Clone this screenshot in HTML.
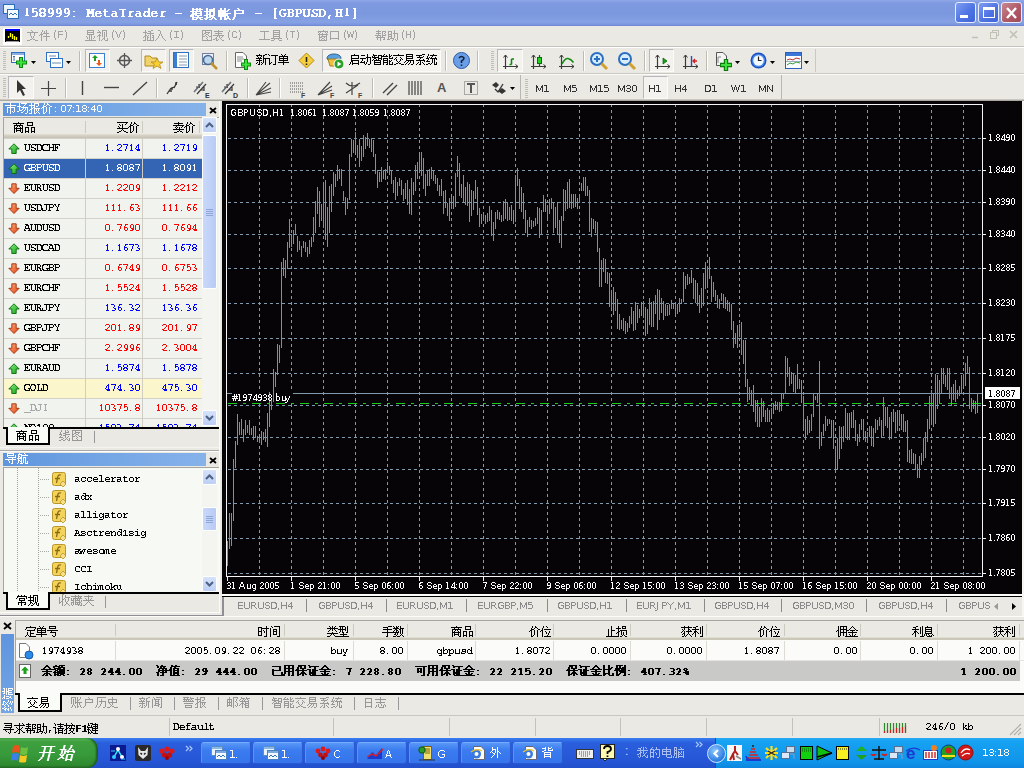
<!DOCTYPE html><html><head><meta charset="utf-8"><title>MetaTrader</title><style>
*{box-sizing:border-box}
body{margin:0;width:1024px;height:768px;overflow:hidden;position:relative;background:#eae9e4;font-family:"Liberation Sans",sans-serif;font-size:11px;color:#000}
.a{position:absolute}
.m{font-family:'Liberation Mono',monospace}
.t{white-space:pre;line-height:1}
</style></head><body>
<div class="a" style="left:0px;top:0px;width:1024px;height:26px;background:linear-gradient(#8ea8e8 0,#7f9ae0 3px,#7b97de 55%,#87a2e4 85%,#7a94dc 96%,#6680d4 100%)"></div>
<svg class="a" style="left:22px;top:4px" width="342" height="21"><path d="M4 4h2v1h-2zM10 4h5v1h-5zM18 4h5v1h-5zM27 4h4v1h-4zM35 4h4v1h-4zM43 4h4v1h-4zM126 4h2v1h-2zM170 4h2v1h-2zM174 4h2v1h-2zM177 4h2v1h-2zM184 4h2v1h-2zM191 4h2v1h-2zM198 4h2v1h-2zM202 4h2v1h-2zM215 4h2v1h-2zM252 4h3v1h-3zM324 4h2v1h-2zM331 4h3v1h-3zM4 5h2v1h-2zM10 5h2v1h-2zM17 5h3v1h-3zM21 5h3v1h-3zM26 5h2v1h-2zM29 5h2v1h-2zM34 5h2v1h-2zM37 5h2v1h-2zM42 5h2v1h-2zM45 5h2v1h-2zM64 5h4v1h-4zM69 5h4v1h-4zM82 5h2v1h-2zM97 5h7v1h-7zM126 5h2v1h-2zM170 5h11v1h-11zM184 5h2v1h-2zM187 5h6v1h-6zM198 5h2v1h-2zM202 5h2v1h-2zM206 5h2v1h-2zM216 5h2v1h-2zM252 5h2v1h-2zM259 5h5v1h-5zM265 5h6v1h-6zM273 5h6v1h-6zM280 5h4v1h-4zM285 5h4v1h-4zM291 5h11v1h-11zM313 5h8v1h-8zM324 5h2v1h-2zM332 5h2v1h-2zM4 6h2v1h-2zM10 6h2v1h-2zM17 6h2v1h-2zM22 6h2v1h-2zM26 6h2v1h-2zM30 6h2v1h-2zM34 6h2v1h-2zM38 6h2v1h-2zM42 6h2v1h-2zM46 6h2v1h-2zM65 6h3v1h-3zM69 6h3v1h-3zM82 6h2v1h-2zM100 6h2v1h-2zM126 6h2v1h-2zM170 6h2v1h-2zM174 6h2v1h-2zM177 6h2v1h-2zM184 6h2v1h-2zM187 6h6v1h-6zM196 6h8v1h-8zM205 6h2v1h-2zM212 6h10v1h-10zM252 6h2v1h-2zM258 6h2v1h-2zM261 6h3v1h-3zM266 6h2v1h-2zM270 6h2v1h-2zM274 6h2v1h-2zM278 6h2v1h-2zM281 6h2v1h-2zM286 6h2v1h-2zM290 6h2v1h-2zM294 6h2v1h-2zM297 6h2v1h-2zM301 6h2v1h-2zM314 6h2v1h-2zM318 6h2v1h-2zM324 6h2v1h-2zM332 6h2v1h-2zM4 7h2v1h-2zM10 7h5v1h-5zM17 7h2v1h-2zM22 7h2v1h-2zM26 7h2v1h-2zM30 7h2v1h-2zM34 7h2v1h-2zM38 7h2v1h-2zM42 7h2v1h-2zM46 7h2v1h-2zM51 7h2v1h-2zM65 7h7v1h-7zM74 7h5v1h-5zM81 7h5v1h-5zM90 7h4v1h-4zM100 7h2v1h-2zM107 7h5v1h-5zM114 7h4v1h-4zM122 7h6v1h-6zM130 7h5v1h-5zM139 7h5v1h-5zM168 7h12v1h-12zM182 7h11v1h-11zM196 7h10v1h-10zM212 7h2v1h-2zM220 7h2v1h-2zM252 7h2v1h-2zM257 7h2v1h-2zM266 7h2v1h-2zM270 7h2v1h-2zM274 7h2v1h-2zM278 7h2v1h-2zM281 7h2v1h-2zM286 7h2v1h-2zM290 7h2v1h-2zM297 7h2v1h-2zM302 7h2v1h-2zM314 7h2v1h-2zM318 7h2v1h-2zM324 7h2v1h-2zM332 7h2v1h-2zM4 8h2v1h-2zM10 8h2v1h-2zM14 8h2v1h-2zM18 8h5v1h-5zM26 8h2v1h-2zM29 8h3v1h-3zM34 8h2v1h-2zM37 8h3v1h-3zM42 8h2v1h-2zM45 8h3v1h-3zM65 8h7v1h-7zM73 8h2v1h-2zM77 8h2v1h-2zM82 8h2v1h-2zM93 8h2v1h-2zM100 8h2v1h-2zM107 8h3v1h-3zM117 8h2v1h-2zM122 8h2v1h-2zM125 8h3v1h-3zM129 8h2v1h-2zM133 8h2v1h-2zM139 8h3v1h-3zM170 8h2v1h-2zM173 8h2v1h-2zM178 8h2v1h-2zM184 8h2v1h-2zM187 8h2v1h-2zM191 8h2v1h-2zM196 8h8v1h-8zM212 8h2v1h-2zM220 8h2v1h-2zM252 8h2v1h-2zM257 8h2v1h-2zM266 8h5v1h-5zM274 8h2v1h-2zM278 8h2v1h-2zM281 8h2v1h-2zM286 8h2v1h-2zM291 8h2v1h-2zM297 8h2v1h-2zM302 8h2v1h-2zM314 8h6v1h-6zM324 8h2v1h-2zM332 8h2v1h-2zM4 9h2v1h-2zM14 9h2v1h-2zM17 9h3v1h-3zM21 9h3v1h-3zM27 9h5v1h-5zM35 9h5v1h-5zM43 9h5v1h-5zM65 9h7v1h-7zM73 9h7v1h-7zM82 9h2v1h-2zM90 9h5v1h-5zM100 9h2v1h-2zM107 9h2v1h-2zM114 9h5v1h-5zM121 9h2v1h-2zM126 9h2v1h-2zM129 9h7v1h-7zM139 9h2v1h-2zM153 9h7v1h-7zM170 9h10v1h-10zM184 9h2v1h-2zM187 9h2v1h-2zM191 9h2v1h-2zM196 9h13v1h-13zM212 9h10v1h-10zM233 9h7v1h-7zM252 9h2v1h-2zM257 9h2v1h-2zM261 9h4v1h-4zM266 9h2v1h-2zM270 9h2v1h-2zM274 9h5v1h-5zM281 9h2v1h-2zM286 9h2v1h-2zM292 9h4v1h-4zM297 9h2v1h-2zM302 9h2v1h-2zM314 9h2v1h-2zM318 9h2v1h-2zM324 9h2v1h-2zM332 9h2v1h-2zM4 10h2v1h-2zM14 10h2v1h-2zM17 10h2v1h-2zM22 10h2v1h-2zM30 10h2v1h-2zM38 10h2v1h-2zM46 10h2v1h-2zM65 10h2v1h-2zM70 10h2v1h-2zM73 10h2v1h-2zM82 10h2v1h-2zM89 10h2v1h-2zM93 10h2v1h-2zM100 10h2v1h-2zM107 10h2v1h-2zM113 10h2v1h-2zM117 10h2v1h-2zM121 10h2v1h-2zM126 10h2v1h-2zM129 10h2v1h-2zM139 10h2v1h-2zM169 10h6v1h-6zM178 10h2v1h-2zM184 10h5v1h-5zM191 10h2v1h-2zM196 10h10v1h-10zM212 10h2v1h-2zM252 10h2v1h-2zM257 10h2v1h-2zM262 10h2v1h-2zM266 10h2v1h-2zM270 10h2v1h-2zM274 10h2v1h-2zM281 10h2v1h-2zM286 10h2v1h-2zM289 10h2v1h-2zM294 10h2v1h-2zM297 10h2v1h-2zM302 10h2v1h-2zM314 10h2v1h-2zM318 10h2v1h-2zM324 10h2v1h-2zM332 10h2v1h-2zM3 11h4v1h-4zM13 11h3v1h-3zM17 11h3v1h-3zM21 11h3v1h-3zM29 11h2v1h-2zM37 11h2v1h-2zM45 11h2v1h-2zM65 11h2v1h-2zM70 11h2v1h-2zM73 11h2v1h-2zM78 11h2v1h-2zM82 11h2v1h-2zM89 11h2v1h-2zM93 11h2v1h-2zM100 11h2v1h-2zM107 11h2v1h-2zM113 11h2v1h-2zM117 11h2v1h-2zM121 11h3v1h-3zM125 11h3v1h-3zM129 11h2v1h-2zM134 11h2v1h-2zM139 11h2v1h-2zM168 11h4v1h-4zM173 11h7v1h-7zM182 11h4v1h-4zM187 11h6v1h-6zM196 11h10v1h-10zM212 11h2v1h-2zM252 11h2v1h-2zM258 11h2v1h-2zM262 11h2v1h-2zM266 11h2v1h-2zM270 11h2v1h-2zM274 11h2v1h-2zM281 11h3v1h-3zM285 11h3v1h-3zM289 11h3v1h-3zM294 11h2v1h-2zM297 11h2v1h-2zM301 11h2v1h-2zM307 11h2v1h-2zM314 11h2v1h-2zM318 11h2v1h-2zM323 11h4v1h-4zM332 11h2v1h-2zM10 12h5v1h-5zM18 12h5v1h-5zM26 12h4v1h-4zM34 12h4v1h-4zM42 12h4v1h-4zM51 12h2v1h-2zM64 12h4v1h-4zM69 12h4v1h-4zM74 12h5v1h-5zM83 12h5v1h-5zM90 12h6v1h-6zM99 12h4v1h-4zM106 12h5v1h-5zM114 12h6v1h-6zM122 12h7v1h-7zM130 12h5v1h-5zM138 12h5v1h-5zM168 12h4v1h-4zM175 12h2v1h-2zM184 12h2v1h-2zM187 12h5v1h-5zM196 12h8v1h-8zM205 12h2v1h-2zM212 12h2v1h-2zM252 12h2v1h-2zM259 12h4v1h-4zM265 12h6v1h-6zM273 12h4v1h-4zM282 12h5v1h-5zM289 12h6v1h-6zM296 12h6v1h-6zM306 12h2v1h-2zM313 12h8v1h-8zM332 12h2v1h-2zM170 13h11v1h-11zM184 13h5v1h-5zM190 13h3v1h-3zM198 13h2v1h-2zM202 13h2v1h-2zM205 13h2v1h-2zM211 13h2v1h-2zM252 13h2v1h-2zM306 13h2v1h-2zM332 13h2v1h-2zM170 14h2v1h-2zM174 14h2v1h-2zM177 14h2v1h-2zM182 14h4v1h-4zM189 14h2v1h-2zM192 14h2v1h-2zM198 14h2v1h-2zM202 14h6v1h-6zM211 14h2v1h-2zM252 14h3v1h-3zM306 14h2v1h-2zM331 14h3v1h-3zM170 15h5v1h-5zM178 15h3v1h-3zM183 15h2v1h-2zM187 15h3v1h-3zM193 15h2v1h-2zM198 15h2v1h-2zM202 15h3v1h-3zM207 15h2v1h-2zM210 15h2v1h-2z" fill="#fff"/></svg>
<svg class="a" style="left:3px;top:4px" width="17" height="17"><rect x="0.5" y="0.5" width="11" height="9" fill="#e8f4ff" stroke="#2a6fb8"/><rect x="4.5" y="5.5" width="11" height="9" fill="#f4faff" stroke="#2a6fb8"/><path d="M6 11L8 9L10 11L12 9L14 11" stroke="#2a6fb8" fill="none"/></svg>
<div class="a" style="left:955px;top:2px;width:21px;height:21px;border:1px solid #e8eeff;border-radius:3px;background:linear-gradient(135deg,#7f9ef0,#4f74e4 55%,#3f64d8)"></div>
<div class="a" style="left:978px;top:2px;width:21px;height:21px;border:1px solid #e8eeff;border-radius:3px;background:linear-gradient(135deg,#7f9ef0,#4f74e4 55%,#3f64d8)"></div>
<div class="a" style="left:1001px;top:2px;width:21px;height:21px;border:1px solid #e8eeff;border-radius:3px;background:linear-gradient(135deg,#c88890,#b05a68 55%,#a04a5a)"></div>
<div class="a" style="left:960px;top:15px;width:8px;height:3px;background:#fff"></div>
<div class="a" style="left:983px;top:7px;width:12px;height:11px;border:1px solid #fff;border-top:3px solid #fff"></div>
<svg class="a" style="left:1001px;top:2px" width="21" height="21"><path d="M6 6L15 16M15 6L6 16" stroke="#fff" stroke-width="2.4"/></svg>
<div class="a" style="left:0px;top:26px;width:1024px;height:20px;background:#eae9e4"></div>
<div class="a" style="left:3px;top:28px;width:19px;height:17px;background:#fff"></div>
<div class="a" style="left:5px;top:29px;width:15px;height:13px;background:#000;border-top:2px solid #0000ff"></div>
<svg class="a" style="left:5px;top:29px" width="15" height="13"><path d="M3.5 9V7M5.5 8V4M7.5 10V5M9.5 11V7M11.5 11V8" stroke="#ff0" stroke-width="1.3"/><path d="M1 12.5H14" stroke="#999"/></svg>
<svg class="a" style="left:27px;top:26px" width="46" height="20"><path d="M4 4h1v1h-1zM15 4h1v1h-1zM19 4h1v1h-1zM28 4h1v1h-1zM38 4h1v1h-1zM5 5h1v1h-1zM15 5h1v1h-1zM17 5h1v1h-1zM19 5h1v1h-1zM28 5h1v1h-1zM31 5h5v1h-5zM38 5h1v1h-1zM0 6h11v1h-11zM14 6h1v1h-1zM17 6h1v1h-1zM19 6h1v1h-1zM27 6h1v1h-1zM31 6h1v1h-1zM39 6h1v1h-1zM3 7h1v1h-1zM7 7h1v1h-1zM14 7h1v1h-1zM16 7h6v1h-6zM27 7h1v1h-1zM31 7h1v1h-1zM39 7h1v1h-1zM3 8h1v1h-1zM7 8h1v1h-1zM13 8h3v1h-3zM19 8h1v1h-1zM27 8h1v1h-1zM31 8h5v1h-5zM39 8h1v1h-1zM3 9h1v1h-1zM7 9h1v1h-1zM12 9h1v1h-1zM14 9h1v1h-1zM19 9h1v1h-1zM27 9h1v1h-1zM31 9h1v1h-1zM39 9h1v1h-1zM4 10h1v1h-1zM6 10h1v1h-1zM14 10h1v1h-1zM16 10h7v1h-7zM27 10h1v1h-1zM31 10h1v1h-1zM39 10h1v1h-1zM4 11h1v1h-1zM6 11h1v1h-1zM14 11h1v1h-1zM19 11h1v1h-1zM27 11h1v1h-1zM31 11h1v1h-1zM39 11h1v1h-1zM5 12h1v1h-1zM14 12h1v1h-1zM19 12h1v1h-1zM28 12h1v1h-1zM38 12h1v1h-1zM3 13h2v1h-2zM6 13h2v1h-2zM14 13h1v1h-1zM19 13h1v1h-1zM28 13h1v1h-1zM38 13h1v1h-1zM0 14h3v1h-3zM8 14h3v1h-3zM14 14h1v1h-1zM19 14h1v1h-1z" fill="#a2a2a2"/></svg>
<svg class="a" style="left:85px;top:26px" width="46" height="20"><path d="M2 4h7v1h-7zM13 4h1v1h-1zM17 4h5v1h-5zM28 4h1v1h-1zM38 4h1v1h-1zM2 5h1v1h-1zM8 5h1v1h-1zM14 5h1v1h-1zM17 5h1v1h-1zM21 5h1v1h-1zM28 5h1v1h-1zM30 5h1v1h-1zM36 5h1v1h-1zM38 5h1v1h-1zM2 6h7v1h-7zM12 6h4v1h-4zM17 6h1v1h-1zM19 6h1v1h-1zM21 6h1v1h-1zM27 6h1v1h-1zM31 6h1v1h-1zM35 6h1v1h-1zM39 6h1v1h-1zM2 7h1v1h-1zM8 7h1v1h-1zM15 7h1v1h-1zM17 7h1v1h-1zM19 7h1v1h-1zM21 7h1v1h-1zM27 7h1v1h-1zM31 7h1v1h-1zM35 7h1v1h-1zM39 7h1v1h-1zM2 8h7v1h-7zM14 8h1v1h-1zM17 8h1v1h-1zM19 8h1v1h-1zM21 8h1v1h-1zM27 8h1v1h-1zM32 8h1v1h-1zM34 8h1v1h-1zM39 8h1v1h-1zM4 9h1v1h-1zM6 9h1v1h-1zM13 9h3v1h-3zM17 9h1v1h-1zM19 9h1v1h-1zM21 9h1v1h-1zM27 9h1v1h-1zM32 9h1v1h-1zM34 9h1v1h-1zM39 9h1v1h-1zM1 10h1v1h-1zM4 10h1v1h-1zM6 10h1v1h-1zM9 10h1v1h-1zM12 10h1v1h-1zM14 10h1v1h-1zM17 10h1v1h-1zM19 10h1v1h-1zM21 10h1v1h-1zM27 10h1v1h-1zM32 10h1v1h-1zM34 10h1v1h-1zM39 10h1v1h-1zM2 11h1v1h-1zM4 11h1v1h-1zM6 11h1v1h-1zM9 11h1v1h-1zM14 11h1v1h-1zM19 11h1v1h-1zM27 11h1v1h-1zM33 11h1v1h-1zM39 11h1v1h-1zM2 12h1v1h-1zM4 12h1v1h-1zM6 12h1v1h-1zM8 12h1v1h-1zM14 12h1v1h-1zM18 12h2v1h-2zM22 12h1v1h-1zM28 12h1v1h-1zM38 12h1v1h-1zM4 13h1v1h-1zM6 13h1v1h-1zM14 13h1v1h-1zM17 13h1v1h-1zM19 13h1v1h-1zM22 13h1v1h-1zM28 13h1v1h-1zM38 13h1v1h-1zM0 14h11v1h-11zM14 14h1v1h-1zM16 14h1v1h-1zM20 14h3v1h-3z" fill="#a2a2a2"/></svg>
<svg class="a" style="left:143px;top:26px" width="46" height="20"><path d="M2 4h1v1h-1zM8 4h2v1h-2zM15 4h2v1h-2zM28 4h1v1h-1zM38 4h1v1h-1zM2 5h1v1h-1zM5 5h3v1h-3zM17 5h1v1h-1zM28 5h1v1h-1zM31 5h5v1h-5zM38 5h1v1h-1zM0 6h4v1h-4zM7 6h1v1h-1zM17 6h1v1h-1zM27 6h1v1h-1zM33 6h1v1h-1zM39 6h1v1h-1zM2 7h1v1h-1zM4 7h7v1h-7zM17 7h1v1h-1zM27 7h1v1h-1zM33 7h1v1h-1zM39 7h1v1h-1zM2 8h1v1h-1zM7 8h1v1h-1zM16 8h1v1h-1zM18 8h1v1h-1zM27 8h1v1h-1zM33 8h1v1h-1zM39 8h1v1h-1zM2 9h2v1h-2zM5 9h1v1h-1zM7 9h1v1h-1zM9 9h2v1h-2zM16 9h1v1h-1zM18 9h1v1h-1zM27 9h1v1h-1zM33 9h1v1h-1zM39 9h1v1h-1zM1 10h2v1h-2zM4 10h1v1h-1zM7 10h1v1h-1zM10 10h1v1h-1zM15 10h1v1h-1zM19 10h1v1h-1zM27 10h1v1h-1zM33 10h1v1h-1zM39 10h1v1h-1zM0 11h1v1h-1zM2 11h1v1h-1zM4 11h2v1h-2zM7 11h1v1h-1zM9 11h2v1h-2zM15 11h1v1h-1zM19 11h1v1h-1zM27 11h1v1h-1zM31 11h5v1h-5zM39 11h1v1h-1zM2 12h1v1h-1zM4 12h1v1h-1zM7 12h1v1h-1zM10 12h1v1h-1zM14 12h1v1h-1zM20 12h1v1h-1zM28 12h1v1h-1zM38 12h1v1h-1zM2 13h1v1h-1zM4 13h1v1h-1zM7 13h1v1h-1zM10 13h1v1h-1zM13 13h1v1h-1zM21 13h1v1h-1zM28 13h1v1h-1zM38 13h1v1h-1zM0 14h3v1h-3zM4 14h7v1h-7zM12 14h1v1h-1zM22 14h1v1h-1z" fill="#a2a2a2"/></svg>
<svg class="a" style="left:201px;top:26px" width="46" height="20"><path d="M1 4h10v1h-10zM17 4h1v1h-1zM28 4h1v1h-1zM38 4h1v1h-1zM1 5h1v1h-1zM4 5h1v1h-1zM10 5h1v1h-1zM13 5h9v1h-9zM28 5h1v1h-1zM32 5h3v1h-3zM38 5h1v1h-1zM1 6h1v1h-1zM4 6h5v1h-5zM10 6h1v1h-1zM17 6h1v1h-1zM27 6h1v1h-1zM31 6h1v1h-1zM35 6h1v1h-1zM39 6h1v1h-1zM1 7h1v1h-1zM3 7h2v1h-2zM7 7h1v1h-1zM10 7h1v1h-1zM14 7h7v1h-7zM27 7h1v1h-1zM31 7h1v1h-1zM39 7h1v1h-1zM1 8h2v1h-2zM5 8h2v1h-2zM10 8h1v1h-1zM17 8h1v1h-1zM27 8h1v1h-1zM31 8h1v1h-1zM39 8h1v1h-1zM1 9h1v1h-1zM4 9h1v1h-1zM7 9h1v1h-1zM10 9h1v1h-1zM12 9h11v1h-11zM27 9h1v1h-1zM31 9h1v1h-1zM39 9h1v1h-1zM1 10h3v1h-3zM5 10h1v1h-1zM8 10h3v1h-3zM16 10h1v1h-1zM18 10h1v1h-1zM21 10h1v1h-1zM27 10h1v1h-1zM31 10h1v1h-1zM35 10h1v1h-1zM39 10h1v1h-1zM1 11h1v1h-1zM6 11h1v1h-1zM10 11h1v1h-1zM15 11h1v1h-1zM18 11h1v1h-1zM20 11h1v1h-1zM27 11h1v1h-1zM32 11h4v1h-4zM39 11h1v1h-1zM1 12h1v1h-1zM5 12h1v1h-1zM10 12h1v1h-1zM14 12h2v1h-2zM19 12h1v1h-1zM28 12h1v1h-1zM38 12h1v1h-1zM1 13h1v1h-1zM6 13h1v1h-1zM10 13h1v1h-1zM12 13h2v1h-2zM15 13h1v1h-1zM17 13h1v1h-1zM20 13h1v1h-1zM28 13h1v1h-1zM38 13h1v1h-1zM1 14h10v1h-10zM15 14h2v1h-2zM21 14h2v1h-2z" fill="#a2a2a2"/></svg>
<svg class="a" style="left:259px;top:26px" width="46" height="20"><path d="M14 4h7v1h-7zM28 4h1v1h-1zM38 4h1v1h-1zM1 5h9v1h-9zM14 5h1v1h-1zM20 5h1v1h-1zM28 5h1v1h-1zM31 5h5v1h-5zM38 5h1v1h-1zM5 6h1v1h-1zM14 6h7v1h-7zM27 6h1v1h-1zM33 6h1v1h-1zM39 6h1v1h-1zM5 7h1v1h-1zM14 7h1v1h-1zM20 7h1v1h-1zM27 7h1v1h-1zM33 7h1v1h-1zM39 7h1v1h-1zM5 8h1v1h-1zM14 8h7v1h-7zM27 8h1v1h-1zM33 8h1v1h-1zM39 8h1v1h-1zM5 9h1v1h-1zM14 9h1v1h-1zM20 9h1v1h-1zM27 9h1v1h-1zM33 9h1v1h-1zM39 9h1v1h-1zM5 10h1v1h-1zM14 10h7v1h-7zM27 10h1v1h-1zM33 10h1v1h-1zM39 10h1v1h-1zM5 11h1v1h-1zM14 11h1v1h-1zM20 11h1v1h-1zM27 11h1v1h-1zM33 11h1v1h-1zM39 11h1v1h-1zM5 12h1v1h-1zM12 12h11v1h-11zM28 12h1v1h-1zM38 12h1v1h-1zM0 13h11v1h-11zM15 13h1v1h-1zM19 13h1v1h-1zM28 13h1v1h-1zM38 13h1v1h-1zM12 14h3v1h-3zM20 14h3v1h-3z" fill="#a2a2a2"/></svg>
<svg class="a" style="left:317px;top:26px" width="46" height="20"><path d="M6 4h1v1h-1zM28 4h1v1h-1zM38 4h1v1h-1zM1 5h10v1h-10zM13 5h9v1h-9zM28 5h1v1h-1zM30 5h1v1h-1zM36 5h1v1h-1zM38 5h1v1h-1zM1 6h1v1h-1zM3 6h1v1h-1zM8 6h1v1h-1zM10 6h1v1h-1zM13 6h1v1h-1zM21 6h1v1h-1zM27 6h1v1h-1zM30 6h1v1h-1zM33 6h1v1h-1zM36 6h1v1h-1zM39 6h1v1h-1zM2 7h1v1h-1zM5 7h1v1h-1zM9 7h1v1h-1zM13 7h1v1h-1zM21 7h1v1h-1zM27 7h1v1h-1zM30 7h1v1h-1zM33 7h1v1h-1zM36 7h1v1h-1zM39 7h1v1h-1zM1 8h10v1h-10zM13 8h1v1h-1zM21 8h1v1h-1zM27 8h1v1h-1zM31 8h2v1h-2zM34 8h2v1h-2zM39 8h1v1h-1zM2 9h1v1h-1zM5 9h1v1h-1zM9 9h1v1h-1zM13 9h1v1h-1zM21 9h1v1h-1zM27 9h1v1h-1zM31 9h2v1h-2zM34 9h2v1h-2zM39 9h1v1h-1zM2 10h1v1h-1zM4 10h6v1h-6zM13 10h1v1h-1zM21 10h1v1h-1zM27 10h1v1h-1zM31 10h2v1h-2zM34 10h2v1h-2zM39 10h1v1h-1zM2 11h3v1h-3zM7 11h1v1h-1zM9 11h1v1h-1zM13 11h1v1h-1zM21 11h1v1h-1zM27 11h1v1h-1zM31 11h1v1h-1zM35 11h1v1h-1zM39 11h1v1h-1zM2 12h1v1h-1zM5 12h2v1h-2zM9 12h1v1h-1zM13 12h9v1h-9zM28 12h1v1h-1zM38 12h1v1h-1zM2 13h1v1h-1zM4 13h1v1h-1zM7 13h1v1h-1zM9 13h1v1h-1zM13 13h1v1h-1zM21 13h1v1h-1zM28 13h1v1h-1zM38 13h1v1h-1zM2 14h8v1h-8z" fill="#a2a2a2"/></svg>
<svg class="a" style="left:375px;top:26px" width="46" height="20"><path d="M3 4h1v1h-1zM19 4h1v1h-1zM28 4h1v1h-1zM38 4h1v1h-1zM1 5h5v1h-5zM7 5h4v1h-4zM13 5h4v1h-4zM19 5h1v1h-1zM28 5h1v1h-1zM31 5h1v1h-1zM35 5h1v1h-1zM38 5h1v1h-1zM3 6h1v1h-1zM7 6h1v1h-1zM10 6h1v1h-1zM13 6h1v1h-1zM16 6h1v1h-1zM19 6h1v1h-1zM27 6h1v1h-1zM31 6h1v1h-1zM35 6h1v1h-1zM39 6h1v1h-1zM1 7h5v1h-5zM7 7h1v1h-1zM9 7h1v1h-1zM13 7h1v1h-1zM16 7h1v1h-1zM18 7h5v1h-5zM27 7h1v1h-1zM31 7h1v1h-1zM35 7h1v1h-1zM39 7h1v1h-1zM3 8h1v1h-1zM7 8h1v1h-1zM10 8h1v1h-1zM13 8h4v1h-4zM19 8h1v1h-1zM22 8h1v1h-1zM27 8h1v1h-1zM31 8h5v1h-5zM39 8h1v1h-1zM0 9h6v1h-6zM7 9h4v1h-4zM13 9h1v1h-1zM16 9h1v1h-1zM19 9h1v1h-1zM22 9h1v1h-1zM27 9h1v1h-1zM31 9h1v1h-1zM35 9h1v1h-1zM39 9h1v1h-1zM2 10h1v1h-1zM5 10h1v1h-1zM7 10h1v1h-1zM13 10h4v1h-4zM19 10h1v1h-1zM22 10h1v1h-1zM27 10h1v1h-1zM31 10h1v1h-1zM35 10h1v1h-1zM39 10h1v1h-1zM1 11h9v1h-9zM13 11h1v1h-1zM16 11h1v1h-1zM19 11h1v1h-1zM22 11h1v1h-1zM27 11h1v1h-1zM31 11h1v1h-1zM35 11h1v1h-1zM39 11h1v1h-1zM2 12h1v1h-1zM5 12h1v1h-1zM9 12h1v1h-1zM13 12h1v1h-1zM15 12h4v1h-4zM22 12h1v1h-1zM28 12h1v1h-1zM38 12h1v1h-1zM2 13h1v1h-1zM5 13h1v1h-1zM8 13h2v1h-2zM12 13h3v1h-3zM18 13h1v1h-1zM20 13h1v1h-1zM22 13h1v1h-1zM28 13h1v1h-1zM38 13h1v1h-1zM5 14h1v1h-1zM17 14h1v1h-1zM21 14h1v1h-1z" fill="#a2a2a2"/></svg>
<svg class="a" style="left:960px;top:28px" width="64" height="14"><path d="M12 9.5H18" stroke="#c2c0b4" stroke-width="1.5"/><rect x="32.5" y="2.5" width="6" height="5" fill="none" stroke="#c2c0b4"/><rect x="30.5" y="4.5" width="6" height="6" fill="#eae9e4" stroke="#c2c0b4"/><path d="M50 3L57 10M57 3L50 10" stroke="#c2c0b4" stroke-width="1.6"/></svg>
<div class="a" style="left:0px;top:46px;width:1024px;height:1px;background:#c5c3bb"></div>
<div class="a" style="left:0px;top:47px;width:1024px;height:1px;background:#fff"></div>
<div class="a" style="left:0px;top:48px;width:1024px;height:25px;background:#eae9e4"></div>
<div class="a" style="left:0px;top:73px;width:1024px;height:1px;background:#cac8c0"></div>
<div class="a" style="left:0px;top:74px;width:1024px;height:1px;background:#fbfbf9"></div>
<div class="a" style="left:0px;top:75px;width:1024px;height:24px;background:#eae9e4"></div>
<div class="a" style="left:0px;top:99px;width:1024px;height:1px;background:#cac8c0"></div>
<div class="a" style="left:0px;top:100px;width:1024px;height:1px;background:#a9a79f"></div>
<svg class="a" style="left:3px;top:50px" width="4" height="20"><path d="M0 1.5H3M0 3.5H3M0 5.5H3M0 7.5H3M0 9.5H3M0 11.5H3M0 13.5H3M0 15.5H3M0 17.5H3M0 19.5H3" stroke="#c0bfb6" stroke-width="1"/></svg>
<svg class="a" style="left:11px;top:52px" width="18" height="17"><rect x="0.5" y="0.5" width="13" height="10" fill="#fff" stroke="#2f6fc4"/><rect x="1" y="1" width="12" height="2" fill="#8ab0e0"/><path d="M3 4V9M2 5L3 4L4 5" stroke="#4a6fa0" stroke-width="1" fill="none"/><path d="M10 5V16M5 10.5H16" stroke="#0a8a0a" stroke-width="4"/><path d="M10 6V15M6 10.5H15" stroke="#3ee23e" stroke-width="2"/></svg>
<svg class="a" style="left:31px;top:61px" width="6" height="4"><path d="M0 0H5L2.5 3Z" fill="#000"/></svg>
<svg class="a" style="left:46px;top:52px" width="18" height="17"><rect x="0.5" y="0.5" width="12" height="9" fill="#fff" stroke="#2f6fc4"/><rect x="4.5" y="6.5" width="12" height="9" fill="#fff" stroke="#2f6fc4"/><path d="M6 11H15M3 4H10" stroke="#6a8ab0"/></svg>
<svg class="a" style="left:66px;top:61px" width="6" height="4"><path d="M0 0H5L2.5 3Z" fill="#000"/></svg>
<div class="a" style="left:79px;top:51px;width:1px;height:20px;background:#bdbcb4"></div>
<div class="a" style="left:80px;top:51px;width:1px;height:20px;background:#fff"></div>
<div class="a" style="left:85px;top:49px;width:25px;height:23px;background:#f3f2ee;border:1px solid #b8b7be;border-right-color:#fbfbf8;border-bottom-color:#fbfbf8"></div>
<svg class="a" style="left:89px;top:53px" width="17" height="16"><rect x="0.5" y="0.5" width="15" height="14" fill="#fff" stroke="#3c7ed0"/><path d="M6 2L9 5H7V8H5V5H3Z" fill="#1aa01a"/><path d="M10 13L13 10H11V7H9V10H7Z" fill="#e85a20"/></svg>
<svg class="a" style="left:116px;top:52px" width="17" height="17"><circle cx="8.5" cy="8.5" r="5" fill="none" stroke="#555" stroke-width="1.5"/><path d="M8.5 1V16M1 8.5H16" stroke="#555" stroke-width="1.3"/></svg>
<div class="a" style="left:141px;top:49px;width:25px;height:23px;background:#f3f2ee;border:1px solid #b8b7be;border-right-color:#fbfbf8;border-bottom-color:#fbfbf8"></div>
<svg class="a" style="left:144px;top:52px" width="20" height="18"><path d="M1 4H6L8 6H13V14H1Z" fill="#f2d36a" stroke="#b08a20"/><path d="M13 6L14.8 10H19L15.6 12.4L17 16.5L13 14L9 16.5L10.4 12.4L7 10H11.2Z" fill="#f8d030" stroke="#b08a20" stroke-width="0.8"/></svg>
<div class="a" style="left:169px;top:49px;width:25px;height:23px;background:#f3f2ee;border:1px solid #b8b7be;border-right-color:#fbfbf8;border-bottom-color:#fbfbf8"></div>
<svg class="a" style="left:173px;top:52px" width="17" height="17"><rect x="0.5" y="0.5" width="15" height="15" fill="#fff" stroke="#2f6fc4"/><rect x="1" y="1" width="3" height="14" fill="#3c7ed0"/><path d="M6 4H14M6 7H14M6 10H14M6 13H14" stroke="#8a9ab0"/></svg>
<svg class="a" style="left:200px;top:51px" width="20" height="20"><rect x="2.5" y="2.5" width="11" height="11" fill="#eef" stroke="#7080a0"/><circle cx="8" cy="9" r="4.5" fill="#bcd8f0" stroke="#4a6a90" stroke-width="1.5"/><path d="M11 12L17 18" stroke="#c09030" stroke-width="2.5"/></svg>
<div class="a" style="left:226px;top:51px;width:1px;height:20px;background:#bdbcb4"></div>
<div class="a" style="left:227px;top:51px;width:1px;height:20px;background:#fff"></div>
<svg class="a" style="left:234px;top:51px" width="18" height="20"><path d="M1.5 1.5H9L12.5 5V16.5H1.5Z" fill="#fff" stroke="#666"/><path d="M3 6H9M3 8H10M3 10H8" stroke="#888"/><path d="M12 8V19M7 13.5H17" stroke="#0a8a0a" stroke-width="4"/><path d="M12 9V18M8 13.5H16" stroke="#3ee23e" stroke-width="2"/></svg>
<svg class="a" style="left:256px;top:50px" width="39" height="20"><path d="M3 4h1v1h-1zM9 4h2v1h-2zM12 4h1v1h-1zM25 4h1v1h-1zM29 4h1v1h-1zM0 5h6v1h-6zM7 5h2v1h-2zM13 5h1v1h-1zM15 5h7v1h-7zM26 5h1v1h-1zM28 5h1v1h-1zM1 6h1v1h-1zM5 6h1v1h-1zM7 6h1v1h-1zM19 6h1v1h-1zM23 6h9v1h-9zM2 7h1v1h-1zM4 7h1v1h-1zM7 7h1v1h-1zM19 7h1v1h-1zM23 7h1v1h-1zM27 7h1v1h-1zM31 7h1v1h-1zM0 8h6v1h-6zM7 8h7v1h-7zM19 8h1v1h-1zM23 8h9v1h-9zM3 9h1v1h-1zM7 9h1v1h-1zM9 9h1v1h-1zM13 9h1v1h-1zM19 9h1v1h-1zM23 9h1v1h-1zM27 9h1v1h-1zM31 9h1v1h-1zM0 10h6v1h-6zM7 10h1v1h-1zM9 10h1v1h-1zM13 10h1v1h-1zM19 10h1v1h-1zM23 10h9v1h-9zM3 11h1v1h-1zM7 11h1v1h-1zM9 11h1v1h-1zM13 11h1v1h-1zM19 11h1v1h-1zM27 11h1v1h-1zM1 12h1v1h-1zM3 12h1v1h-1zM5 12h1v1h-1zM7 12h1v1h-1zM9 12h1v1h-1zM13 12h1v1h-1zM15 12h1v1h-1zM19 12h1v1h-1zM22 12h11v1h-11zM0 13h1v1h-1zM3 13h1v1h-1zM6 13h1v1h-1zM9 13h1v1h-1zM13 13h2v1h-2zM19 13h1v1h-1zM27 13h1v1h-1zM2 14h2v1h-2zM5 14h1v1h-1zM9 14h1v1h-1zM13 14h1v1h-1zM17 14h3v1h-3zM27 14h1v1h-1z" fill="#000"/></svg>
<svg class="a" style="left:298px;top:52px" width="17" height="17"><path d="M8.5 1L16 8.5L8.5 16L1 8.5Z" fill="#f7cf3c" stroke="#b08a10"/><path d="M8.5 5V10M8.5 11.5V13" stroke="#222" stroke-width="1.6"/></svg>
<div class="a" style="left:322px;top:49px;width:119px;height:23px;background:#f3f2ee;border:1px solid #b8b7be;border-right-color:#fbfbf8;border-bottom-color:#fbfbf8"></div>
<svg class="a" style="left:326px;top:51px" width="19" height="19"><ellipse cx="8" cy="7" rx="7" ry="4" fill="#5aa0e0" stroke="#2a6090"/><path d="M2 8L4 15H12L14 8Z" fill="#f0c040" stroke="#a08020"/><circle cx="13" cy="13" r="5" fill="#2aa02a" stroke="#fff"/><path d="M11.5 10.5V15.5L15.5 13Z" fill="#fff"/></svg>
<svg class="a" style="left:349px;top:50px" width="94" height="20"><path d="M5 4h1v1h-1zM18 4h1v1h-1zM24 4h1v1h-1zM35 4h1v1h-1zM40 4h1v1h-1zM49 4h1v1h-1zM57 4h7v1h-7zM73 4h3v1h-3zM79 4h1v1h-1zM84 4h1v1h-1zM2 5h8v1h-8zM12 5h4v1h-4zM18 5h1v1h-1zM24 5h4v1h-4zM29 5h4v1h-4zM34 5h1v1h-1zM37 5h1v1h-1zM40 5h1v1h-1zM42 5h1v1h-1zM44 5h11v1h-11zM57 5h1v1h-1zM63 5h1v1h-1zM67 5h6v1h-6zM79 5h1v1h-1zM81 5h7v1h-7zM2 6h1v1h-1zM9 6h1v1h-1zM18 6h1v1h-1zM23 6h1v1h-1zM25 6h1v1h-1zM29 6h1v1h-1zM32 6h7v1h-7zM40 6h2v1h-2zM57 6h7v1h-7zM70 6h1v1h-1zM74 6h1v1h-1zM78 6h1v1h-1zM83 6h1v1h-1zM2 7h1v1h-1zM9 7h1v1h-1zM17 7h5v1h-5zM23 7h7v1h-7zM32 7h1v1h-1zM40 7h1v1h-1zM43 7h1v1h-1zM47 7h1v1h-1zM51 7h1v1h-1zM57 7h1v1h-1zM63 7h1v1h-1zM68 7h6v1h-6zM78 7h1v1h-1zM80 7h1v1h-1zM82 7h1v1h-1zM86 7h1v1h-1zM2 8h8v1h-8zM11 8h6v1h-6zM18 8h1v1h-1zM21 8h1v1h-1zM25 8h2v1h-2zM29 8h4v1h-4zM34 8h5v1h-5zM40 8h4v1h-4zM46 8h1v1h-1zM52 8h1v1h-1zM57 8h7v1h-7zM71 8h1v1h-1zM77 8h3v1h-3zM81 8h7v1h-7zM2 9h1v1h-1zM13 9h1v1h-1zM18 9h1v1h-1zM21 9h1v1h-1zM24 9h1v1h-1zM27 9h1v1h-1zM29 9h1v1h-1zM32 9h1v1h-1zM34 9h1v1h-1zM38 9h1v1h-1zM45 9h1v1h-1zM47 9h1v1h-1zM51 9h1v1h-1zM53 9h1v1h-1zM57 9h1v1h-1zM70 9h1v1h-1zM74 9h1v1h-1zM79 9h1v1h-1zM83 9h1v1h-1zM85 9h1v1h-1zM87 9h1v1h-1zM2 10h8v1h-8zM13 10h1v1h-1zM18 10h1v1h-1zM21 10h1v1h-1zM23 10h1v1h-1zM25 10h7v1h-7zM34 10h5v1h-5zM40 10h1v1h-1zM42 10h1v1h-1zM47 10h1v1h-1zM51 10h1v1h-1zM57 10h8v1h-8zM67 10h9v1h-9zM78 10h1v1h-1zM83 10h1v1h-1zM85 10h1v1h-1zM2 11h2v1h-2zM9 11h1v1h-1zM12 11h1v1h-1zM15 11h1v1h-1zM18 11h1v1h-1zM21 11h1v1h-1zM25 11h1v1h-1zM31 11h1v1h-1zM34 11h1v1h-1zM38 11h1v1h-1zM40 11h2v1h-2zM48 11h1v1h-1zM50 11h1v1h-1zM56 11h1v1h-1zM59 11h1v1h-1zM61 11h1v1h-1zM64 11h1v1h-1zM71 11h1v1h-1zM75 11h1v1h-1zM77 11h4v1h-4zM83 11h1v1h-1zM85 11h1v1h-1zM1 12h1v1h-1zM3 12h1v1h-1zM9 12h1v1h-1zM11 12h5v1h-5zM17 12h1v1h-1zM21 12h1v1h-1zM25 12h7v1h-7zM34 12h5v1h-5zM40 12h1v1h-1zM43 12h1v1h-1zM49 12h1v1h-1zM55 12h1v1h-1zM58 12h1v1h-1zM61 12h1v1h-1zM64 12h1v1h-1zM69 12h1v1h-1zM71 12h1v1h-1zM73 12h1v1h-1zM83 12h1v1h-1zM85 12h1v1h-1zM87 12h1v1h-1zM1 13h1v1h-1zM3 13h7v1h-7zM15 13h1v1h-1zM17 13h1v1h-1zM21 13h1v1h-1zM25 13h1v1h-1zM31 13h1v1h-1zM34 13h1v1h-1zM38 13h1v1h-1zM40 13h1v1h-1zM43 13h1v1h-1zM47 13h2v1h-2zM50 13h2v1h-2zM57 13h1v1h-1zM60 13h1v1h-1zM64 13h1v1h-1zM68 13h1v1h-1zM71 13h1v1h-1zM74 13h1v1h-1zM79 13h2v1h-2zM82 13h1v1h-1zM85 13h1v1h-1zM87 13h1v1h-1zM0 14h1v1h-1zM3 14h1v1h-1zM9 14h1v1h-1zM16 14h1v1h-1zM19 14h2v1h-2zM25 14h7v1h-7zM34 14h1v1h-1zM37 14h2v1h-2zM40 14h4v1h-4zM45 14h2v1h-2zM52 14h3v1h-3zM56 14h1v1h-1zM59 14h1v1h-1zM62 14h2v1h-2zM67 14h1v1h-1zM70 14h2v1h-2zM75 14h1v1h-1zM77 14h2v1h-2zM81 14h1v1h-1zM85 14h3v1h-3z" fill="#000"/></svg>
<div class="a" style="left:445px;top:51px;width:1px;height:20px;background:#bdbcb4"></div>
<div class="a" style="left:446px;top:51px;width:1px;height:20px;background:#fff"></div>
<svg class="a" style="left:452px;top:51px" width="19" height="19"><circle cx="9.5" cy="9.5" r="8" fill="#6a9ee8" stroke="#2a5aa8"/><path d="M7 7Q9.5 4 12 7Q12 9 9.5 10V12" fill="none" stroke="#123" stroke-width="1.6"/><path d="M9.5 13.5V15" stroke="#123" stroke-width="1.6"/></svg>
<div class="a" style="left:477px;top:51px;width:1px;height:20px;background:#bdbcb4"></div>
<div class="a" style="left:478px;top:51px;width:1px;height:20px;background:#fff"></div>
<svg class="a" style="left:491px;top:50px" width="4" height="20"><path d="M0 1.5H3M0 3.5H3M0 5.5H3M0 7.5H3M0 9.5H3M0 11.5H3M0 13.5H3M0 15.5H3M0 17.5H3M0 19.5H3" stroke="#c0bfb6" stroke-width="1"/></svg>
<div class="a" style="left:497px;top:49px;width:26px;height:23px;background:#f3f2ee;border:1px solid #b8b7be;border-right-color:#fbfbf8;border-bottom-color:#fbfbf8"></div>
<svg class="a" style="left:502px;top:54px" width="17" height="16"><path d="M3.5 1V15M1 12.5H16" stroke="#3a3a3a" stroke-width="1.2" fill="none"/><path d="M1.5 3.5L3.5 1L5.5 3.5M13.5 10.5L16 12.5L13.5 14.5" stroke="#3a3a3a" stroke-width="1" fill="none"/><path d="M9.5 5V10.5M9.5 10.5H7.5M9.5 5H12" stroke="#0a8a0a" stroke-width="1.6" fill="none"/></svg>
<svg class="a" style="left:530px;top:54px" width="17" height="16"><path d="M3.5 1V15M1 12.5H16" stroke="#3a3a3a" stroke-width="1.2" fill="none"/><path d="M1.5 3.5L3.5 1L5.5 3.5M13.5 10.5L16 12.5L13.5 14.5" stroke="#3a3a3a" stroke-width="1" fill="none"/><path d="M9.5 1V12" stroke="#0a6a0a" stroke-width="1.2"/><rect x="7.5" y="3.5" width="4" height="6" fill="#22d022" stroke="#0a6a0a"/></svg>
<svg class="a" style="left:558px;top:54px" width="17" height="16"><path d="M3.5 1V15M1 12.5H16" stroke="#3a3a3a" stroke-width="1.2" fill="none"/><path d="M1.5 3.5L3.5 1L5.5 3.5M13.5 10.5L16 12.5L13.5 14.5" stroke="#3a3a3a" stroke-width="1" fill="none"/><path d="M4 10Q7 4 10 4.5T15.5 8.5" stroke="#108a10" stroke-width="1.5" fill="none"/></svg>
<div class="a" style="left:583px;top:51px;width:1px;height:20px;background:#bdbcb4"></div>
<div class="a" style="left:584px;top:51px;width:1px;height:20px;background:#fff"></div>
<svg class="a" style="left:589px;top:51px" width="21" height="21"><circle cx="8" cy="8" r="6" fill="#d8ecff" stroke="#2a70c0" stroke-width="2"/><path d="M5 8H11M8 5V11" stroke="#2a70c0" stroke-width="2"/><path d="M12.5 12.5L18 18" stroke="#d0a030" stroke-width="3"/></svg>
<svg class="a" style="left:617px;top:51px" width="21" height="21"><circle cx="8" cy="8" r="6" fill="#d8ecff" stroke="#2a70c0" stroke-width="2"/><path d="M5 8H11" stroke="#2a70c0" stroke-width="2"/><path d="M12.5 12.5L18 18" stroke="#d0a030" stroke-width="3"/></svg>
<div class="a" style="left:644px;top:51px;width:1px;height:20px;background:#bdbcb4"></div>
<div class="a" style="left:645px;top:51px;width:1px;height:20px;background:#fff"></div>
<div class="a" style="left:649px;top:49px;width:25px;height:23px;background:#f3f2ee;border:1px solid #b8b7be;border-right-color:#fbfbf8;border-bottom-color:#fbfbf8"></div>
<svg class="a" style="left:654px;top:54px" width="17" height="16"><path d="M3.5 1V15M1 12.5H16" stroke="#3a3a3a" stroke-width="1.2" fill="none"/><path d="M1.5 3.5L3.5 1L5.5 3.5M13.5 10.5L16 12.5L13.5 14.5" stroke="#3a3a3a" stroke-width="1" fill="none"/><path d="M9 4V10L13 7Z" fill="#1aa01a" stroke="#0a6a0a" stroke-width="0.8"/></svg>
<svg class="a" style="left:682px;top:54px" width="17" height="16"><path d="M3.5 1V15M1 12.5H16" stroke="#3a3a3a" stroke-width="1.2" fill="none"/><path d="M1.5 3.5L3.5 1L5.5 3.5M13.5 10.5L16 12.5L13.5 14.5" stroke="#3a3a3a" stroke-width="1" fill="none"/><path d="M9.5 2V12" stroke="#2050c0" stroke-width="1.4"/><path d="M15 7H11M13 5L11 7L13 9" stroke="#d02020" stroke-width="1.3" fill="none"/></svg>
<div class="a" style="left:706px;top:51px;width:1px;height:20px;background:#bdbcb4"></div>
<div class="a" style="left:707px;top:51px;width:1px;height:20px;background:#fff"></div>
<svg class="a" style="left:715px;top:51px" width="19" height="21"><path d="M1.5 1.5H8L11.5 5V14.5H1.5Z" fill="#f4f4f4" stroke="#555"/><path d="M3 6V12M3 6H6" stroke="#888"/><path d="M11 8V20M5 14H17" stroke="#0a7a0a" stroke-width="4.4"/><path d="M11 9V19M6 14H16" stroke="#40e040" stroke-width="2.2"/></svg>
<svg class="a" style="left:735px;top:61px" width="6" height="4"><path d="M0 0H5L2.5 3Z" fill="#000"/></svg>
<svg class="a" style="left:750px;top:52px" width="17" height="17"><circle cx="8.5" cy="8.5" r="8" fill="#1a50c0"/><circle cx="8.5" cy="8.5" r="6.6" fill="#4a88e8"/><circle cx="8.5" cy="8.5" r="5.2" fill="#f4f8ff"/><path d="M8.5 4.5V8.5H11.5" stroke="#222" stroke-width="1.2" fill="none"/></svg>
<svg class="a" style="left:770px;top:61px" width="6" height="4"><path d="M0 0H5L2.5 3Z" fill="#000"/></svg>
<svg class="a" style="left:785px;top:52px" width="17" height="17"><rect x="0.5" y="0.5" width="16" height="16" fill="#fafcff" stroke="#2a60c0"/><rect x="1" y="1" width="15" height="3" fill="#3a78d8"/><path d="M2 8L5 7L8 8L11 6L15 7" stroke="#c03030" fill="none"/><path d="M2 13L5 11L8 12L11 10L15 11" stroke="#30a030" fill="none"/><path d="M1 9.5H16" stroke="#9ab"/></svg>
<svg class="a" style="left:804px;top:61px" width="6" height="4"><path d="M0 0H5L2.5 3Z" fill="#000"/></svg>
<div class="a" style="left:815px;top:49px;width:1px;height:23px;background:#cac8c0"></div>
<svg class="a" style="left:3px;top:77px" width="4" height="20"><path d="M0 1.5H3M0 3.5H3M0 5.5H3M0 7.5H3M0 9.5H3M0 11.5H3M0 13.5H3M0 15.5H3M0 17.5H3M0 19.5H3" stroke="#c0bfb6" stroke-width="1"/></svg>
<div class="a" style="left:8px;top:76px;width:26px;height:23px;background:#f3f2ee;border:1px solid #b8b7be;border-right-color:#fbfbf8;border-bottom-color:#fbfbf8"></div>
<svg class="a" style="left:15px;top:79px" width="14" height="18"><path d="M2 1V14L5 11L8 17L10 16L7 10H11Z" fill="#333"/></svg>
<svg class="a" style="left:40px;top:80px" width="17" height="17"><path d="M8.5 1V16M1 8.5H16" stroke="#444" stroke-width="1.2"/></svg>
<div class="a" style="left:65px;top:78px;width:1px;height:20px;background:#bdbcb4"></div>
<div class="a" style="left:66px;top:78px;width:1px;height:20px;background:#fff"></div>
<svg class="a" style="left:81px;top:80px" width="3" height="16"><path d="M1.5 1V15" stroke="#444" stroke-width="1.4"/></svg>
<svg class="a" style="left:103px;top:86px" width="17" height="3"><path d="M1 1.5H16" stroke="#444" stroke-width="1.4"/></svg>
<svg class="a" style="left:131px;top:80px" width="18" height="17"><path d="M2 15L16 2" stroke="#444" stroke-width="1.4"/></svg>
<div class="a" style="left:156px;top:78px;width:1px;height:20px;background:#bdbcb4"></div>
<div class="a" style="left:157px;top:78px;width:1px;height:20px;background:#fff"></div>
<svg class="a" style="left:164px;top:79px" width="22" height="20"><path d="M3 15L7 9M7 10L10 8M10 9L13 3M5 12H8M8 8V11M11 5H13M12 3V6" stroke="#3a3a3a" stroke-width="1.3" fill="none"/></svg>
<svg class="a" style="left:192px;top:79px" width="22" height="20"><path d="M2 13L11 3M5 15L14 5M4 8H8M7 5V9M9 11H12M12 8V12" stroke="#3a3a3a" stroke-width="1.2" fill="none"/><path d="M2 13L11 3" stroke="#8890a8" stroke-width="0.8"/><text x="13" y="19" font-size="7" font-weight="bold" fill="#333" font-family="Liberation Sans">E</text></svg>
<svg class="a" style="left:220px;top:79px" width="22" height="20"><path d="M2 13L11 3M5 15L14 5M4 8H8M7 5V9M9 11H12M12 8V12" stroke="#3a3a3a" stroke-width="1.2" fill="none"/><path d="M2 13L11 3" stroke="#8890a8" stroke-width="0.8"/><text x="13" y="19" font-size="7" font-weight="bold" fill="#333" font-family="Liberation Sans">D</text></svg>
<div class="a" style="left:247px;top:78px;width:1px;height:20px;background:#bdbcb4"></div>
<div class="a" style="left:248px;top:78px;width:1px;height:20px;background:#fff"></div>
<svg class="a" style="left:254px;top:79px" width="20" height="20"><path d="M2 16L16 4M2 16L17 9M2 16L17 13M2 16L12 3" stroke="#444" stroke-width="1.1"/></svg>
<div class="a" style="left:279px;top:78px;width:1px;height:20px;background:#bdbcb4"></div>
<div class="a" style="left:280px;top:78px;width:1px;height:20px;background:#fff"></div>
<svg class="a" style="left:288px;top:79px" width="22" height="20"><path d="M2 4H16M2 7H16M2 10H16M2 13H16" stroke="#555" stroke-width="1" stroke-dasharray="1 1"/><text x="13" y="19" font-size="7" font-weight="bold" fill="#444" font-family="Liberation Sans">F</text></svg>
<svg class="a" style="left:316px;top:79px" width="22" height="20"><path d="M2 16L14 3M2 16L16 7M2 16L16 11" stroke="#444" stroke-width="1.2"/><text x="14" y="19" font-size="7" font-weight="bold" fill="#444" font-family="Liberation Sans">F</text></svg>
<svg class="a" style="left:344px;top:79px" width="22" height="20"><path d="M2 4Q8 10 16 4M8 3V16M2 14L14 6" stroke="#444" stroke-width="1.2" fill="none"/><text x="14" y="19" font-size="7" font-weight="bold" fill="#444" font-family="Liberation Sans">F</text></svg>
<div class="a" style="left:372px;top:78px;width:1px;height:20px;background:#bdbcb4"></div>
<div class="a" style="left:373px;top:78px;width:1px;height:20px;background:#fff"></div>
<svg class="a" style="left:381px;top:80px" width="18" height="16"><path d="M2 13L12 3M6 15L16 5" stroke="#444" stroke-width="1.4"/></svg>
<svg class="a" style="left:407px;top:80px" width="16" height="16"><path d="M2 1V15M5 1V15M8 1V15M11 1V15M14 1V15" stroke="#444" stroke-width="1.2"/></svg>
<div class="a t" style="left:437px;top:81px;font-size:13px;font-weight:bold;color:#555">A</div>
<svg class="a" style="left:463px;top:80px" width="16" height="16"><rect x="1.5" y="1.5" width="13" height="13" fill="none" stroke="#666" stroke-dasharray="1 1"/><path d="M4 4H12M8 4V13" stroke="#555" stroke-width="2"/></svg>
<svg class="a" style="left:491px;top:80px" width="16" height="16"><path d="M1 5L5 2L8 5L5 8Z" fill="#333"/><path d="M7 11L11 8L15 11L11 14Z" fill="#333"/><path d="M4 9L7 12L12 4" stroke="#333" stroke-width="1.3" fill="none"/></svg>
<svg class="a" style="left:510px;top:87px" width="6" height="4"><path d="M0 0H5L2.5 3Z" fill="#000"/></svg>
<div class="a" style="left:520px;top:75px;width:1px;height:24px;background:#b9b8b0"></div>
<svg class="a" style="left:525px;top:78px" width="4" height="20"><path d="M0 1.5H3M0 3.5H3M0 5.5H3M0 7.5H3M0 9.5H3M0 11.5H3M0 13.5H3M0 15.5H3M0 17.5H3M0 19.5H3" stroke="#c0bfb6" stroke-width="1"/></svg>
<div class="a" style="left:643px;top:76px;width:25px;height:23px;background:#f3f2ee;border:1px solid #b8b7be;border-right-color:#fbfbf8;border-bottom-color:#fbfbf8"></div>
<svg class="a" style="left:533px;top:80px" width="22" height="20"><path d="M3 5h1v1h-1zM9 5h1v1h-1zM11 5h3v1h-3zM3 6h2v1h-2zM8 6h2v1h-2zM13 6h1v1h-1zM3 7h2v1h-2zM8 7h2v1h-2zM13 7h1v1h-1zM3 8h1v1h-1zM5 8h1v1h-1zM7 8h1v1h-1zM9 8h1v1h-1zM13 8h1v1h-1zM3 9h1v1h-1zM5 9h1v1h-1zM7 9h1v1h-1zM9 9h1v1h-1zM13 9h1v1h-1zM3 10h1v1h-1zM6 10h1v1h-1zM9 10h1v1h-1zM13 10h1v1h-1zM3 11h1v1h-1zM9 11h1v1h-1zM11 11h5v1h-5z" fill="#333"/></svg>
<svg class="a" style="left:561px;top:80px" width="22" height="20"><path d="M3 5h1v1h-1zM9 5h1v1h-1zM11 5h4v1h-4zM3 6h2v1h-2zM8 6h2v1h-2zM11 6h1v1h-1zM3 7h2v1h-2zM8 7h2v1h-2zM11 7h4v1h-4zM3 8h1v1h-1zM5 8h1v1h-1zM7 8h1v1h-1zM9 8h1v1h-1zM15 8h1v1h-1zM3 9h1v1h-1zM5 9h1v1h-1zM7 9h1v1h-1zM9 9h1v1h-1zM15 9h1v1h-1zM3 10h1v1h-1zM6 10h1v1h-1zM9 10h1v1h-1zM15 10h1v1h-1zM3 11h1v1h-1zM9 11h1v1h-1zM11 11h4v1h-4z" fill="#333"/></svg>
<svg class="a" style="left:587px;top:80px" width="28" height="20"><path d="M3 5h1v1h-1zM9 5h1v1h-1zM11 5h3v1h-3zM17 5h4v1h-4zM3 6h2v1h-2zM8 6h2v1h-2zM13 6h1v1h-1zM17 6h1v1h-1zM3 7h2v1h-2zM8 7h2v1h-2zM13 7h1v1h-1zM17 7h4v1h-4zM3 8h1v1h-1zM5 8h1v1h-1zM7 8h1v1h-1zM9 8h1v1h-1zM13 8h1v1h-1zM21 8h1v1h-1zM3 9h1v1h-1zM5 9h1v1h-1zM7 9h1v1h-1zM9 9h1v1h-1zM13 9h1v1h-1zM21 9h1v1h-1zM3 10h1v1h-1zM6 10h1v1h-1zM9 10h1v1h-1zM13 10h1v1h-1zM21 10h1v1h-1zM3 11h1v1h-1zM9 11h1v1h-1zM11 11h5v1h-5zM17 11h4v1h-4z" fill="#333"/></svg>
<svg class="a" style="left:615px;top:80px" width="28" height="20"><path d="M3 5h1v1h-1zM9 5h1v1h-1zM12 5h3v1h-3zM18 5h3v1h-3zM3 6h2v1h-2zM8 6h2v1h-2zM11 6h1v1h-1zM15 6h1v1h-1zM17 6h1v1h-1zM21 6h1v1h-1zM3 7h2v1h-2zM8 7h2v1h-2zM15 7h1v1h-1zM17 7h1v1h-1zM21 7h1v1h-1zM3 8h1v1h-1zM5 8h1v1h-1zM7 8h1v1h-1zM9 8h1v1h-1zM12 8h3v1h-3zM17 8h1v1h-1zM21 8h1v1h-1zM3 9h1v1h-1zM5 9h1v1h-1zM7 9h1v1h-1zM9 9h1v1h-1zM15 9h1v1h-1zM17 9h1v1h-1zM21 9h1v1h-1zM3 10h1v1h-1zM6 10h1v1h-1zM9 10h1v1h-1zM11 10h1v1h-1zM15 10h1v1h-1zM17 10h1v1h-1zM21 10h1v1h-1zM3 11h1v1h-1zM9 11h1v1h-1zM12 11h3v1h-3zM18 11h3v1h-3z" fill="#333"/></svg>
<svg class="a" style="left:646px;top:80px" width="21" height="20"><path d="M3 5h1v1h-1zM8 5h1v1h-1zM10 5h3v1h-3zM3 6h1v1h-1zM8 6h1v1h-1zM12 6h1v1h-1zM3 7h1v1h-1zM8 7h1v1h-1zM12 7h1v1h-1zM3 8h6v1h-6zM12 8h1v1h-1zM3 9h1v1h-1zM8 9h1v1h-1zM12 9h1v1h-1zM3 10h1v1h-1zM8 10h1v1h-1zM12 10h1v1h-1zM3 11h1v1h-1zM8 11h1v1h-1zM10 11h5v1h-5z" fill="#333"/></svg>
<svg class="a" style="left:672px;top:80px" width="21" height="20"><path d="M3 5h1v1h-1zM8 5h1v1h-1zM13 5h1v1h-1zM3 6h1v1h-1zM8 6h1v1h-1zM12 6h2v1h-2zM3 7h1v1h-1zM8 7h1v1h-1zM11 7h1v1h-1zM13 7h1v1h-1zM3 8h6v1h-6zM10 8h1v1h-1zM13 8h1v1h-1zM3 9h1v1h-1zM8 9h1v1h-1zM10 9h5v1h-5zM3 10h1v1h-1zM8 10h1v1h-1zM13 10h1v1h-1zM3 11h1v1h-1zM8 11h1v1h-1zM13 11h1v1h-1z" fill="#333"/></svg>
<svg class="a" style="left:702px;top:80px" width="21" height="20"><path d="M3 5h5v1h-5zM10 5h3v1h-3zM3 6h1v1h-1zM7 6h2v1h-2zM12 6h1v1h-1zM3 7h1v1h-1zM8 7h1v1h-1zM12 7h1v1h-1zM3 8h1v1h-1zM8 8h1v1h-1zM12 8h1v1h-1zM3 9h1v1h-1zM8 9h1v1h-1zM12 9h1v1h-1zM3 10h1v1h-1zM7 10h2v1h-2zM12 10h1v1h-1zM3 11h5v1h-5zM10 11h5v1h-5z" fill="#333"/></svg>
<svg class="a" style="left:729px;top:80px" width="23" height="20"><path d="M2 5h1v1h-1zM6 5h1v1h-1zM10 5h1v1h-1zM12 5h3v1h-3zM2 6h1v1h-1zM6 6h1v1h-1zM10 6h1v1h-1zM14 6h1v1h-1zM3 7h1v1h-1zM5 7h1v1h-1zM7 7h1v1h-1zM9 7h1v1h-1zM14 7h1v1h-1zM3 8h1v1h-1zM5 8h1v1h-1zM7 8h1v1h-1zM9 8h1v1h-1zM14 8h1v1h-1zM3 9h1v1h-1zM5 9h1v1h-1zM7 9h1v1h-1zM9 9h1v1h-1zM14 9h1v1h-1zM4 10h1v1h-1zM8 10h1v1h-1zM14 10h1v1h-1zM4 11h1v1h-1zM8 11h1v1h-1zM12 11h5v1h-5z" fill="#333"/></svg>
<svg class="a" style="left:756px;top:80px" width="23" height="20"><path d="M3 5h1v1h-1zM9 5h1v1h-1zM11 5h1v1h-1zM16 5h1v1h-1zM3 6h2v1h-2zM8 6h2v1h-2zM11 6h2v1h-2zM16 6h1v1h-1zM3 7h2v1h-2zM8 7h2v1h-2zM11 7h1v1h-1zM13 7h1v1h-1zM16 7h1v1h-1zM3 8h1v1h-1zM5 8h1v1h-1zM7 8h1v1h-1zM9 8h1v1h-1zM11 8h1v1h-1zM13 8h1v1h-1zM16 8h1v1h-1zM3 9h1v1h-1zM5 9h1v1h-1zM7 9h1v1h-1zM9 9h1v1h-1zM11 9h1v1h-1zM14 9h1v1h-1zM16 9h1v1h-1zM3 10h1v1h-1zM6 10h1v1h-1zM9 10h1v1h-1zM11 10h1v1h-1zM15 10h2v1h-2zM3 11h1v1h-1zM9 11h1v1h-1zM11 11h1v1h-1zM16 11h1v1h-1z" fill="#333"/></svg>
<div class="a" style="left:781px;top:75px;width:1px;height:24px;background:#b9b8b0"></div>
<div class="a" style="left:0px;top:101px;width:224px;height:515px;background:#eae9e4"></div>
<div class="a" style="left:219px;top:101px;width:1px;height:512px;background:#fbfbf8"></div>
<div class="a" style="left:222px;top:101px;width:2px;height:515px;background:#8e8e94"></div>
<div class="a" style="left:0px;top:612px;width:220px;height:1px;background:#fbfbf8"></div>
<div class="a" style="left:0px;top:615px;width:224px;height:1px;background:#8e8e94"></div>
<div class="a" style="left:1022px;top:101px;width:2px;height:515px;background:#f6f6f2"></div>
<div class="a" style="left:3px;top:103px;width:203px;height:13px;background:linear-gradient(90deg,#5f95de,#74a6e5 50%,#86b2ea)"></div>
<svg class="a" style="left:5px;top:99px" width="54" height="20"><path d="M5 4h1v1h-1zM14 4h1v1h-1zM16 4h6v1h-6zM26 4h1v1h-1zM29 4h5v1h-5zM39 4h1v1h-1zM42 4h1v1h-1zM5 5h1v1h-1zM14 5h1v1h-1zM20 5h1v1h-1zM26 5h1v1h-1zM29 5h1v1h-1zM33 5h1v1h-1zM39 5h1v1h-1zM42 5h2v1h-2zM0 6h11v1h-11zM14 6h1v1h-1zM19 6h1v1h-1zM24 6h6v1h-6zM33 6h1v1h-1zM38 6h1v1h-1zM41 6h1v1h-1zM44 6h1v1h-1zM5 7h1v1h-1zM12 7h4v1h-4zM18 7h1v1h-1zM26 7h1v1h-1zM29 7h1v1h-1zM31 7h2v1h-2zM38 7h3v1h-3zM45 7h2v1h-2zM2 8h8v1h-8zM14 8h1v1h-1zM16 8h7v1h-7zM26 8h1v1h-1zM28 8h2v1h-2zM37 8h2v1h-2zM41 8h1v1h-1zM44 8h1v1h-1zM2 9h1v1h-1zM5 9h1v1h-1zM9 9h1v1h-1zM14 9h1v1h-1zM18 9h1v1h-1zM20 9h1v1h-1zM22 9h1v1h-1zM26 9h2v1h-2zM29 9h6v1h-6zM36 9h1v1h-1zM38 9h1v1h-1zM41 9h1v1h-1zM44 9h1v1h-1zM2 10h1v1h-1zM5 10h1v1h-1zM9 10h1v1h-1zM14 10h1v1h-1zM17 10h1v1h-1zM20 10h1v1h-1zM22 10h1v1h-1zM25 10h2v1h-2zM29 10h1v1h-1zM31 10h1v1h-1zM33 10h1v1h-1zM38 10h1v1h-1zM41 10h1v1h-1zM44 10h1v1h-1zM2 11h1v1h-1zM5 11h1v1h-1zM9 11h1v1h-1zM14 11h3v1h-3zM19 11h1v1h-1zM22 11h1v1h-1zM24 11h1v1h-1zM26 11h1v1h-1zM29 11h1v1h-1zM31 11h1v1h-1zM33 11h1v1h-1zM38 11h1v1h-1zM41 11h1v1h-1zM44 11h1v1h-1zM2 12h1v1h-1zM5 12h1v1h-1zM7 12h1v1h-1zM9 12h1v1h-1zM12 12h2v1h-2zM18 12h1v1h-1zM22 12h1v1h-1zM26 12h1v1h-1zM29 12h1v1h-1zM32 12h1v1h-1zM38 12h1v1h-1zM41 12h1v1h-1zM44 12h1v1h-1zM2 13h1v1h-1zM5 13h1v1h-1zM8 13h1v1h-1zM16 13h2v1h-2zM22 13h1v1h-1zM26 13h1v1h-1zM29 13h1v1h-1zM31 13h1v1h-1zM33 13h1v1h-1zM38 13h1v1h-1zM40 13h1v1h-1zM44 13h1v1h-1zM5 14h1v1h-1zM20 14h2v1h-2zM24 14h3v1h-3zM29 14h2v1h-2zM34 14h1v1h-1zM38 14h2v1h-2zM44 14h1v1h-1z" fill="#fff"/></svg>
<svg class="a" style="left:52px;top:100px" width="56" height="20"><path d="M10 5h3v1h-3zM15 5h5v1h-5zM24 5h3v1h-3zM31 5h3v1h-3zM42 5h1v1h-1zM46 5h3v1h-3zM9 6h1v1h-1zM13 6h1v1h-1zM19 6h1v1h-1zM26 6h1v1h-1zM30 6h1v1h-1zM34 6h1v1h-1zM41 6h2v1h-2zM45 6h1v1h-1zM49 6h1v1h-1zM3 7h1v1h-1zM9 7h1v1h-1zM13 7h1v1h-1zM18 7h1v1h-1zM21 7h1v1h-1zM26 7h1v1h-1zM30 7h1v1h-1zM34 7h1v1h-1zM36 7h1v1h-1zM40 7h1v1h-1zM42 7h1v1h-1zM45 7h1v1h-1zM49 7h1v1h-1zM9 8h1v1h-1zM13 8h1v1h-1zM18 8h1v1h-1zM26 8h1v1h-1zM31 8h3v1h-3zM39 8h1v1h-1zM42 8h1v1h-1zM45 8h1v1h-1zM49 8h1v1h-1zM9 9h1v1h-1zM13 9h1v1h-1zM17 9h1v1h-1zM26 9h1v1h-1zM30 9h1v1h-1zM34 9h1v1h-1zM39 9h5v1h-5zM45 9h1v1h-1zM49 9h1v1h-1zM9 10h1v1h-1zM13 10h1v1h-1zM17 10h1v1h-1zM26 10h1v1h-1zM30 10h1v1h-1zM34 10h1v1h-1zM42 10h1v1h-1zM45 10h1v1h-1zM49 10h1v1h-1zM3 11h1v1h-1zM10 11h3v1h-3zM16 11h1v1h-1zM21 11h1v1h-1zM24 11h5v1h-5zM31 11h3v1h-3zM36 11h1v1h-1zM42 11h1v1h-1zM46 11h3v1h-3z" fill="#fff"/></svg>
<svg class="a" style="left:209px;top:107px" width="8" height="7"><path d="M1 1L7 6M7 1L1 6" stroke="#000" stroke-width="1.8"/></svg>
<div class="a" style="left:3px;top:117px;width:216px;height:311px;border:1px solid #a7a59d;border-right:none;border-bottom:none;background:#f2f4ee"></div>
<div class="a" style="left:4px;top:118px;width:198px;height:16px;background:#eae9e4"></div>
<div class="a" style="left:4px;top:134px;width:198px;height:1px;background:#dedbd0"></div>
<div class="a" style="left:4px;top:135px;width:198px;height:3px;background:linear-gradient(#d8d4c8,#c4c0b2)"></div>
<div class="a" style="left:85px;top:121px;width:1px;height:12px;background:#cdcac0"></div>
<div class="a" style="left:142px;top:121px;width:1px;height:12px;background:#cdcac0"></div>
<div class="a" style="left:199px;top:121px;width:1px;height:12px;background:#cdcac0"></div>
<svg class="a" style="left:13px;top:118px" width="28" height="20"><path d="M5 4h1v1h-1zM14 4h6v1h-6zM0 5h11v1h-11zM14 5h1v1h-1zM19 5h1v1h-1zM3 6h1v1h-1zM7 6h1v1h-1zM14 6h1v1h-1zM19 6h1v1h-1zM1 7h9v1h-9zM14 7h6v1h-6zM1 8h1v1h-1zM4 8h1v1h-1zM6 8h1v1h-1zM9 8h1v1h-1zM1 9h1v1h-1zM3 9h1v1h-1zM7 9h1v1h-1zM9 9h1v1h-1zM12 9h4v1h-4zM18 9h4v1h-4zM1 10h9v1h-9zM12 10h1v1h-1zM15 10h1v1h-1zM18 10h1v1h-1zM21 10h1v1h-1zM1 11h1v1h-1zM3 11h1v1h-1zM7 11h1v1h-1zM9 11h1v1h-1zM12 11h1v1h-1zM15 11h1v1h-1zM18 11h1v1h-1zM21 11h1v1h-1zM1 12h1v1h-1zM3 12h5v1h-5zM9 12h1v1h-1zM12 12h1v1h-1zM15 12h1v1h-1zM18 12h1v1h-1zM21 12h1v1h-1zM1 13h1v1h-1zM3 13h1v1h-1zM7 13h1v1h-1zM9 13h1v1h-1zM12 13h4v1h-4zM18 13h4v1h-4zM1 14h1v1h-1zM8 14h2v1h-2zM12 14h1v1h-1zM15 14h1v1h-1zM18 14h1v1h-1zM21 14h1v1h-1z" fill="#000"/></svg>
<svg class="a" style="left:117px;top:118px" width="28" height="20"><path d="M0 4h11v1h-11zM14 4h1v1h-1zM17 4h1v1h-1zM9 5h1v1h-1zM14 5h1v1h-1zM17 5h2v1h-2zM2 6h1v1h-1zM5 6h1v1h-1zM8 6h1v1h-1zM13 6h1v1h-1zM16 6h1v1h-1zM19 6h1v1h-1zM3 7h1v1h-1zM5 7h1v1h-1zM13 7h3v1h-3zM20 7h2v1h-2zM1 8h1v1h-1zM5 8h1v1h-1zM12 8h2v1h-2zM16 8h1v1h-1zM19 8h1v1h-1zM2 9h1v1h-1zM5 9h1v1h-1zM11 9h1v1h-1zM13 9h1v1h-1zM16 9h1v1h-1zM19 9h1v1h-1zM0 10h11v1h-11zM13 10h1v1h-1zM16 10h1v1h-1zM19 10h1v1h-1zM5 11h1v1h-1zM13 11h1v1h-1zM16 11h1v1h-1zM19 11h1v1h-1zM4 12h1v1h-1zM6 12h1v1h-1zM13 12h1v1h-1zM16 12h1v1h-1zM19 12h1v1h-1zM2 13h2v1h-2zM7 13h2v1h-2zM13 13h1v1h-1zM15 13h1v1h-1zM19 13h1v1h-1zM0 14h2v1h-2zM9 14h2v1h-2zM13 14h2v1h-2zM19 14h1v1h-1z" fill="#000"/></svg>
<svg class="a" style="left:173px;top:118px" width="28" height="20"><path d="M5 4h1v1h-1zM14 4h1v1h-1zM17 4h1v1h-1zM1 5h9v1h-9zM14 5h1v1h-1zM17 5h2v1h-2zM5 6h1v1h-1zM13 6h1v1h-1zM16 6h1v1h-1zM19 6h1v1h-1zM0 7h11v1h-11zM13 7h3v1h-3zM20 7h2v1h-2zM3 8h1v1h-1zM9 8h1v1h-1zM12 8h2v1h-2zM16 8h1v1h-1zM19 8h1v1h-1zM2 9h1v1h-1zM4 9h1v1h-1zM6 9h1v1h-1zM8 9h1v1h-1zM11 9h1v1h-1zM13 9h1v1h-1zM16 9h1v1h-1zM19 9h1v1h-1zM3 10h1v1h-1zM6 10h1v1h-1zM13 10h1v1h-1zM16 10h1v1h-1zM19 10h1v1h-1zM0 11h11v1h-11zM13 11h1v1h-1zM16 11h1v1h-1zM19 11h1v1h-1zM6 12h1v1h-1zM13 12h1v1h-1zM16 12h1v1h-1zM19 12h1v1h-1zM4 13h2v1h-2zM7 13h2v1h-2zM13 13h1v1h-1zM15 13h1v1h-1zM19 13h1v1h-1zM1 14h3v1h-3zM9 14h1v1h-1zM13 14h2v1h-2zM19 14h1v1h-1z" fill="#000"/></svg>
<div class="a" style="left:4px;top:138px;width:198px;height:20px;background:#f1f4ee;overflow:hidden">
<div class="a" style="left:0;top:0;width:199px;height:1px;background:#d3d1ca"></div>
<div class="a" style="left:81px;top:0;width:1px;height:21px;background:#d0cdc5"></div>
<div class="a" style="left:138px;top:0;width:1px;height:21px;background:#d0cdc5"></div>
<svg class="a" style="left:4px;top:5px" width="12" height="12"><defs><linearGradient id="gu" x1="0" y1="0" x2="1" y2="1"><stop offset="0" stop-color="#8af08a"/><stop offset="1" stop-color="#10a010"/></linearGradient><linearGradient id="gd" x1="0" y1="0" x2="1" y2="1"><stop offset="0" stop-color="#ffb080"/><stop offset="1" stop-color="#e04010"/></linearGradient></defs><path d="M6 0.8L11.2 6H8.2V10.5H3.8V6H0.8Z" fill="url(#gu)" stroke="#0a6a0a" stroke-width="0.9"/></svg>
<svg class="a" style="left:20px;top:2px" width="42" height="19"><path d="M0 4h3v1h-3zM4 4h3v1h-3zM8 4h9v1h-9zM19 4h7v1h-7zM28 4h8v1h-8zM1 5h1v1h-1zM5 5h1v1h-1zM7 5h1v1h-1zM11 5h1v1h-1zM13 5h1v1h-1zM16 5h4v1h-4zM23 5h1v1h-1zM25 5h1v1h-1zM29 5h1v1h-1zM31 5h1v1h-1zM35 5h1v1h-1zM1 6h1v1h-1zM5 6h1v1h-1zM7 6h1v1h-1zM13 6h1v1h-1zM17 6h2v1h-2zM25 6h1v1h-1zM29 6h1v1h-1zM31 6h1v1h-1zM33 6h1v1h-1zM1 7h1v1h-1zM5 7h1v1h-1zM7 7h3v1h-3zM13 7h1v1h-1zM17 7h2v1h-2zM25 7h5v1h-5zM31 7h3v1h-3zM1 8h1v1h-1zM5 8h1v1h-1zM10 8h2v1h-2zM13 8h1v1h-1zM17 8h2v1h-2zM25 8h1v1h-1zM29 8h1v1h-1zM31 8h1v1h-1zM33 8h1v1h-1zM1 9h1v1h-1zM5 9h1v1h-1zM7 9h1v1h-1zM11 9h1v1h-1zM13 9h1v1h-1zM17 9h3v1h-3zM25 9h1v1h-1zM29 9h1v1h-1zM31 9h1v1h-1zM2 10h3v1h-3zM7 10h4v1h-4zM12 10h5v1h-5zM19 10h7v1h-7zM28 10h5v1h-5z" fill="#000"/></svg>
<svg class="a" style="left:100px;top:2px" width="42" height="19"><path d="M3 4h1v1h-1zM14 4h3v1h-3zM19 4h5v1h-5zM27 4h1v1h-1zM34 4h1v1h-1zM2 5h2v1h-2zM13 5h1v1h-1zM17 5h1v1h-1zM23 5h1v1h-1zM26 5h2v1h-2zM33 5h2v1h-2zM3 6h1v1h-1zM17 6h1v1h-1zM22 6h1v1h-1zM27 6h1v1h-1zM32 6h1v1h-1zM34 6h1v1h-1zM3 7h1v1h-1zM16 7h1v1h-1zM22 7h1v1h-1zM27 7h1v1h-1zM32 7h1v1h-1zM34 7h1v1h-1zM3 8h1v1h-1zM15 8h1v1h-1zM22 8h1v1h-1zM27 8h1v1h-1zM31 8h1v1h-1zM34 8h1v1h-1zM3 9h1v1h-1zM13 9h2v1h-2zM21 9h1v1h-1zM27 9h1v1h-1zM32 9h4v1h-4zM2 10h3v1h-3zM8 10h1v1h-1zM14 10h4v1h-4zM21 10h1v1h-1zM26 10h3v1h-3zM33 10h3v1h-3z" fill="#0000ff"/></svg>
<svg class="a" style="left:157px;top:2px" width="42" height="19"><path d="M3 4h1v1h-1zM14 4h3v1h-3zM19 4h5v1h-5zM27 4h1v1h-1zM33 4h2v1h-2zM2 5h2v1h-2zM13 5h1v1h-1zM17 5h1v1h-1zM23 5h1v1h-1zM26 5h2v1h-2zM32 5h1v1h-1zM35 5h1v1h-1zM3 6h1v1h-1zM17 6h1v1h-1zM22 6h1v1h-1zM27 6h1v1h-1zM32 6h1v1h-1zM35 6h1v1h-1zM3 7h1v1h-1zM16 7h1v1h-1zM22 7h1v1h-1zM27 7h1v1h-1zM32 7h1v1h-1zM35 7h1v1h-1zM3 8h1v1h-1zM15 8h1v1h-1zM22 8h1v1h-1zM27 8h1v1h-1zM33 8h3v1h-3zM3 9h1v1h-1zM13 9h2v1h-2zM21 9h1v1h-1zM27 9h1v1h-1zM34 9h2v1h-2zM2 10h3v1h-3zM8 10h1v1h-1zM14 10h4v1h-4zM21 10h1v1h-1zM26 10h3v1h-3zM32 10h3v1h-3z" fill="#0000ff"/></svg>
</div>
<div class="a" style="left:4px;top:158px;width:198px;height:20px;background:#3464b4;overflow:hidden">
<div class="a" style="left:0;top:0;width:199px;height:1px;background:#d3d1ca"></div>
<div class="a" style="left:81px;top:0;width:1px;height:21px;background:#d0cdc5"></div>
<div class="a" style="left:138px;top:0;width:1px;height:21px;background:#d0cdc5"></div>
<svg class="a" style="left:4px;top:5px" width="12" height="12"><defs><linearGradient id="gu" x1="0" y1="0" x2="1" y2="1"><stop offset="0" stop-color="#8af08a"/><stop offset="1" stop-color="#10a010"/></linearGradient><linearGradient id="gd" x1="0" y1="0" x2="1" y2="1"><stop offset="0" stop-color="#ffb080"/><stop offset="1" stop-color="#e04010"/></linearGradient></defs><path d="M6 0.8L11.2 6H8.2V10.5H3.8V6H0.8Z" fill="url(#gu)" stroke="#0a6a0a" stroke-width="0.9"/></svg>
<svg class="a" style="left:20px;top:2px" width="42" height="19"><path d="M1 4h10v1h-10zM12 4h5v1h-5zM18 4h3v1h-3zM22 4h3v1h-3zM26 4h9v1h-9zM0 5h2v1h-2zM5 5h1v1h-1zM7 5h1v1h-1zM11 5h1v1h-1zM13 5h1v1h-1zM17 5h1v1h-1zM19 5h1v1h-1zM23 5h1v1h-1zM25 5h1v1h-1zM29 5h1v1h-1zM31 5h1v1h-1zM34 5h2v1h-2zM0 6h1v1h-1zM7 6h1v1h-1zM11 6h1v1h-1zM13 6h1v1h-1zM17 6h1v1h-1zM19 6h1v1h-1zM23 6h1v1h-1zM25 6h1v1h-1zM31 6h1v1h-1zM35 6h1v1h-1zM0 7h1v1h-1zM7 7h4v1h-4zM13 7h4v1h-4zM19 7h1v1h-1zM23 7h1v1h-1zM25 7h3v1h-3zM31 7h1v1h-1zM35 7h1v1h-1zM0 8h1v1h-1zM4 8h4v1h-4zM11 8h1v1h-1zM13 8h1v1h-1zM19 8h1v1h-1zM23 8h1v1h-1zM28 8h2v1h-2zM31 8h1v1h-1zM35 8h1v1h-1zM0 9h2v1h-2zM5 9h1v1h-1zM7 9h1v1h-1zM11 9h1v1h-1zM13 9h1v1h-1zM19 9h1v1h-1zM23 9h1v1h-1zM25 9h1v1h-1zM29 9h1v1h-1zM31 9h1v1h-1zM35 9h1v1h-1zM1 10h10v1h-10zM12 10h3v1h-3zM20 10h3v1h-3zM25 10h4v1h-4zM30 10h5v1h-5z" fill="#fff"/></svg>
<svg class="a" style="left:100px;top:2px" width="42" height="19"><path d="M3 4h1v1h-1zM14 4h3v1h-3zM20 4h3v1h-3zM26 4h3v1h-3zM31 4h5v1h-5zM2 5h2v1h-2zM13 5h1v1h-1zM17 5h1v1h-1zM19 5h1v1h-1zM23 5h1v1h-1zM25 5h1v1h-1zM29 5h1v1h-1zM35 5h1v1h-1zM3 6h1v1h-1zM13 6h1v1h-1zM17 6h1v1h-1zM19 6h1v1h-1zM23 6h1v1h-1zM25 6h1v1h-1zM29 6h1v1h-1zM34 6h1v1h-1zM3 7h1v1h-1zM14 7h3v1h-3zM19 7h1v1h-1zM23 7h1v1h-1zM26 7h3v1h-3zM34 7h1v1h-1zM3 8h1v1h-1zM13 8h2v1h-2zM16 8h2v1h-2zM19 8h1v1h-1zM23 8h1v1h-1zM25 8h2v1h-2zM28 8h2v1h-2zM34 8h1v1h-1zM3 9h1v1h-1zM13 9h1v1h-1zM17 9h1v1h-1zM19 9h1v1h-1zM23 9h1v1h-1zM25 9h1v1h-1zM29 9h1v1h-1zM33 9h1v1h-1zM2 10h3v1h-3zM8 10h1v1h-1zM14 10h3v1h-3zM20 10h3v1h-3zM26 10h3v1h-3zM33 10h1v1h-1z" fill="#fff"/></svg>
<svg class="a" style="left:157px;top:2px" width="42" height="19"><path d="M3 4h1v1h-1zM14 4h3v1h-3zM20 4h3v1h-3zM27 4h2v1h-2zM33 4h1v1h-1zM2 5h2v1h-2zM13 5h1v1h-1zM17 5h1v1h-1zM19 5h1v1h-1zM23 5h1v1h-1zM26 5h1v1h-1zM29 5h1v1h-1zM32 5h2v1h-2zM3 6h1v1h-1zM13 6h1v1h-1zM17 6h1v1h-1zM19 6h1v1h-1zM23 6h1v1h-1zM26 6h1v1h-1zM29 6h1v1h-1zM33 6h1v1h-1zM3 7h1v1h-1zM14 7h3v1h-3zM19 7h1v1h-1zM23 7h1v1h-1zM26 7h1v1h-1zM29 7h1v1h-1zM33 7h1v1h-1zM3 8h1v1h-1zM13 8h2v1h-2zM16 8h2v1h-2zM19 8h1v1h-1zM23 8h1v1h-1zM27 8h3v1h-3zM33 8h1v1h-1zM3 9h1v1h-1zM13 9h1v1h-1zM17 9h1v1h-1zM19 9h1v1h-1zM23 9h1v1h-1zM28 9h2v1h-2zM33 9h1v1h-1zM2 10h3v1h-3zM8 10h1v1h-1zM14 10h3v1h-3zM20 10h3v1h-3zM26 10h3v1h-3zM32 10h3v1h-3z" fill="#fff"/></svg>
</div>
<div class="a" style="left:4px;top:178px;width:198px;height:20px;background:#f1f4ee;overflow:hidden">
<div class="a" style="left:0;top:0;width:199px;height:1px;background:#d3d1ca"></div>
<div class="a" style="left:81px;top:0;width:1px;height:21px;background:#d0cdc5"></div>
<div class="a" style="left:138px;top:0;width:1px;height:21px;background:#d0cdc5"></div>
<svg class="a" style="left:4px;top:5px" width="12" height="12"><path d="M6 10.5L11.2 5.3H8.2V0.8H3.8V5.3H0.8Z" fill="url(#gd)" stroke="#a0300a" stroke-width="0.9"/></svg>
<svg class="a" style="left:20px;top:2px" width="42" height="19"><path d="M0 4h9v1h-9zM10 4h6v1h-6zM18 4h3v1h-3zM22 4h3v1h-3zM26 4h9v1h-9zM1 5h1v1h-1zM5 5h1v1h-1zM7 5h1v1h-1zM11 5h1v1h-1zM13 5h1v1h-1zM16 5h1v1h-1zM19 5h1v1h-1zM23 5h1v1h-1zM25 5h1v1h-1zM29 5h1v1h-1zM31 5h1v1h-1zM34 5h2v1h-2zM1 6h1v1h-1zM3 6h1v1h-1zM7 6h1v1h-1zM11 6h1v1h-1zM13 6h1v1h-1zM16 6h1v1h-1zM19 6h1v1h-1zM23 6h1v1h-1zM25 6h1v1h-1zM31 6h1v1h-1zM35 6h1v1h-1zM1 7h3v1h-3zM7 7h1v1h-1zM11 7h1v1h-1zM13 7h3v1h-3zM19 7h1v1h-1zM23 7h1v1h-1zM25 7h3v1h-3zM31 7h1v1h-1zM35 7h1v1h-1zM1 8h1v1h-1zM3 8h1v1h-1zM7 8h1v1h-1zM11 8h1v1h-1zM13 8h1v1h-1zM15 8h2v1h-2zM19 8h1v1h-1zM23 8h1v1h-1zM28 8h2v1h-2zM31 8h1v1h-1zM35 8h1v1h-1zM1 9h1v1h-1zM5 9h1v1h-1zM7 9h1v1h-1zM11 9h1v1h-1zM13 9h1v1h-1zM16 9h1v1h-1zM19 9h1v1h-1zM23 9h1v1h-1zM25 9h1v1h-1zM29 9h1v1h-1zM31 9h1v1h-1zM35 9h1v1h-1zM0 10h6v1h-6zM8 10h3v1h-3zM12 10h3v1h-3zM16 10h2v1h-2zM20 10h3v1h-3zM25 10h4v1h-4zM30 10h5v1h-5z" fill="#000"/></svg>
<svg class="a" style="left:100px;top:2px" width="42" height="19"><path d="M3 4h1v1h-1zM14 4h3v1h-3zM20 4h3v1h-3zM26 4h3v1h-3zM33 4h2v1h-2zM2 5h2v1h-2zM13 5h1v1h-1zM17 5h1v1h-1zM19 5h1v1h-1zM23 5h1v1h-1zM25 5h1v1h-1zM29 5h1v1h-1zM32 5h1v1h-1zM35 5h1v1h-1zM3 6h1v1h-1zM17 6h1v1h-1zM23 6h1v1h-1zM25 6h1v1h-1zM29 6h1v1h-1zM32 6h1v1h-1zM35 6h1v1h-1zM3 7h1v1h-1zM16 7h1v1h-1zM22 7h1v1h-1zM25 7h1v1h-1zM29 7h1v1h-1zM32 7h1v1h-1zM35 7h1v1h-1zM3 8h1v1h-1zM15 8h1v1h-1zM21 8h1v1h-1zM25 8h1v1h-1zM29 8h1v1h-1zM33 8h3v1h-3zM3 9h1v1h-1zM13 9h2v1h-2zM19 9h2v1h-2zM25 9h1v1h-1zM29 9h1v1h-1zM34 9h2v1h-2zM2 10h3v1h-3zM8 10h1v1h-1zM14 10h4v1h-4zM20 10h4v1h-4zM26 10h3v1h-3zM32 10h3v1h-3z" fill="#ff0000"/></svg>
<svg class="a" style="left:157px;top:2px" width="42" height="19"><path d="M3 4h1v1h-1zM14 4h3v1h-3zM20 4h3v1h-3zM27 4h1v1h-1zM32 4h3v1h-3zM2 5h2v1h-2zM13 5h1v1h-1zM17 5h1v1h-1zM19 5h1v1h-1zM23 5h1v1h-1zM26 5h2v1h-2zM31 5h1v1h-1zM35 5h1v1h-1zM3 6h1v1h-1zM17 6h1v1h-1zM23 6h1v1h-1zM27 6h1v1h-1zM35 6h1v1h-1zM3 7h1v1h-1zM16 7h1v1h-1zM22 7h1v1h-1zM27 7h1v1h-1zM34 7h1v1h-1zM3 8h1v1h-1zM15 8h1v1h-1zM21 8h1v1h-1zM27 8h1v1h-1zM33 8h1v1h-1zM3 9h1v1h-1zM13 9h2v1h-2zM19 9h2v1h-2zM27 9h1v1h-1zM31 9h2v1h-2zM2 10h3v1h-3zM8 10h1v1h-1zM14 10h4v1h-4zM20 10h4v1h-4zM26 10h3v1h-3zM32 10h4v1h-4z" fill="#ff0000"/></svg>
</div>
<div class="a" style="left:4px;top:198px;width:198px;height:20px;background:#f1f4ee;overflow:hidden">
<div class="a" style="left:0;top:0;width:199px;height:1px;background:#d3d1ca"></div>
<div class="a" style="left:81px;top:0;width:1px;height:21px;background:#d0cdc5"></div>
<div class="a" style="left:138px;top:0;width:1px;height:21px;background:#d0cdc5"></div>
<svg class="a" style="left:4px;top:5px" width="12" height="12"><path d="M6 10.5L11.2 5.3H8.2V0.8H3.8V5.3H0.8Z" fill="url(#gd)" stroke="#a0300a" stroke-width="0.9"/></svg>
<svg class="a" style="left:20px;top:2px" width="42" height="19"><path d="M0 4h3v1h-3zM4 4h3v1h-3zM8 4h9v1h-9zM20 4h9v1h-9zM30 4h2v1h-2zM34 4h2v1h-2zM1 5h1v1h-1zM5 5h1v1h-1zM7 5h1v1h-1zM11 5h1v1h-1zM13 5h1v1h-1zM16 5h2v1h-2zM22 5h1v1h-1zM25 5h1v1h-1zM29 5h1v1h-1zM31 5h1v1h-1zM34 5h1v1h-1zM1 6h1v1h-1zM5 6h1v1h-1zM7 6h1v1h-1zM13 6h1v1h-1zM17 6h1v1h-1zM22 6h1v1h-1zM25 6h1v1h-1zM29 6h1v1h-1zM32 6h1v1h-1zM34 6h1v1h-1zM1 7h1v1h-1zM5 7h1v1h-1zM7 7h3v1h-3zM13 7h1v1h-1zM17 7h1v1h-1zM22 7h1v1h-1zM25 7h4v1h-4zM33 7h1v1h-1zM1 8h1v1h-1zM5 8h1v1h-1zM10 8h2v1h-2zM13 8h1v1h-1zM17 8h2v1h-2zM22 8h1v1h-1zM25 8h1v1h-1zM33 8h1v1h-1zM1 9h1v1h-1zM5 9h1v1h-1zM7 9h1v1h-1zM11 9h1v1h-1zM13 9h1v1h-1zM17 9h2v1h-2zM22 9h1v1h-1zM25 9h1v1h-1zM33 9h1v1h-1zM2 10h3v1h-3zM7 10h4v1h-4zM12 10h5v1h-5zM18 10h4v1h-4zM24 10h3v1h-3zM32 10h3v1h-3z" fill="#000"/></svg>
<svg class="a" style="left:100px;top:2px" width="42" height="19"><path d="M3 4h1v1h-1zM9 4h1v1h-1zM15 4h1v1h-1zM27 4h3v1h-3zM31 4h3v1h-3zM2 5h2v1h-2zM8 5h2v1h-2zM14 5h2v1h-2zM27 5h1v1h-1zM34 5h1v1h-1zM3 6h1v1h-1zM9 6h1v1h-1zM15 6h1v1h-1zM26 6h1v1h-1zM34 6h1v1h-1zM3 7h1v1h-1zM9 7h1v1h-1zM15 7h1v1h-1zM26 7h3v1h-3zM33 7h1v1h-1zM3 8h1v1h-1zM9 8h1v1h-1zM15 8h1v1h-1zM26 8h1v1h-1zM29 8h1v1h-1zM34 8h2v1h-2zM3 9h1v1h-1zM9 9h1v1h-1zM15 9h1v1h-1zM26 9h1v1h-1zM29 9h1v1h-1zM35 9h1v1h-1zM2 10h3v1h-3zM8 10h3v1h-3zM14 10h3v1h-3zM20 10h1v1h-1zM27 10h2v1h-2zM32 10h3v1h-3z" fill="#ff0000"/></svg>
<svg class="a" style="left:157px;top:2px" width="42" height="19"><path d="M3 4h1v1h-1zM9 4h1v1h-1zM15 4h1v1h-1zM27 4h3v1h-3zM33 4h3v1h-3zM2 5h2v1h-2zM8 5h2v1h-2zM14 5h2v1h-2zM27 5h1v1h-1zM33 5h1v1h-1zM3 6h1v1h-1zM9 6h1v1h-1zM15 6h1v1h-1zM26 6h1v1h-1zM32 6h1v1h-1zM3 7h1v1h-1zM9 7h1v1h-1zM15 7h1v1h-1zM26 7h3v1h-3zM32 7h3v1h-3zM3 8h1v1h-1zM9 8h1v1h-1zM15 8h1v1h-1zM26 8h1v1h-1zM29 8h1v1h-1zM32 8h1v1h-1zM35 8h1v1h-1zM3 9h1v1h-1zM9 9h1v1h-1zM15 9h1v1h-1zM26 9h1v1h-1zM29 9h1v1h-1zM32 9h1v1h-1zM35 9h1v1h-1zM2 10h3v1h-3zM8 10h3v1h-3zM14 10h3v1h-3zM20 10h1v1h-1zM27 10h2v1h-2zM33 10h2v1h-2z" fill="#ff0000"/></svg>
</div>
<div class="a" style="left:4px;top:218px;width:198px;height:20px;background:#f1f4ee;overflow:hidden">
<div class="a" style="left:0;top:0;width:199px;height:1px;background:#d3d1ca"></div>
<div class="a" style="left:81px;top:0;width:1px;height:21px;background:#d0cdc5"></div>
<div class="a" style="left:138px;top:0;width:1px;height:21px;background:#d0cdc5"></div>
<svg class="a" style="left:4px;top:5px" width="12" height="12"><path d="M6 10.5L11.2 5.3H8.2V0.8H3.8V5.3H0.8Z" fill="url(#gd)" stroke="#a0300a" stroke-width="0.9"/></svg>
<svg class="a" style="left:20px;top:2px" width="42" height="19"><path d="M1 4h3v1h-3zM6 4h3v1h-3zM10 4h7v1h-7zM18 4h3v1h-3zM22 4h3v1h-3zM26 4h9v1h-9zM2 5h3v1h-3zM7 5h1v1h-1zM11 5h1v1h-1zM13 5h1v1h-1zM16 5h2v1h-2zM19 5h1v1h-1zM23 5h1v1h-1zM25 5h1v1h-1zM29 5h1v1h-1zM31 5h1v1h-1zM34 5h2v1h-2zM1 6h1v1h-1zM4 6h1v1h-1zM7 6h1v1h-1zM11 6h1v1h-1zM13 6h1v1h-1zM17 6h1v1h-1zM19 6h1v1h-1zM23 6h1v1h-1zM25 6h1v1h-1zM31 6h1v1h-1zM35 6h1v1h-1zM1 7h1v1h-1zM4 7h1v1h-1zM7 7h1v1h-1zM11 7h1v1h-1zM13 7h1v1h-1zM17 7h1v1h-1zM19 7h1v1h-1zM23 7h1v1h-1zM25 7h3v1h-3zM31 7h1v1h-1zM35 7h1v1h-1zM1 8h5v1h-5zM7 8h1v1h-1zM11 8h1v1h-1zM13 8h1v1h-1zM17 8h1v1h-1zM19 8h1v1h-1zM23 8h1v1h-1zM28 8h2v1h-2zM31 8h1v1h-1zM35 8h1v1h-1zM0 9h1v1h-1zM5 9h1v1h-1zM7 9h1v1h-1zM11 9h1v1h-1zM13 9h1v1h-1zM17 9h1v1h-1zM19 9h1v1h-1zM23 9h1v1h-1zM25 9h1v1h-1zM29 9h1v1h-1zM31 9h1v1h-1zM35 9h1v1h-1zM0 10h2v1h-2zM4 10h3v1h-3zM8 10h3v1h-3zM12 10h5v1h-5zM20 10h3v1h-3zM25 10h4v1h-4zM30 10h5v1h-5z" fill="#000"/></svg>
<svg class="a" style="left:100px;top:2px" width="42" height="19"><path d="M2 4h3v1h-3zM13 4h5v1h-5zM21 4h3v1h-3zM27 4h2v1h-2zM32 4h3v1h-3zM1 5h1v1h-1zM5 5h1v1h-1zM17 5h1v1h-1zM21 5h1v1h-1zM26 5h1v1h-1zM29 5h1v1h-1zM31 5h1v1h-1zM35 5h1v1h-1zM1 6h1v1h-1zM5 6h1v1h-1zM16 6h1v1h-1zM20 6h1v1h-1zM26 6h1v1h-1zM29 6h1v1h-1zM31 6h1v1h-1zM35 6h1v1h-1zM1 7h1v1h-1zM5 7h1v1h-1zM16 7h1v1h-1zM20 7h3v1h-3zM26 7h1v1h-1zM29 7h1v1h-1zM31 7h1v1h-1zM35 7h1v1h-1zM1 8h1v1h-1zM5 8h1v1h-1zM16 8h1v1h-1zM20 8h1v1h-1zM23 8h1v1h-1zM27 8h3v1h-3zM31 8h1v1h-1zM35 8h1v1h-1zM1 9h1v1h-1zM5 9h1v1h-1zM15 9h1v1h-1zM20 9h1v1h-1zM23 9h1v1h-1zM28 9h2v1h-2zM31 9h1v1h-1zM35 9h1v1h-1zM2 10h3v1h-3zM8 10h1v1h-1zM15 10h1v1h-1zM21 10h2v1h-2zM26 10h3v1h-3zM32 10h3v1h-3z" fill="#ff0000"/></svg>
<svg class="a" style="left:157px;top:2px" width="42" height="19"><path d="M2 4h3v1h-3zM13 4h5v1h-5zM21 4h3v1h-3zM27 4h2v1h-2zM34 4h1v1h-1zM1 5h1v1h-1zM5 5h1v1h-1zM17 5h1v1h-1zM21 5h1v1h-1zM26 5h1v1h-1zM29 5h1v1h-1zM33 5h2v1h-2zM1 6h1v1h-1zM5 6h1v1h-1zM16 6h1v1h-1zM20 6h1v1h-1zM26 6h1v1h-1zM29 6h1v1h-1zM32 6h1v1h-1zM34 6h1v1h-1zM1 7h1v1h-1zM5 7h1v1h-1zM16 7h1v1h-1zM20 7h3v1h-3zM26 7h1v1h-1zM29 7h1v1h-1zM32 7h1v1h-1zM34 7h1v1h-1zM1 8h1v1h-1zM5 8h1v1h-1zM16 8h1v1h-1zM20 8h1v1h-1zM23 8h1v1h-1zM27 8h3v1h-3zM31 8h1v1h-1zM34 8h1v1h-1zM1 9h1v1h-1zM5 9h1v1h-1zM15 9h1v1h-1zM20 9h1v1h-1zM23 9h1v1h-1zM28 9h2v1h-2zM32 9h4v1h-4zM2 10h3v1h-3zM8 10h1v1h-1zM15 10h1v1h-1zM21 10h2v1h-2zM26 10h3v1h-3zM33 10h3v1h-3z" fill="#ff0000"/></svg>
</div>
<div class="a" style="left:4px;top:238px;width:198px;height:20px;background:#f1f4ee;overflow:hidden">
<div class="a" style="left:0;top:0;width:199px;height:1px;background:#d3d1ca"></div>
<div class="a" style="left:81px;top:0;width:1px;height:21px;background:#d0cdc5"></div>
<div class="a" style="left:138px;top:0;width:1px;height:21px;background:#d0cdc5"></div>
<svg class="a" style="left:4px;top:5px" width="12" height="12"><defs><linearGradient id="gu" x1="0" y1="0" x2="1" y2="1"><stop offset="0" stop-color="#8af08a"/><stop offset="1" stop-color="#10a010"/></linearGradient><linearGradient id="gd" x1="0" y1="0" x2="1" y2="1"><stop offset="0" stop-color="#ffb080"/><stop offset="1" stop-color="#e04010"/></linearGradient></defs><path d="M6 0.8L11.2 6H8.2V10.5H3.8V6H0.8Z" fill="url(#gu)" stroke="#0a6a0a" stroke-width="0.9"/></svg>
<svg class="a" style="left:20px;top:2px" width="42" height="19"><path d="M0 4h3v1h-3zM4 4h3v1h-3zM8 4h9v1h-9zM19 4h5v1h-5zM25 4h3v1h-3zM30 4h5v1h-5zM1 5h1v1h-1zM5 5h1v1h-1zM7 5h1v1h-1zM11 5h1v1h-1zM13 5h1v1h-1zM16 5h4v1h-4zM23 5h1v1h-1zM26 5h3v1h-3zM31 5h1v1h-1zM34 5h2v1h-2zM1 6h1v1h-1zM5 6h1v1h-1zM7 6h1v1h-1zM13 6h1v1h-1zM17 6h2v1h-2zM25 6h1v1h-1zM28 6h1v1h-1zM31 6h1v1h-1zM35 6h1v1h-1zM1 7h1v1h-1zM5 7h1v1h-1zM7 7h3v1h-3zM13 7h1v1h-1zM17 7h2v1h-2zM25 7h1v1h-1zM28 7h1v1h-1zM31 7h1v1h-1zM35 7h1v1h-1zM1 8h1v1h-1zM5 8h1v1h-1zM10 8h2v1h-2zM13 8h1v1h-1zM17 8h2v1h-2zM25 8h5v1h-5zM31 8h1v1h-1zM35 8h1v1h-1zM1 9h1v1h-1zM5 9h1v1h-1zM7 9h1v1h-1zM11 9h1v1h-1zM13 9h1v1h-1zM17 9h3v1h-3zM24 9h1v1h-1zM29 9h1v1h-1zM31 9h1v1h-1zM35 9h1v1h-1zM2 10h3v1h-3zM7 10h4v1h-4zM12 10h5v1h-5zM19 10h7v1h-7zM28 10h7v1h-7z" fill="#000"/></svg>
<svg class="a" style="left:100px;top:2px" width="42" height="19"><path d="M3 4h1v1h-1zM15 4h1v1h-1zM21 4h3v1h-3zM25 4h5v1h-5zM31 4h3v1h-3zM2 5h2v1h-2zM14 5h2v1h-2zM21 5h1v1h-1zM29 5h1v1h-1zM34 5h1v1h-1zM3 6h1v1h-1zM15 6h1v1h-1zM20 6h1v1h-1zM28 6h1v1h-1zM34 6h1v1h-1zM3 7h1v1h-1zM15 7h1v1h-1zM20 7h3v1h-3zM28 7h1v1h-1zM33 7h1v1h-1zM3 8h1v1h-1zM15 8h1v1h-1zM20 8h1v1h-1zM23 8h1v1h-1zM28 8h1v1h-1zM34 8h2v1h-2zM3 9h1v1h-1zM15 9h1v1h-1zM20 9h1v1h-1zM23 9h1v1h-1zM27 9h1v1h-1zM35 9h1v1h-1zM2 10h3v1h-3zM8 10h1v1h-1zM14 10h3v1h-3zM21 10h2v1h-2zM27 10h1v1h-1zM32 10h3v1h-3z" fill="#0000ff"/></svg>
<svg class="a" style="left:157px;top:2px" width="42" height="19"><path d="M3 4h1v1h-1zM15 4h1v1h-1zM21 4h3v1h-3zM25 4h5v1h-5zM32 4h3v1h-3zM2 5h2v1h-2zM14 5h2v1h-2zM21 5h1v1h-1zM29 5h1v1h-1zM31 5h1v1h-1zM35 5h1v1h-1zM3 6h1v1h-1zM15 6h1v1h-1zM20 6h1v1h-1zM28 6h1v1h-1zM31 6h1v1h-1zM35 6h1v1h-1zM3 7h1v1h-1zM15 7h1v1h-1zM20 7h3v1h-3zM28 7h1v1h-1zM32 7h3v1h-3zM3 8h1v1h-1zM15 8h1v1h-1zM20 8h1v1h-1zM23 8h1v1h-1zM28 8h1v1h-1zM31 8h2v1h-2zM34 8h2v1h-2zM3 9h1v1h-1zM15 9h1v1h-1zM20 9h1v1h-1zM23 9h1v1h-1zM27 9h1v1h-1zM31 9h1v1h-1zM35 9h1v1h-1zM2 10h3v1h-3zM8 10h1v1h-1zM14 10h3v1h-3zM21 10h2v1h-2zM27 10h1v1h-1zM32 10h3v1h-3z" fill="#0000ff"/></svg>
</div>
<div class="a" style="left:4px;top:258px;width:198px;height:20px;background:#f1f4ee;overflow:hidden">
<div class="a" style="left:0;top:0;width:199px;height:1px;background:#d3d1ca"></div>
<div class="a" style="left:81px;top:0;width:1px;height:21px;background:#d0cdc5"></div>
<div class="a" style="left:138px;top:0;width:1px;height:21px;background:#d0cdc5"></div>
<svg class="a" style="left:4px;top:5px" width="12" height="12"><path d="M6 10.5L11.2 5.3H8.2V0.8H3.8V5.3H0.8Z" fill="url(#gd)" stroke="#a0300a" stroke-width="0.9"/></svg>
<svg class="a" style="left:20px;top:2px" width="42" height="19"><path d="M0 4h9v1h-9zM10 4h6v1h-6zM19 4h10v1h-10zM30 4h5v1h-5zM1 5h1v1h-1zM5 5h1v1h-1zM7 5h1v1h-1zM11 5h1v1h-1zM13 5h1v1h-1zM16 5h1v1h-1zM18 5h2v1h-2zM23 5h1v1h-1zM25 5h1v1h-1zM29 5h1v1h-1zM31 5h1v1h-1zM35 5h1v1h-1zM1 6h1v1h-1zM3 6h1v1h-1zM7 6h1v1h-1zM11 6h1v1h-1zM13 6h1v1h-1zM16 6h1v1h-1zM18 6h1v1h-1zM25 6h1v1h-1zM29 6h1v1h-1zM31 6h1v1h-1zM35 6h1v1h-1zM1 7h3v1h-3zM7 7h1v1h-1zM11 7h1v1h-1zM13 7h3v1h-3zM18 7h1v1h-1zM25 7h4v1h-4zM31 7h4v1h-4zM1 8h1v1h-1zM3 8h1v1h-1zM7 8h1v1h-1zM11 8h1v1h-1zM13 8h1v1h-1zM15 8h2v1h-2zM18 8h1v1h-1zM22 8h4v1h-4zM29 8h1v1h-1zM31 8h1v1h-1zM1 9h1v1h-1zM5 9h1v1h-1zM7 9h1v1h-1zM11 9h1v1h-1zM13 9h1v1h-1zM16 9h1v1h-1zM18 9h2v1h-2zM23 9h1v1h-1zM25 9h1v1h-1zM29 9h1v1h-1zM31 9h1v1h-1zM0 10h6v1h-6zM8 10h3v1h-3zM12 10h3v1h-3zM16 10h2v1h-2zM19 10h10v1h-10zM30 10h3v1h-3z" fill="#000"/></svg>
<svg class="a" style="left:100px;top:2px" width="42" height="19"><path d="M2 4h3v1h-3zM15 4h3v1h-3zM19 4h5v1h-5zM28 4h1v1h-1zM33 4h2v1h-2zM1 5h1v1h-1zM5 5h1v1h-1zM15 5h1v1h-1zM23 5h1v1h-1zM27 5h2v1h-2zM32 5h1v1h-1zM35 5h1v1h-1zM1 6h1v1h-1zM5 6h1v1h-1zM14 6h1v1h-1zM22 6h1v1h-1zM26 6h1v1h-1zM28 6h1v1h-1zM32 6h1v1h-1zM35 6h1v1h-1zM1 7h1v1h-1zM5 7h1v1h-1zM14 7h3v1h-3zM22 7h1v1h-1zM26 7h1v1h-1zM28 7h1v1h-1zM32 7h1v1h-1zM35 7h1v1h-1zM1 8h1v1h-1zM5 8h1v1h-1zM14 8h1v1h-1zM17 8h1v1h-1zM22 8h1v1h-1zM25 8h1v1h-1zM28 8h1v1h-1zM33 8h3v1h-3zM1 9h1v1h-1zM5 9h1v1h-1zM14 9h1v1h-1zM17 9h1v1h-1zM21 9h1v1h-1zM26 9h4v1h-4zM34 9h2v1h-2zM2 10h3v1h-3zM8 10h1v1h-1zM15 10h2v1h-2zM21 10h1v1h-1zM27 10h3v1h-3zM32 10h3v1h-3z" fill="#ff0000"/></svg>
<svg class="a" style="left:157px;top:2px" width="42" height="19"><path d="M2 4h3v1h-3zM15 4h3v1h-3zM19 4h5v1h-5zM26 4h3v1h-3zM31 4h3v1h-3zM1 5h1v1h-1zM5 5h1v1h-1zM15 5h1v1h-1zM23 5h1v1h-1zM26 5h1v1h-1zM34 5h1v1h-1zM1 6h1v1h-1zM5 6h1v1h-1zM14 6h1v1h-1zM22 6h1v1h-1zM26 6h3v1h-3zM34 6h1v1h-1zM1 7h1v1h-1zM5 7h1v1h-1zM14 7h3v1h-3zM22 7h1v1h-1zM26 7h1v1h-1zM29 7h1v1h-1zM33 7h1v1h-1zM1 8h1v1h-1zM5 8h1v1h-1zM14 8h1v1h-1zM17 8h1v1h-1zM22 8h1v1h-1zM29 8h1v1h-1zM34 8h2v1h-2zM1 9h1v1h-1zM5 9h1v1h-1zM14 9h1v1h-1zM17 9h1v1h-1zM21 9h1v1h-1zM29 9h1v1h-1zM35 9h1v1h-1zM2 10h3v1h-3zM8 10h1v1h-1zM15 10h2v1h-2zM21 10h1v1h-1zM26 10h3v1h-3zM32 10h3v1h-3z" fill="#ff0000"/></svg>
</div>
<div class="a" style="left:4px;top:278px;width:198px;height:20px;background:#f1f4ee;overflow:hidden">
<div class="a" style="left:0;top:0;width:199px;height:1px;background:#d3d1ca"></div>
<div class="a" style="left:81px;top:0;width:1px;height:21px;background:#d0cdc5"></div>
<div class="a" style="left:138px;top:0;width:1px;height:21px;background:#d0cdc5"></div>
<svg class="a" style="left:4px;top:5px" width="12" height="12"><path d="M6 10.5L11.2 5.3H8.2V0.8H3.8V5.3H0.8Z" fill="url(#gd)" stroke="#a0300a" stroke-width="0.9"/></svg>
<svg class="a" style="left:20px;top:2px" width="42" height="19"><path d="M0 4h9v1h-9zM10 4h6v1h-6zM19 4h7v1h-7zM28 4h8v1h-8zM1 5h1v1h-1zM5 5h1v1h-1zM7 5h1v1h-1zM11 5h1v1h-1zM13 5h1v1h-1zM16 5h1v1h-1zM18 5h2v1h-2zM23 5h1v1h-1zM25 5h1v1h-1zM29 5h1v1h-1zM31 5h1v1h-1zM35 5h1v1h-1zM1 6h1v1h-1zM3 6h1v1h-1zM7 6h1v1h-1zM11 6h1v1h-1zM13 6h1v1h-1zM16 6h1v1h-1zM18 6h1v1h-1zM25 6h1v1h-1zM29 6h1v1h-1zM31 6h1v1h-1zM33 6h1v1h-1zM1 7h3v1h-3zM7 7h1v1h-1zM11 7h1v1h-1zM13 7h3v1h-3zM18 7h1v1h-1zM25 7h5v1h-5zM31 7h3v1h-3zM1 8h1v1h-1zM3 8h1v1h-1zM7 8h1v1h-1zM11 8h1v1h-1zM13 8h1v1h-1zM15 8h2v1h-2zM18 8h1v1h-1zM25 8h1v1h-1zM29 8h1v1h-1zM31 8h1v1h-1zM33 8h1v1h-1zM1 9h1v1h-1zM5 9h1v1h-1zM7 9h1v1h-1zM11 9h1v1h-1zM13 9h1v1h-1zM16 9h1v1h-1zM18 9h2v1h-2zM25 9h1v1h-1zM29 9h1v1h-1zM31 9h1v1h-1zM0 10h6v1h-6zM8 10h3v1h-3zM12 10h3v1h-3zM16 10h2v1h-2zM19 10h7v1h-7zM28 10h5v1h-5z" fill="#000"/></svg>
<svg class="a" style="left:100px;top:2px" width="42" height="19"><path d="M3 4h1v1h-1zM14 4h3v1h-3zM20 4h3v1h-3zM26 4h3v1h-3zM34 4h1v1h-1zM2 5h2v1h-2zM14 5h1v1h-1zM20 5h1v1h-1zM25 5h1v1h-1zM29 5h1v1h-1zM33 5h2v1h-2zM3 6h1v1h-1zM14 6h3v1h-3zM20 6h3v1h-3zM29 6h1v1h-1zM32 6h1v1h-1zM34 6h1v1h-1zM3 7h1v1h-1zM14 7h1v1h-1zM17 7h1v1h-1zM20 7h1v1h-1zM23 7h1v1h-1zM28 7h1v1h-1zM32 7h1v1h-1zM34 7h1v1h-1zM3 8h1v1h-1zM17 8h1v1h-1zM23 8h1v1h-1zM27 8h1v1h-1zM31 8h1v1h-1zM34 8h1v1h-1zM3 9h1v1h-1zM17 9h1v1h-1zM23 9h1v1h-1zM25 9h2v1h-2zM32 9h4v1h-4zM2 10h3v1h-3zM8 10h1v1h-1zM14 10h3v1h-3zM20 10h3v1h-3zM26 10h4v1h-4zM33 10h3v1h-3z" fill="#ff0000"/></svg>
<svg class="a" style="left:157px;top:2px" width="42" height="19"><path d="M3 4h1v1h-1zM14 4h3v1h-3zM20 4h3v1h-3zM26 4h3v1h-3zM32 4h3v1h-3zM2 5h2v1h-2zM14 5h1v1h-1zM20 5h1v1h-1zM25 5h1v1h-1zM29 5h1v1h-1zM31 5h1v1h-1zM35 5h1v1h-1zM3 6h1v1h-1zM14 6h3v1h-3zM20 6h3v1h-3zM29 6h1v1h-1zM31 6h1v1h-1zM35 6h1v1h-1zM3 7h1v1h-1zM14 7h1v1h-1zM17 7h1v1h-1zM20 7h1v1h-1zM23 7h1v1h-1zM28 7h1v1h-1zM32 7h3v1h-3zM3 8h1v1h-1zM17 8h1v1h-1zM23 8h1v1h-1zM27 8h1v1h-1zM31 8h2v1h-2zM34 8h2v1h-2zM3 9h1v1h-1zM17 9h1v1h-1zM23 9h1v1h-1zM25 9h2v1h-2zM31 9h1v1h-1zM35 9h1v1h-1zM2 10h3v1h-3zM8 10h1v1h-1zM14 10h3v1h-3zM20 10h3v1h-3zM26 10h4v1h-4zM32 10h3v1h-3z" fill="#ff0000"/></svg>
</div>
<div class="a" style="left:4px;top:298px;width:198px;height:20px;background:#f1f4ee;overflow:hidden">
<div class="a" style="left:0;top:0;width:199px;height:1px;background:#d3d1ca"></div>
<div class="a" style="left:81px;top:0;width:1px;height:21px;background:#d0cdc5"></div>
<div class="a" style="left:138px;top:0;width:1px;height:21px;background:#d0cdc5"></div>
<svg class="a" style="left:4px;top:5px" width="12" height="12"><defs><linearGradient id="gu" x1="0" y1="0" x2="1" y2="1"><stop offset="0" stop-color="#8af08a"/><stop offset="1" stop-color="#10a010"/></linearGradient><linearGradient id="gd" x1="0" y1="0" x2="1" y2="1"><stop offset="0" stop-color="#ffb080"/><stop offset="1" stop-color="#e04010"/></linearGradient></defs><path d="M6 0.8L11.2 6H8.2V10.5H3.8V6H0.8Z" fill="url(#gu)" stroke="#0a6a0a" stroke-width="0.9"/></svg>
<svg class="a" style="left:20px;top:2px" width="42" height="19"><path d="M0 4h9v1h-9zM10 4h6v1h-6zM20 4h9v1h-9zM30 4h2v1h-2zM34 4h2v1h-2zM1 5h1v1h-1zM5 5h1v1h-1zM7 5h1v1h-1zM11 5h1v1h-1zM13 5h1v1h-1zM16 5h1v1h-1zM22 5h1v1h-1zM25 5h1v1h-1zM29 5h1v1h-1zM31 5h1v1h-1zM34 5h1v1h-1zM1 6h1v1h-1zM3 6h1v1h-1zM7 6h1v1h-1zM11 6h1v1h-1zM13 6h1v1h-1zM16 6h1v1h-1zM22 6h1v1h-1zM25 6h1v1h-1zM29 6h1v1h-1zM32 6h1v1h-1zM34 6h1v1h-1zM1 7h3v1h-3zM7 7h1v1h-1zM11 7h1v1h-1zM13 7h3v1h-3zM22 7h1v1h-1zM25 7h4v1h-4zM33 7h1v1h-1zM1 8h1v1h-1zM3 8h1v1h-1zM7 8h1v1h-1zM11 8h1v1h-1zM13 8h1v1h-1zM15 8h2v1h-2zM18 8h1v1h-1zM22 8h1v1h-1zM25 8h1v1h-1zM33 8h1v1h-1zM1 9h1v1h-1zM5 9h1v1h-1zM7 9h1v1h-1zM11 9h1v1h-1zM13 9h1v1h-1zM16 9h1v1h-1zM18 9h1v1h-1zM22 9h1v1h-1zM25 9h1v1h-1zM33 9h1v1h-1zM0 10h6v1h-6zM8 10h3v1h-3zM12 10h3v1h-3zM16 10h6v1h-6zM24 10h3v1h-3zM32 10h3v1h-3z" fill="#000"/></svg>
<svg class="a" style="left:100px;top:2px" width="42" height="19"><path d="M3 4h1v1h-1zM7 4h3v1h-3zM15 4h3v1h-3zM25 4h3v1h-3zM32 4h3v1h-3zM2 5h2v1h-2zM10 5h1v1h-1zM15 5h1v1h-1zM28 5h1v1h-1zM31 5h1v1h-1zM35 5h1v1h-1zM3 6h1v1h-1zM10 6h1v1h-1zM14 6h1v1h-1zM28 6h1v1h-1zM35 6h1v1h-1zM3 7h1v1h-1zM9 7h1v1h-1zM14 7h3v1h-3zM27 7h1v1h-1zM34 7h1v1h-1zM3 8h1v1h-1zM10 8h2v1h-2zM14 8h1v1h-1zM17 8h1v1h-1zM28 8h2v1h-2zM33 8h1v1h-1zM3 9h1v1h-1zM11 9h1v1h-1zM14 9h1v1h-1zM17 9h1v1h-1zM29 9h1v1h-1zM31 9h2v1h-2zM2 10h3v1h-3zM8 10h3v1h-3zM15 10h2v1h-2zM20 10h1v1h-1zM26 10h3v1h-3zM32 10h4v1h-4z" fill="#0000ff"/></svg>
<svg class="a" style="left:157px;top:2px" width="42" height="19"><path d="M3 4h1v1h-1zM7 4h3v1h-3zM15 4h3v1h-3zM25 4h3v1h-3zM33 4h3v1h-3zM2 5h2v1h-2zM10 5h1v1h-1zM15 5h1v1h-1zM28 5h1v1h-1zM33 5h1v1h-1zM3 6h1v1h-1zM10 6h1v1h-1zM14 6h1v1h-1zM28 6h1v1h-1zM32 6h1v1h-1zM3 7h1v1h-1zM9 7h1v1h-1zM14 7h3v1h-3zM27 7h1v1h-1zM32 7h3v1h-3zM3 8h1v1h-1zM10 8h2v1h-2zM14 8h1v1h-1zM17 8h1v1h-1zM28 8h2v1h-2zM32 8h1v1h-1zM35 8h1v1h-1zM3 9h1v1h-1zM11 9h1v1h-1zM14 9h1v1h-1zM17 9h1v1h-1zM29 9h1v1h-1zM32 9h1v1h-1zM35 9h1v1h-1zM2 10h3v1h-3zM8 10h3v1h-3zM15 10h2v1h-2zM20 10h1v1h-1zM26 10h3v1h-3zM33 10h2v1h-2z" fill="#0000ff"/></svg>
</div>
<div class="a" style="left:4px;top:318px;width:198px;height:20px;background:#f1f4ee;overflow:hidden">
<div class="a" style="left:0;top:0;width:199px;height:1px;background:#d3d1ca"></div>
<div class="a" style="left:81px;top:0;width:1px;height:21px;background:#d0cdc5"></div>
<div class="a" style="left:138px;top:0;width:1px;height:21px;background:#d0cdc5"></div>
<svg class="a" style="left:4px;top:5px" width="12" height="12"><path d="M6 10.5L11.2 5.3H8.2V0.8H3.8V5.3H0.8Z" fill="url(#gd)" stroke="#a0300a" stroke-width="0.9"/></svg>
<svg class="a" style="left:20px;top:2px" width="42" height="19"><path d="M1 4h10v1h-10zM12 4h5v1h-5zM20 4h9v1h-9zM30 4h2v1h-2zM34 4h2v1h-2zM0 5h2v1h-2zM5 5h1v1h-1zM7 5h1v1h-1zM11 5h1v1h-1zM13 5h1v1h-1zM17 5h1v1h-1zM22 5h1v1h-1zM25 5h1v1h-1zM29 5h1v1h-1zM31 5h1v1h-1zM34 5h1v1h-1zM0 6h1v1h-1zM7 6h1v1h-1zM11 6h1v1h-1zM13 6h1v1h-1zM17 6h1v1h-1zM22 6h1v1h-1zM25 6h1v1h-1zM29 6h1v1h-1zM32 6h1v1h-1zM34 6h1v1h-1zM0 7h1v1h-1zM7 7h4v1h-4zM13 7h4v1h-4zM22 7h1v1h-1zM25 7h4v1h-4zM33 7h1v1h-1zM0 8h1v1h-1zM4 8h4v1h-4zM11 8h1v1h-1zM13 8h1v1h-1zM18 8h1v1h-1zM22 8h1v1h-1zM25 8h1v1h-1zM33 8h1v1h-1zM0 9h2v1h-2zM5 9h1v1h-1zM7 9h1v1h-1zM11 9h1v1h-1zM13 9h1v1h-1zM18 9h1v1h-1zM22 9h1v1h-1zM25 9h1v1h-1zM33 9h1v1h-1zM1 10h10v1h-10zM12 10h3v1h-3zM18 10h4v1h-4zM24 10h3v1h-3zM32 10h3v1h-3z" fill="#000"/></svg>
<svg class="a" style="left:100px;top:2px" width="42" height="19"><path d="M2 4h3v1h-3zM8 4h3v1h-3zM15 4h1v1h-1zM26 4h3v1h-3zM33 4h2v1h-2zM1 5h1v1h-1zM5 5h1v1h-1zM7 5h1v1h-1zM11 5h1v1h-1zM14 5h2v1h-2zM25 5h1v1h-1zM29 5h1v1h-1zM32 5h1v1h-1zM35 5h1v1h-1zM5 6h1v1h-1zM7 6h1v1h-1zM11 6h1v1h-1zM15 6h1v1h-1zM25 6h1v1h-1zM29 6h1v1h-1zM32 6h1v1h-1zM35 6h1v1h-1zM4 7h1v1h-1zM7 7h1v1h-1zM11 7h1v1h-1zM15 7h1v1h-1zM26 7h3v1h-3zM32 7h1v1h-1zM35 7h1v1h-1zM3 8h1v1h-1zM7 8h1v1h-1zM11 8h1v1h-1zM15 8h1v1h-1zM25 8h2v1h-2zM28 8h2v1h-2zM33 8h3v1h-3zM1 9h2v1h-2zM7 9h1v1h-1zM11 9h1v1h-1zM15 9h1v1h-1zM25 9h1v1h-1zM29 9h1v1h-1zM34 9h2v1h-2zM2 10h4v1h-4zM8 10h3v1h-3zM14 10h3v1h-3zM20 10h1v1h-1zM26 10h3v1h-3zM32 10h3v1h-3z" fill="#ff0000"/></svg>
<svg class="a" style="left:157px;top:2px" width="42" height="19"><path d="M2 4h3v1h-3zM8 4h3v1h-3zM15 4h1v1h-1zM27 4h2v1h-2zM31 4h5v1h-5zM1 5h1v1h-1zM5 5h1v1h-1zM7 5h1v1h-1zM11 5h1v1h-1zM14 5h2v1h-2zM26 5h1v1h-1zM29 5h1v1h-1zM35 5h1v1h-1zM5 6h1v1h-1zM7 6h1v1h-1zM11 6h1v1h-1zM15 6h1v1h-1zM26 6h1v1h-1zM29 6h1v1h-1zM34 6h1v1h-1zM4 7h1v1h-1zM7 7h1v1h-1zM11 7h1v1h-1zM15 7h1v1h-1zM26 7h1v1h-1zM29 7h1v1h-1zM34 7h1v1h-1zM3 8h1v1h-1zM7 8h1v1h-1zM11 8h1v1h-1zM15 8h1v1h-1zM27 8h3v1h-3zM34 8h1v1h-1zM1 9h2v1h-2zM7 9h1v1h-1zM11 9h1v1h-1zM15 9h1v1h-1zM28 9h2v1h-2zM33 9h1v1h-1zM2 10h4v1h-4zM8 10h3v1h-3zM14 10h3v1h-3zM20 10h1v1h-1zM26 10h3v1h-3zM33 10h1v1h-1z" fill="#ff0000"/></svg>
</div>
<div class="a" style="left:4px;top:338px;width:198px;height:20px;background:#f1f4ee;overflow:hidden">
<div class="a" style="left:0;top:0;width:199px;height:1px;background:#d3d1ca"></div>
<div class="a" style="left:81px;top:0;width:1px;height:21px;background:#d0cdc5"></div>
<div class="a" style="left:138px;top:0;width:1px;height:21px;background:#d0cdc5"></div>
<svg class="a" style="left:4px;top:5px" width="12" height="12"><path d="M6 10.5L11.2 5.3H8.2V0.8H3.8V5.3H0.8Z" fill="url(#gd)" stroke="#a0300a" stroke-width="0.9"/></svg>
<svg class="a" style="left:20px;top:2px" width="42" height="19"><path d="M1 4h10v1h-10zM12 4h5v1h-5zM19 4h7v1h-7zM28 4h8v1h-8zM0 5h2v1h-2zM5 5h1v1h-1zM7 5h1v1h-1zM11 5h1v1h-1zM13 5h1v1h-1zM17 5h3v1h-3zM23 5h1v1h-1zM25 5h1v1h-1zM29 5h1v1h-1zM31 5h1v1h-1zM35 5h1v1h-1zM0 6h1v1h-1zM7 6h1v1h-1zM11 6h1v1h-1zM13 6h1v1h-1zM17 6h2v1h-2zM25 6h1v1h-1zM29 6h1v1h-1zM31 6h1v1h-1zM33 6h1v1h-1zM0 7h1v1h-1zM7 7h4v1h-4zM13 7h4v1h-4zM18 7h1v1h-1zM25 7h5v1h-5zM31 7h3v1h-3zM0 8h1v1h-1zM4 8h4v1h-4zM11 8h1v1h-1zM13 8h1v1h-1zM18 8h1v1h-1zM25 8h1v1h-1zM29 8h1v1h-1zM31 8h1v1h-1zM33 8h1v1h-1zM0 9h2v1h-2zM5 9h1v1h-1zM7 9h1v1h-1zM11 9h1v1h-1zM13 9h1v1h-1zM18 9h2v1h-2zM25 9h1v1h-1zM29 9h1v1h-1zM31 9h1v1h-1zM1 10h10v1h-10zM12 10h3v1h-3zM19 10h7v1h-7zM28 10h5v1h-5z" fill="#000"/></svg>
<svg class="a" style="left:100px;top:2px" width="42" height="19"><path d="M2 4h3v1h-3zM14 4h3v1h-3zM21 4h2v1h-2zM27 4h2v1h-2zM33 4h3v1h-3zM1 5h1v1h-1zM5 5h1v1h-1zM13 5h1v1h-1zM17 5h1v1h-1zM20 5h1v1h-1zM23 5h1v1h-1zM26 5h1v1h-1zM29 5h1v1h-1zM33 5h1v1h-1zM5 6h1v1h-1zM17 6h1v1h-1zM20 6h1v1h-1zM23 6h1v1h-1zM26 6h1v1h-1zM29 6h1v1h-1zM32 6h1v1h-1zM4 7h1v1h-1zM16 7h1v1h-1zM20 7h1v1h-1zM23 7h1v1h-1zM26 7h1v1h-1zM29 7h1v1h-1zM32 7h3v1h-3zM3 8h1v1h-1zM15 8h1v1h-1zM21 8h3v1h-3zM27 8h3v1h-3zM32 8h1v1h-1zM35 8h1v1h-1zM1 9h2v1h-2zM13 9h2v1h-2zM22 9h2v1h-2zM28 9h2v1h-2zM32 9h1v1h-1zM35 9h1v1h-1zM2 10h4v1h-4zM8 10h1v1h-1zM14 10h4v1h-4zM20 10h3v1h-3zM26 10h3v1h-3zM33 10h2v1h-2z" fill="#ff0000"/></svg>
<svg class="a" style="left:157px;top:2px" width="42" height="19"><path d="M2 4h3v1h-3zM13 4h3v1h-3zM20 4h3v1h-3zM26 4h3v1h-3zM34 4h1v1h-1zM1 5h1v1h-1zM5 5h1v1h-1zM16 5h1v1h-1zM19 5h1v1h-1zM23 5h1v1h-1zM25 5h1v1h-1zM29 5h1v1h-1zM33 5h2v1h-2zM5 6h1v1h-1zM16 6h1v1h-1zM19 6h1v1h-1zM23 6h1v1h-1zM25 6h1v1h-1zM29 6h1v1h-1zM32 6h1v1h-1zM34 6h1v1h-1zM4 7h1v1h-1zM15 7h1v1h-1zM19 7h1v1h-1zM23 7h1v1h-1zM25 7h1v1h-1zM29 7h1v1h-1zM32 7h1v1h-1zM34 7h1v1h-1zM3 8h1v1h-1zM16 8h2v1h-2zM19 8h1v1h-1zM23 8h1v1h-1zM25 8h1v1h-1zM29 8h1v1h-1zM31 8h1v1h-1zM34 8h1v1h-1zM1 9h2v1h-2zM17 9h1v1h-1zM19 9h1v1h-1zM23 9h1v1h-1zM25 9h1v1h-1zM29 9h1v1h-1zM32 9h4v1h-4zM2 10h4v1h-4zM8 10h1v1h-1zM14 10h3v1h-3zM20 10h3v1h-3zM26 10h3v1h-3zM33 10h3v1h-3z" fill="#ff0000"/></svg>
</div>
<div class="a" style="left:4px;top:358px;width:198px;height:20px;background:#f1f4ee;overflow:hidden">
<div class="a" style="left:0;top:0;width:199px;height:1px;background:#d3d1ca"></div>
<div class="a" style="left:81px;top:0;width:1px;height:21px;background:#d0cdc5"></div>
<div class="a" style="left:138px;top:0;width:1px;height:21px;background:#d0cdc5"></div>
<svg class="a" style="left:4px;top:5px" width="12" height="12"><defs><linearGradient id="gu" x1="0" y1="0" x2="1" y2="1"><stop offset="0" stop-color="#8af08a"/><stop offset="1" stop-color="#10a010"/></linearGradient><linearGradient id="gd" x1="0" y1="0" x2="1" y2="1"><stop offset="0" stop-color="#ffb080"/><stop offset="1" stop-color="#e04010"/></linearGradient></defs><path d="M6 0.8L11.2 6H8.2V10.5H3.8V6H0.8Z" fill="url(#gu)" stroke="#0a6a0a" stroke-width="0.9"/></svg>
<svg class="a" style="left:20px;top:2px" width="42" height="19"><path d="M0 4h9v1h-9zM10 4h6v1h-6zM19 4h3v1h-3zM24 4h3v1h-3zM28 4h7v1h-7zM1 5h1v1h-1zM5 5h1v1h-1zM7 5h1v1h-1zM11 5h1v1h-1zM13 5h1v1h-1zM16 5h1v1h-1zM20 5h3v1h-3zM25 5h1v1h-1zM29 5h1v1h-1zM31 5h1v1h-1zM34 5h2v1h-2zM1 6h1v1h-1zM3 6h1v1h-1zM7 6h1v1h-1zM11 6h1v1h-1zM13 6h1v1h-1zM16 6h1v1h-1zM19 6h1v1h-1zM22 6h1v1h-1zM25 6h1v1h-1zM29 6h1v1h-1zM31 6h1v1h-1zM35 6h1v1h-1zM1 7h3v1h-3zM7 7h1v1h-1zM11 7h1v1h-1zM13 7h3v1h-3zM19 7h1v1h-1zM22 7h1v1h-1zM25 7h1v1h-1zM29 7h1v1h-1zM31 7h1v1h-1zM35 7h1v1h-1zM1 8h1v1h-1zM3 8h1v1h-1zM7 8h1v1h-1zM11 8h1v1h-1zM13 8h1v1h-1zM15 8h2v1h-2zM19 8h5v1h-5zM25 8h1v1h-1zM29 8h1v1h-1zM31 8h1v1h-1zM35 8h1v1h-1zM1 9h1v1h-1zM5 9h1v1h-1zM7 9h1v1h-1zM11 9h1v1h-1zM13 9h1v1h-1zM16 9h1v1h-1zM18 9h1v1h-1zM23 9h1v1h-1zM25 9h1v1h-1zM29 9h1v1h-1zM31 9h1v1h-1zM35 9h1v1h-1zM0 10h6v1h-6zM8 10h3v1h-3zM12 10h3v1h-3zM16 10h4v1h-4zM22 10h3v1h-3zM26 10h3v1h-3zM30 10h5v1h-5z" fill="#000"/></svg>
<svg class="a" style="left:100px;top:2px" width="42" height="19"><path d="M3 4h1v1h-1zM14 4h3v1h-3zM20 4h3v1h-3zM25 4h5v1h-5zM34 4h1v1h-1zM2 5h2v1h-2zM14 5h1v1h-1zM19 5h1v1h-1zM23 5h1v1h-1zM29 5h1v1h-1zM33 5h2v1h-2zM3 6h1v1h-1zM14 6h3v1h-3zM19 6h1v1h-1zM23 6h1v1h-1zM28 6h1v1h-1zM32 6h1v1h-1zM34 6h1v1h-1zM3 7h1v1h-1zM14 7h1v1h-1zM17 7h1v1h-1zM20 7h3v1h-3zM28 7h1v1h-1zM32 7h1v1h-1zM34 7h1v1h-1zM3 8h1v1h-1zM17 8h1v1h-1zM19 8h2v1h-2zM22 8h2v1h-2zM28 8h1v1h-1zM31 8h1v1h-1zM34 8h1v1h-1zM3 9h1v1h-1zM17 9h1v1h-1zM19 9h1v1h-1zM23 9h1v1h-1zM27 9h1v1h-1zM32 9h4v1h-4zM2 10h3v1h-3zM8 10h1v1h-1zM14 10h3v1h-3zM20 10h3v1h-3zM27 10h1v1h-1zM33 10h3v1h-3z" fill="#0000ff"/></svg>
<svg class="a" style="left:157px;top:2px" width="42" height="19"><path d="M3 4h1v1h-1zM14 4h3v1h-3zM20 4h3v1h-3zM25 4h5v1h-5zM32 4h3v1h-3zM2 5h2v1h-2zM14 5h1v1h-1zM19 5h1v1h-1zM23 5h1v1h-1zM29 5h1v1h-1zM31 5h1v1h-1zM35 5h1v1h-1zM3 6h1v1h-1zM14 6h3v1h-3zM19 6h1v1h-1zM23 6h1v1h-1zM28 6h1v1h-1zM31 6h1v1h-1zM35 6h1v1h-1zM3 7h1v1h-1zM14 7h1v1h-1zM17 7h1v1h-1zM20 7h3v1h-3zM28 7h1v1h-1zM32 7h3v1h-3zM3 8h1v1h-1zM17 8h1v1h-1zM19 8h2v1h-2zM22 8h2v1h-2zM28 8h1v1h-1zM31 8h2v1h-2zM34 8h2v1h-2zM3 9h1v1h-1zM17 9h1v1h-1zM19 9h1v1h-1zM23 9h1v1h-1zM27 9h1v1h-1zM31 9h1v1h-1zM35 9h1v1h-1zM2 10h3v1h-3zM8 10h1v1h-1zM14 10h3v1h-3zM20 10h3v1h-3zM27 10h1v1h-1zM32 10h3v1h-3z" fill="#0000ff"/></svg>
</div>
<div class="a" style="left:4px;top:378px;width:198px;height:20px;background:#fbf6cc;overflow:hidden">
<div class="a" style="left:0;top:0;width:199px;height:1px;background:#d3d1ca"></div>
<div class="a" style="left:81px;top:0;width:1px;height:21px;background:#d0cdc5"></div>
<div class="a" style="left:138px;top:0;width:1px;height:21px;background:#d0cdc5"></div>
<svg class="a" style="left:4px;top:5px" width="12" height="12"><defs><linearGradient id="gu" x1="0" y1="0" x2="1" y2="1"><stop offset="0" stop-color="#8af08a"/><stop offset="1" stop-color="#10a010"/></linearGradient><linearGradient id="gd" x1="0" y1="0" x2="1" y2="1"><stop offset="0" stop-color="#ffb080"/><stop offset="1" stop-color="#e04010"/></linearGradient></defs><path d="M6 0.8L11.2 6H8.2V10.5H3.8V6H0.8Z" fill="url(#gu)" stroke="#0a6a0a" stroke-width="0.9"/></svg>
<svg class="a" style="left:20px;top:2px" width="30" height="19"><path d="M1 4h5v1h-5zM7 4h4v1h-4zM13 4h3v1h-3zM18 4h5v1h-5zM0 5h2v1h-2zM5 5h1v1h-1zM7 5h1v1h-1zM10 5h2v1h-2zM14 5h1v1h-1zM19 5h1v1h-1zM22 5h2v1h-2zM0 6h1v1h-1zM6 6h1v1h-1zM11 6h1v1h-1zM14 6h1v1h-1zM19 6h1v1h-1zM23 6h1v1h-1zM0 7h1v1h-1zM6 7h1v1h-1zM11 7h1v1h-1zM14 7h1v1h-1zM19 7h1v1h-1zM23 7h1v1h-1zM0 8h1v1h-1zM4 8h3v1h-3zM11 8h1v1h-1zM14 8h1v1h-1zM17 8h1v1h-1zM19 8h1v1h-1zM23 8h1v1h-1zM0 9h2v1h-2zM5 9h1v1h-1zM7 9h1v1h-1zM10 9h1v1h-1zM14 9h1v1h-1zM17 9h1v1h-1zM19 9h1v1h-1zM23 9h1v1h-1zM1 10h5v1h-5zM7 10h4v1h-4zM13 10h10v1h-10z" fill="#000"/></svg>
<svg class="a" style="left:100px;top:2px" width="42" height="19"><path d="M4 4h1v1h-1zM7 4h5v1h-5zM16 4h1v1h-1zM25 4h3v1h-3zM32 4h3v1h-3zM3 5h2v1h-2zM11 5h1v1h-1zM15 5h2v1h-2zM28 5h1v1h-1zM31 5h1v1h-1zM35 5h1v1h-1zM2 6h1v1h-1zM4 6h1v1h-1zM10 6h1v1h-1zM14 6h1v1h-1zM16 6h1v1h-1zM28 6h1v1h-1zM31 6h1v1h-1zM35 6h1v1h-1zM2 7h1v1h-1zM4 7h1v1h-1zM10 7h1v1h-1zM14 7h1v1h-1zM16 7h1v1h-1zM27 7h1v1h-1zM31 7h1v1h-1zM35 7h1v1h-1zM1 8h1v1h-1zM4 8h1v1h-1zM10 8h1v1h-1zM13 8h1v1h-1zM16 8h1v1h-1zM28 8h2v1h-2zM31 8h1v1h-1zM35 8h1v1h-1zM2 9h4v1h-4zM9 9h1v1h-1zM14 9h4v1h-4zM29 9h1v1h-1zM31 9h1v1h-1zM35 9h1v1h-1zM3 10h3v1h-3zM9 10h1v1h-1zM15 10h3v1h-3zM20 10h1v1h-1zM26 10h3v1h-3zM32 10h3v1h-3z" fill="#0000ff"/></svg>
<svg class="a" style="left:157px;top:2px" width="42" height="19"><path d="M4 4h1v1h-1zM7 4h5v1h-5zM14 4h3v1h-3zM25 4h3v1h-3zM32 4h3v1h-3zM3 5h2v1h-2zM11 5h1v1h-1zM14 5h1v1h-1zM28 5h1v1h-1zM31 5h1v1h-1zM35 5h1v1h-1zM2 6h1v1h-1zM4 6h1v1h-1zM10 6h1v1h-1zM14 6h3v1h-3zM28 6h1v1h-1zM31 6h1v1h-1zM35 6h1v1h-1zM2 7h1v1h-1zM4 7h1v1h-1zM10 7h1v1h-1zM14 7h1v1h-1zM17 7h1v1h-1zM27 7h1v1h-1zM31 7h1v1h-1zM35 7h1v1h-1zM1 8h1v1h-1zM4 8h1v1h-1zM10 8h1v1h-1zM17 8h1v1h-1zM28 8h2v1h-2zM31 8h1v1h-1zM35 8h1v1h-1zM2 9h4v1h-4zM9 9h1v1h-1zM17 9h1v1h-1zM29 9h1v1h-1zM31 9h1v1h-1zM35 9h1v1h-1zM3 10h3v1h-3zM9 10h1v1h-1zM14 10h3v1h-3zM20 10h1v1h-1zM26 10h3v1h-3zM32 10h3v1h-3z" fill="#0000ff"/></svg>
</div>
<div class="a" style="left:4px;top:398px;width:198px;height:20px;background:#f1f4ee;overflow:hidden">
<div class="a" style="left:0;top:0;width:199px;height:1px;background:#d3d1ca"></div>
<div class="a" style="left:81px;top:0;width:1px;height:21px;background:#d0cdc5"></div>
<div class="a" style="left:138px;top:0;width:1px;height:21px;background:#d0cdc5"></div>
<svg class="a" style="left:4px;top:5px" width="12" height="12"><path d="M6 10.5L11.2 5.3H8.2V0.8H3.8V5.3H0.8Z" fill="url(#gd)" stroke="#a0300a" stroke-width="0.9"/></svg>
<svg class="a" style="left:20px;top:2px" width="30" height="19"><path d="M6 4h5v1h-5zM14 4h4v1h-4zM20 4h3v1h-3zM7 5h1v1h-1zM10 5h2v1h-2zM16 5h1v1h-1zM21 5h1v1h-1zM7 6h1v1h-1zM11 6h1v1h-1zM16 6h1v1h-1zM21 6h1v1h-1zM7 7h1v1h-1zM11 7h1v1h-1zM16 7h1v1h-1zM21 7h1v1h-1zM7 8h1v1h-1zM11 8h2v1h-2zM16 8h1v1h-1zM21 8h1v1h-1zM7 9h1v1h-1zM11 9h2v1h-2zM16 9h1v1h-1zM21 9h1v1h-1zM6 10h5v1h-5zM12 10h4v1h-4zM20 10h3v1h-3zM0 12h7v1h-7z" fill="#a8a8a8"/></svg>
<svg class="a" style="left:94px;top:2px" width="48" height="19"><path d="M3 4h1v1h-1zM8 4h3v1h-3zM13 4h3v1h-3zM19 4h5v1h-5zM26 4h3v1h-3zM38 4h3v1h-3zM2 5h2v1h-2zM7 5h1v1h-1zM11 5h1v1h-1zM16 5h1v1h-1zM23 5h1v1h-1zM26 5h1v1h-1zM37 5h1v1h-1zM41 5h1v1h-1zM3 6h1v1h-1zM7 6h1v1h-1zM11 6h1v1h-1zM16 6h1v1h-1zM22 6h1v1h-1zM26 6h3v1h-3zM37 6h1v1h-1zM41 6h1v1h-1zM3 7h1v1h-1zM7 7h1v1h-1zM11 7h1v1h-1zM15 7h1v1h-1zM22 7h1v1h-1zM26 7h1v1h-1zM29 7h1v1h-1zM38 7h3v1h-3zM3 8h1v1h-1zM7 8h1v1h-1zM11 8h1v1h-1zM16 8h2v1h-2zM22 8h1v1h-1zM29 8h1v1h-1zM37 8h2v1h-2zM40 8h2v1h-2zM3 9h1v1h-1zM7 9h1v1h-1zM11 9h1v1h-1zM17 9h1v1h-1zM21 9h1v1h-1zM29 9h1v1h-1zM37 9h1v1h-1zM41 9h1v1h-1zM2 10h3v1h-3zM8 10h3v1h-3zM14 10h3v1h-3zM21 10h1v1h-1zM26 10h3v1h-3zM32 10h1v1h-1zM38 10h3v1h-3z" fill="#ff0000"/></svg>
<svg class="a" style="left:151px;top:2px" width="48" height="19"><path d="M3 4h1v1h-1zM8 4h3v1h-3zM13 4h3v1h-3zM19 4h5v1h-5zM26 4h3v1h-3zM38 4h3v1h-3zM2 5h2v1h-2zM7 5h1v1h-1zM11 5h1v1h-1zM16 5h1v1h-1zM23 5h1v1h-1zM26 5h1v1h-1zM37 5h1v1h-1zM41 5h1v1h-1zM3 6h1v1h-1zM7 6h1v1h-1zM11 6h1v1h-1zM16 6h1v1h-1zM22 6h1v1h-1zM26 6h3v1h-3zM37 6h1v1h-1zM41 6h1v1h-1zM3 7h1v1h-1zM7 7h1v1h-1zM11 7h1v1h-1zM15 7h1v1h-1zM22 7h1v1h-1zM26 7h1v1h-1zM29 7h1v1h-1zM38 7h3v1h-3zM3 8h1v1h-1zM7 8h1v1h-1zM11 8h1v1h-1zM16 8h2v1h-2zM22 8h1v1h-1zM29 8h1v1h-1zM37 8h2v1h-2zM40 8h2v1h-2zM3 9h1v1h-1zM7 9h1v1h-1zM11 9h1v1h-1zM17 9h1v1h-1zM21 9h1v1h-1zM29 9h1v1h-1zM37 9h1v1h-1zM41 9h1v1h-1zM2 10h3v1h-3zM8 10h3v1h-3zM14 10h3v1h-3zM21 10h1v1h-1zM26 10h3v1h-3zM32 10h1v1h-1zM38 10h3v1h-3z" fill="#ff0000"/></svg>
</div>
<div class="a" style="left:4px;top:418px;width:198px;height:9px;background:#f1f4ee;overflow:hidden">
<div class="a" style="left:0;top:0;width:199px;height:1px;background:#d3d1ca"></div>
<div class="a" style="left:81px;top:0;width:1px;height:21px;background:#d0cdc5"></div>
<div class="a" style="left:138px;top:0;width:1px;height:21px;background:#d0cdc5"></div>
<svg class="a" style="left:4px;top:5px" width="12" height="12"><defs><linearGradient id="gu" x1="0" y1="0" x2="1" y2="1"><stop offset="0" stop-color="#8af08a"/><stop offset="1" stop-color="#10a010"/></linearGradient><linearGradient id="gd" x1="0" y1="0" x2="1" y2="1"><stop offset="0" stop-color="#ffb080"/><stop offset="1" stop-color="#e04010"/></linearGradient></defs><path d="M6 0.8L11.2 6H8.2V10.5H3.8V6H0.8Z" fill="url(#gu)" stroke="#0a6a0a" stroke-width="0.9"/></svg>
<svg class="a" style="left:20px;top:2px" width="36" height="19"><path d="M0 4h2v1h-2zM4 4h7v1h-7zM14 4h2v1h-2zM20 4h3v1h-3zM26 4h3v1h-3zM1 5h2v1h-2zM5 5h1v1h-1zM7 5h1v1h-1zM10 5h1v1h-1zM13 5h3v1h-3zM19 5h1v1h-1zM23 5h1v1h-1zM25 5h1v1h-1zM29 5h1v1h-1zM1 6h3v1h-3zM5 6h2v1h-2zM11 6h1v1h-1zM15 6h1v1h-1zM19 6h1v1h-1zM23 6h1v1h-1zM25 6h1v1h-1zM29 6h1v1h-1zM1 7h1v1h-1zM3 7h1v1h-1zM5 7h2v1h-2zM11 7h1v1h-1zM15 7h1v1h-1zM19 7h1v1h-1zM23 7h1v1h-1zM25 7h1v1h-1zM29 7h1v1h-1zM1 8h1v1h-1zM3 8h4v1h-4zM11 8h1v1h-1zM15 8h1v1h-1zM19 8h1v1h-1zM23 8h1v1h-1zM25 8h1v1h-1zM29 8h1v1h-1zM1 9h1v1h-1zM4 9h4v1h-4zM10 9h1v1h-1zM15 9h1v1h-1zM19 9h1v1h-1zM23 9h1v1h-1zM25 9h1v1h-1zM29 9h1v1h-1zM0 10h3v1h-3zM5 10h1v1h-1zM7 10h4v1h-4zM14 10h3v1h-3zM20 10h3v1h-3zM26 10h3v1h-3zM7 11h2v1h-2zM11 11h1v1h-1zM7 12h5v1h-5z" fill="#000"/></svg>
<svg class="a" style="left:94px;top:2px" width="48" height="19"><path d="M3 4h1v1h-1zM8 4h3v1h-3zM14 4h3v1h-3zM19 4h3v1h-3zM31 4h5v1h-5zM40 4h1v1h-1zM2 5h2v1h-2zM8 5h1v1h-1zM13 5h1v1h-1zM17 5h1v1h-1zM22 5h1v1h-1zM35 5h1v1h-1zM39 5h2v1h-2zM3 6h1v1h-1zM8 6h3v1h-3zM13 6h1v1h-1zM17 6h1v1h-1zM22 6h1v1h-1zM34 6h1v1h-1zM38 6h1v1h-1zM40 6h1v1h-1zM3 7h1v1h-1zM8 7h1v1h-1zM11 7h1v1h-1zM14 7h3v1h-3zM21 7h1v1h-1zM34 7h1v1h-1zM38 7h1v1h-1zM40 7h1v1h-1zM3 8h1v1h-1zM11 8h1v1h-1zM13 8h2v1h-2zM16 8h2v1h-2zM22 8h2v1h-2zM34 8h1v1h-1zM37 8h1v1h-1zM40 8h1v1h-1zM3 9h1v1h-1zM11 9h1v1h-1zM13 9h1v1h-1zM17 9h1v1h-1zM23 9h1v1h-1zM33 9h1v1h-1zM38 9h4v1h-4zM2 10h3v1h-3zM8 10h3v1h-3zM14 10h3v1h-3zM20 10h3v1h-3zM26 10h1v1h-1zM33 10h1v1h-1zM39 10h3v1h-3z" fill="#0000ff"/></svg>
<svg class="a" style="left:151px;top:2px" width="48" height="19"><path d="M3 4h1v1h-1zM8 4h3v1h-3zM14 4h3v1h-3zM19 4h3v1h-3zM31 4h5v1h-5zM40 4h1v1h-1zM2 5h2v1h-2zM8 5h1v1h-1zM13 5h1v1h-1zM17 5h1v1h-1zM22 5h1v1h-1zM35 5h1v1h-1zM39 5h2v1h-2zM3 6h1v1h-1zM8 6h3v1h-3zM13 6h1v1h-1zM17 6h1v1h-1zM22 6h1v1h-1zM34 6h1v1h-1zM38 6h1v1h-1zM40 6h1v1h-1zM3 7h1v1h-1zM8 7h1v1h-1zM11 7h1v1h-1zM14 7h3v1h-3zM21 7h1v1h-1zM34 7h1v1h-1zM38 7h1v1h-1zM40 7h1v1h-1zM3 8h1v1h-1zM11 8h1v1h-1zM13 8h2v1h-2zM16 8h2v1h-2zM22 8h2v1h-2zM34 8h1v1h-1zM37 8h1v1h-1zM40 8h1v1h-1zM3 9h1v1h-1zM11 9h1v1h-1zM13 9h1v1h-1zM17 9h1v1h-1zM23 9h1v1h-1zM33 9h1v1h-1zM38 9h4v1h-4zM2 10h3v1h-3zM8 10h3v1h-3zM14 10h3v1h-3zM20 10h3v1h-3zM26 10h1v1h-1zM33 10h1v1h-1zM39 10h3v1h-3z" fill="#0000ff"/></svg>
</div>
<div class="a" style="left:202px;top:117px;width:15px;height:309px;background:#f4f4f0"></div>
<div class="a" style="left:202px;top:117px;width:15px;height:16px;background:linear-gradient(#d6e2fa,#bccff5);border:1px solid #fff;border-radius:2px"></div>
<svg class="a" style="left:205px;top:122px" width="9" height="6"><path d="M1 5L4.5 1.5L8 5" stroke="#4d6185" stroke-width="2" fill="none"/></svg>
<div class="a" style="left:202px;top:410px;width:15px;height:16px;background:linear-gradient(#d6e2fa,#bccff5);border:1px solid #fff;border-radius:2px"></div>
<svg class="a" style="left:205px;top:415px" width="9" height="6"><path d="M1 1L4.5 4.5L8 1" stroke="#4d6185" stroke-width="2" fill="none"/></svg>
<div class="a" style="left:202px;top:135px;width:15px;height:154px;background:linear-gradient(90deg,#cad9fa,#b8cbf3);border:1px solid #fff;border-radius:2px"></div>
<svg class="a" style="left:206px;top:209px" width="7" height="7"><path d="M0 0.5H7M0 2.5H7M0 4.5H7M0 6.5H7" stroke="#8ea6d8"/></svg>
<div class="a" style="left:3px;top:427px;width:216px;height:2px;background:#000"></div>
<div class="a" style="left:6px;top:427px;width:44px;height:18px;background:#fafcf8;border:2px solid #000;border-top:none"></div>
<svg class="a" style="left:16px;top:426px" width="30" height="20"><path d="M5 4h1v1h-1zM15 4h6v1h-6zM0 5h11v1h-11zM15 5h1v1h-1zM20 5h1v1h-1zM3 6h1v1h-1zM7 6h1v1h-1zM15 6h1v1h-1zM20 6h1v1h-1zM1 7h9v1h-9zM15 7h6v1h-6zM1 8h1v1h-1zM4 8h1v1h-1zM6 8h1v1h-1zM9 8h1v1h-1zM1 9h1v1h-1zM3 9h1v1h-1zM7 9h1v1h-1zM9 9h1v1h-1zM13 9h4v1h-4zM19 9h4v1h-4zM1 10h9v1h-9zM13 10h1v1h-1zM16 10h1v1h-1zM19 10h1v1h-1zM22 10h1v1h-1zM1 11h1v1h-1zM3 11h1v1h-1zM7 11h1v1h-1zM9 11h1v1h-1zM13 11h1v1h-1zM16 11h1v1h-1zM19 11h1v1h-1zM22 11h1v1h-1zM1 12h1v1h-1zM3 12h5v1h-5zM9 12h1v1h-1zM13 12h1v1h-1zM16 12h1v1h-1zM19 12h1v1h-1zM22 12h1v1h-1zM1 13h1v1h-1zM3 13h1v1h-1zM7 13h1v1h-1zM9 13h1v1h-1zM13 13h4v1h-4zM19 13h4v1h-4zM1 14h1v1h-1zM8 14h2v1h-2zM13 14h1v1h-1zM16 14h1v1h-1zM19 14h1v1h-1zM22 14h1v1h-1z" fill="#000"/></svg>
<svg class="a" style="left:59px;top:426px" width="30" height="20"><path d="M2 4h1v1h-1zM6 4h1v1h-1zM8 4h1v1h-1zM13 4h10v1h-10zM2 5h1v1h-1zM6 5h1v1h-1zM9 5h1v1h-1zM13 5h1v1h-1zM16 5h1v1h-1zM22 5h1v1h-1zM1 6h1v1h-1zM6 6h4v1h-4zM13 6h1v1h-1zM16 6h5v1h-5zM22 6h1v1h-1zM1 7h1v1h-1zM4 7h3v1h-3zM13 7h1v1h-1zM15 7h2v1h-2zM19 7h1v1h-1zM22 7h1v1h-1zM0 8h3v1h-3zM6 8h5v1h-5zM13 8h2v1h-2zM17 8h2v1h-2zM22 8h1v1h-1zM2 9h1v1h-1zM4 9h3v1h-3zM13 9h1v1h-1zM16 9h1v1h-1zM19 9h1v1h-1zM22 9h1v1h-1zM1 10h1v1h-1zM6 10h1v1h-1zM9 10h1v1h-1zM13 10h3v1h-3zM17 10h1v1h-1zM20 10h3v1h-3zM0 11h4v1h-4zM6 11h1v1h-1zM8 11h1v1h-1zM13 11h1v1h-1zM18 11h1v1h-1zM22 11h1v1h-1zM4 12h1v1h-1zM7 12h1v1h-1zM10 12h1v1h-1zM13 12h1v1h-1zM17 12h1v1h-1zM22 12h1v1h-1zM2 13h2v1h-2zM6 13h1v1h-1zM8 13h1v1h-1zM10 13h1v1h-1zM13 13h1v1h-1zM18 13h1v1h-1zM22 13h1v1h-1zM0 14h2v1h-2zM4 14h2v1h-2zM9 14h2v1h-2zM13 14h10v1h-10z" fill="#979797"/></svg>
<div class="a" style="left:94px;top:431px;width:1px;height:12px;background:#979797"></div>
<div class="a" style="left:0px;top:447px;width:219px;height:1px;background:#f4f4f0"></div>
<div class="a" style="left:0px;top:450px;width:219px;height:1px;background:#a9a9a9"></div>
<div class="a" style="left:0px;top:451px;width:219px;height:1px;background:#fff"></div>
<div class="a" style="left:3px;top:453px;width:203px;height:13px;background:linear-gradient(90deg,#5f95de,#74a6e5 50%,#86b2ea)"></div>
<svg class="a" style="left:5px;top:449px" width="30" height="20"><path d="M2 4h7v1h-7zM14 4h1v1h-1zM19 4h1v1h-1zM2 5h1v1h-1zM8 5h1v1h-1zM13 5h4v1h-4zM20 5h1v1h-1zM2 6h7v1h-7zM10 6h1v1h-1zM13 6h1v1h-1zM16 6h7v1h-7zM2 7h1v1h-1zM10 7h1v1h-1zM13 7h2v1h-2zM16 7h1v1h-1zM3 8h8v1h-8zM13 8h1v1h-1zM15 8h2v1h-2zM18 8h3v1h-3zM7 9h1v1h-1zM12 9h5v1h-5zM18 9h1v1h-1zM20 9h1v1h-1zM0 10h11v1h-11zM13 10h1v1h-1zM16 10h1v1h-1zM18 10h1v1h-1zM20 10h1v1h-1zM3 11h1v1h-1zM7 11h1v1h-1zM13 11h2v1h-2zM16 11h1v1h-1zM18 11h1v1h-1zM20 11h1v1h-1zM4 12h1v1h-1zM7 12h1v1h-1zM13 12h1v1h-1zM15 12h2v1h-2zM18 12h1v1h-1zM20 12h1v1h-1zM22 12h1v1h-1zM4 13h1v1h-1zM7 13h1v1h-1zM13 13h1v1h-1zM16 13h1v1h-1zM18 13h1v1h-1zM20 13h1v1h-1zM22 13h1v1h-1zM6 14h2v1h-2zM12 14h1v1h-1zM15 14h3v1h-3zM20 14h3v1h-3z" fill="#fff"/></svg>
<svg class="a" style="left:209px;top:457px" width="8" height="7"><path d="M1 1L7 6M7 1L1 6" stroke="#000" stroke-width="1.8"/></svg>
<div class="a" style="left:3px;top:467px;width:216px;height:126px;border:1px solid #a7a59d;border-bottom:none;border-right:none;background:#f7f9f4"></div>
<svg class="a" style="left:0px;top:468px" width="60" height="124"><path d="M17.5 0V124M38.5 0V124" stroke="#a0a0a0" stroke-dasharray="1 1"/></svg>
<svg class="a" style="left:39px;top:471px" width="30" height="17"><path d="M1 8.5H11" stroke="#a8a8a8" stroke-dasharray="1 1"/><rect x="13.5" y="1.5" width="13" height="13" rx="2" fill="#f3d35a" stroke="#b8962a"/><path d="M22 4Q19 3 18.5 7L17.5 12M16 7.5H21" stroke="#8a6a10" stroke-width="1.3" fill="none"/><path d="M24 10L27 13L24 16L21 13Z" fill="#f7e08a" stroke="#b8962a" stroke-width="0.8"/></svg>
<svg class="a" style="left:74px;top:471px" width="72" height="19"><path d="M25 4h3v1h-3zM27 5h1v1h-1zM50 5h1v1h-1zM1 6h4v1h-4zM8 6h4v1h-4zM14 6h4v1h-4zM20 6h3v1h-3zM27 6h1v1h-1zM32 6h3v1h-3zM37 6h2v1h-2zM40 6h2v1h-2zM43 6h4v1h-4zM49 6h4v1h-4zM56 6h3v1h-3zM61 6h2v1h-2zM64 6h2v1h-2zM4 7h1v1h-1zM7 7h1v1h-1zM11 7h1v1h-1zM13 7h1v1h-1zM17 7h1v1h-1zM19 7h1v1h-1zM23 7h1v1h-1zM27 7h1v1h-1zM31 7h1v1h-1zM35 7h1v1h-1zM38 7h2v1h-2zM46 7h1v1h-1zM50 7h1v1h-1zM55 7h1v1h-1zM59 7h1v1h-1zM62 7h2v1h-2zM1 8h4v1h-4zM7 8h1v1h-1zM13 8h1v1h-1zM19 8h5v1h-5zM27 8h1v1h-1zM31 8h5v1h-5zM38 8h1v1h-1zM43 8h4v1h-4zM50 8h1v1h-1zM55 8h1v1h-1zM59 8h1v1h-1zM62 8h1v1h-1zM1 9h1v1h-1zM4 9h1v1h-1zM7 9h1v1h-1zM11 9h1v1h-1zM13 9h1v1h-1zM17 9h1v1h-1zM19 9h1v1h-1zM27 9h1v1h-1zM31 9h1v1h-1zM38 9h1v1h-1zM43 9h1v1h-1zM46 9h1v1h-1zM50 9h1v1h-1zM55 9h1v1h-1zM59 9h1v1h-1zM62 9h1v1h-1zM1 10h3v1h-3zM5 10h1v1h-1zM8 10h3v1h-3zM14 10h3v1h-3zM20 10h4v1h-4zM25 10h5v1h-5zM32 10h4v1h-4zM37 10h4v1h-4zM43 10h3v1h-3zM47 10h1v1h-1zM50 10h4v1h-4zM56 10h3v1h-3zM61 10h4v1h-4z" fill="#000"/></svg>
<svg class="a" style="left:39px;top:489px" width="30" height="17"><path d="M1 8.5H11" stroke="#a8a8a8" stroke-dasharray="1 1"/><rect x="13.5" y="1.5" width="13" height="13" rx="2" fill="#f3d35a" stroke="#b8962a"/><path d="M22 4Q19 3 18.5 7L17.5 12M16 7.5H21" stroke="#8a6a10" stroke-width="1.3" fill="none"/><path d="M24 10L27 13L24 16L21 13Z" fill="#f7e08a" stroke="#b8962a" stroke-width="0.8"/></svg>
<svg class="a" style="left:74px;top:489px" width="24" height="19"><path d="M9 4h3v1h-3zM11 5h1v1h-1zM1 6h4v1h-4zM8 6h2v1h-2zM11 6h4v1h-4zM16 6h2v1h-2zM4 7h1v1h-1zM7 7h1v1h-1zM10 7h2v1h-2zM14 7h1v1h-1zM16 7h1v1h-1zM1 8h4v1h-4zM7 8h1v1h-1zM11 8h1v1h-1zM15 8h1v1h-1zM1 9h1v1h-1zM4 9h1v1h-1zM7 9h1v1h-1zM10 9h2v1h-2zM14 9h1v1h-1zM16 9h1v1h-1zM1 10h3v1h-3zM5 10h1v1h-1zM8 10h2v1h-2zM11 10h4v1h-4zM16 10h2v1h-2z" fill="#000"/></svg>
<svg class="a" style="left:39px;top:507px" width="30" height="17"><path d="M1 8.5H11" stroke="#a8a8a8" stroke-dasharray="1 1"/><rect x="13.5" y="1.5" width="13" height="13" rx="2" fill="#f3d35a" stroke="#b8962a"/><path d="M22 4Q19 3 18.5 7L17.5 12M16 7.5H21" stroke="#8a6a10" stroke-width="1.3" fill="none"/><path d="M24 10L27 13L24 16L21 13Z" fill="#f7e08a" stroke="#b8962a" stroke-width="0.8"/></svg>
<svg class="a" style="left:74px;top:507px" width="60" height="19"><path d="M7 4h3v1h-3zM13 4h3v1h-3zM21 4h1v1h-1zM9 5h1v1h-1zM15 5h1v1h-1zM38 5h1v1h-1zM1 6h4v1h-4zM9 6h1v1h-1zM15 6h1v1h-1zM19 6h3v1h-3zM26 6h2v1h-2zM29 6h1v1h-1zM31 6h4v1h-4zM37 6h4v1h-4zM44 6h3v1h-3zM49 6h2v1h-2zM52 6h2v1h-2zM4 7h1v1h-1zM9 7h1v1h-1zM15 7h1v1h-1zM21 7h1v1h-1zM25 7h1v1h-1zM28 7h2v1h-2zM34 7h1v1h-1zM38 7h1v1h-1zM43 7h1v1h-1zM47 7h1v1h-1zM50 7h2v1h-2zM1 8h4v1h-4zM9 8h1v1h-1zM15 8h1v1h-1zM21 8h1v1h-1zM25 8h1v1h-1zM29 8h1v1h-1zM31 8h4v1h-4zM38 8h1v1h-1zM43 8h1v1h-1zM47 8h1v1h-1zM50 8h1v1h-1zM1 9h1v1h-1zM4 9h1v1h-1zM9 9h1v1h-1zM15 9h1v1h-1zM21 9h1v1h-1zM25 9h1v1h-1zM28 9h2v1h-2zM31 9h1v1h-1zM34 9h1v1h-1zM38 9h1v1h-1zM43 9h1v1h-1zM47 9h1v1h-1zM50 9h1v1h-1zM1 10h3v1h-3zM5 10h1v1h-1zM7 10h5v1h-5zM13 10h5v1h-5zM19 10h5v1h-5zM26 10h2v1h-2zM29 10h1v1h-1zM31 10h3v1h-3zM35 10h1v1h-1zM38 10h4v1h-4zM44 10h3v1h-3zM49 10h4v1h-4zM29 11h1v1h-1zM25 12h4v1h-4z" fill="#000"/></svg>
<svg class="a" style="left:39px;top:525px" width="30" height="17"><path d="M1 8.5H11" stroke="#a8a8a8" stroke-dasharray="1 1"/><rect x="13.5" y="1.5" width="13" height="13" rx="2" fill="#f3d35a" stroke="#b8962a"/><path d="M22 4Q19 3 18.5 7L17.5 12M16 7.5H21" stroke="#8a6a10" stroke-width="1.3" fill="none"/><path d="M24 10L27 13L24 16L21 13Z" fill="#f7e08a" stroke="#b8962a" stroke-width="0.8"/></svg>
<svg class="a" style="left:74px;top:525px" width="78" height="19"><path d="M45 4h3v1h-3zM63 4h1v1h-1zM1 5h3v1h-3zM20 5h1v1h-1zM47 5h1v1h-1zM50 5h2v1h-2zM2 6h1v1h-1zM4 6h1v1h-1zM7 6h4v1h-4zM14 6h4v1h-4zM19 6h4v1h-4zM25 6h2v1h-2zM28 6h2v1h-2zM32 6h3v1h-3zM36 6h2v1h-2zM39 6h2v1h-2zM44 6h2v1h-2zM47 6h1v1h-1zM49 6h1v1h-1zM51 6h1v1h-1zM55 6h4v1h-4zM61 6h3v1h-3zM68 6h2v1h-2zM71 6h1v1h-1zM2 7h1v1h-1zM4 7h1v1h-1zM7 7h1v1h-1zM11 7h1v1h-1zM13 7h1v1h-1zM17 7h1v1h-1zM20 7h1v1h-1zM26 7h2v1h-2zM31 7h1v1h-1zM35 7h1v1h-1zM37 7h2v1h-2zM41 7h1v1h-1zM43 7h1v1h-1zM46 7h2v1h-2zM51 7h1v1h-1zM55 7h1v1h-1zM59 7h1v1h-1zM63 7h1v1h-1zM67 7h1v1h-1zM70 7h2v1h-2zM1 8h4v1h-4zM8 8h3v1h-3zM13 8h1v1h-1zM20 8h1v1h-1zM26 8h1v1h-1zM31 8h5v1h-5zM37 8h1v1h-1zM41 8h1v1h-1zM43 8h1v1h-1zM47 8h1v1h-1zM51 8h1v1h-1zM56 8h3v1h-3zM63 8h1v1h-1zM67 8h1v1h-1zM71 8h1v1h-1zM1 9h1v1h-1zM5 9h1v1h-1zM7 9h1v1h-1zM11 9h1v1h-1zM13 9h1v1h-1zM17 9h1v1h-1zM20 9h1v1h-1zM26 9h1v1h-1zM31 9h1v1h-1zM37 9h1v1h-1zM41 9h1v1h-1zM43 9h1v1h-1zM46 9h2v1h-2zM51 9h1v1h-1zM55 9h1v1h-1zM59 9h1v1h-1zM63 9h1v1h-1zM67 9h1v1h-1zM70 9h2v1h-2zM0 10h3v1h-3zM4 10h7v1h-7zM14 10h3v1h-3zM20 10h4v1h-4zM25 10h4v1h-4zM32 10h4v1h-4zM37 10h2v1h-2zM40 10h2v1h-2zM44 10h2v1h-2zM47 10h1v1h-1zM49 10h5v1h-5zM55 10h4v1h-4zM61 10h5v1h-5zM68 10h2v1h-2zM71 10h1v1h-1zM71 11h1v1h-1zM67 12h4v1h-4z" fill="#000"/></svg>
<svg class="a" style="left:39px;top:543px" width="30" height="17"><path d="M1 8.5H11" stroke="#a8a8a8" stroke-dasharray="1 1"/><rect x="13.5" y="1.5" width="13" height="13" rx="2" fill="#f3d35a" stroke="#b8962a"/><path d="M22 4Q19 3 18.5 7L17.5 12M16 7.5H21" stroke="#8a6a10" stroke-width="1.3" fill="none"/><path d="M24 10L27 13L24 16L21 13Z" fill="#f7e08a" stroke="#b8962a" stroke-width="0.8"/></svg>
<svg class="a" style="left:74px;top:543px" width="48" height="19"><path d="M1 6h6v1h-6zM9 6h3v1h-3zM14 6h3v1h-3zM19 6h4v1h-4zM26 6h4v1h-4zM31 6h4v1h-4zM38 6h3v1h-3zM4 7h2v1h-2zM8 7h1v1h-1zM10 7h1v1h-1zM13 7h1v1h-1zM17 7h1v1h-1zM19 7h1v1h-1zM23 7h1v1h-1zM25 7h1v1h-1zM29 7h2v1h-2zM32 7h1v1h-1zM34 7h1v1h-1zM37 7h1v1h-1zM41 7h1v1h-1zM1 8h4v1h-4zM6 8h3v1h-3zM10 8h1v1h-1zM13 8h5v1h-5zM20 8h3v1h-3zM25 8h1v1h-1zM29 8h2v1h-2zM32 8h1v1h-1zM34 8h1v1h-1zM37 8h5v1h-5zM1 9h1v1h-1zM4 9h1v1h-1zM6 9h2v1h-2zM9 9h1v1h-1zM13 9h1v1h-1zM19 9h1v1h-1zM23 9h1v1h-1zM25 9h1v1h-1zM29 9h2v1h-2zM32 9h1v1h-1zM34 9h1v1h-1zM37 9h1v1h-1zM1 10h3v1h-3zM5 10h3v1h-3zM9 10h1v1h-1zM14 10h4v1h-4zM19 10h4v1h-4zM26 10h5v1h-5zM32 10h1v1h-1zM34 10h2v1h-2zM38 10h4v1h-4z" fill="#000"/></svg>
<svg class="a" style="left:39px;top:561px" width="30" height="17"><path d="M1 8.5H11" stroke="#a8a8a8" stroke-dasharray="1 1"/><rect x="13.5" y="1.5" width="13" height="13" rx="2" fill="#f3d35a" stroke="#b8962a"/><path d="M22 4Q19 3 18.5 7L17.5 12M16 7.5H21" stroke="#8a6a10" stroke-width="1.3" fill="none"/><path d="M24 10L27 13L24 16L21 13Z" fill="#f7e08a" stroke="#b8962a" stroke-width="0.8"/></svg>
<svg class="a" style="left:74px;top:561px" width="24" height="19"><path d="M2 5h4v1h-4zM8 5h4v1h-4zM13 5h4v1h-4zM1 6h1v1h-1zM5 6h1v1h-1zM7 6h1v1h-1zM11 6h1v1h-1zM15 6h1v1h-1zM1 7h1v1h-1zM7 7h1v1h-1zM15 7h1v1h-1zM1 8h1v1h-1zM7 8h1v1h-1zM15 8h1v1h-1zM1 9h1v1h-1zM7 9h1v1h-1zM15 9h1v1h-1zM2 10h4v1h-4zM8 10h4v1h-4zM13 10h5v1h-5z" fill="#000"/></svg>
<svg class="a" style="left:39px;top:579px" width="30" height="17"><path d="M1 8.5H11" stroke="#a8a8a8" stroke-dasharray="1 1"/><rect x="13.5" y="1.5" width="13" height="13" rx="2" fill="#f3d35a" stroke="#b8962a"/><path d="M22 4Q19 3 18.5 7L17.5 12M16 7.5H21" stroke="#8a6a10" stroke-width="1.3" fill="none"/><path d="M24 10L27 13L24 16L21 13Z" fill="#f7e08a" stroke="#b8962a" stroke-width="0.8"/></svg>
<svg class="a" style="left:74px;top:579px" width="54" height="19"><path d="M12 4h2v1h-2zM21 4h1v1h-1zM36 4h2v1h-2zM1 5h4v1h-4zM13 5h1v1h-1zM37 5h1v1h-1zM3 6h1v1h-1zM8 6h4v1h-4zM13 6h4v1h-4zM19 6h3v1h-3zM23 6h1v1h-1zM25 6h4v1h-4zM32 6h3v1h-3zM37 6h1v1h-1zM40 6h4v1h-4zM45 6h2v1h-2zM3 7h1v1h-1zM7 7h1v1h-1zM11 7h1v1h-1zM13 7h1v1h-1zM17 7h1v1h-1zM21 7h1v1h-1zM24 7h1v1h-1zM26 7h1v1h-1zM28 7h1v1h-1zM31 7h1v1h-1zM35 7h1v1h-1zM37 7h1v1h-1zM39 7h2v1h-2zM43 7h1v1h-1zM46 7h1v1h-1zM3 8h1v1h-1zM7 8h1v1h-1zM13 8h1v1h-1zM17 8h1v1h-1zM21 8h1v1h-1zM24 8h1v1h-1zM26 8h1v1h-1zM28 8h1v1h-1zM31 8h1v1h-1zM35 8h1v1h-1zM37 8h3v1h-3zM43 8h1v1h-1zM46 8h1v1h-1zM3 9h1v1h-1zM7 9h1v1h-1zM11 9h1v1h-1zM13 9h1v1h-1zM17 9h1v1h-1zM21 9h1v1h-1zM24 9h1v1h-1zM26 9h1v1h-1zM28 9h1v1h-1zM31 9h1v1h-1zM35 9h1v1h-1zM37 9h1v1h-1zM40 9h1v1h-1zM43 9h1v1h-1zM46 9h1v1h-1zM1 10h5v1h-5zM8 10h3v1h-3zM12 10h3v1h-3zM16 10h2v1h-2zM19 10h6v1h-6zM26 10h1v1h-1zM28 10h2v1h-2zM32 10h3v1h-3zM36 10h3v1h-3zM40 10h2v1h-2zM44 10h2v1h-2zM47 10h1v1h-1z" fill="#000"/></svg>
<div class="a" style="left:202px;top:469px;width:15px;height:123px;background:#f4f4f0"></div>
<div class="a" style="left:202px;top:469px;width:15px;height:16px;background:linear-gradient(#d6e2fa,#bccff5);border:1px solid #fff;border-radius:2px"></div>
<svg class="a" style="left:205px;top:474px" width="9" height="6"><path d="M1 5L4.5 1.5L8 5" stroke="#4d6185" stroke-width="2" fill="none"/></svg>
<div class="a" style="left:202px;top:576px;width:15px;height:16px;background:linear-gradient(#d6e2fa,#bccff5);border:1px solid #fff;border-radius:2px"></div>
<svg class="a" style="left:205px;top:581px" width="9" height="6"><path d="M1 1L4.5 4.5L8 1" stroke="#4d6185" stroke-width="2" fill="none"/></svg>
<div class="a" style="left:202px;top:507px;width:15px;height:24px;background:linear-gradient(90deg,#cad9fa,#b8cbf3);border:1px solid #fff;border-radius:2px"></div>
<svg class="a" style="left:206px;top:516px" width="7" height="7"><path d="M0 0.5H7M0 2.5H7M0 4.5H7M0 6.5H7" stroke="#8ea6d8"/></svg>
<div class="a" style="left:3px;top:592px;width:216px;height:2px;background:#000"></div>
<div class="a" style="left:6px;top:592px;width:44px;height:18px;background:#fafcf8;border:2px solid #000;border-top:none"></div>
<svg class="a" style="left:16px;top:591px" width="30" height="20"><path d="M2 4h1v1h-1zM5 4h1v1h-1zM8 4h1v1h-1zM14 4h1v1h-1zM17 4h5v1h-5zM1 5h10v1h-10zM14 5h1v1h-1zM17 5h1v1h-1zM21 5h1v1h-1zM1 6h1v1h-1zM10 6h1v1h-1zM12 6h6v1h-6zM19 6h1v1h-1zM21 6h1v1h-1zM0 7h1v1h-1zM3 7h6v1h-6zM10 7h1v1h-1zM14 7h1v1h-1zM17 7h1v1h-1zM19 7h1v1h-1zM21 7h1v1h-1zM3 8h1v1h-1zM8 8h1v1h-1zM14 8h1v1h-1zM17 8h1v1h-1zM19 8h1v1h-1zM21 8h1v1h-1zM3 9h6v1h-6zM12 9h6v1h-6zM19 9h1v1h-1zM21 9h1v1h-1zM5 10h1v1h-1zM14 10h1v1h-1zM17 10h1v1h-1zM19 10h1v1h-1zM21 10h1v1h-1zM2 11h8v1h-8zM14 11h2v1h-2zM19 11h2v1h-2zM2 12h1v1h-1zM5 12h1v1h-1zM9 12h1v1h-1zM14 12h1v1h-1zM16 12h1v1h-1zM18 12h1v1h-1zM20 12h1v1h-1zM22 12h1v1h-1zM2 13h1v1h-1zM5 13h1v1h-1zM8 13h2v1h-2zM13 13h1v1h-1zM17 13h1v1h-1zM20 13h1v1h-1zM22 13h1v1h-1zM5 14h1v1h-1zM12 14h1v1h-1zM15 14h2v1h-2zM21 14h2v1h-2z" fill="#000"/></svg>
<svg class="a" style="left:59px;top:591px" width="42" height="20"><path d="M3 4h1v1h-1zM6 4h1v1h-1zM16 4h1v1h-1zM19 4h1v1h-1zM29 4h1v1h-1zM3 5h1v1h-1zM6 5h1v1h-1zM12 5h11v1h-11zM25 5h9v1h-9zM0 6h1v1h-1zM3 6h1v1h-1zM6 6h5v1h-5zM16 6h1v1h-1zM19 6h1v1h-1zM21 6h1v1h-1zM29 6h1v1h-1zM0 7h1v1h-1zM3 7h1v1h-1zM5 7h1v1h-1zM9 7h1v1h-1zM12 7h1v1h-1zM14 7h9v1h-9zM26 7h1v1h-1zM29 7h1v1h-1zM32 7h1v1h-1zM0 8h1v1h-1zM3 8h2v1h-2zM6 8h1v1h-1zM9 8h1v1h-1zM12 8h1v1h-1zM14 8h1v1h-1zM16 8h1v1h-1zM18 8h1v1h-1zM20 8h1v1h-1zM27 8h1v1h-1zM29 8h1v1h-1zM31 8h1v1h-1zM0 9h1v1h-1zM3 9h1v1h-1zM6 9h1v1h-1zM9 9h1v1h-1zM12 9h3v1h-3zM16 9h5v1h-5zM22 9h1v1h-1zM24 9h11v1h-11zM0 10h1v1h-1zM2 10h2v1h-2zM6 10h1v1h-1zM8 10h1v1h-1zM14 10h1v1h-1zM16 10h1v1h-1zM20 10h1v1h-1zM22 10h1v1h-1zM29 10h1v1h-1zM0 11h2v1h-2zM3 11h1v1h-1zM7 11h1v1h-1zM12 11h3v1h-3zM16 11h6v1h-6zM28 11h1v1h-1zM30 11h1v1h-1zM0 12h1v1h-1zM3 12h1v1h-1zM7 12h2v1h-2zM12 12h1v1h-1zM14 12h1v1h-1zM16 12h1v1h-1zM18 12h1v1h-1zM20 12h1v1h-1zM22 12h1v1h-1zM27 12h1v1h-1zM31 12h1v1h-1zM3 13h1v1h-1zM6 13h1v1h-1zM9 13h1v1h-1zM12 13h1v1h-1zM14 13h1v1h-1zM16 13h5v1h-5zM22 13h1v1h-1zM26 13h1v1h-1zM32 13h1v1h-1zM3 14h1v1h-1zM5 14h1v1h-1zM10 14h1v1h-1zM13 14h1v1h-1zM19 14h1v1h-1zM21 14h2v1h-2zM24 14h2v1h-2zM33 14h2v1h-2z" fill="#979797"/></svg>
<div class="a" style="left:105px;top:596px;width:1px;height:12px;background:#979797"></div>
<div class="a" style="left:222px;top:101px;width:800px;height:493px;background:#060406"></div>
<svg class="a" style="left:223px;top:101px" width="801" height="493" viewBox="223 101 801 493" shape-rendering="crispEdges">
<path d="M228 138.5H981M228 170.5H981M228 202.5H981M228 234.5H981M228 268.5H981M228 303.5H981M228 338.5H981M228 373.5H981M228 405.5H981M228 437.5H981M228 469.5H981M228 503.5H981M228 538.5H981M228 573.5H981" stroke="#809ab0" stroke-width="1" stroke-dasharray="3 3" fill="none"/>
<path d="M259.5 104V576M291.5 104V576M323.5 104V576M355.5 104V576M387.5 104V576M419.5 104V576M451.5 104V576M483.5 104V576M515.5 104V576M547.5 104V576M579.5 104V576M611.5 104V576M643.5 104V576M675.5 104V576M707.5 104V576M739.5 104V576M771.5 104V576M803.5 104V576M835.5 104V576M867.5 104V576M899.5 104V576M931.5 104V576M963.5 104V576" stroke="#809ab0" stroke-width="1" stroke-dasharray="3 3" fill="none"/>
<path d="M227 393.5H982" stroke="#809ab0" stroke-width="1"/>
<path d="M228 403.5H982" stroke="#1ccc1c" stroke-width="1" stroke-dasharray="9 6 3 6"/>
<rect x="232" y="389" width="61" height="13" fill="#060406"/>
<path d="M227.5 541V566M229.5 513V549M231.5 513V546M233.5 459V521M235.5 441V468M237.5 414V445M239.5 422V435M241.5 419V435M243.5 429V442M245.5 420V435M247.5 425V433M249.5 420V435M251.5 428V435M253.5 426V440M255.5 426V438M257.5 436V442M259.5 437V443M261.5 431V445M263.5 432V440M265.5 429V442M267.5 413V447M269.5 392V427M271.5 398V410M273.5 369V402M275.5 372V387M277.5 344V375M279.5 345V363M281.5 262V348M283.5 258V276M285.5 260V278M287.5 242V269M289.5 219V248M291.5 234V247M293.5 230V244M295.5 224V235M297.5 236V252M299.5 241V250M301.5 246V257M303.5 241V248M305.5 242V252M307.5 247V257M309.5 240V254M311.5 237V247M313.5 217V242M315.5 201V233M317.5 187V214M319.5 191V227M321.5 204V221M323.5 182V228M325.5 180V240M327.5 207V247M329.5 186V233M331.5 184V212M333.5 172V196M335.5 174V187M337.5 165V181M339.5 169V179M341.5 169V186M343.5 191V201M345.5 197V215M347.5 198V209M349.5 154V200M351.5 139V157M353.5 140V153M355.5 132V152M357.5 145V158M359.5 139V167M361.5 146V161M363.5 135V157M365.5 137V149M367.5 133V146M369.5 139V148M371.5 138V152M373.5 140V157M375.5 154V174M377.5 170V188M379.5 172V182M381.5 167V182M383.5 170V179M385.5 169V180M387.5 162V173M389.5 166V175M391.5 170V184M393.5 180V193M395.5 177V200M397.5 182V196M399.5 178V186M401.5 180V195M403.5 189V201M405.5 183V199M407.5 180V205M409.5 189V214M411.5 178V215M413.5 182V195M415.5 165V191M417.5 162V179M419.5 155V172M421.5 152V176M423.5 158V189M425.5 174V196M427.5 170V186M429.5 169V186M431.5 167V179M433.5 170V181M435.5 175V184M437.5 178V191M439.5 185V196M441.5 179V196M443.5 191V214M445.5 190V208M447.5 203V216M449.5 198V221M451.5 197V209M453.5 196V209M455.5 173V207M457.5 156V177M459.5 163V196M461.5 184V198M463.5 175V203M465.5 187V205M467.5 182V206M469.5 184V222M471.5 190V216M473.5 191V210M475.5 180V199M477.5 187V215M479.5 208V227M481.5 214V224M483.5 213V221M485.5 215V224M487.5 213V222M489.5 206V221M491.5 210V236M493.5 222V241M495.5 212V229M497.5 210V219M499.5 212V220M501.5 215V222M503.5 201V221M505.5 199V219M507.5 202V221M509.5 207V220M511.5 205V221M513.5 210V224M515.5 175V222M517.5 168V186M519.5 179V209M521.5 187V212M523.5 193V219M525.5 210V233M527.5 220V237M529.5 217V227M531.5 220V229M533.5 221V227M535.5 218V226M537.5 207V224M539.5 208V238M541.5 210V235M543.5 195V212M545.5 199V212M547.5 205V219M549.5 199V214M551.5 198V209M553.5 203V233M555.5 207V228M557.5 202V235M559.5 220V243M561.5 216V248M563.5 189V221M565.5 190V211M567.5 182V209M569.5 179V208M571.5 194V209M573.5 194V208M575.5 194V207M577.5 198V209M579.5 194V203M581.5 183V191M583.5 177V191M585.5 177V196M587.5 186V196M589.5 190V232M591.5 218V237M593.5 219V229M595.5 221V233M597.5 222V252M599.5 248V287M601.5 260V287M603.5 258V272M605.5 259V283M607.5 272V284M609.5 273V307M611.5 290V308M613.5 287V315M615.5 292V311M617.5 299V329M619.5 314V330M621.5 320V329M623.5 318V331M625.5 321V334M627.5 323V332M629.5 316V328M631.5 307V324M633.5 311V331M635.5 302V330M637.5 305V323M639.5 309V318M641.5 302V316M643.5 301V318M645.5 307V336M647.5 309V334M649.5 298V325M651.5 302V327M653.5 301V327M655.5 295V314M657.5 289V330M659.5 290V320M661.5 298V313M663.5 301V320M665.5 304V316M667.5 305V316M669.5 304V315M671.5 300V309M673.5 304V309M675.5 304V315M677.5 304V314M679.5 298V312M681.5 299V304M683.5 272V302M685.5 276V289M687.5 274V285M689.5 277V284M691.5 270V283M693.5 278V299M695.5 280V303M697.5 283V306M699.5 295V313M701.5 288V308M703.5 273V306M705.5 262V289M707.5 266V288M709.5 257V279M711.5 276V302M713.5 282V297M715.5 290V301M717.5 295V308M719.5 299V309M721.5 293V301M723.5 294V308M725.5 297V309M727.5 300V311M729.5 302V312M731.5 304V330M733.5 321V348M735.5 333V344M737.5 325V348M739.5 324V337M741.5 322V355M743.5 340V364M745.5 340V387M747.5 379V402M749.5 387V400M751.5 390V406M753.5 385V412M755.5 400V422M757.5 400V427M759.5 407V427M761.5 398V422M763.5 401V417M765.5 410V422M767.5 408V422M769.5 410V422M771.5 408V416M773.5 403V414M775.5 401V410M777.5 402V410M779.5 402V412M781.5 394V411M783.5 393V399M785.5 356V394M787.5 358V377M789.5 367V386M791.5 372V384M793.5 373V392M795.5 375V394M797.5 364V389M799.5 379V389M801.5 380V403M803.5 396V431M805.5 419V440M807.5 416V435M809.5 420V433M811.5 414V431M813.5 394V417M815.5 396V400M817.5 394V403M819.5 361V449M821.5 432V446M823.5 424V436M825.5 416V431M827.5 419V426M829.5 419V424M831.5 420V438M833.5 420V449M835.5 447V469M837.5 438V470M839.5 426V459M841.5 427V449M843.5 426V442M845.5 408V438M847.5 413V440M849.5 413V440M851.5 412V428M853.5 410V428M855.5 420V441M857.5 434V446M859.5 424V442M861.5 419V430M863.5 419V440M865.5 431V442M867.5 432V442M869.5 426V437M871.5 426V446M873.5 428V447M875.5 419V433M877.5 420V430M879.5 417V426M881.5 420V438M883.5 397V436M885.5 407V426M887.5 407V428M889.5 417V440M891.5 412V439M893.5 409V422M895.5 412V433M897.5 410V431M899.5 410V426M901.5 414V430M903.5 414V432M905.5 421V432M907.5 420V462M909.5 450V463M911.5 449V464M913.5 453V464M915.5 454V470M917.5 464V478M919.5 456V478M921.5 453V465M923.5 438V461M925.5 432V458M927.5 419V442M929.5 396V429M931.5 390V425M933.5 394V427M935.5 374V424M937.5 375V409M939.5 380V403M941.5 368V394M943.5 368V384M945.5 375V387M947.5 368V390M949.5 368V399M951.5 387V406M953.5 384V400M955.5 380V402M957.5 390V399M959.5 386V396M961.5 375V394M963.5 374V387M965.5 363V386M967.5 356V374M969.5 367V409M971.5 398V412M973.5 400V409M975.5 401V414M977.5 393V413" stroke="#00f000" stroke-width="1" fill="none"/>
<path d="M226.5 104V577M226 104.5H983M982.5 104V577M226 576.5H983" stroke="#f4f4f4" stroke-width="1" fill="none"/>
<path d="M983 138.5H986M983 170.5H986M983 202.5H986M983 234.5H986M983 268.5H986M983 303.5H986M983 338.5H986M983 373.5H986M983 405.5H986M983 437.5H986M983 469.5H986M983 503.5H986M983 538.5H986M983 573.5H986" stroke="#f4f4f4" stroke-width="1"/>
<path d="M227.5 577V581M291.5 577V581M355.5 577V581M419.5 577V581M483.5 577V581M547.5 577V581M611.5 577V581M675.5 577V581M739.5 577V581M803.5 577V581M867.5 577V581M931.5 577V581" stroke="#f4f4f4" stroke-width="1"/>
</svg>
<svg class="a" style="left:228px;top:105px" width="62" height="19"><path d="M4 4h3v1h-3zM10 4h4v1h-4zM16 4h3v1h-3zM22 4h1v1h-1zM26 4h1v1h-1zM30 4h3v1h-3zM35 4h4v1h-4zM45 4h1v1h-1zM49 4h1v1h-1zM52 4h2v1h-2zM3 5h2v1h-2zM7 5h1v1h-1zM10 5h1v1h-1zM14 5h1v1h-1zM16 5h1v1h-1zM19 5h1v1h-1zM22 5h1v1h-1zM26 5h1v1h-1zM29 5h1v1h-1zM33 5h1v1h-1zM35 5h1v1h-1zM38 5h2v1h-2zM45 5h1v1h-1zM49 5h1v1h-1zM53 5h1v1h-1zM3 6h1v1h-1zM10 6h1v1h-1zM14 6h1v1h-1zM16 6h1v1h-1zM19 6h1v1h-1zM22 6h1v1h-1zM26 6h1v1h-1zM29 6h1v1h-1zM35 6h1v1h-1zM39 6h1v1h-1zM45 6h1v1h-1zM49 6h1v1h-1zM53 6h1v1h-1zM3 7h1v1h-1zM6 7h2v1h-2zM10 7h4v1h-4zM16 7h3v1h-3zM22 7h1v1h-1zM26 7h1v1h-1zM30 7h3v1h-3zM35 7h1v1h-1zM39 7h1v1h-1zM45 7h5v1h-5zM53 7h1v1h-1zM3 8h1v1h-1zM7 8h1v1h-1zM10 8h1v1h-1zM14 8h1v1h-1zM16 8h1v1h-1zM22 8h1v1h-1zM26 8h1v1h-1zM33 8h1v1h-1zM35 8h1v1h-1zM39 8h1v1h-1zM45 8h1v1h-1zM49 8h1v1h-1zM53 8h1v1h-1zM3 9h2v1h-2zM7 9h1v1h-1zM10 9h1v1h-1zM14 9h1v1h-1zM16 9h1v1h-1zM22 9h1v1h-1zM26 9h1v1h-1zM29 9h1v1h-1zM33 9h1v1h-1zM35 9h1v1h-1zM38 9h2v1h-2zM45 9h1v1h-1zM49 9h1v1h-1zM53 9h1v1h-1zM4 10h3v1h-3zM10 10h4v1h-4zM16 10h1v1h-1zM23 10h3v1h-3zM30 10h3v1h-3zM35 10h4v1h-4zM42 10h1v1h-1zM45 10h1v1h-1zM49 10h1v1h-1zM52 10h3v1h-3zM42 11h1v1h-1z" fill="#fff"/></svg>
<svg class="a" style="left:288px;top:105px" width="35" height="19"><path d="M3 4h2v1h-2zM11 4h2v1h-2zM16 4h2v1h-2zM21 4h3v1h-3zM25 4h2v1h-2zM4 5h1v1h-1zM10 5h1v1h-1zM13 5h1v1h-1zM15 5h1v1h-1zM18 5h1v1h-1zM20 5h2v1h-2zM26 5h1v1h-1zM4 6h1v1h-1zM10 6h1v1h-1zM13 6h1v1h-1zM15 6h1v1h-1zM18 6h1v1h-1zM20 6h1v1h-1zM26 6h1v1h-1zM4 7h1v1h-1zM11 7h2v1h-2zM15 7h1v1h-1zM18 7h1v1h-1zM20 7h3v1h-3zM26 7h1v1h-1zM4 8h1v1h-1zM10 8h1v1h-1zM13 8h1v1h-1zM15 8h1v1h-1zM18 8h1v1h-1zM20 8h1v1h-1zM23 8h1v1h-1zM26 8h1v1h-1zM4 9h1v1h-1zM10 9h1v1h-1zM13 9h1v1h-1zM15 9h1v1h-1zM18 9h1v1h-1zM20 9h1v1h-1zM23 9h1v1h-1zM26 9h1v1h-1zM3 10h3v1h-3zM8 10h1v1h-1zM11 10h2v1h-2zM16 10h2v1h-2zM21 10h2v1h-2zM25 10h3v1h-3z" fill="#fff"/></svg>
<svg class="a" style="left:320px;top:105px" width="35" height="19"><path d="M3 4h2v1h-2zM11 4h2v1h-2zM16 4h2v1h-2zM21 4h2v1h-2zM25 4h4v1h-4zM4 5h1v1h-1zM10 5h1v1h-1zM13 5h1v1h-1zM15 5h1v1h-1zM18 5h1v1h-1zM20 5h1v1h-1zM23 5h1v1h-1zM28 5h1v1h-1zM4 6h1v1h-1zM10 6h1v1h-1zM13 6h1v1h-1zM15 6h1v1h-1zM18 6h1v1h-1zM20 6h1v1h-1zM23 6h1v1h-1zM27 6h1v1h-1zM4 7h1v1h-1zM11 7h2v1h-2zM15 7h1v1h-1zM18 7h1v1h-1zM21 7h2v1h-2zM27 7h1v1h-1zM4 8h1v1h-1zM10 8h1v1h-1zM13 8h1v1h-1zM15 8h1v1h-1zM18 8h1v1h-1zM20 8h1v1h-1zM23 8h1v1h-1zM27 8h1v1h-1zM4 9h1v1h-1zM10 9h1v1h-1zM13 9h1v1h-1zM15 9h1v1h-1zM18 9h1v1h-1zM20 9h1v1h-1zM23 9h1v1h-1zM26 9h1v1h-1zM3 10h3v1h-3zM8 10h1v1h-1zM11 10h2v1h-2zM16 10h2v1h-2zM21 10h2v1h-2zM26 10h1v1h-1z" fill="#fff"/></svg>
<svg class="a" style="left:350px;top:105px" width="35" height="19"><path d="M3 4h2v1h-2zM11 4h2v1h-2zM16 4h2v1h-2zM20 4h4v1h-4zM26 4h2v1h-2zM4 5h1v1h-1zM10 5h1v1h-1zM13 5h1v1h-1zM15 5h1v1h-1zM18 5h1v1h-1zM20 5h1v1h-1zM25 5h1v1h-1zM28 5h1v1h-1zM4 6h1v1h-1zM10 6h1v1h-1zM13 6h1v1h-1zM15 6h1v1h-1zM18 6h1v1h-1zM20 6h1v1h-1zM25 6h1v1h-1zM28 6h1v1h-1zM4 7h1v1h-1zM11 7h2v1h-2zM15 7h1v1h-1zM18 7h1v1h-1zM20 7h3v1h-3zM25 7h4v1h-4zM4 8h1v1h-1zM10 8h1v1h-1zM13 8h1v1h-1zM15 8h1v1h-1zM18 8h1v1h-1zM23 8h1v1h-1zM28 8h1v1h-1zM4 9h1v1h-1zM10 9h1v1h-1zM13 9h1v1h-1zM15 9h1v1h-1zM18 9h1v1h-1zM23 9h1v1h-1zM27 9h2v1h-2zM3 10h3v1h-3zM8 10h1v1h-1zM11 10h2v1h-2zM16 10h2v1h-2zM20 10h3v1h-3zM25 10h3v1h-3z" fill="#fff"/></svg>
<svg class="a" style="left:381px;top:105px" width="35" height="19"><path d="M3 4h2v1h-2zM11 4h2v1h-2zM16 4h2v1h-2zM21 4h2v1h-2zM25 4h4v1h-4zM4 5h1v1h-1zM10 5h1v1h-1zM13 5h1v1h-1zM15 5h1v1h-1zM18 5h1v1h-1zM20 5h1v1h-1zM23 5h1v1h-1zM28 5h1v1h-1zM4 6h1v1h-1zM10 6h1v1h-1zM13 6h1v1h-1zM15 6h1v1h-1zM18 6h1v1h-1zM20 6h1v1h-1zM23 6h1v1h-1zM27 6h1v1h-1zM4 7h1v1h-1zM11 7h2v1h-2zM15 7h1v1h-1zM18 7h1v1h-1zM21 7h2v1h-2zM27 7h1v1h-1zM4 8h1v1h-1zM10 8h1v1h-1zM13 8h1v1h-1zM15 8h1v1h-1zM18 8h1v1h-1zM20 8h1v1h-1zM23 8h1v1h-1zM27 8h1v1h-1zM4 9h1v1h-1zM10 9h1v1h-1zM13 9h1v1h-1zM15 9h1v1h-1zM18 9h1v1h-1zM20 9h1v1h-1zM23 9h1v1h-1zM26 9h1v1h-1zM3 10h3v1h-3zM8 10h1v1h-1zM11 10h2v1h-2zM16 10h2v1h-2zM21 10h2v1h-2zM26 10h1v1h-1z" fill="#fff"/></svg>
<svg class="a" style="left:986px;top:130px" width="35" height="19"><path d="M3 4h2v1h-2zM11 4h2v1h-2zM18 4h1v1h-1zM21 4h2v1h-2zM26 4h2v1h-2zM4 5h1v1h-1zM10 5h1v1h-1zM13 5h1v1h-1zM17 5h2v1h-2zM20 5h1v1h-1zM23 5h1v1h-1zM25 5h1v1h-1zM28 5h1v1h-1zM4 6h1v1h-1zM10 6h1v1h-1zM13 6h1v1h-1zM16 6h1v1h-1zM18 6h1v1h-1zM20 6h1v1h-1zM23 6h1v1h-1zM25 6h1v1h-1zM28 6h1v1h-1zM4 7h1v1h-1zM11 7h2v1h-2zM16 7h1v1h-1zM18 7h1v1h-1zM20 7h4v1h-4zM25 7h1v1h-1zM28 7h1v1h-1zM4 8h1v1h-1zM10 8h1v1h-1zM13 8h1v1h-1zM15 8h1v1h-1zM18 8h1v1h-1zM23 8h1v1h-1zM25 8h1v1h-1zM28 8h1v1h-1zM4 9h1v1h-1zM10 9h1v1h-1zM13 9h1v1h-1zM15 9h5v1h-5zM22 9h2v1h-2zM25 9h1v1h-1zM28 9h1v1h-1zM3 10h3v1h-3zM8 10h1v1h-1zM11 10h2v1h-2zM18 10h1v1h-1zM20 10h3v1h-3zM26 10h2v1h-2z" fill="#fff"/></svg>
<svg class="a" style="left:986px;top:162px" width="35" height="19"><path d="M3 4h2v1h-2zM11 4h2v1h-2zM18 4h1v1h-1zM23 4h1v1h-1zM26 4h2v1h-2zM4 5h1v1h-1zM10 5h1v1h-1zM13 5h1v1h-1zM17 5h2v1h-2zM22 5h2v1h-2zM25 5h1v1h-1zM28 5h1v1h-1zM4 6h1v1h-1zM10 6h1v1h-1zM13 6h1v1h-1zM16 6h1v1h-1zM18 6h1v1h-1zM21 6h1v1h-1zM23 6h1v1h-1zM25 6h1v1h-1zM28 6h1v1h-1zM4 7h1v1h-1zM11 7h2v1h-2zM16 7h1v1h-1zM18 7h1v1h-1zM21 7h1v1h-1zM23 7h1v1h-1zM25 7h1v1h-1zM28 7h1v1h-1zM4 8h1v1h-1zM10 8h1v1h-1zM13 8h1v1h-1zM15 8h1v1h-1zM18 8h1v1h-1zM20 8h1v1h-1zM23 8h1v1h-1zM25 8h1v1h-1zM28 8h1v1h-1zM4 9h1v1h-1zM10 9h1v1h-1zM13 9h1v1h-1zM15 9h11v1h-11zM28 9h1v1h-1zM3 10h3v1h-3zM8 10h1v1h-1zM11 10h2v1h-2zM18 10h1v1h-1zM23 10h1v1h-1zM26 10h2v1h-2z" fill="#fff"/></svg>
<svg class="a" style="left:986px;top:194px" width="35" height="19"><path d="M3 4h2v1h-2zM11 4h2v1h-2zM16 4h2v1h-2zM21 4h2v1h-2zM26 4h2v1h-2zM4 5h1v1h-1zM10 5h1v1h-1zM13 5h1v1h-1zM15 5h1v1h-1zM18 5h1v1h-1zM20 5h1v1h-1zM23 5h1v1h-1zM25 5h1v1h-1zM28 5h1v1h-1zM4 6h1v1h-1zM10 6h1v1h-1zM13 6h1v1h-1zM18 6h1v1h-1zM20 6h1v1h-1zM23 6h1v1h-1zM25 6h1v1h-1zM28 6h1v1h-1zM4 7h1v1h-1zM11 7h2v1h-2zM16 7h2v1h-2zM20 7h4v1h-4zM25 7h1v1h-1zM28 7h1v1h-1zM4 8h1v1h-1zM10 8h1v1h-1zM13 8h1v1h-1zM18 8h1v1h-1zM23 8h1v1h-1zM25 8h1v1h-1zM28 8h1v1h-1zM4 9h1v1h-1zM10 9h1v1h-1zM13 9h1v1h-1zM18 9h1v1h-1zM22 9h2v1h-2zM25 9h1v1h-1zM28 9h1v1h-1zM3 10h3v1h-3zM8 10h1v1h-1zM11 10h2v1h-2zM15 10h3v1h-3zM20 10h3v1h-3zM26 10h2v1h-2z" fill="#fff"/></svg>
<svg class="a" style="left:986px;top:226px" width="35" height="19"><path d="M3 4h2v1h-2zM11 4h2v1h-2zM16 4h2v1h-2zM23 4h1v1h-1zM26 4h2v1h-2zM4 5h1v1h-1zM10 5h1v1h-1zM13 5h1v1h-1zM15 5h1v1h-1zM18 5h1v1h-1zM22 5h2v1h-2zM25 5h1v1h-1zM28 5h1v1h-1zM4 6h1v1h-1zM10 6h1v1h-1zM13 6h1v1h-1zM18 6h1v1h-1zM21 6h1v1h-1zM23 6h1v1h-1zM25 6h1v1h-1zM28 6h1v1h-1zM4 7h1v1h-1zM11 7h2v1h-2zM16 7h2v1h-2zM21 7h1v1h-1zM23 7h1v1h-1zM25 7h1v1h-1zM28 7h1v1h-1zM4 8h1v1h-1zM10 8h1v1h-1zM13 8h1v1h-1zM18 8h1v1h-1zM20 8h1v1h-1zM23 8h1v1h-1zM25 8h1v1h-1zM28 8h1v1h-1zM4 9h1v1h-1zM10 9h1v1h-1zM13 9h1v1h-1zM18 9h1v1h-1zM20 9h6v1h-6zM28 9h1v1h-1zM3 10h3v1h-3zM8 10h1v1h-1zM11 10h2v1h-2zM15 10h3v1h-3zM23 10h1v1h-1zM26 10h2v1h-2z" fill="#fff"/></svg>
<svg class="a" style="left:986px;top:260px" width="35" height="19"><path d="M3 4h2v1h-2zM11 4h2v1h-2zM16 4h2v1h-2zM21 4h2v1h-2zM25 4h4v1h-4zM4 5h1v1h-1zM10 5h1v1h-1zM13 5h1v1h-1zM15 5h1v1h-1zM18 5h1v1h-1zM20 5h1v1h-1zM23 5h1v1h-1zM25 5h1v1h-1zM4 6h1v1h-1zM10 6h1v1h-1zM13 6h1v1h-1zM18 6h1v1h-1zM20 6h1v1h-1zM23 6h1v1h-1zM25 6h1v1h-1zM4 7h1v1h-1zM11 7h2v1h-2zM17 7h1v1h-1zM21 7h2v1h-2zM25 7h3v1h-3zM4 8h1v1h-1zM10 8h1v1h-1zM13 8h1v1h-1zM16 8h1v1h-1zM20 8h1v1h-1zM23 8h1v1h-1zM28 8h1v1h-1zM4 9h1v1h-1zM10 9h1v1h-1zM13 9h1v1h-1zM15 9h1v1h-1zM20 9h1v1h-1zM23 9h1v1h-1zM28 9h1v1h-1zM3 10h3v1h-3zM8 10h1v1h-1zM11 10h2v1h-2zM15 10h4v1h-4zM21 10h2v1h-2zM25 10h3v1h-3z" fill="#fff"/></svg>
<svg class="a" style="left:986px;top:295px" width="35" height="19"><path d="M3 4h2v1h-2zM11 4h2v1h-2zM16 4h2v1h-2zM21 4h2v1h-2zM26 4h2v1h-2zM4 5h1v1h-1zM10 5h1v1h-1zM13 5h1v1h-1zM15 5h1v1h-1zM18 5h1v1h-1zM20 5h1v1h-1zM23 5h1v1h-1zM25 5h1v1h-1zM28 5h1v1h-1zM4 6h1v1h-1zM10 6h1v1h-1zM13 6h1v1h-1zM18 6h1v1h-1zM23 6h1v1h-1zM25 6h1v1h-1zM28 6h1v1h-1zM4 7h1v1h-1zM11 7h2v1h-2zM17 7h1v1h-1zM21 7h2v1h-2zM25 7h1v1h-1zM28 7h1v1h-1zM4 8h1v1h-1zM10 8h1v1h-1zM13 8h1v1h-1zM16 8h1v1h-1zM23 8h1v1h-1zM25 8h1v1h-1zM28 8h1v1h-1zM4 9h1v1h-1zM10 9h1v1h-1zM13 9h1v1h-1zM15 9h1v1h-1zM23 9h1v1h-1zM25 9h1v1h-1zM28 9h1v1h-1zM3 10h3v1h-3zM8 10h1v1h-1zM11 10h2v1h-2zM15 10h4v1h-4zM20 10h3v1h-3zM26 10h2v1h-2z" fill="#fff"/></svg>
<svg class="a" style="left:986px;top:330px" width="35" height="19"><path d="M3 4h2v1h-2zM11 4h2v1h-2zM15 4h2v1h-2zM20 4h4v1h-4zM25 4h4v1h-4zM4 5h1v1h-1zM10 5h1v1h-1zM13 5h1v1h-1zM16 5h1v1h-1zM23 5h1v1h-1zM25 5h1v1h-1zM4 6h1v1h-1zM10 6h1v1h-1zM13 6h1v1h-1zM16 6h1v1h-1zM22 6h1v1h-1zM25 6h1v1h-1zM4 7h1v1h-1zM11 7h2v1h-2zM16 7h1v1h-1zM22 7h1v1h-1zM25 7h3v1h-3zM4 8h1v1h-1zM10 8h1v1h-1zM13 8h1v1h-1zM16 8h1v1h-1zM22 8h1v1h-1zM28 8h1v1h-1zM4 9h1v1h-1zM10 9h1v1h-1zM13 9h1v1h-1zM16 9h1v1h-1zM21 9h1v1h-1zM28 9h1v1h-1zM3 10h3v1h-3zM8 10h1v1h-1zM11 10h2v1h-2zM15 10h3v1h-3zM21 10h1v1h-1zM25 10h3v1h-3z" fill="#fff"/></svg>
<svg class="a" style="left:986px;top:365px" width="35" height="19"><path d="M3 4h2v1h-2zM11 4h2v1h-2zM15 4h2v1h-2zM21 4h2v1h-2zM26 4h2v1h-2zM4 5h1v1h-1zM10 5h1v1h-1zM13 5h1v1h-1zM16 5h1v1h-1zM20 5h1v1h-1zM23 5h1v1h-1zM25 5h1v1h-1zM28 5h1v1h-1zM4 6h1v1h-1zM10 6h1v1h-1zM13 6h1v1h-1zM16 6h1v1h-1zM23 6h1v1h-1zM25 6h1v1h-1zM28 6h1v1h-1zM4 7h1v1h-1zM11 7h2v1h-2zM16 7h1v1h-1zM22 7h1v1h-1zM25 7h1v1h-1zM28 7h1v1h-1zM4 8h1v1h-1zM10 8h1v1h-1zM13 8h1v1h-1zM16 8h1v1h-1zM21 8h1v1h-1zM25 8h1v1h-1zM28 8h1v1h-1zM4 9h1v1h-1zM10 9h1v1h-1zM13 9h1v1h-1zM16 9h1v1h-1zM20 9h1v1h-1zM25 9h1v1h-1zM28 9h1v1h-1zM3 10h3v1h-3zM8 10h1v1h-1zM11 10h2v1h-2zM15 10h3v1h-3zM20 10h4v1h-4zM26 10h2v1h-2z" fill="#fff"/></svg>
<svg class="a" style="left:986px;top:397px" width="35" height="19"><path d="M3 4h2v1h-2zM11 4h2v1h-2zM16 4h2v1h-2zM20 4h4v1h-4zM26 4h2v1h-2zM4 5h1v1h-1zM10 5h1v1h-1zM13 5h1v1h-1zM15 5h1v1h-1zM18 5h1v1h-1zM23 5h1v1h-1zM25 5h1v1h-1zM28 5h1v1h-1zM4 6h1v1h-1zM10 6h1v1h-1zM13 6h1v1h-1zM15 6h1v1h-1zM18 6h1v1h-1zM22 6h1v1h-1zM25 6h1v1h-1zM28 6h1v1h-1zM4 7h1v1h-1zM11 7h2v1h-2zM15 7h1v1h-1zM18 7h1v1h-1zM22 7h1v1h-1zM25 7h1v1h-1zM28 7h1v1h-1zM4 8h1v1h-1zM10 8h1v1h-1zM13 8h1v1h-1zM15 8h1v1h-1zM18 8h1v1h-1zM22 8h1v1h-1zM25 8h1v1h-1zM28 8h1v1h-1zM4 9h1v1h-1zM10 9h1v1h-1zM13 9h1v1h-1zM15 9h1v1h-1zM18 9h1v1h-1zM21 9h1v1h-1zM25 9h1v1h-1zM28 9h1v1h-1zM3 10h3v1h-3zM8 10h1v1h-1zM11 10h2v1h-2zM16 10h2v1h-2zM21 10h1v1h-1zM26 10h2v1h-2z" fill="#fff"/></svg>
<svg class="a" style="left:986px;top:429px" width="35" height="19"><path d="M3 4h2v1h-2zM11 4h2v1h-2zM16 4h2v1h-2zM21 4h2v1h-2zM26 4h2v1h-2zM4 5h1v1h-1zM10 5h1v1h-1zM13 5h1v1h-1zM15 5h1v1h-1zM18 5h1v1h-1zM20 5h1v1h-1zM23 5h1v1h-1zM25 5h1v1h-1zM28 5h1v1h-1zM4 6h1v1h-1zM10 6h1v1h-1zM13 6h1v1h-1zM15 6h1v1h-1zM18 6h1v1h-1zM23 6h1v1h-1zM25 6h1v1h-1zM28 6h1v1h-1zM4 7h1v1h-1zM11 7h2v1h-2zM15 7h1v1h-1zM18 7h1v1h-1zM22 7h1v1h-1zM25 7h1v1h-1zM28 7h1v1h-1zM4 8h1v1h-1zM10 8h1v1h-1zM13 8h1v1h-1zM15 8h1v1h-1zM18 8h1v1h-1zM21 8h1v1h-1zM25 8h1v1h-1zM28 8h1v1h-1zM4 9h1v1h-1zM10 9h1v1h-1zM13 9h1v1h-1zM15 9h1v1h-1zM18 9h1v1h-1zM20 9h1v1h-1zM25 9h1v1h-1zM28 9h1v1h-1zM3 10h3v1h-3zM8 10h1v1h-1zM11 10h2v1h-2zM16 10h2v1h-2zM20 10h4v1h-4zM26 10h2v1h-2z" fill="#fff"/></svg>
<svg class="a" style="left:986px;top:461px" width="35" height="19"><path d="M3 4h2v1h-2zM10 4h4v1h-4zM16 4h2v1h-2zM20 4h4v1h-4zM26 4h2v1h-2zM4 5h1v1h-1zM13 5h1v1h-1zM15 5h1v1h-1zM18 5h1v1h-1zM23 5h1v1h-1zM25 5h1v1h-1zM28 5h1v1h-1zM4 6h1v1h-1zM12 6h1v1h-1zM15 6h1v1h-1zM18 6h1v1h-1zM22 6h1v1h-1zM25 6h1v1h-1zM28 6h1v1h-1zM4 7h1v1h-1zM12 7h1v1h-1zM15 7h4v1h-4zM22 7h1v1h-1zM25 7h1v1h-1zM28 7h1v1h-1zM4 8h1v1h-1zM12 8h1v1h-1zM18 8h1v1h-1zM22 8h1v1h-1zM25 8h1v1h-1zM28 8h1v1h-1zM4 9h1v1h-1zM11 9h1v1h-1zM17 9h2v1h-2zM21 9h1v1h-1zM25 9h1v1h-1zM28 9h1v1h-1zM3 10h3v1h-3zM8 10h1v1h-1zM11 10h1v1h-1zM15 10h3v1h-3zM21 10h1v1h-1zM26 10h2v1h-2z" fill="#fff"/></svg>
<svg class="a" style="left:986px;top:495px" width="35" height="19"><path d="M3 4h2v1h-2zM10 4h4v1h-4zM16 4h2v1h-2zM20 4h2v1h-2zM25 4h4v1h-4zM4 5h1v1h-1zM13 5h1v1h-1zM15 5h1v1h-1zM18 5h1v1h-1zM21 5h1v1h-1zM25 5h1v1h-1zM4 6h1v1h-1zM12 6h1v1h-1zM15 6h1v1h-1zM18 6h1v1h-1zM21 6h1v1h-1zM25 6h1v1h-1zM4 7h1v1h-1zM12 7h1v1h-1zM15 7h4v1h-4zM21 7h1v1h-1zM25 7h3v1h-3zM4 8h1v1h-1zM12 8h1v1h-1zM18 8h1v1h-1zM21 8h1v1h-1zM28 8h1v1h-1zM4 9h1v1h-1zM11 9h1v1h-1zM17 9h2v1h-2zM21 9h1v1h-1zM28 9h1v1h-1zM3 10h3v1h-3zM8 10h1v1h-1zM11 10h1v1h-1zM15 10h3v1h-3zM20 10h3v1h-3zM25 10h3v1h-3z" fill="#fff"/></svg>
<svg class="a" style="left:986px;top:530px" width="35" height="19"><path d="M3 4h2v1h-2zM10 4h4v1h-4zM16 4h2v1h-2zM21 4h3v1h-3zM26 4h2v1h-2zM4 5h1v1h-1zM13 5h1v1h-1zM15 5h1v1h-1zM18 5h1v1h-1zM20 5h2v1h-2zM25 5h1v1h-1zM28 5h1v1h-1zM4 6h1v1h-1zM12 6h1v1h-1zM15 6h1v1h-1zM18 6h1v1h-1zM20 6h1v1h-1zM25 6h1v1h-1zM28 6h1v1h-1zM4 7h1v1h-1zM12 7h1v1h-1zM16 7h2v1h-2zM20 7h3v1h-3zM25 7h1v1h-1zM28 7h1v1h-1zM4 8h1v1h-1zM12 8h1v1h-1zM15 8h1v1h-1zM18 8h1v1h-1zM20 8h1v1h-1zM23 8h1v1h-1zM25 8h1v1h-1zM28 8h1v1h-1zM4 9h1v1h-1zM11 9h1v1h-1zM15 9h1v1h-1zM18 9h1v1h-1zM20 9h1v1h-1zM23 9h1v1h-1zM25 9h1v1h-1zM28 9h1v1h-1zM3 10h3v1h-3zM8 10h1v1h-1zM11 10h1v1h-1zM16 10h2v1h-2zM21 10h2v1h-2zM26 10h2v1h-2z" fill="#fff"/></svg>
<svg class="a" style="left:986px;top:565px" width="35" height="19"><path d="M3 4h2v1h-2zM10 4h4v1h-4zM16 4h2v1h-2zM21 4h2v1h-2zM25 4h4v1h-4zM4 5h1v1h-1zM13 5h1v1h-1zM15 5h1v1h-1zM18 5h1v1h-1zM20 5h1v1h-1zM23 5h1v1h-1zM25 5h1v1h-1zM4 6h1v1h-1zM12 6h1v1h-1zM15 6h1v1h-1zM18 6h1v1h-1zM20 6h1v1h-1zM23 6h1v1h-1zM25 6h1v1h-1zM4 7h1v1h-1zM12 7h1v1h-1zM16 7h2v1h-2zM20 7h1v1h-1zM23 7h1v1h-1zM25 7h3v1h-3zM4 8h1v1h-1zM12 8h1v1h-1zM15 8h1v1h-1zM18 8h1v1h-1zM20 8h1v1h-1zM23 8h1v1h-1zM28 8h1v1h-1zM4 9h1v1h-1zM11 9h1v1h-1zM15 9h1v1h-1zM18 9h1v1h-1zM20 9h1v1h-1zM23 9h1v1h-1zM28 9h1v1h-1zM3 10h3v1h-3zM8 10h1v1h-1zM11 10h1v1h-1zM16 10h2v1h-2zM21 10h2v1h-2zM25 10h3v1h-3z" fill="#fff"/></svg>
<svg class="a" style="left:224px;top:578px" width="61" height="19"><path d="M4 4h2v1h-2zM8 4h2v1h-2zM17 4h2v1h-2zM37 4h2v1h-2zM42 4h2v1h-2zM47 4h2v1h-2zM51 4h4v1h-4zM3 5h1v1h-1zM6 5h1v1h-1zM9 5h1v1h-1zM17 5h2v1h-2zM36 5h1v1h-1zM39 5h1v1h-1zM41 5h1v1h-1zM44 5h1v1h-1zM46 5h1v1h-1zM49 5h1v1h-1zM51 5h1v1h-1zM6 6h1v1h-1zM9 6h1v1h-1zM16 6h1v1h-1zM19 6h1v1h-1zM23 6h1v1h-1zM26 6h1v1h-1zM29 6h3v1h-3zM39 6h1v1h-1zM41 6h1v1h-1zM44 6h1v1h-1zM46 6h1v1h-1zM49 6h1v1h-1zM51 6h1v1h-1zM4 7h2v1h-2zM9 7h1v1h-1zM16 7h1v1h-1zM19 7h1v1h-1zM23 7h1v1h-1zM26 7h1v1h-1zM28 7h1v1h-1zM31 7h1v1h-1zM38 7h1v1h-1zM41 7h1v1h-1zM44 7h1v1h-1zM46 7h1v1h-1zM49 7h1v1h-1zM51 7h3v1h-3zM6 8h1v1h-1zM9 8h1v1h-1zM16 8h4v1h-4zM23 8h1v1h-1zM26 8h1v1h-1zM28 8h1v1h-1zM31 8h1v1h-1zM37 8h1v1h-1zM41 8h1v1h-1zM44 8h1v1h-1zM46 8h1v1h-1zM49 8h1v1h-1zM54 8h1v1h-1zM6 9h1v1h-1zM9 9h1v1h-1zM15 9h1v1h-1zM20 9h1v1h-1zM23 9h1v1h-1zM26 9h1v1h-1zM28 9h1v1h-1zM31 9h1v1h-1zM36 9h1v1h-1zM41 9h1v1h-1zM44 9h1v1h-1zM46 9h1v1h-1zM49 9h1v1h-1zM54 9h1v1h-1zM3 10h3v1h-3zM8 10h3v1h-3zM15 10h1v1h-1zM20 10h1v1h-1zM23 10h4v1h-4zM29 10h3v1h-3zM36 10h4v1h-4zM42 10h2v1h-2zM47 10h2v1h-2zM51 10h3v1h-3zM31 11h1v1h-1zM29 12h2v1h-2z" fill="#fff"/></svg>
<svg class="a" style="left:288px;top:578px" width="58" height="19"><path d="M3 4h2v1h-2zM12 4h3v1h-3zM31 4h2v1h-2zM35 4h2v1h-2zM44 4h2v1h-2zM49 4h2v1h-2zM4 5h1v1h-1zM11 5h1v1h-1zM15 5h1v1h-1zM30 5h1v1h-1zM33 5h1v1h-1zM36 5h1v1h-1zM43 5h1v1h-1zM46 5h1v1h-1zM48 5h1v1h-1zM51 5h1v1h-1zM4 6h1v1h-1zM11 6h1v1h-1zM18 6h2v1h-2zM22 6h3v1h-3zM33 6h1v1h-1zM36 6h1v1h-1zM40 6h1v1h-1zM43 6h1v1h-1zM46 6h1v1h-1zM48 6h1v1h-1zM51 6h1v1h-1zM4 7h1v1h-1zM12 7h3v1h-3zM17 7h1v1h-1zM20 7h1v1h-1zM22 7h1v1h-1zM25 7h1v1h-1zM32 7h1v1h-1zM36 7h1v1h-1zM43 7h1v1h-1zM46 7h1v1h-1zM48 7h1v1h-1zM51 7h1v1h-1zM4 8h1v1h-1zM15 8h1v1h-1zM17 8h4v1h-4zM22 8h1v1h-1zM25 8h1v1h-1zM31 8h1v1h-1zM36 8h1v1h-1zM43 8h1v1h-1zM46 8h1v1h-1zM48 8h1v1h-1zM51 8h1v1h-1zM4 9h1v1h-1zM11 9h1v1h-1zM15 9h1v1h-1zM17 9h1v1h-1zM22 9h1v1h-1zM25 9h1v1h-1zM30 9h1v1h-1zM36 9h1v1h-1zM43 9h1v1h-1zM46 9h1v1h-1zM48 9h1v1h-1zM51 9h1v1h-1zM3 10h3v1h-3zM12 10h3v1h-3zM18 10h3v1h-3zM22 10h3v1h-3zM30 10h4v1h-4zM35 10h3v1h-3zM40 10h1v1h-1zM44 10h2v1h-2zM49 10h2v1h-2zM22 11h1v1h-1zM22 12h1v1h-1z" fill="#fff"/></svg>
<svg class="a" style="left:352px;top:578px" width="58" height="19"><path d="M3 4h4v1h-4zM12 4h3v1h-3zM31 4h2v1h-2zM36 4h3v1h-3zM44 4h2v1h-2zM49 4h2v1h-2zM3 5h1v1h-1zM11 5h1v1h-1zM15 5h1v1h-1zM30 5h1v1h-1zM33 5h1v1h-1zM35 5h2v1h-2zM43 5h1v1h-1zM46 5h1v1h-1zM48 5h1v1h-1zM51 5h1v1h-1zM3 6h1v1h-1zM11 6h1v1h-1zM18 6h2v1h-2zM22 6h3v1h-3zM30 6h1v1h-1zM33 6h1v1h-1zM35 6h1v1h-1zM40 6h1v1h-1zM43 6h1v1h-1zM46 6h1v1h-1zM48 6h1v1h-1zM51 6h1v1h-1zM3 7h3v1h-3zM12 7h3v1h-3zM17 7h1v1h-1zM20 7h1v1h-1zM22 7h1v1h-1zM25 7h1v1h-1zM30 7h1v1h-1zM33 7h1v1h-1zM35 7h3v1h-3zM43 7h1v1h-1zM46 7h1v1h-1zM48 7h1v1h-1zM51 7h1v1h-1zM6 8h1v1h-1zM15 8h1v1h-1zM17 8h4v1h-4zM22 8h1v1h-1zM25 8h1v1h-1zM30 8h1v1h-1zM33 8h1v1h-1zM35 8h1v1h-1zM38 8h1v1h-1zM43 8h1v1h-1zM46 8h1v1h-1zM48 8h1v1h-1zM51 8h1v1h-1zM6 9h1v1h-1zM11 9h1v1h-1zM15 9h1v1h-1zM17 9h1v1h-1zM22 9h1v1h-1zM25 9h1v1h-1zM30 9h1v1h-1zM33 9h1v1h-1zM35 9h1v1h-1zM38 9h1v1h-1zM43 9h1v1h-1zM46 9h1v1h-1zM48 9h1v1h-1zM51 9h1v1h-1zM3 10h3v1h-3zM12 10h3v1h-3zM18 10h3v1h-3zM22 10h3v1h-3zM31 10h2v1h-2zM36 10h2v1h-2zM40 10h1v1h-1zM44 10h2v1h-2zM49 10h2v1h-2zM22 11h1v1h-1zM22 12h1v1h-1z" fill="#fff"/></svg>
<svg class="a" style="left:416px;top:578px" width="58" height="19"><path d="M4 4h3v1h-3zM12 4h3v1h-3zM30 4h2v1h-2zM38 4h1v1h-1zM44 4h2v1h-2zM49 4h2v1h-2zM3 5h2v1h-2zM11 5h1v1h-1zM15 5h1v1h-1zM31 5h1v1h-1zM37 5h2v1h-2zM43 5h1v1h-1zM46 5h1v1h-1zM48 5h1v1h-1zM51 5h1v1h-1zM3 6h1v1h-1zM11 6h1v1h-1zM18 6h2v1h-2zM22 6h3v1h-3zM31 6h1v1h-1zM36 6h1v1h-1zM38 6h1v1h-1zM40 6h1v1h-1zM43 6h1v1h-1zM46 6h1v1h-1zM48 6h1v1h-1zM51 6h1v1h-1zM3 7h3v1h-3zM12 7h3v1h-3zM17 7h1v1h-1zM20 7h1v1h-1zM22 7h1v1h-1zM25 7h1v1h-1zM31 7h1v1h-1zM36 7h1v1h-1zM38 7h1v1h-1zM43 7h1v1h-1zM46 7h1v1h-1zM48 7h1v1h-1zM51 7h1v1h-1zM3 8h1v1h-1zM6 8h1v1h-1zM15 8h1v1h-1zM17 8h4v1h-4zM22 8h1v1h-1zM25 8h1v1h-1zM31 8h1v1h-1zM35 8h1v1h-1zM38 8h1v1h-1zM43 8h1v1h-1zM46 8h1v1h-1zM48 8h1v1h-1zM51 8h1v1h-1zM3 9h1v1h-1zM6 9h1v1h-1zM11 9h1v1h-1zM15 9h1v1h-1zM17 9h1v1h-1zM22 9h1v1h-1zM25 9h1v1h-1zM31 9h1v1h-1zM35 9h5v1h-5zM43 9h1v1h-1zM46 9h1v1h-1zM48 9h1v1h-1zM51 9h1v1h-1zM4 10h2v1h-2zM12 10h3v1h-3zM18 10h3v1h-3zM22 10h3v1h-3zM30 10h3v1h-3zM38 10h1v1h-1zM40 10h1v1h-1zM44 10h2v1h-2zM49 10h2v1h-2zM22 11h1v1h-1zM22 12h1v1h-1z" fill="#fff"/></svg>
<svg class="a" style="left:480px;top:578px" width="58" height="19"><path d="M3 4h4v1h-4zM12 4h3v1h-3zM31 4h2v1h-2zM36 4h2v1h-2zM44 4h2v1h-2zM49 4h2v1h-2zM6 5h1v1h-1zM11 5h1v1h-1zM15 5h1v1h-1zM30 5h1v1h-1zM33 5h1v1h-1zM35 5h1v1h-1zM38 5h1v1h-1zM43 5h1v1h-1zM46 5h1v1h-1zM48 5h1v1h-1zM51 5h1v1h-1zM5 6h1v1h-1zM11 6h1v1h-1zM18 6h2v1h-2zM22 6h3v1h-3zM33 6h1v1h-1zM38 6h1v1h-1zM40 6h1v1h-1zM43 6h1v1h-1zM46 6h1v1h-1zM48 6h1v1h-1zM51 6h1v1h-1zM5 7h1v1h-1zM12 7h3v1h-3zM17 7h1v1h-1zM20 7h1v1h-1zM22 7h1v1h-1zM25 7h1v1h-1zM32 7h1v1h-1zM37 7h1v1h-1zM43 7h1v1h-1zM46 7h1v1h-1zM48 7h1v1h-1zM51 7h1v1h-1zM5 8h1v1h-1zM15 8h1v1h-1zM17 8h4v1h-4zM22 8h1v1h-1zM25 8h1v1h-1zM31 8h1v1h-1zM36 8h1v1h-1zM43 8h1v1h-1zM46 8h1v1h-1zM48 8h1v1h-1zM51 8h1v1h-1zM4 9h1v1h-1zM11 9h1v1h-1zM15 9h1v1h-1zM17 9h1v1h-1zM22 9h1v1h-1zM25 9h1v1h-1zM30 9h1v1h-1zM35 9h1v1h-1zM43 9h1v1h-1zM46 9h1v1h-1zM48 9h1v1h-1zM51 9h1v1h-1zM4 10h1v1h-1zM12 10h3v1h-3zM18 10h3v1h-3zM22 10h3v1h-3zM30 10h4v1h-4zM35 10h4v1h-4zM40 10h1v1h-1zM44 10h2v1h-2zM49 10h2v1h-2zM22 11h1v1h-1zM22 12h1v1h-1z" fill="#fff"/></svg>
<svg class="a" style="left:544px;top:578px" width="58" height="19"><path d="M4 4h2v1h-2zM12 4h3v1h-3zM31 4h2v1h-2zM36 4h3v1h-3zM44 4h2v1h-2zM49 4h2v1h-2zM3 5h1v1h-1zM6 5h1v1h-1zM11 5h1v1h-1zM15 5h1v1h-1zM30 5h1v1h-1zM33 5h1v1h-1zM35 5h2v1h-2zM43 5h1v1h-1zM46 5h1v1h-1zM48 5h1v1h-1zM51 5h1v1h-1zM3 6h1v1h-1zM6 6h1v1h-1zM11 6h1v1h-1zM18 6h2v1h-2zM22 6h3v1h-3zM30 6h1v1h-1zM33 6h1v1h-1zM35 6h1v1h-1zM40 6h1v1h-1zM43 6h1v1h-1zM46 6h1v1h-1zM48 6h1v1h-1zM51 6h1v1h-1zM3 7h4v1h-4zM12 7h3v1h-3zM17 7h1v1h-1zM20 7h1v1h-1zM22 7h1v1h-1zM25 7h1v1h-1zM30 7h1v1h-1zM33 7h1v1h-1zM35 7h3v1h-3zM43 7h1v1h-1zM46 7h1v1h-1zM48 7h1v1h-1zM51 7h1v1h-1zM6 8h1v1h-1zM15 8h1v1h-1zM17 8h4v1h-4zM22 8h1v1h-1zM25 8h1v1h-1zM30 8h1v1h-1zM33 8h1v1h-1zM35 8h1v1h-1zM38 8h1v1h-1zM43 8h1v1h-1zM46 8h1v1h-1zM48 8h1v1h-1zM51 8h1v1h-1zM5 9h2v1h-2zM11 9h1v1h-1zM15 9h1v1h-1zM17 9h1v1h-1zM22 9h1v1h-1zM25 9h1v1h-1zM30 9h1v1h-1zM33 9h1v1h-1zM35 9h1v1h-1zM38 9h1v1h-1zM43 9h1v1h-1zM46 9h1v1h-1zM48 9h1v1h-1zM51 9h1v1h-1zM3 10h3v1h-3zM12 10h3v1h-3zM18 10h3v1h-3zM22 10h3v1h-3zM31 10h2v1h-2zM36 10h2v1h-2zM40 10h1v1h-1zM44 10h2v1h-2zM49 10h2v1h-2zM22 11h1v1h-1zM22 12h1v1h-1z" fill="#fff"/></svg>
<svg class="a" style="left:608px;top:578px" width="63" height="19"><path d="M3 4h2v1h-2zM9 4h2v1h-2zM17 4h3v1h-3zM35 4h2v1h-2zM40 4h4v1h-4zM49 4h2v1h-2zM54 4h2v1h-2zM4 5h1v1h-1zM8 5h1v1h-1zM11 5h1v1h-1zM16 5h1v1h-1zM20 5h1v1h-1zM36 5h1v1h-1zM40 5h1v1h-1zM48 5h1v1h-1zM51 5h1v1h-1zM53 5h1v1h-1zM56 5h1v1h-1zM4 6h1v1h-1zM11 6h1v1h-1zM16 6h1v1h-1zM23 6h2v1h-2zM27 6h3v1h-3zM36 6h1v1h-1zM40 6h1v1h-1zM45 6h1v1h-1zM48 6h1v1h-1zM51 6h1v1h-1zM53 6h1v1h-1zM56 6h1v1h-1zM4 7h1v1h-1zM10 7h1v1h-1zM17 7h3v1h-3zM22 7h1v1h-1zM25 7h1v1h-1zM27 7h1v1h-1zM30 7h1v1h-1zM36 7h1v1h-1zM40 7h3v1h-3zM48 7h1v1h-1zM51 7h1v1h-1zM53 7h1v1h-1zM56 7h1v1h-1zM4 8h1v1h-1zM9 8h1v1h-1zM20 8h1v1h-1zM22 8h4v1h-4zM27 8h1v1h-1zM30 8h1v1h-1zM36 8h1v1h-1zM43 8h1v1h-1zM48 8h1v1h-1zM51 8h1v1h-1zM53 8h1v1h-1zM56 8h1v1h-1zM4 9h1v1h-1zM8 9h1v1h-1zM16 9h1v1h-1zM20 9h1v1h-1zM22 9h1v1h-1zM27 9h1v1h-1zM30 9h1v1h-1zM36 9h1v1h-1zM43 9h1v1h-1zM48 9h1v1h-1zM51 9h1v1h-1zM53 9h1v1h-1zM56 9h1v1h-1zM3 10h3v1h-3zM8 10h4v1h-4zM17 10h3v1h-3zM23 10h3v1h-3zM27 10h3v1h-3zM35 10h3v1h-3zM40 10h3v1h-3zM45 10h1v1h-1zM49 10h2v1h-2zM54 10h2v1h-2zM27 11h1v1h-1zM27 12h1v1h-1z" fill="#fff"/></svg>
<svg class="a" style="left:672px;top:578px" width="63" height="19"><path d="M3 4h2v1h-2zM9 4h2v1h-2zM17 4h3v1h-3zM36 4h2v1h-2zM41 4h2v1h-2zM49 4h2v1h-2zM54 4h2v1h-2zM4 5h1v1h-1zM8 5h1v1h-1zM11 5h1v1h-1zM16 5h1v1h-1zM20 5h1v1h-1zM35 5h1v1h-1zM38 5h1v1h-1zM40 5h1v1h-1zM43 5h1v1h-1zM48 5h1v1h-1zM51 5h1v1h-1zM53 5h1v1h-1zM56 5h1v1h-1zM4 6h1v1h-1zM11 6h1v1h-1zM16 6h1v1h-1zM23 6h2v1h-2zM27 6h3v1h-3zM38 6h1v1h-1zM43 6h1v1h-1zM45 6h1v1h-1zM48 6h1v1h-1zM51 6h1v1h-1zM53 6h1v1h-1zM56 6h1v1h-1zM4 7h1v1h-1zM9 7h2v1h-2zM17 7h3v1h-3zM22 7h1v1h-1zM25 7h1v1h-1zM27 7h1v1h-1zM30 7h1v1h-1zM37 7h1v1h-1zM41 7h2v1h-2zM48 7h1v1h-1zM51 7h1v1h-1zM53 7h1v1h-1zM56 7h1v1h-1zM4 8h1v1h-1zM11 8h1v1h-1zM20 8h1v1h-1zM22 8h4v1h-4zM27 8h1v1h-1zM30 8h1v1h-1zM36 8h1v1h-1zM43 8h1v1h-1zM48 8h1v1h-1zM51 8h1v1h-1zM53 8h1v1h-1zM56 8h1v1h-1zM4 9h1v1h-1zM11 9h1v1h-1zM16 9h1v1h-1zM20 9h1v1h-1zM22 9h1v1h-1zM27 9h1v1h-1zM30 9h1v1h-1zM35 9h1v1h-1zM43 9h1v1h-1zM48 9h1v1h-1zM51 9h1v1h-1zM53 9h1v1h-1zM56 9h1v1h-1zM3 10h3v1h-3zM8 10h3v1h-3zM17 10h3v1h-3zM23 10h3v1h-3zM27 10h3v1h-3zM35 10h4v1h-4zM40 10h3v1h-3zM45 10h1v1h-1zM49 10h2v1h-2zM54 10h2v1h-2zM27 11h1v1h-1zM27 12h1v1h-1z" fill="#fff"/></svg>
<svg class="a" style="left:736px;top:578px" width="63" height="19"><path d="M3 4h2v1h-2zM8 4h4v1h-4zM17 4h3v1h-3zM36 4h2v1h-2zM40 4h4v1h-4zM49 4h2v1h-2zM54 4h2v1h-2zM4 5h1v1h-1zM8 5h1v1h-1zM16 5h1v1h-1zM20 5h1v1h-1zM35 5h1v1h-1zM38 5h1v1h-1zM43 5h1v1h-1zM48 5h1v1h-1zM51 5h1v1h-1zM53 5h1v1h-1zM56 5h1v1h-1zM4 6h1v1h-1zM8 6h1v1h-1zM16 6h1v1h-1zM23 6h2v1h-2zM27 6h3v1h-3zM35 6h1v1h-1zM38 6h1v1h-1zM42 6h1v1h-1zM45 6h1v1h-1zM48 6h1v1h-1zM51 6h1v1h-1zM53 6h1v1h-1zM56 6h1v1h-1zM4 7h1v1h-1zM8 7h3v1h-3zM17 7h3v1h-3zM22 7h1v1h-1zM25 7h1v1h-1zM27 7h1v1h-1zM30 7h1v1h-1zM35 7h1v1h-1zM38 7h1v1h-1zM42 7h1v1h-1zM48 7h1v1h-1zM51 7h1v1h-1zM53 7h1v1h-1zM56 7h1v1h-1zM4 8h1v1h-1zM11 8h1v1h-1zM20 8h1v1h-1zM22 8h4v1h-4zM27 8h1v1h-1zM30 8h1v1h-1zM35 8h1v1h-1zM38 8h1v1h-1zM42 8h1v1h-1zM48 8h1v1h-1zM51 8h1v1h-1zM53 8h1v1h-1zM56 8h1v1h-1zM4 9h1v1h-1zM11 9h1v1h-1zM16 9h1v1h-1zM20 9h1v1h-1zM22 9h1v1h-1zM27 9h1v1h-1zM30 9h1v1h-1zM35 9h1v1h-1zM38 9h1v1h-1zM41 9h1v1h-1zM48 9h1v1h-1zM51 9h1v1h-1zM53 9h1v1h-1zM56 9h1v1h-1zM3 10h3v1h-3zM8 10h3v1h-3zM17 10h3v1h-3zM23 10h3v1h-3zM27 10h3v1h-3zM36 10h2v1h-2zM41 10h1v1h-1zM45 10h1v1h-1zM49 10h2v1h-2zM54 10h2v1h-2zM27 11h1v1h-1zM27 12h1v1h-1z" fill="#fff"/></svg>
<svg class="a" style="left:800px;top:578px" width="63" height="19"><path d="M3 4h2v1h-2zM9 4h3v1h-3zM17 4h3v1h-3zM35 4h2v1h-2zM40 4h4v1h-4zM49 4h2v1h-2zM54 4h2v1h-2zM4 5h1v1h-1zM8 5h2v1h-2zM16 5h1v1h-1zM20 5h1v1h-1zM36 5h1v1h-1zM40 5h1v1h-1zM48 5h1v1h-1zM51 5h1v1h-1zM53 5h1v1h-1zM56 5h1v1h-1zM4 6h1v1h-1zM8 6h1v1h-1zM16 6h1v1h-1zM23 6h2v1h-2zM27 6h3v1h-3zM36 6h1v1h-1zM40 6h1v1h-1zM45 6h1v1h-1zM48 6h1v1h-1zM51 6h1v1h-1zM53 6h1v1h-1zM56 6h1v1h-1zM4 7h1v1h-1zM8 7h3v1h-3zM17 7h3v1h-3zM22 7h1v1h-1zM25 7h1v1h-1zM27 7h1v1h-1zM30 7h1v1h-1zM36 7h1v1h-1zM40 7h3v1h-3zM48 7h1v1h-1zM51 7h1v1h-1zM53 7h1v1h-1zM56 7h1v1h-1zM4 8h1v1h-1zM8 8h1v1h-1zM11 8h1v1h-1zM20 8h1v1h-1zM22 8h4v1h-4zM27 8h1v1h-1zM30 8h1v1h-1zM36 8h1v1h-1zM43 8h1v1h-1zM48 8h1v1h-1zM51 8h1v1h-1zM53 8h1v1h-1zM56 8h1v1h-1zM4 9h1v1h-1zM8 9h1v1h-1zM11 9h1v1h-1zM16 9h1v1h-1zM20 9h1v1h-1zM22 9h1v1h-1zM27 9h1v1h-1zM30 9h1v1h-1zM36 9h1v1h-1zM43 9h1v1h-1zM48 9h1v1h-1zM51 9h1v1h-1zM53 9h1v1h-1zM56 9h1v1h-1zM3 10h3v1h-3zM9 10h2v1h-2zM17 10h3v1h-3zM23 10h3v1h-3zM27 10h3v1h-3zM35 10h3v1h-3zM40 10h3v1h-3zM45 10h1v1h-1zM49 10h2v1h-2zM54 10h2v1h-2zM27 11h1v1h-1zM27 12h1v1h-1z" fill="#fff"/></svg>
<svg class="a" style="left:864px;top:578px" width="63" height="19"><path d="M4 4h2v1h-2zM9 4h2v1h-2zM17 4h3v1h-3zM36 4h2v1h-2zM41 4h2v1h-2zM49 4h2v1h-2zM54 4h2v1h-2zM3 5h1v1h-1zM6 5h1v1h-1zM8 5h1v1h-1zM11 5h1v1h-1zM16 5h1v1h-1zM20 5h1v1h-1zM35 5h1v1h-1zM38 5h1v1h-1zM40 5h1v1h-1zM43 5h1v1h-1zM48 5h1v1h-1zM51 5h1v1h-1zM53 5h1v1h-1zM56 5h1v1h-1zM6 6h1v1h-1zM8 6h1v1h-1zM11 6h1v1h-1zM16 6h1v1h-1zM23 6h2v1h-2zM27 6h3v1h-3zM35 6h1v1h-1zM38 6h1v1h-1zM40 6h1v1h-1zM43 6h1v1h-1zM45 6h1v1h-1zM48 6h1v1h-1zM51 6h1v1h-1zM53 6h1v1h-1zM56 6h1v1h-1zM5 7h1v1h-1zM8 7h1v1h-1zM11 7h1v1h-1zM17 7h3v1h-3zM22 7h1v1h-1zM25 7h1v1h-1zM27 7h1v1h-1zM30 7h1v1h-1zM35 7h1v1h-1zM38 7h1v1h-1zM40 7h1v1h-1zM43 7h1v1h-1zM48 7h1v1h-1zM51 7h1v1h-1zM53 7h1v1h-1zM56 7h1v1h-1zM4 8h1v1h-1zM8 8h1v1h-1zM11 8h1v1h-1zM20 8h1v1h-1zM22 8h4v1h-4zM27 8h1v1h-1zM30 8h1v1h-1zM35 8h1v1h-1zM38 8h1v1h-1zM40 8h1v1h-1zM43 8h1v1h-1zM48 8h1v1h-1zM51 8h1v1h-1zM53 8h1v1h-1zM56 8h1v1h-1zM3 9h1v1h-1zM8 9h1v1h-1zM11 9h1v1h-1zM16 9h1v1h-1zM20 9h1v1h-1zM22 9h1v1h-1zM27 9h1v1h-1zM30 9h1v1h-1zM35 9h1v1h-1zM38 9h1v1h-1zM40 9h1v1h-1zM43 9h1v1h-1zM48 9h1v1h-1zM51 9h1v1h-1zM53 9h1v1h-1zM56 9h1v1h-1zM3 10h4v1h-4zM9 10h2v1h-2zM17 10h3v1h-3zM23 10h3v1h-3zM27 10h3v1h-3zM36 10h2v1h-2zM41 10h2v1h-2zM45 10h1v1h-1zM49 10h2v1h-2zM54 10h2v1h-2zM27 11h1v1h-1zM27 12h1v1h-1z" fill="#fff"/></svg>
<svg class="a" style="left:928px;top:578px" width="63" height="19"><path d="M4 4h2v1h-2zM8 4h2v1h-2zM17 4h3v1h-3zM36 4h2v1h-2zM41 4h2v1h-2zM49 4h2v1h-2zM54 4h2v1h-2zM3 5h1v1h-1zM6 5h1v1h-1zM9 5h1v1h-1zM16 5h1v1h-1zM20 5h1v1h-1zM35 5h1v1h-1zM38 5h1v1h-1zM40 5h1v1h-1zM43 5h1v1h-1zM48 5h1v1h-1zM51 5h1v1h-1zM53 5h1v1h-1zM56 5h1v1h-1zM6 6h1v1h-1zM9 6h1v1h-1zM16 6h1v1h-1zM23 6h2v1h-2zM27 6h3v1h-3zM35 6h1v1h-1zM38 6h1v1h-1zM40 6h1v1h-1zM43 6h1v1h-1zM45 6h1v1h-1zM48 6h1v1h-1zM51 6h1v1h-1zM53 6h1v1h-1zM56 6h1v1h-1zM5 7h1v1h-1zM9 7h1v1h-1zM17 7h3v1h-3zM22 7h1v1h-1zM25 7h1v1h-1zM27 7h1v1h-1zM30 7h1v1h-1zM35 7h1v1h-1zM38 7h1v1h-1zM41 7h2v1h-2zM48 7h1v1h-1zM51 7h1v1h-1zM53 7h1v1h-1zM56 7h1v1h-1zM4 8h1v1h-1zM9 8h1v1h-1zM20 8h1v1h-1zM22 8h4v1h-4zM27 8h1v1h-1zM30 8h1v1h-1zM35 8h1v1h-1zM38 8h1v1h-1zM40 8h1v1h-1zM43 8h1v1h-1zM48 8h1v1h-1zM51 8h1v1h-1zM53 8h1v1h-1zM56 8h1v1h-1zM3 9h1v1h-1zM9 9h1v1h-1zM16 9h1v1h-1zM20 9h1v1h-1zM22 9h1v1h-1zM27 9h1v1h-1zM30 9h1v1h-1zM35 9h1v1h-1zM38 9h1v1h-1zM40 9h1v1h-1zM43 9h1v1h-1zM48 9h1v1h-1zM51 9h1v1h-1zM53 9h1v1h-1zM56 9h1v1h-1zM3 10h4v1h-4zM8 10h3v1h-3zM17 10h3v1h-3zM23 10h3v1h-3zM27 10h3v1h-3zM36 10h2v1h-2zM41 10h2v1h-2zM45 10h1v1h-1zM49 10h2v1h-2zM54 10h2v1h-2zM27 11h1v1h-1zM27 12h1v1h-1z" fill="#fff"/></svg>
<div class="a" style="left:985px;top:387px;width:35px;height:12px;background:#fff"></div>
<svg class="a" style="left:986px;top:386px" width="35" height="19"><path d="M3 4h2v1h-2zM11 4h2v1h-2zM16 4h2v1h-2zM21 4h2v1h-2zM25 4h4v1h-4zM4 5h1v1h-1zM10 5h1v1h-1zM13 5h1v1h-1zM15 5h1v1h-1zM18 5h1v1h-1zM20 5h1v1h-1zM23 5h1v1h-1zM28 5h1v1h-1zM4 6h1v1h-1zM10 6h1v1h-1zM13 6h1v1h-1zM15 6h1v1h-1zM18 6h1v1h-1zM20 6h1v1h-1zM23 6h1v1h-1zM27 6h1v1h-1zM4 7h1v1h-1zM11 7h2v1h-2zM15 7h1v1h-1zM18 7h1v1h-1zM21 7h2v1h-2zM27 7h1v1h-1zM4 8h1v1h-1zM10 8h1v1h-1zM13 8h1v1h-1zM15 8h1v1h-1zM18 8h1v1h-1zM20 8h1v1h-1zM23 8h1v1h-1zM27 8h1v1h-1zM4 9h1v1h-1zM10 9h1v1h-1zM13 9h1v1h-1zM15 9h1v1h-1zM18 9h1v1h-1zM20 9h1v1h-1zM23 9h1v1h-1zM26 9h1v1h-1zM3 10h3v1h-3zM8 10h1v1h-1zM11 10h2v1h-2zM16 10h2v1h-2zM21 10h2v1h-2zM26 10h1v1h-1z" fill="#000"/></svg>
<svg class="a" style="left:229px;top:390px" width="68" height="19"><path d="M47 3h1v1h-1zM5 4h1v1h-1zM7 4h1v1h-1zM9 4h2v1h-2zM15 4h2v1h-2zM19 4h4v1h-4zM27 4h1v1h-1zM30 4h2v1h-2zM35 4h2v1h-2zM40 4h2v1h-2zM47 4h1v1h-1zM5 5h1v1h-1zM7 5h1v1h-1zM10 5h1v1h-1zM14 5h1v1h-1zM17 5h1v1h-1zM22 5h1v1h-1zM26 5h2v1h-2zM29 5h1v1h-1zM32 5h1v1h-1zM34 5h1v1h-1zM37 5h1v1h-1zM39 5h1v1h-1zM42 5h1v1h-1zM47 5h1v1h-1zM3 6h6v1h-6zM10 6h1v1h-1zM14 6h1v1h-1zM17 6h1v1h-1zM21 6h1v1h-1zM25 6h1v1h-1zM27 6h1v1h-1zM29 6h1v1h-1zM32 6h1v1h-1zM37 6h1v1h-1zM39 6h1v1h-1zM42 6h1v1h-1zM47 6h3v1h-3zM53 6h1v1h-1zM56 6h1v1h-1zM60 6h1v1h-1zM5 7h1v1h-1zM7 7h1v1h-1zM10 7h1v1h-1zM14 7h4v1h-4zM21 7h1v1h-1zM25 7h1v1h-1zM27 7h1v1h-1zM29 7h4v1h-4zM35 7h2v1h-2zM40 7h2v1h-2zM47 7h1v1h-1zM50 7h1v1h-1zM53 7h1v1h-1zM56 7h1v1h-1zM60 7h1v1h-1zM3 8h6v1h-6zM10 8h1v1h-1zM17 8h1v1h-1zM21 8h1v1h-1zM24 8h1v1h-1zM27 8h1v1h-1zM32 8h1v1h-1zM37 8h1v1h-1zM39 8h1v1h-1zM42 8h1v1h-1zM47 8h1v1h-1zM50 8h1v1h-1zM53 8h1v1h-1zM56 8h2v1h-2zM59 8h1v1h-1zM4 9h1v1h-1zM6 9h1v1h-1zM10 9h1v1h-1zM16 9h2v1h-2zM20 9h1v1h-1zM24 9h5v1h-5zM31 9h2v1h-2zM37 9h1v1h-1zM39 9h1v1h-1zM42 9h1v1h-1zM47 9h1v1h-1zM50 9h1v1h-1zM53 9h1v1h-1zM56 9h2v1h-2zM59 9h1v1h-1zM4 10h1v1h-1zM6 10h1v1h-1zM9 10h3v1h-3zM14 10h3v1h-3zM20 10h1v1h-1zM27 10h1v1h-1zM29 10h3v1h-3zM34 10h3v1h-3zM40 10h2v1h-2zM47 10h3v1h-3zM53 10h4v1h-4zM58 10h1v1h-1zM58 11h1v1h-1zM56 12h2v1h-2z" fill="#fff"/></svg>
<div class="a" style="left:222px;top:594px;width:800px;height:2px;background:#fbfbf8"></div>
<div class="a" style="left:222px;top:596px;width:800px;height:1px;background:#000"></div>
<div class="a" style="left:224px;top:597px;width:798px;height:19px;background:#eae9e4"></div>
<svg class="a" style="left:235px;top:597px" width="64" height="20"><path d="M3 5h5v1h-5zM9 5h1v1h-1zM14 5h1v1h-1zM16 5h4v1h-4zM23 5h1v1h-1zM28 5h1v1h-1zM31 5h3v1h-3zM36 5h5v1h-5zM46 5h1v1h-1zM51 5h1v1h-1zM56 5h1v1h-1zM3 6h1v1h-1zM9 6h1v1h-1zM14 6h1v1h-1zM16 6h1v1h-1zM20 6h1v1h-1zM23 6h1v1h-1zM28 6h1v1h-1zM30 6h1v1h-1zM34 6h1v1h-1zM36 6h1v1h-1zM40 6h2v1h-2zM46 6h1v1h-1zM51 6h1v1h-1zM55 6h2v1h-2zM3 7h1v1h-1zM9 7h1v1h-1zM14 7h1v1h-1zM16 7h1v1h-1zM20 7h1v1h-1zM23 7h1v1h-1zM28 7h1v1h-1zM30 7h1v1h-1zM36 7h1v1h-1zM41 7h1v1h-1zM46 7h1v1h-1zM51 7h1v1h-1zM54 7h1v1h-1zM56 7h1v1h-1zM3 8h5v1h-5zM9 8h1v1h-1zM14 8h1v1h-1zM16 8h4v1h-4zM23 8h1v1h-1zM28 8h1v1h-1zM31 8h3v1h-3zM36 8h1v1h-1zM41 8h1v1h-1zM46 8h6v1h-6zM53 8h1v1h-1zM56 8h1v1h-1zM3 9h1v1h-1zM9 9h1v1h-1zM14 9h1v1h-1zM16 9h1v1h-1zM19 9h1v1h-1zM23 9h1v1h-1zM28 9h1v1h-1zM34 9h1v1h-1zM36 9h1v1h-1zM41 9h1v1h-1zM46 9h1v1h-1zM51 9h1v1h-1zM53 9h5v1h-5zM3 10h1v1h-1zM9 10h1v1h-1zM14 10h1v1h-1zM16 10h1v1h-1zM20 10h1v1h-1zM23 10h1v1h-1zM28 10h1v1h-1zM30 10h1v1h-1zM34 10h1v1h-1zM36 10h1v1h-1zM40 10h2v1h-2zM46 10h1v1h-1zM51 10h1v1h-1zM56 10h1v1h-1zM3 11h5v1h-5zM10 11h4v1h-4zM16 11h1v1h-1zM21 11h1v1h-1zM24 11h4v1h-4zM31 11h3v1h-3zM36 11h5v1h-5zM43 11h1v1h-1zM46 11h1v1h-1zM51 11h1v1h-1zM56 11h1v1h-1zM43 12h1v1h-1z" fill="#8a8a8a"/></svg>
<div class="a" style="left:306px;top:599px;width:1px;height:13px;background:#8a8a8a"></div>
<svg class="a" style="left:316px;top:597px" width="63" height="20"><path d="M4 5h4v1h-4zM10 5h4v1h-4zM16 5h4v1h-4zM22 5h1v1h-1zM27 5h1v1h-1zM30 5h3v1h-3zM35 5h5v1h-5zM45 5h1v1h-1zM50 5h1v1h-1zM55 5h1v1h-1zM3 6h2v1h-2zM8 6h1v1h-1zM10 6h1v1h-1zM14 6h1v1h-1zM16 6h1v1h-1zM20 6h1v1h-1zM22 6h1v1h-1zM27 6h1v1h-1zM29 6h1v1h-1zM33 6h1v1h-1zM35 6h1v1h-1zM39 6h2v1h-2zM45 6h1v1h-1zM50 6h1v1h-1zM54 6h2v1h-2zM3 7h1v1h-1zM10 7h1v1h-1zM14 7h1v1h-1zM16 7h1v1h-1zM20 7h1v1h-1zM22 7h1v1h-1zM27 7h1v1h-1zM29 7h1v1h-1zM35 7h1v1h-1zM40 7h1v1h-1zM45 7h1v1h-1zM50 7h1v1h-1zM53 7h1v1h-1zM55 7h1v1h-1zM3 8h1v1h-1zM6 8h3v1h-3zM10 8h4v1h-4zM16 8h4v1h-4zM22 8h1v1h-1zM27 8h1v1h-1zM30 8h3v1h-3zM35 8h1v1h-1zM40 8h1v1h-1zM45 8h6v1h-6zM52 8h1v1h-1zM55 8h1v1h-1zM3 9h1v1h-1zM8 9h1v1h-1zM10 9h1v1h-1zM14 9h1v1h-1zM16 9h1v1h-1zM22 9h1v1h-1zM27 9h1v1h-1zM33 9h1v1h-1zM35 9h1v1h-1zM40 9h1v1h-1zM45 9h1v1h-1zM50 9h1v1h-1zM52 9h5v1h-5zM3 10h2v1h-2zM8 10h1v1h-1zM10 10h1v1h-1zM14 10h1v1h-1zM16 10h1v1h-1zM22 10h1v1h-1zM27 10h1v1h-1zM29 10h1v1h-1zM33 10h1v1h-1zM35 10h1v1h-1zM39 10h2v1h-2zM45 10h1v1h-1zM50 10h1v1h-1zM55 10h1v1h-1zM4 11h4v1h-4zM10 11h4v1h-4zM16 11h1v1h-1zM23 11h4v1h-4zM30 11h3v1h-3zM35 11h5v1h-5zM42 11h1v1h-1zM45 11h1v1h-1zM50 11h1v1h-1zM55 11h1v1h-1zM42 12h1v1h-1z" fill="#8a8a8a"/></svg>
<div class="a" style="left:386px;top:599px;width:1px;height:13px;background:#8a8a8a"></div>
<svg class="a" style="left:394px;top:597px" width="65" height="20"><path d="M3 5h5v1h-5zM9 5h1v1h-1zM14 5h1v1h-1zM16 5h4v1h-4zM23 5h1v1h-1zM28 5h1v1h-1zM31 5h3v1h-3zM36 5h5v1h-5zM46 5h1v1h-1zM52 5h1v1h-1zM54 5h3v1h-3zM3 6h1v1h-1zM9 6h1v1h-1zM14 6h1v1h-1zM16 6h1v1h-1zM20 6h1v1h-1zM23 6h1v1h-1zM28 6h1v1h-1zM30 6h1v1h-1zM34 6h1v1h-1zM36 6h1v1h-1zM40 6h2v1h-2zM46 6h2v1h-2zM51 6h2v1h-2zM56 6h1v1h-1zM3 7h1v1h-1zM9 7h1v1h-1zM14 7h1v1h-1zM16 7h1v1h-1zM20 7h1v1h-1zM23 7h1v1h-1zM28 7h1v1h-1zM30 7h1v1h-1zM36 7h1v1h-1zM41 7h1v1h-1zM46 7h2v1h-2zM51 7h2v1h-2zM56 7h1v1h-1zM3 8h5v1h-5zM9 8h1v1h-1zM14 8h1v1h-1zM16 8h4v1h-4zM23 8h1v1h-1zM28 8h1v1h-1zM31 8h3v1h-3zM36 8h1v1h-1zM41 8h1v1h-1zM46 8h1v1h-1zM48 8h1v1h-1zM50 8h1v1h-1zM52 8h1v1h-1zM56 8h1v1h-1zM3 9h1v1h-1zM9 9h1v1h-1zM14 9h1v1h-1zM16 9h1v1h-1zM19 9h1v1h-1zM23 9h1v1h-1zM28 9h1v1h-1zM34 9h1v1h-1zM36 9h1v1h-1zM41 9h1v1h-1zM46 9h1v1h-1zM48 9h1v1h-1zM50 9h1v1h-1zM52 9h1v1h-1zM56 9h1v1h-1zM3 10h1v1h-1zM9 10h1v1h-1zM14 10h1v1h-1zM16 10h1v1h-1zM20 10h1v1h-1zM23 10h1v1h-1zM28 10h1v1h-1zM30 10h1v1h-1zM34 10h1v1h-1zM36 10h1v1h-1zM40 10h2v1h-2zM46 10h1v1h-1zM49 10h1v1h-1zM52 10h1v1h-1zM56 10h1v1h-1zM3 11h5v1h-5zM10 11h4v1h-4zM16 11h1v1h-1zM21 11h1v1h-1zM24 11h4v1h-4zM31 11h3v1h-3zM36 11h5v1h-5zM43 11h1v1h-1zM46 11h1v1h-1zM52 11h1v1h-1zM54 11h5v1h-5zM43 12h1v1h-1z" fill="#8a8a8a"/></svg>
<div class="a" style="left:466px;top:599px;width:1px;height:13px;background:#8a8a8a"></div>
<svg class="a" style="left:475px;top:597px" width="64" height="20"><path d="M3 5h5v1h-5zM9 5h1v1h-1zM14 5h1v1h-1zM16 5h4v1h-4zM24 5h4v1h-4zM30 5h4v1h-4zM36 5h4v1h-4zM45 5h1v1h-1zM51 5h1v1h-1zM53 5h4v1h-4zM3 6h1v1h-1zM9 6h1v1h-1zM14 6h1v1h-1zM16 6h1v1h-1zM20 6h1v1h-1zM23 6h2v1h-2zM28 6h1v1h-1zM30 6h1v1h-1zM34 6h1v1h-1zM36 6h1v1h-1zM40 6h1v1h-1zM45 6h2v1h-2zM50 6h2v1h-2zM53 6h1v1h-1zM3 7h1v1h-1zM9 7h1v1h-1zM14 7h1v1h-1zM16 7h1v1h-1zM20 7h1v1h-1zM23 7h1v1h-1zM30 7h1v1h-1zM34 7h1v1h-1zM36 7h1v1h-1zM40 7h1v1h-1zM45 7h2v1h-2zM50 7h2v1h-2zM53 7h4v1h-4zM3 8h5v1h-5zM9 8h1v1h-1zM14 8h1v1h-1zM16 8h4v1h-4zM23 8h1v1h-1zM26 8h3v1h-3zM30 8h4v1h-4zM36 8h4v1h-4zM45 8h1v1h-1zM47 8h1v1h-1zM49 8h1v1h-1zM51 8h1v1h-1zM57 8h1v1h-1zM3 9h1v1h-1zM9 9h1v1h-1zM14 9h1v1h-1zM16 9h1v1h-1zM19 9h1v1h-1zM23 9h1v1h-1zM28 9h1v1h-1zM30 9h1v1h-1zM34 9h1v1h-1zM36 9h1v1h-1zM45 9h1v1h-1zM47 9h1v1h-1zM49 9h1v1h-1zM51 9h1v1h-1zM57 9h1v1h-1zM3 10h1v1h-1zM9 10h1v1h-1zM14 10h1v1h-1zM16 10h1v1h-1zM20 10h1v1h-1zM23 10h2v1h-2zM28 10h1v1h-1zM30 10h1v1h-1zM34 10h1v1h-1zM36 10h1v1h-1zM45 10h1v1h-1zM48 10h1v1h-1zM51 10h1v1h-1zM57 10h1v1h-1zM3 11h5v1h-5zM10 11h4v1h-4zM16 11h1v1h-1zM21 11h1v1h-1zM24 11h4v1h-4zM30 11h4v1h-4zM36 11h1v1h-1zM42 11h1v1h-1zM45 11h1v1h-1zM51 11h1v1h-1zM53 11h4v1h-4zM42 12h1v1h-1z" fill="#8a8a8a"/></svg>
<div class="a" style="left:547px;top:599px;width:1px;height:13px;background:#8a8a8a"></div>
<svg class="a" style="left:555px;top:597px" width="63" height="20"><path d="M4 5h4v1h-4zM10 5h4v1h-4zM16 5h4v1h-4zM22 5h1v1h-1zM27 5h1v1h-1zM30 5h3v1h-3zM35 5h5v1h-5zM45 5h1v1h-1zM50 5h1v1h-1zM52 5h3v1h-3zM3 6h2v1h-2zM8 6h1v1h-1zM10 6h1v1h-1zM14 6h1v1h-1zM16 6h1v1h-1zM20 6h1v1h-1zM22 6h1v1h-1zM27 6h1v1h-1zM29 6h1v1h-1zM33 6h1v1h-1zM35 6h1v1h-1zM39 6h2v1h-2zM45 6h1v1h-1zM50 6h1v1h-1zM54 6h1v1h-1zM3 7h1v1h-1zM10 7h1v1h-1zM14 7h1v1h-1zM16 7h1v1h-1zM20 7h1v1h-1zM22 7h1v1h-1zM27 7h1v1h-1zM29 7h1v1h-1zM35 7h1v1h-1zM40 7h1v1h-1zM45 7h1v1h-1zM50 7h1v1h-1zM54 7h1v1h-1zM3 8h1v1h-1zM6 8h3v1h-3zM10 8h4v1h-4zM16 8h4v1h-4zM22 8h1v1h-1zM27 8h1v1h-1zM30 8h3v1h-3zM35 8h1v1h-1zM40 8h1v1h-1zM45 8h6v1h-6zM54 8h1v1h-1zM3 9h1v1h-1zM8 9h1v1h-1zM10 9h1v1h-1zM14 9h1v1h-1zM16 9h1v1h-1zM22 9h1v1h-1zM27 9h1v1h-1zM33 9h1v1h-1zM35 9h1v1h-1zM40 9h1v1h-1zM45 9h1v1h-1zM50 9h1v1h-1zM54 9h1v1h-1zM3 10h2v1h-2zM8 10h1v1h-1zM10 10h1v1h-1zM14 10h1v1h-1zM16 10h1v1h-1zM22 10h1v1h-1zM27 10h1v1h-1zM29 10h1v1h-1zM33 10h1v1h-1zM35 10h1v1h-1zM39 10h2v1h-2zM45 10h1v1h-1zM50 10h1v1h-1zM54 10h1v1h-1zM4 11h4v1h-4zM10 11h4v1h-4zM16 11h1v1h-1zM23 11h4v1h-4zM30 11h3v1h-3zM35 11h5v1h-5zM42 11h1v1h-1zM45 11h1v1h-1zM50 11h1v1h-1zM52 11h5v1h-5zM42 12h1v1h-1z" fill="#8a8a8a"/></svg>
<div class="a" style="left:626px;top:599px;width:1px;height:13px;background:#8a8a8a"></div>
<svg class="a" style="left:634px;top:597px" width="63" height="20"><path d="M3 5h5v1h-5zM9 5h1v1h-1zM14 5h1v1h-1zM16 5h4v1h-4zM23 5h1v1h-1zM28 5h4v1h-4zM33 5h1v1h-1zM39 5h1v1h-1zM44 5h1v1h-1zM50 5h1v1h-1zM52 5h3v1h-3zM3 6h1v1h-1zM9 6h1v1h-1zM14 6h1v1h-1zM16 6h1v1h-1zM20 6h1v1h-1zM23 6h1v1h-1zM28 6h1v1h-1zM32 6h1v1h-1zM34 6h1v1h-1zM38 6h1v1h-1zM44 6h2v1h-2zM49 6h2v1h-2zM54 6h1v1h-1zM3 7h1v1h-1zM9 7h1v1h-1zM14 7h1v1h-1zM16 7h1v1h-1zM20 7h1v1h-1zM23 7h1v1h-1zM28 7h1v1h-1zM32 7h1v1h-1zM35 7h1v1h-1zM37 7h1v1h-1zM44 7h2v1h-2zM49 7h2v1h-2zM54 7h1v1h-1zM3 8h5v1h-5zM9 8h1v1h-1zM14 8h1v1h-1zM16 8h4v1h-4zM23 8h1v1h-1zM28 8h4v1h-4zM36 8h1v1h-1zM44 8h1v1h-1zM46 8h1v1h-1zM48 8h1v1h-1zM50 8h1v1h-1zM54 8h1v1h-1zM3 9h1v1h-1zM9 9h1v1h-1zM14 9h1v1h-1zM16 9h1v1h-1zM19 9h1v1h-1zM23 9h1v1h-1zM28 9h1v1h-1zM36 9h1v1h-1zM44 9h1v1h-1zM46 9h1v1h-1zM48 9h1v1h-1zM50 9h1v1h-1zM54 9h1v1h-1zM3 10h1v1h-1zM9 10h1v1h-1zM14 10h1v1h-1zM16 10h1v1h-1zM20 10h1v1h-1zM23 10h1v1h-1zM28 10h1v1h-1zM36 10h1v1h-1zM44 10h1v1h-1zM47 10h1v1h-1zM50 10h1v1h-1zM54 10h1v1h-1zM3 11h5v1h-5zM10 11h4v1h-4zM16 11h1v1h-1zM21 11h1v1h-1zM23 11h1v1h-1zM28 11h1v1h-1zM36 11h1v1h-1zM41 11h1v1h-1zM44 11h1v1h-1zM50 11h1v1h-1zM52 11h5v1h-5zM23 12h1v1h-1zM41 12h1v1h-1zM21 13h2v1h-2z" fill="#8a8a8a"/></svg>
<div class="a" style="left:704px;top:599px;width:1px;height:13px;background:#8a8a8a"></div>
<svg class="a" style="left:712px;top:597px" width="63" height="20"><path d="M4 5h4v1h-4zM10 5h4v1h-4zM16 5h4v1h-4zM22 5h1v1h-1zM27 5h1v1h-1zM30 5h3v1h-3zM35 5h5v1h-5zM45 5h1v1h-1zM50 5h1v1h-1zM55 5h1v1h-1zM3 6h2v1h-2zM8 6h1v1h-1zM10 6h1v1h-1zM14 6h1v1h-1zM16 6h1v1h-1zM20 6h1v1h-1zM22 6h1v1h-1zM27 6h1v1h-1zM29 6h1v1h-1zM33 6h1v1h-1zM35 6h1v1h-1zM39 6h2v1h-2zM45 6h1v1h-1zM50 6h1v1h-1zM54 6h2v1h-2zM3 7h1v1h-1zM10 7h1v1h-1zM14 7h1v1h-1zM16 7h1v1h-1zM20 7h1v1h-1zM22 7h1v1h-1zM27 7h1v1h-1zM29 7h1v1h-1zM35 7h1v1h-1zM40 7h1v1h-1zM45 7h1v1h-1zM50 7h1v1h-1zM53 7h1v1h-1zM55 7h1v1h-1zM3 8h1v1h-1zM6 8h3v1h-3zM10 8h4v1h-4zM16 8h4v1h-4zM22 8h1v1h-1zM27 8h1v1h-1zM30 8h3v1h-3zM35 8h1v1h-1zM40 8h1v1h-1zM45 8h6v1h-6zM52 8h1v1h-1zM55 8h1v1h-1zM3 9h1v1h-1zM8 9h1v1h-1zM10 9h1v1h-1zM14 9h1v1h-1zM16 9h1v1h-1zM22 9h1v1h-1zM27 9h1v1h-1zM33 9h1v1h-1zM35 9h1v1h-1zM40 9h1v1h-1zM45 9h1v1h-1zM50 9h1v1h-1zM52 9h5v1h-5zM3 10h2v1h-2zM8 10h1v1h-1zM10 10h1v1h-1zM14 10h1v1h-1zM16 10h1v1h-1zM22 10h1v1h-1zM27 10h1v1h-1zM29 10h1v1h-1zM33 10h1v1h-1zM35 10h1v1h-1zM39 10h2v1h-2zM45 10h1v1h-1zM50 10h1v1h-1zM55 10h1v1h-1zM4 11h4v1h-4zM10 11h4v1h-4zM16 11h1v1h-1zM23 11h4v1h-4zM30 11h3v1h-3zM35 11h5v1h-5zM42 11h1v1h-1zM45 11h1v1h-1zM50 11h1v1h-1zM55 11h1v1h-1zM42 12h1v1h-1z" fill="#8a8a8a"/></svg>
<div class="a" style="left:781px;top:599px;width:1px;height:13px;background:#8a8a8a"></div>
<svg class="a" style="left:790px;top:597px" width="70" height="20"><path d="M4 5h4v1h-4zM10 5h4v1h-4zM16 5h4v1h-4zM22 5h1v1h-1zM27 5h1v1h-1zM30 5h3v1h-3zM35 5h5v1h-5zM45 5h1v1h-1zM51 5h1v1h-1zM54 5h3v1h-3zM60 5h3v1h-3zM3 6h2v1h-2zM8 6h1v1h-1zM10 6h1v1h-1zM14 6h1v1h-1zM16 6h1v1h-1zM20 6h1v1h-1zM22 6h1v1h-1zM27 6h1v1h-1zM29 6h1v1h-1zM33 6h1v1h-1zM35 6h1v1h-1zM39 6h2v1h-2zM45 6h2v1h-2zM50 6h2v1h-2zM53 6h1v1h-1zM57 6h1v1h-1zM59 6h1v1h-1zM63 6h1v1h-1zM3 7h1v1h-1zM10 7h1v1h-1zM14 7h1v1h-1zM16 7h1v1h-1zM20 7h1v1h-1zM22 7h1v1h-1zM27 7h1v1h-1zM29 7h1v1h-1zM35 7h1v1h-1zM40 7h1v1h-1zM45 7h2v1h-2zM50 7h2v1h-2zM57 7h1v1h-1zM59 7h1v1h-1zM63 7h1v1h-1zM3 8h1v1h-1zM6 8h3v1h-3zM10 8h4v1h-4zM16 8h4v1h-4zM22 8h1v1h-1zM27 8h1v1h-1zM30 8h3v1h-3zM35 8h1v1h-1zM40 8h1v1h-1zM45 8h1v1h-1zM47 8h1v1h-1zM49 8h1v1h-1zM51 8h1v1h-1zM54 8h3v1h-3zM59 8h1v1h-1zM63 8h1v1h-1zM3 9h1v1h-1zM8 9h1v1h-1zM10 9h1v1h-1zM14 9h1v1h-1zM16 9h1v1h-1zM22 9h1v1h-1zM27 9h1v1h-1zM33 9h1v1h-1zM35 9h1v1h-1zM40 9h1v1h-1zM45 9h1v1h-1zM47 9h1v1h-1zM49 9h1v1h-1zM51 9h1v1h-1zM57 9h1v1h-1zM59 9h1v1h-1zM63 9h1v1h-1zM3 10h2v1h-2zM8 10h1v1h-1zM10 10h1v1h-1zM14 10h1v1h-1zM16 10h1v1h-1zM22 10h1v1h-1zM27 10h1v1h-1zM29 10h1v1h-1zM33 10h1v1h-1zM35 10h1v1h-1zM39 10h2v1h-2zM45 10h1v1h-1zM48 10h1v1h-1zM51 10h1v1h-1zM53 10h1v1h-1zM57 10h1v1h-1zM59 10h1v1h-1zM63 10h1v1h-1zM4 11h4v1h-4zM10 11h4v1h-4zM16 11h1v1h-1zM23 11h4v1h-4zM30 11h3v1h-3zM35 11h5v1h-5zM42 11h1v1h-1zM45 11h1v1h-1zM51 11h1v1h-1zM54 11h3v1h-3zM60 11h3v1h-3zM42 12h1v1h-1z" fill="#8a8a8a"/></svg>
<div class="a" style="left:866px;top:599px;width:1px;height:13px;background:#8a8a8a"></div>
<svg class="a" style="left:876px;top:597px" width="63" height="20"><path d="M4 5h4v1h-4zM10 5h4v1h-4zM16 5h4v1h-4zM22 5h1v1h-1zM27 5h1v1h-1zM30 5h3v1h-3zM35 5h5v1h-5zM45 5h1v1h-1zM50 5h1v1h-1zM55 5h1v1h-1zM3 6h2v1h-2zM8 6h1v1h-1zM10 6h1v1h-1zM14 6h1v1h-1zM16 6h1v1h-1zM20 6h1v1h-1zM22 6h1v1h-1zM27 6h1v1h-1zM29 6h1v1h-1zM33 6h1v1h-1zM35 6h1v1h-1zM39 6h2v1h-2zM45 6h1v1h-1zM50 6h1v1h-1zM54 6h2v1h-2zM3 7h1v1h-1zM10 7h1v1h-1zM14 7h1v1h-1zM16 7h1v1h-1zM20 7h1v1h-1zM22 7h1v1h-1zM27 7h1v1h-1zM29 7h1v1h-1zM35 7h1v1h-1zM40 7h1v1h-1zM45 7h1v1h-1zM50 7h1v1h-1zM53 7h1v1h-1zM55 7h1v1h-1zM3 8h1v1h-1zM6 8h3v1h-3zM10 8h4v1h-4zM16 8h4v1h-4zM22 8h1v1h-1zM27 8h1v1h-1zM30 8h3v1h-3zM35 8h1v1h-1zM40 8h1v1h-1zM45 8h6v1h-6zM52 8h1v1h-1zM55 8h1v1h-1zM3 9h1v1h-1zM8 9h1v1h-1zM10 9h1v1h-1zM14 9h1v1h-1zM16 9h1v1h-1zM22 9h1v1h-1zM27 9h1v1h-1zM33 9h1v1h-1zM35 9h1v1h-1zM40 9h1v1h-1zM45 9h1v1h-1zM50 9h1v1h-1zM52 9h5v1h-5zM3 10h2v1h-2zM8 10h1v1h-1zM10 10h1v1h-1zM14 10h1v1h-1zM16 10h1v1h-1zM22 10h1v1h-1zM27 10h1v1h-1zM29 10h1v1h-1zM33 10h1v1h-1zM35 10h1v1h-1zM39 10h2v1h-2zM45 10h1v1h-1zM50 10h1v1h-1zM55 10h1v1h-1zM4 11h4v1h-4zM10 11h4v1h-4zM16 11h1v1h-1zM23 11h4v1h-4zM30 11h3v1h-3zM35 11h5v1h-5zM42 11h1v1h-1zM45 11h1v1h-1zM50 11h1v1h-1zM55 11h1v1h-1zM42 12h1v1h-1z" fill="#8a8a8a"/></svg>
<div class="a" style="left:946px;top:599px;width:1px;height:13px;background:#8a8a8a"></div>
<svg class="a" style="left:956px;top:597px" width="40" height="20"><path d="M4 5h4v1h-4zM10 5h4v1h-4zM16 5h4v1h-4zM22 5h1v1h-1zM27 5h1v1h-1zM30 5h3v1h-3zM3 6h2v1h-2zM8 6h1v1h-1zM10 6h1v1h-1zM14 6h1v1h-1zM16 6h1v1h-1zM20 6h1v1h-1zM22 6h1v1h-1zM27 6h1v1h-1zM29 6h1v1h-1zM33 6h1v1h-1zM3 7h1v1h-1zM10 7h1v1h-1zM14 7h1v1h-1zM16 7h1v1h-1zM20 7h1v1h-1zM22 7h1v1h-1zM27 7h1v1h-1zM29 7h1v1h-1zM3 8h1v1h-1zM6 8h3v1h-3zM10 8h4v1h-4zM16 8h4v1h-4zM22 8h1v1h-1zM27 8h1v1h-1zM30 8h3v1h-3zM3 9h1v1h-1zM8 9h1v1h-1zM10 9h1v1h-1zM14 9h1v1h-1zM16 9h1v1h-1zM22 9h1v1h-1zM27 9h1v1h-1zM33 9h1v1h-1zM3 10h2v1h-2zM8 10h1v1h-1zM10 10h1v1h-1zM14 10h1v1h-1zM16 10h1v1h-1zM22 10h1v1h-1zM27 10h1v1h-1zM29 10h1v1h-1zM33 10h1v1h-1zM4 11h4v1h-4zM10 11h4v1h-4zM16 11h1v1h-1zM23 11h4v1h-4zM30 11h3v1h-3z" fill="#8a8a8a"/></svg>
<div class="a" style="left:990px;top:597px;width:32px;height:18px;background:#eae9e4"></div>
<svg class="a" style="left:992px;top:602px" width="30" height="9"><path d="M6 1V8L2 4.5Z" fill="#9a9a9a"/><path d="M20 1V8L24 4.5Z" fill="#000"/></svg>
<div class="a" style="left:0px;top:616px;width:1024px;height:100px;background:#eae9e4"></div>
<div class="a" style="left:0px;top:616px;width:1024px;height:1px;background:#fbfbf8"></div>
<svg class="a" style="left:3px;top:622px" width="9" height="8"><path d="M1 1L8 7M8 1L1 7" stroke="#000" stroke-width="1.8"/></svg>
<div class="a" style="left:1px;top:634px;width:13px;height:79px;background:linear-gradient(#5f95de,#74a6e5)"></div>
<div class="a" style="left:0;top:712px;width:1px;height:1px;transform:rotate(-90deg);transform-origin:0 0"><svg class="a" style="left:1px;top:-2px" width="30" height="20"><path d="M2 4h1v1h-1zM6 4h1v1h-1zM12 4h1v1h-1zM19 4h1v1h-1zM2 5h1v1h-1zM6 5h4v1h-4zM13 5h1v1h-1zM17 5h1v1h-1zM19 5h1v1h-1zM22 5h1v1h-1zM1 6h1v1h-1zM3 6h1v1h-1zM5 6h1v1h-1zM9 6h1v1h-1zM12 6h4v1h-4zM17 6h6v1h-6zM0 7h3v1h-3zM4 7h1v1h-1zM6 7h1v1h-1zM8 7h1v1h-1zM2 8h1v1h-1zM7 8h1v1h-1zM12 8h1v1h-1zM14 8h1v1h-1zM16 8h7v1h-7zM1 9h1v1h-1zM6 9h1v1h-1zM8 9h1v1h-1zM12 9h1v1h-1zM14 9h1v1h-1zM19 9h1v1h-1zM0 10h3v1h-3zM4 10h2v1h-2zM9 10h2v1h-2zM12 10h1v1h-1zM14 10h1v1h-1zM16 10h7v1h-7zM7 11h1v1h-1zM13 11h1v1h-1zM16 11h1v1h-1zM18 11h1v1h-1zM20 11h1v1h-1zM22 11h1v1h-1zM2 12h2v1h-2zM8 12h2v1h-2zM13 12h2v1h-2zM16 12h1v1h-1zM18 12h1v1h-1zM20 12h1v1h-1zM22 12h1v1h-1zM0 13h2v1h-2zM6 13h2v1h-2zM12 13h1v1h-1zM16 13h1v1h-1zM18 13h1v1h-1zM20 13h1v1h-1zM22 13h1v1h-1zM8 14h2v1h-2zM16 14h1v1h-1zM21 14h2v1h-2z" fill="#fff"/></svg></div>
<div class="a" style="left:15px;top:620px;width:1009px;height:74px;border:1px solid #a7a59d;border-right:none;border-bottom:none;background:#fbfcfa"></div>
<div class="a" style="left:16px;top:621px;width:1008px;height:16px;background:#eae9e4"></div>
<div class="a" style="left:16px;top:637px;width:1008px;height:1px;background:#dedbd0"></div>
<div class="a" style="left:16px;top:638px;width:1008px;height:2px;background:#cbc7b9"></div>
<div class="a" style="left:115px;top:624px;width:1px;height:12px;background:#cdcac0"></div>
<div class="a" style="left:115px;top:641px;width:1px;height:20px;background:#dddbd4"></div>
<div class="a" style="left:284px;top:624px;width:1px;height:12px;background:#cdcac0"></div>
<div class="a" style="left:284px;top:641px;width:1px;height:20px;background:#dddbd4"></div>
<div class="a" style="left:353px;top:624px;width:1px;height:12px;background:#cdcac0"></div>
<div class="a" style="left:353px;top:641px;width:1px;height:20px;background:#dddbd4"></div>
<div class="a" style="left:407px;top:624px;width:1px;height:12px;background:#cdcac0"></div>
<div class="a" style="left:407px;top:641px;width:1px;height:20px;background:#dddbd4"></div>
<div class="a" style="left:475px;top:624px;width:1px;height:12px;background:#cdcac0"></div>
<div class="a" style="left:475px;top:641px;width:1px;height:20px;background:#dddbd4"></div>
<div class="a" style="left:553px;top:624px;width:1px;height:12px;background:#cdcac0"></div>
<div class="a" style="left:553px;top:641px;width:1px;height:20px;background:#dddbd4"></div>
<div class="a" style="left:630px;top:624px;width:1px;height:12px;background:#cdcac0"></div>
<div class="a" style="left:630px;top:641px;width:1px;height:20px;background:#dddbd4"></div>
<div class="a" style="left:706px;top:624px;width:1px;height:12px;background:#cdcac0"></div>
<div class="a" style="left:706px;top:641px;width:1px;height:20px;background:#dddbd4"></div>
<div class="a" style="left:784px;top:624px;width:1px;height:12px;background:#cdcac0"></div>
<div class="a" style="left:784px;top:641px;width:1px;height:20px;background:#dddbd4"></div>
<div class="a" style="left:860px;top:624px;width:1px;height:12px;background:#cdcac0"></div>
<div class="a" style="left:860px;top:641px;width:1px;height:20px;background:#dddbd4"></div>
<div class="a" style="left:937px;top:624px;width:1px;height:12px;background:#cdcac0"></div>
<div class="a" style="left:937px;top:641px;width:1px;height:20px;background:#dddbd4"></div>
<div class="a" style="left:1019px;top:624px;width:1px;height:12px;background:#cdcac0"></div>
<div class="a" style="left:1019px;top:641px;width:1px;height:20px;background:#dddbd4"></div>
<div class="a" style="left:16px;top:660px;width:1008px;height:1px;background:#e6e4de"></div>
<svg class="a" style="left:25px;top:622px" width="39" height="20"><path d="M5 4h1v1h-1zM14 4h1v1h-1zM18 4h1v1h-1zM24 4h7v1h-7zM1 5h10v1h-10zM15 5h1v1h-1zM17 5h1v1h-1zM24 5h1v1h-1zM30 5h1v1h-1zM1 6h1v1h-1zM10 6h1v1h-1zM12 6h9v1h-9zM24 6h7v1h-7zM0 7h1v1h-1zM9 7h1v1h-1zM12 7h1v1h-1zM16 7h1v1h-1zM20 7h1v1h-1zM2 8h8v1h-8zM12 8h9v1h-9zM22 8h11v1h-11zM5 9h1v1h-1zM12 9h1v1h-1zM16 9h1v1h-1zM20 9h1v1h-1zM26 9h1v1h-1zM2 10h1v1h-1zM5 10h1v1h-1zM12 10h9v1h-9zM25 10h6v1h-6zM2 11h1v1h-1zM5 11h4v1h-4zM16 11h1v1h-1zM30 11h1v1h-1zM2 12h1v1h-1zM5 12h1v1h-1zM11 12h11v1h-11zM30 12h1v1h-1zM1 13h1v1h-1zM3 13h1v1h-1zM5 13h1v1h-1zM16 13h1v1h-1zM27 13h1v1h-1zM30 13h1v1h-1zM0 14h1v1h-1zM4 14h7v1h-7zM16 14h1v1h-1zM28 14h2v1h-2z" fill="#000"/></svg>
<svg class="a" style="left:258px;top:622px" width="28" height="20"><path d="M8 4h1v1h-1zM13 4h1v1h-1zM16 4h6v1h-6zM0 5h4v1h-4zM8 5h1v1h-1zM14 5h1v1h-1zM21 5h1v1h-1zM0 6h1v1h-1zM3 6h8v1h-8zM12 6h1v1h-1zM21 6h1v1h-1zM0 7h1v1h-1zM3 7h1v1h-1zM8 7h1v1h-1zM12 7h1v1h-1zM15 7h4v1h-4zM21 7h1v1h-1zM0 8h1v1h-1zM3 8h1v1h-1zM5 8h1v1h-1zM8 8h1v1h-1zM12 8h1v1h-1zM15 8h1v1h-1zM18 8h1v1h-1zM21 8h1v1h-1zM0 9h4v1h-4zM6 9h1v1h-1zM8 9h1v1h-1zM12 9h1v1h-1zM15 9h4v1h-4zM21 9h1v1h-1zM0 10h1v1h-1zM3 10h1v1h-1zM6 10h1v1h-1zM8 10h1v1h-1zM12 10h1v1h-1zM15 10h1v1h-1zM18 10h1v1h-1zM21 10h1v1h-1zM0 11h1v1h-1zM3 11h1v1h-1zM8 11h1v1h-1zM12 11h1v1h-1zM15 11h1v1h-1zM18 11h1v1h-1zM21 11h1v1h-1zM0 12h1v1h-1zM3 12h1v1h-1zM8 12h1v1h-1zM12 12h1v1h-1zM15 12h4v1h-4zM21 12h1v1h-1zM0 13h4v1h-4zM8 13h1v1h-1zM12 13h1v1h-1zM21 13h1v1h-1zM6 14h3v1h-3zM12 14h1v1h-1zM19 14h3v1h-3z" fill="#000"/></svg>
<svg class="a" style="left:327px;top:622px" width="28" height="20"><path d="M2 4h1v1h-1zM5 4h1v1h-1zM8 4h1v1h-1zM12 4h6v1h-6zM20 4h1v1h-1zM3 5h1v1h-1zM5 5h1v1h-1zM7 5h1v1h-1zM13 5h1v1h-1zM15 5h1v1h-1zM18 5h1v1h-1zM20 5h1v1h-1zM0 6h11v1h-11zM13 6h1v1h-1zM15 6h1v1h-1zM18 6h1v1h-1zM20 6h1v1h-1zM3 7h1v1h-1zM5 7h1v1h-1zM7 7h1v1h-1zM11 7h8v1h-8zM20 7h1v1h-1zM2 8h1v1h-1zM5 8h1v1h-1zM8 8h1v1h-1zM13 8h1v1h-1zM15 8h1v1h-1zM18 8h1v1h-1zM20 8h1v1h-1zM1 9h1v1h-1zM9 9h1v1h-1zM13 9h1v1h-1zM15 9h1v1h-1zM20 9h1v1h-1zM5 10h1v1h-1zM12 10h1v1h-1zM15 10h2v1h-2zM19 10h2v1h-2zM0 11h11v1h-11zM16 11h1v1h-1zM4 12h1v1h-1zM6 12h1v1h-1zM13 12h7v1h-7zM3 13h1v1h-1zM7 13h1v1h-1zM16 13h1v1h-1zM0 14h3v1h-3zM8 14h14v1h-14z" fill="#000"/></svg>
<svg class="a" style="left:382px;top:622px" width="28" height="20"><path d="M6 4h4v1h-4zM11 4h1v1h-1zM14 4h1v1h-1zM16 4h1v1h-1zM18 4h1v1h-1zM1 5h5v1h-5zM12 5h1v1h-1zM14 5h2v1h-2zM18 5h1v1h-1zM5 6h1v1h-1zM11 6h6v1h-6zM18 6h4v1h-4zM1 7h9v1h-9zM13 7h2v1h-2zM17 7h2v1h-2zM20 7h1v1h-1zM5 8h1v1h-1zM12 8h1v1h-1zM14 8h2v1h-2zM18 8h1v1h-1zM20 8h1v1h-1zM5 9h1v1h-1zM11 9h1v1h-1zM14 9h1v1h-1zM16 9h1v1h-1zM18 9h1v1h-1zM20 9h1v1h-1zM0 10h17v1h-17zM18 10h1v1h-1zM20 10h1v1h-1zM5 11h1v1h-1zM13 11h1v1h-1zM15 11h1v1h-1zM18 11h1v1h-1zM20 11h1v1h-1zM5 12h1v1h-1zM12 12h2v1h-2zM15 12h1v1h-1zM19 12h1v1h-1zM5 13h1v1h-1zM14 13h1v1h-1zM18 13h1v1h-1zM20 13h1v1h-1zM4 14h2v1h-2zM11 14h3v1h-3zM15 14h3v1h-3zM21 14h1v1h-1z" fill="#000"/></svg>
<svg class="a" style="left:451px;top:622px" width="28" height="20"><path d="M5 4h1v1h-1zM14 4h6v1h-6zM0 5h11v1h-11zM14 5h1v1h-1zM19 5h1v1h-1zM3 6h1v1h-1zM7 6h1v1h-1zM14 6h1v1h-1zM19 6h1v1h-1zM1 7h9v1h-9zM14 7h6v1h-6zM1 8h1v1h-1zM4 8h1v1h-1zM6 8h1v1h-1zM9 8h1v1h-1zM1 9h1v1h-1zM3 9h1v1h-1zM7 9h1v1h-1zM9 9h1v1h-1zM12 9h4v1h-4zM18 9h4v1h-4zM1 10h9v1h-9zM12 10h1v1h-1zM15 10h1v1h-1zM18 10h1v1h-1zM21 10h1v1h-1zM1 11h1v1h-1zM3 11h1v1h-1zM7 11h1v1h-1zM9 11h1v1h-1zM12 11h1v1h-1zM15 11h1v1h-1zM18 11h1v1h-1zM21 11h1v1h-1zM1 12h1v1h-1zM3 12h5v1h-5zM9 12h1v1h-1zM12 12h1v1h-1zM15 12h1v1h-1zM18 12h1v1h-1zM21 12h1v1h-1zM1 13h1v1h-1zM3 13h1v1h-1zM7 13h1v1h-1zM9 13h1v1h-1zM12 13h4v1h-4zM18 13h4v1h-4zM1 14h1v1h-1zM8 14h2v1h-2zM12 14h1v1h-1zM15 14h1v1h-1zM18 14h1v1h-1zM21 14h1v1h-1z" fill="#000"/></svg>
<svg class="a" style="left:529px;top:622px" width="28" height="20"><path d="M3 4h1v1h-1zM6 4h1v1h-1zM14 4h1v1h-1zM17 4h1v1h-1zM3 5h1v1h-1zM6 5h2v1h-2zM14 5h1v1h-1zM18 5h1v1h-1zM2 6h1v1h-1zM5 6h1v1h-1zM8 6h1v1h-1zM13 6h1v1h-1zM2 7h3v1h-3zM9 7h2v1h-2zM13 7h1v1h-1zM15 7h7v1h-7zM1 8h2v1h-2zM5 8h1v1h-1zM8 8h1v1h-1zM12 8h2v1h-2zM0 9h1v1h-1zM2 9h1v1h-1zM5 9h1v1h-1zM8 9h1v1h-1zM11 9h1v1h-1zM13 9h1v1h-1zM16 9h1v1h-1zM20 9h1v1h-1zM2 10h1v1h-1zM5 10h1v1h-1zM8 10h1v1h-1zM13 10h1v1h-1zM17 10h1v1h-1zM20 10h1v1h-1zM2 11h1v1h-1zM5 11h1v1h-1zM8 11h1v1h-1zM13 11h1v1h-1zM17 11h1v1h-1zM19 11h1v1h-1zM2 12h1v1h-1zM5 12h1v1h-1zM8 12h1v1h-1zM13 12h1v1h-1zM19 12h1v1h-1zM2 13h1v1h-1zM4 13h1v1h-1zM8 13h1v1h-1zM13 13h1v1h-1zM18 13h1v1h-1zM2 14h2v1h-2zM8 14h1v1h-1zM13 14h1v1h-1zM15 14h7v1h-7z" fill="#000"/></svg>
<svg class="a" style="left:605px;top:622px" width="28" height="20"><path d="M6 4h1v1h-1zM13 4h1v1h-1zM17 4h4v1h-4zM6 5h1v1h-1zM13 5h1v1h-1zM17 5h1v1h-1zM20 5h1v1h-1zM6 6h1v1h-1zM11 6h5v1h-5zM17 6h4v1h-4zM3 7h1v1h-1zM6 7h1v1h-1zM13 7h1v1h-1zM3 8h1v1h-1zM6 8h4v1h-4zM13 8h1v1h-1zM15 8h7v1h-7zM3 9h1v1h-1zM6 9h1v1h-1zM13 9h2v1h-2zM16 9h1v1h-1zM21 9h1v1h-1zM3 10h1v1h-1zM6 10h1v1h-1zM12 10h2v1h-2zM16 10h1v1h-1zM18 10h1v1h-1zM21 10h1v1h-1zM3 11h1v1h-1zM6 11h1v1h-1zM11 11h1v1h-1zM13 11h1v1h-1zM16 11h1v1h-1zM18 11h1v1h-1zM21 11h1v1h-1zM3 12h1v1h-1zM6 12h1v1h-1zM13 12h1v1h-1zM16 12h1v1h-1zM18 12h1v1h-1zM21 12h1v1h-1zM3 13h1v1h-1zM6 13h1v1h-1zM13 13h1v1h-1zM17 13h1v1h-1zM19 13h1v1h-1zM1 14h13v1h-13zM15 14h2v1h-2zM20 14h2v1h-2z" fill="#000"/></svg>
<svg class="a" style="left:681px;top:622px" width="28" height="20"><path d="M3 4h1v1h-1zM7 4h1v1h-1zM15 4h2v1h-2zM21 4h1v1h-1zM0 5h11v1h-11zM12 5h3v1h-3zM19 5h1v1h-1zM21 5h1v1h-1zM3 6h1v1h-1zM7 6h1v1h-1zM14 6h1v1h-1zM19 6h1v1h-1zM21 6h1v1h-1zM1 7h1v1h-1zM3 7h1v1h-1zM7 7h2v1h-2zM11 7h7v1h-7zM19 7h1v1h-1zM21 7h1v1h-1zM2 8h1v1h-1zM7 8h1v1h-1zM9 8h1v1h-1zM14 8h1v1h-1zM19 8h1v1h-1zM21 8h1v1h-1zM1 9h1v1h-1zM3 9h1v1h-1zM5 9h6v1h-6zM13 9h3v1h-3zM19 9h1v1h-1zM21 9h1v1h-1zM0 10h1v1h-1zM3 10h1v1h-1zM7 10h1v1h-1zM13 10h2v1h-2zM16 10h1v1h-1zM19 10h1v1h-1zM21 10h1v1h-1zM2 11h2v1h-2zM7 11h1v1h-1zM12 11h1v1h-1zM14 11h1v1h-1zM17 11h1v1h-1zM19 11h1v1h-1zM21 11h1v1h-1zM1 12h1v1h-1zM3 12h1v1h-1zM6 12h1v1h-1zM8 12h1v1h-1zM11 12h1v1h-1zM14 12h1v1h-1zM21 12h1v1h-1zM3 13h1v1h-1zM5 13h1v1h-1zM9 13h1v1h-1zM14 13h1v1h-1zM21 13h1v1h-1zM1 14h2v1h-2zM4 14h1v1h-1zM10 14h1v1h-1zM14 14h1v1h-1zM19 14h3v1h-3z" fill="#000"/></svg>
<svg class="a" style="left:758px;top:622px" width="28" height="20"><path d="M3 4h1v1h-1zM6 4h1v1h-1zM14 4h1v1h-1zM17 4h1v1h-1zM3 5h1v1h-1zM6 5h2v1h-2zM14 5h1v1h-1zM18 5h1v1h-1zM2 6h1v1h-1zM5 6h1v1h-1zM8 6h1v1h-1zM13 6h1v1h-1zM2 7h3v1h-3zM9 7h2v1h-2zM13 7h1v1h-1zM15 7h7v1h-7zM1 8h2v1h-2zM5 8h1v1h-1zM8 8h1v1h-1zM12 8h2v1h-2zM0 9h1v1h-1zM2 9h1v1h-1zM5 9h1v1h-1zM8 9h1v1h-1zM11 9h1v1h-1zM13 9h1v1h-1zM16 9h1v1h-1zM20 9h1v1h-1zM2 10h1v1h-1zM5 10h1v1h-1zM8 10h1v1h-1zM13 10h1v1h-1zM17 10h1v1h-1zM20 10h1v1h-1zM2 11h1v1h-1zM5 11h1v1h-1zM8 11h1v1h-1zM13 11h1v1h-1zM17 11h1v1h-1zM19 11h1v1h-1zM2 12h1v1h-1zM5 12h1v1h-1zM8 12h1v1h-1zM13 12h1v1h-1zM19 12h1v1h-1zM2 13h1v1h-1zM4 13h1v1h-1zM8 13h1v1h-1zM13 13h1v1h-1zM18 13h1v1h-1zM2 14h2v1h-2zM8 14h1v1h-1zM13 14h1v1h-1zM15 14h7v1h-7z" fill="#000"/></svg>
<svg class="a" style="left:836px;top:622px" width="28" height="20"><path d="M2 4h1v1h-1zM4 4h7v1h-7zM16 4h1v1h-1zM2 5h1v1h-1zM4 5h1v1h-1zM7 5h1v1h-1zM10 5h1v1h-1zM15 5h1v1h-1zM17 5h1v1h-1zM2 6h1v1h-1zM4 6h1v1h-1zM7 6h1v1h-1zM10 6h1v1h-1zM14 6h1v1h-1zM18 6h1v1h-1zM2 7h1v1h-1zM4 7h7v1h-7zM13 7h1v1h-1zM19 7h1v1h-1zM1 8h2v1h-2zM4 8h1v1h-1zM7 8h1v1h-1zM10 8h3v1h-3zM14 8h5v1h-5zM20 8h2v1h-2zM0 9h1v1h-1zM2 9h1v1h-1zM4 9h1v1h-1zM7 9h1v1h-1zM10 9h1v1h-1zM16 9h1v1h-1zM2 10h1v1h-1zM4 10h7v1h-7zM12 10h9v1h-9zM2 11h1v1h-1zM4 11h1v1h-1zM7 11h1v1h-1zM10 11h1v1h-1zM16 11h1v1h-1zM2 12h1v1h-1zM4 12h1v1h-1zM7 12h1v1h-1zM10 12h1v1h-1zM13 12h1v1h-1zM16 12h1v1h-1zM19 12h1v1h-1zM2 13h1v1h-1zM4 13h1v1h-1zM7 13h1v1h-1zM10 13h1v1h-1zM14 13h1v1h-1zM16 13h1v1h-1zM18 13h1v1h-1zM2 14h2v1h-2zM9 14h13v1h-13z" fill="#000"/></svg>
<svg class="a" style="left:912px;top:622px" width="28" height="20"><path d="M4 4h2v1h-2zM10 4h1v1h-1zM15 4h1v1h-1zM1 5h3v1h-3zM8 5h1v1h-1zM10 5h1v1h-1zM13 5h7v1h-7zM3 6h1v1h-1zM8 6h1v1h-1zM10 6h1v1h-1zM13 6h1v1h-1zM19 6h1v1h-1zM0 7h7v1h-7zM8 7h1v1h-1zM10 7h1v1h-1zM13 7h7v1h-7zM3 8h1v1h-1zM8 8h1v1h-1zM10 8h1v1h-1zM13 8h1v1h-1zM19 8h1v1h-1zM2 9h3v1h-3zM8 9h1v1h-1zM10 9h1v1h-1zM13 9h7v1h-7zM2 10h2v1h-2zM5 10h1v1h-1zM8 10h1v1h-1zM10 10h1v1h-1zM13 10h1v1h-1zM19 10h1v1h-1zM1 11h1v1h-1zM3 11h1v1h-1zM6 11h1v1h-1zM8 11h1v1h-1zM10 11h1v1h-1zM13 11h7v1h-7zM0 12h1v1h-1zM3 12h1v1h-1zM10 12h1v1h-1zM12 12h1v1h-1zM14 12h1v1h-1zM16 12h1v1h-1zM20 12h1v1h-1zM3 13h1v1h-1zM10 13h1v1h-1zM12 13h1v1h-1zM14 13h1v1h-1zM17 13h1v1h-1zM19 13h1v1h-1zM21 13h1v1h-1zM3 14h1v1h-1zM8 14h4v1h-4zM15 14h5v1h-5z" fill="#000"/></svg>
<svg class="a" style="left:993px;top:622px" width="28" height="20"><path d="M3 4h1v1h-1zM7 4h1v1h-1zM15 4h2v1h-2zM21 4h1v1h-1zM0 5h11v1h-11zM12 5h3v1h-3zM19 5h1v1h-1zM21 5h1v1h-1zM3 6h1v1h-1zM7 6h1v1h-1zM14 6h1v1h-1zM19 6h1v1h-1zM21 6h1v1h-1zM1 7h1v1h-1zM3 7h1v1h-1zM7 7h2v1h-2zM11 7h7v1h-7zM19 7h1v1h-1zM21 7h1v1h-1zM2 8h1v1h-1zM7 8h1v1h-1zM9 8h1v1h-1zM14 8h1v1h-1zM19 8h1v1h-1zM21 8h1v1h-1zM1 9h1v1h-1zM3 9h1v1h-1zM5 9h6v1h-6zM13 9h3v1h-3zM19 9h1v1h-1zM21 9h1v1h-1zM0 10h1v1h-1zM3 10h1v1h-1zM7 10h1v1h-1zM13 10h2v1h-2zM16 10h1v1h-1zM19 10h1v1h-1zM21 10h1v1h-1zM2 11h2v1h-2zM7 11h1v1h-1zM12 11h1v1h-1zM14 11h1v1h-1zM17 11h1v1h-1zM19 11h1v1h-1zM21 11h1v1h-1zM1 12h1v1h-1zM3 12h1v1h-1zM6 12h1v1h-1zM8 12h1v1h-1zM11 12h1v1h-1zM14 12h1v1h-1zM21 12h1v1h-1zM3 13h1v1h-1zM5 13h1v1h-1zM9 13h1v1h-1zM14 13h1v1h-1zM21 13h1v1h-1zM1 14h2v1h-2zM4 14h1v1h-1zM10 14h1v1h-1zM14 14h1v1h-1zM19 14h3v1h-3z" fill="#000"/></svg>
<svg class="a" style="left:41px;top:643px" width="48" height="19"><path d="M3 4h1v1h-1zM9 4h2v1h-2zM13 4h5v1h-5zM22 4h1v1h-1zM27 4h2v1h-2zM31 4h3v1h-3zM38 4h3v1h-3zM2 5h2v1h-2zM8 5h1v1h-1zM11 5h1v1h-1zM17 5h1v1h-1zM21 5h2v1h-2zM26 5h1v1h-1zM29 5h1v1h-1zM34 5h1v1h-1zM37 5h1v1h-1zM41 5h1v1h-1zM3 6h1v1h-1zM8 6h1v1h-1zM11 6h1v1h-1zM16 6h1v1h-1zM20 6h1v1h-1zM22 6h1v1h-1zM26 6h1v1h-1zM29 6h1v1h-1zM34 6h1v1h-1zM37 6h1v1h-1zM41 6h1v1h-1zM3 7h1v1h-1zM8 7h1v1h-1zM11 7h1v1h-1zM16 7h1v1h-1zM20 7h1v1h-1zM22 7h1v1h-1zM26 7h1v1h-1zM29 7h1v1h-1zM33 7h1v1h-1zM38 7h3v1h-3zM3 8h1v1h-1zM9 8h3v1h-3zM16 8h1v1h-1zM19 8h1v1h-1zM22 8h1v1h-1zM27 8h3v1h-3zM34 8h2v1h-2zM37 8h2v1h-2zM40 8h2v1h-2zM3 9h1v1h-1zM10 9h2v1h-2zM15 9h1v1h-1zM20 9h4v1h-4zM28 9h2v1h-2zM35 9h1v1h-1zM37 9h1v1h-1zM41 9h1v1h-1zM2 10h3v1h-3zM8 10h3v1h-3zM15 10h1v1h-1zM21 10h3v1h-3zM26 10h3v1h-3zM32 10h3v1h-3zM38 10h3v1h-3z" fill="#000"/></svg>
<svg class="a" style="left:184px;top:643px" width="102" height="19"><path d="M2 4h3v1h-3zM8 4h3v1h-3zM14 4h3v1h-3zM20 4h3v1h-3zM32 4h3v1h-3zM39 4h2v1h-2zM50 4h3v1h-3zM56 4h3v1h-3zM68 4h3v1h-3zM75 4h3v1h-3zM86 4h3v1h-3zM92 4h3v1h-3zM1 5h1v1h-1zM5 5h1v1h-1zM7 5h1v1h-1zM11 5h1v1h-1zM13 5h1v1h-1zM17 5h1v1h-1zM20 5h1v1h-1zM31 5h1v1h-1zM35 5h1v1h-1zM38 5h1v1h-1zM41 5h1v1h-1zM49 5h1v1h-1zM53 5h1v1h-1zM55 5h1v1h-1zM59 5h1v1h-1zM67 5h1v1h-1zM71 5h1v1h-1zM75 5h1v1h-1zM85 5h1v1h-1zM89 5h1v1h-1zM91 5h1v1h-1zM95 5h1v1h-1zM5 6h1v1h-1zM7 6h1v1h-1zM11 6h1v1h-1zM13 6h1v1h-1zM17 6h1v1h-1zM20 6h3v1h-3zM31 6h1v1h-1zM35 6h1v1h-1zM38 6h1v1h-1zM41 6h1v1h-1zM53 6h1v1h-1zM59 6h1v1h-1zM67 6h1v1h-1zM71 6h1v1h-1zM74 6h1v1h-1zM80 6h1v1h-1zM89 6h1v1h-1zM91 6h1v1h-1zM95 6h1v1h-1zM4 7h1v1h-1zM7 7h1v1h-1zM11 7h1v1h-1zM13 7h1v1h-1zM17 7h1v1h-1zM20 7h1v1h-1zM23 7h1v1h-1zM31 7h1v1h-1zM35 7h1v1h-1zM38 7h1v1h-1zM41 7h1v1h-1zM52 7h1v1h-1zM58 7h1v1h-1zM67 7h1v1h-1zM71 7h1v1h-1zM74 7h3v1h-3zM88 7h1v1h-1zM92 7h3v1h-3zM3 8h1v1h-1zM7 8h1v1h-1zM11 8h1v1h-1zM13 8h1v1h-1zM17 8h1v1h-1zM23 8h1v1h-1zM31 8h1v1h-1zM35 8h1v1h-1zM39 8h3v1h-3zM51 8h1v1h-1zM57 8h1v1h-1zM67 8h1v1h-1zM71 8h1v1h-1zM74 8h1v1h-1zM77 8h1v1h-1zM87 8h1v1h-1zM91 8h2v1h-2zM94 8h2v1h-2zM1 9h2v1h-2zM7 9h1v1h-1zM11 9h1v1h-1zM13 9h1v1h-1zM17 9h1v1h-1zM23 9h1v1h-1zM31 9h1v1h-1zM35 9h1v1h-1zM40 9h2v1h-2zM49 9h2v1h-2zM55 9h2v1h-2zM67 9h1v1h-1zM71 9h1v1h-1zM74 9h1v1h-1zM77 9h1v1h-1zM85 9h2v1h-2zM91 9h1v1h-1zM95 9h1v1h-1zM2 10h4v1h-4zM8 10h3v1h-3zM14 10h3v1h-3zM20 10h3v1h-3zM26 10h1v1h-1zM32 10h3v1h-3zM38 10h3v1h-3zM44 10h1v1h-1zM50 10h4v1h-4zM56 10h4v1h-4zM68 10h3v1h-3zM75 10h2v1h-2zM80 10h1v1h-1zM86 10h4v1h-4zM92 10h3v1h-3z" fill="#000"/></svg>
<svg class="a" style="left:330px;top:643px" width="24" height="19"><path d="M1 4h1v1h-1zM1 5h1v1h-1zM1 6h1v1h-1zM3 6h2v1h-2zM7 6h1v1h-1zM11 6h1v1h-1zM13 6h1v1h-1zM16 6h2v1h-2zM1 7h2v1h-2zM5 7h1v1h-1zM7 7h1v1h-1zM11 7h1v1h-1zM13 7h1v1h-1zM16 7h1v1h-1zM1 8h1v1h-1zM5 8h1v1h-1zM7 8h1v1h-1zM11 8h1v1h-1zM13 8h1v1h-1zM16 8h1v1h-1zM1 9h1v1h-1zM5 9h1v1h-1zM7 9h1v1h-1zM11 9h1v1h-1zM14 9h2v1h-2zM1 10h4v1h-4zM7 10h5v1h-5zM15 10h1v1h-1zM14 11h1v1h-1zM13 12h3v1h-3z" fill="#000"/></svg>
<svg class="a" style="left:379px;top:643px" width="30" height="19"><path d="M2 4h3v1h-3zM14 4h3v1h-3zM20 4h3v1h-3zM1 5h1v1h-1zM5 5h1v1h-1zM13 5h1v1h-1zM17 5h1v1h-1zM19 5h1v1h-1zM23 5h1v1h-1zM1 6h1v1h-1zM5 6h1v1h-1zM13 6h1v1h-1zM17 6h1v1h-1zM19 6h1v1h-1zM23 6h1v1h-1zM2 7h3v1h-3zM13 7h1v1h-1zM17 7h1v1h-1zM19 7h1v1h-1zM23 7h1v1h-1zM1 8h2v1h-2zM4 8h2v1h-2zM13 8h1v1h-1zM17 8h1v1h-1zM19 8h1v1h-1zM23 8h1v1h-1zM1 9h1v1h-1zM5 9h1v1h-1zM13 9h1v1h-1zM17 9h1v1h-1zM19 9h1v1h-1zM23 9h1v1h-1zM2 10h3v1h-3zM8 10h1v1h-1zM14 10h3v1h-3zM20 10h3v1h-3z" fill="#000"/></svg>
<svg class="a" style="left:436px;top:643px" width="42" height="19"><path d="M7 4h1v1h-1zM35 4h1v1h-1zM7 5h1v1h-1zM35 5h1v1h-1zM2 6h2v1h-2zM5 6h1v1h-1zM7 6h1v1h-1zM9 6h2v1h-2zM12 6h2v1h-2zM15 6h2v1h-2zM19 6h1v1h-1zM23 6h1v1h-1zM26 6h4v1h-4zM32 6h2v1h-2zM35 6h1v1h-1zM1 7h1v1h-1zM4 7h2v1h-2zM7 7h2v1h-2zM11 7h1v1h-1zM13 7h2v1h-2zM17 7h1v1h-1zM19 7h1v1h-1zM23 7h1v1h-1zM26 7h1v1h-1zM29 7h1v1h-1zM31 7h1v1h-1zM34 7h2v1h-2zM1 8h1v1h-1zM5 8h1v1h-1zM7 8h1v1h-1zM11 8h1v1h-1zM13 8h1v1h-1zM17 8h1v1h-1zM19 8h1v1h-1zM23 8h1v1h-1zM26 8h4v1h-4zM31 8h1v1h-1zM35 8h1v1h-1zM1 9h1v1h-1zM5 9h1v1h-1zM7 9h1v1h-1zM11 9h1v1h-1zM13 9h1v1h-1zM17 9h1v1h-1zM19 9h1v1h-1zM23 9h1v1h-1zM25 9h1v1h-1zM29 9h1v1h-1zM31 9h1v1h-1zM35 9h1v1h-1zM2 10h4v1h-4zM7 10h4v1h-4zM13 10h4v1h-4zM19 10h5v1h-5zM25 10h4v1h-4zM32 10h5v1h-5zM5 11h1v1h-1zM13 11h1v1h-1zM3 12h3v1h-3zM12 12h3v1h-3z" fill="#000"/></svg>
<svg class="a" style="left:514px;top:643px" width="42" height="19"><path d="M3 4h1v1h-1zM14 4h3v1h-3zM20 4h3v1h-3zM25 4h5v1h-5zM32 4h3v1h-3zM2 5h2v1h-2zM13 5h1v1h-1zM17 5h1v1h-1zM19 5h1v1h-1zM23 5h1v1h-1zM29 5h1v1h-1zM31 5h1v1h-1zM35 5h1v1h-1zM3 6h1v1h-1zM13 6h1v1h-1zM17 6h1v1h-1zM19 6h1v1h-1zM23 6h1v1h-1zM28 6h1v1h-1zM35 6h1v1h-1zM3 7h1v1h-1zM14 7h3v1h-3zM19 7h1v1h-1zM23 7h1v1h-1zM28 7h1v1h-1zM34 7h1v1h-1zM3 8h1v1h-1zM13 8h2v1h-2zM16 8h2v1h-2zM19 8h1v1h-1zM23 8h1v1h-1zM28 8h1v1h-1zM33 8h1v1h-1zM3 9h1v1h-1zM13 9h1v1h-1zM17 9h1v1h-1zM19 9h1v1h-1zM23 9h1v1h-1zM27 9h1v1h-1zM31 9h2v1h-2zM2 10h3v1h-3zM8 10h1v1h-1zM14 10h3v1h-3zM20 10h3v1h-3zM27 10h1v1h-1zM32 10h4v1h-4z" fill="#000"/></svg>
<svg class="a" style="left:590px;top:643px" width="42" height="19"><path d="M2 4h3v1h-3zM14 4h3v1h-3zM20 4h3v1h-3zM26 4h3v1h-3zM32 4h3v1h-3zM1 5h1v1h-1zM5 5h1v1h-1zM13 5h1v1h-1zM17 5h1v1h-1zM19 5h1v1h-1zM23 5h1v1h-1zM25 5h1v1h-1zM29 5h1v1h-1zM31 5h1v1h-1zM35 5h1v1h-1zM1 6h1v1h-1zM5 6h1v1h-1zM13 6h1v1h-1zM17 6h1v1h-1zM19 6h1v1h-1zM23 6h1v1h-1zM25 6h1v1h-1zM29 6h1v1h-1zM31 6h1v1h-1zM35 6h1v1h-1zM1 7h1v1h-1zM5 7h1v1h-1zM13 7h1v1h-1zM17 7h1v1h-1zM19 7h1v1h-1zM23 7h1v1h-1zM25 7h1v1h-1zM29 7h1v1h-1zM31 7h1v1h-1zM35 7h1v1h-1zM1 8h1v1h-1zM5 8h1v1h-1zM13 8h1v1h-1zM17 8h1v1h-1zM19 8h1v1h-1zM23 8h1v1h-1zM25 8h1v1h-1zM29 8h1v1h-1zM31 8h1v1h-1zM35 8h1v1h-1zM1 9h1v1h-1zM5 9h1v1h-1zM13 9h1v1h-1zM17 9h1v1h-1zM19 9h1v1h-1zM23 9h1v1h-1zM25 9h1v1h-1zM29 9h1v1h-1zM31 9h1v1h-1zM35 9h1v1h-1zM2 10h3v1h-3zM8 10h1v1h-1zM14 10h3v1h-3zM20 10h3v1h-3zM26 10h3v1h-3zM32 10h3v1h-3z" fill="#000"/></svg>
<svg class="a" style="left:666px;top:643px" width="42" height="19"><path d="M2 4h3v1h-3zM14 4h3v1h-3zM20 4h3v1h-3zM26 4h3v1h-3zM32 4h3v1h-3zM1 5h1v1h-1zM5 5h1v1h-1zM13 5h1v1h-1zM17 5h1v1h-1zM19 5h1v1h-1zM23 5h1v1h-1zM25 5h1v1h-1zM29 5h1v1h-1zM31 5h1v1h-1zM35 5h1v1h-1zM1 6h1v1h-1zM5 6h1v1h-1zM13 6h1v1h-1zM17 6h1v1h-1zM19 6h1v1h-1zM23 6h1v1h-1zM25 6h1v1h-1zM29 6h1v1h-1zM31 6h1v1h-1zM35 6h1v1h-1zM1 7h1v1h-1zM5 7h1v1h-1zM13 7h1v1h-1zM17 7h1v1h-1zM19 7h1v1h-1zM23 7h1v1h-1zM25 7h1v1h-1zM29 7h1v1h-1zM31 7h1v1h-1zM35 7h1v1h-1zM1 8h1v1h-1zM5 8h1v1h-1zM13 8h1v1h-1zM17 8h1v1h-1zM19 8h1v1h-1zM23 8h1v1h-1zM25 8h1v1h-1zM29 8h1v1h-1zM31 8h1v1h-1zM35 8h1v1h-1zM1 9h1v1h-1zM5 9h1v1h-1zM13 9h1v1h-1zM17 9h1v1h-1zM19 9h1v1h-1zM23 9h1v1h-1zM25 9h1v1h-1zM29 9h1v1h-1zM31 9h1v1h-1zM35 9h1v1h-1zM2 10h3v1h-3zM8 10h1v1h-1zM14 10h3v1h-3zM20 10h3v1h-3zM26 10h3v1h-3zM32 10h3v1h-3z" fill="#000"/></svg>
<svg class="a" style="left:743px;top:643px" width="42" height="19"><path d="M3 4h1v1h-1zM14 4h3v1h-3zM20 4h3v1h-3zM26 4h3v1h-3zM31 4h5v1h-5zM2 5h2v1h-2zM13 5h1v1h-1zM17 5h1v1h-1zM19 5h1v1h-1zM23 5h1v1h-1zM25 5h1v1h-1zM29 5h1v1h-1zM35 5h1v1h-1zM3 6h1v1h-1zM13 6h1v1h-1zM17 6h1v1h-1zM19 6h1v1h-1zM23 6h1v1h-1zM25 6h1v1h-1zM29 6h1v1h-1zM34 6h1v1h-1zM3 7h1v1h-1zM14 7h3v1h-3zM19 7h1v1h-1zM23 7h1v1h-1zM26 7h3v1h-3zM34 7h1v1h-1zM3 8h1v1h-1zM13 8h2v1h-2zM16 8h2v1h-2zM19 8h1v1h-1zM23 8h1v1h-1zM25 8h2v1h-2zM28 8h2v1h-2zM34 8h1v1h-1zM3 9h1v1h-1zM13 9h1v1h-1zM17 9h1v1h-1zM19 9h1v1h-1zM23 9h1v1h-1zM25 9h1v1h-1zM29 9h1v1h-1zM33 9h1v1h-1zM2 10h3v1h-3zM8 10h1v1h-1zM14 10h3v1h-3zM20 10h3v1h-3zM26 10h3v1h-3zM33 10h1v1h-1z" fill="#000"/></svg>
<svg class="a" style="left:833px;top:643px" width="30" height="19"><path d="M2 4h3v1h-3zM14 4h3v1h-3zM20 4h3v1h-3zM1 5h1v1h-1zM5 5h1v1h-1zM13 5h1v1h-1zM17 5h1v1h-1zM19 5h1v1h-1zM23 5h1v1h-1zM1 6h1v1h-1zM5 6h1v1h-1zM13 6h1v1h-1zM17 6h1v1h-1zM19 6h1v1h-1zM23 6h1v1h-1zM1 7h1v1h-1zM5 7h1v1h-1zM13 7h1v1h-1zM17 7h1v1h-1zM19 7h1v1h-1zM23 7h1v1h-1zM1 8h1v1h-1zM5 8h1v1h-1zM13 8h1v1h-1zM17 8h1v1h-1zM19 8h1v1h-1zM23 8h1v1h-1zM1 9h1v1h-1zM5 9h1v1h-1zM13 9h1v1h-1zM17 9h1v1h-1zM19 9h1v1h-1zM23 9h1v1h-1zM2 10h3v1h-3zM8 10h1v1h-1zM14 10h3v1h-3zM20 10h3v1h-3z" fill="#000"/></svg>
<svg class="a" style="left:909px;top:643px" width="30" height="19"><path d="M2 4h3v1h-3zM14 4h3v1h-3zM20 4h3v1h-3zM1 5h1v1h-1zM5 5h1v1h-1zM13 5h1v1h-1zM17 5h1v1h-1zM19 5h1v1h-1zM23 5h1v1h-1zM1 6h1v1h-1zM5 6h1v1h-1zM13 6h1v1h-1zM17 6h1v1h-1zM19 6h1v1h-1zM23 6h1v1h-1zM1 7h1v1h-1zM5 7h1v1h-1zM13 7h1v1h-1zM17 7h1v1h-1zM19 7h1v1h-1zM23 7h1v1h-1zM1 8h1v1h-1zM5 8h1v1h-1zM13 8h1v1h-1zM17 8h1v1h-1zM19 8h1v1h-1zM23 8h1v1h-1zM1 9h1v1h-1zM5 9h1v1h-1zM13 9h1v1h-1zM17 9h1v1h-1zM19 9h1v1h-1zM23 9h1v1h-1zM2 10h3v1h-3zM8 10h1v1h-1zM14 10h3v1h-3zM20 10h3v1h-3z" fill="#000"/></svg>
<svg class="a" style="left:967px;top:643px" width="54" height="19"><path d="M3 4h1v1h-1zM14 4h3v1h-3zM20 4h3v1h-3zM26 4h3v1h-3zM38 4h3v1h-3zM44 4h3v1h-3zM2 5h2v1h-2zM13 5h1v1h-1zM17 5h1v1h-1zM19 5h1v1h-1zM23 5h1v1h-1zM25 5h1v1h-1zM29 5h1v1h-1zM37 5h1v1h-1zM41 5h1v1h-1zM43 5h1v1h-1zM47 5h1v1h-1zM3 6h1v1h-1zM17 6h1v1h-1zM19 6h1v1h-1zM23 6h1v1h-1zM25 6h1v1h-1zM29 6h1v1h-1zM37 6h1v1h-1zM41 6h1v1h-1zM43 6h1v1h-1zM47 6h1v1h-1zM3 7h1v1h-1zM16 7h1v1h-1zM19 7h1v1h-1zM23 7h1v1h-1zM25 7h1v1h-1zM29 7h1v1h-1zM37 7h1v1h-1zM41 7h1v1h-1zM43 7h1v1h-1zM47 7h1v1h-1zM3 8h1v1h-1zM15 8h1v1h-1zM19 8h1v1h-1zM23 8h1v1h-1zM25 8h1v1h-1zM29 8h1v1h-1zM37 8h1v1h-1zM41 8h1v1h-1zM43 8h1v1h-1zM47 8h1v1h-1zM3 9h1v1h-1zM13 9h2v1h-2zM19 9h1v1h-1zM23 9h1v1h-1zM25 9h1v1h-1zM29 9h1v1h-1zM37 9h1v1h-1zM41 9h1v1h-1zM43 9h1v1h-1zM47 9h1v1h-1zM2 10h3v1h-3zM14 10h4v1h-4zM20 10h3v1h-3zM26 10h3v1h-3zM32 10h1v1h-1zM38 10h3v1h-3zM44 10h3v1h-3z" fill="#000"/></svg>
<svg class="a" style="left:18px;top:642px" width="16" height="18"><path d="M1.5 1.5H8L11.5 5V15.5H1.5Z" fill="#fff" stroke="#777"/><circle cx="11" cy="13" r="4" fill="#2a8ae8" stroke="#1a5aa8"/></svg>
<div class="a" style="left:16px;top:661px;width:1004px;height:20px;background:#c9c9c7"></div>
<svg class="a" style="left:18px;top:663px" width="15" height="16"><rect x="1.5" y="1.5" width="11" height="13" fill="#fff" stroke="#666"/><path d="M7 3.5L11 7.5H8.5V11H5.5V7.5H3Z" fill="#1aa01a"/></svg>
<svg class="a" style="left:41px;top:661px" width="654" height="20"><path d="M5 4h2v1h-2zM14 4h2v1h-2zM18 4h6v1h-6zM115 4h2v1h-2zM120 4h2v1h-2zM130 4h2v1h-2zM134 4h2v1h-2zM243 4h10v1h-10zM257 4h8v1h-8zM267 4h2v1h-2zM283 4h2v1h-2zM387 4h10v1h-10zM401 4h8v1h-8zM411 4h2v1h-2zM427 4h2v1h-2zM528 4h8v1h-8zM538 4h2v1h-2zM554 4h2v1h-2zM562 4h2v1h-2zM567 4h2v1h-2zM575 4h7v1h-7zM583 4h2v1h-2zM4 5h4v1h-4zM12 5h7v1h-7zM20 5h2v1h-2zM116 5h2v1h-2zM119 5h6v1h-6zM130 5h9v1h-9zM231 5h9v1h-9zM243 5h2v1h-2zM247 5h2v1h-2zM251 5h2v1h-2zM257 5h4v1h-4zM263 5h2v1h-2zM268 5h10v1h-10zM282 5h4v1h-4zM374 5h12v1h-12zM387 5h2v1h-2zM391 5h2v1h-2zM395 5h2v1h-2zM401 5h4v1h-4zM407 5h2v1h-2zM412 5h10v1h-10zM426 5h4v1h-4zM528 5h4v1h-4zM534 5h2v1h-2zM539 5h10v1h-10zM553 5h4v1h-4zM562 5h2v1h-2zM567 5h2v1h-2zM575 5h2v1h-2zM578 5h2v1h-2zM583 5h2v1h-2zM3 6h2v1h-2zM7 6h2v1h-2zM12 6h2v1h-2zM17 6h7v1h-7zM116 6h2v1h-2zM119 6h2v1h-2zM122 6h2v1h-2zM129 6h2v1h-2zM133 6h2v1h-2zM238 6h2v1h-2zM243 6h2v1h-2zM247 6h2v1h-2zM251 6h2v1h-2zM256 6h2v1h-2zM259 6h2v1h-2zM263 6h2v1h-2zM268 6h2v1h-2zM273 6h2v1h-2zM281 6h2v1h-2zM285 6h2v1h-2zM382 6h2v1h-2zM387 6h2v1h-2zM391 6h2v1h-2zM395 6h2v1h-2zM400 6h2v1h-2zM403 6h2v1h-2zM407 6h2v1h-2zM412 6h2v1h-2zM417 6h2v1h-2zM425 6h2v1h-2zM429 6h2v1h-2zM527 6h2v1h-2zM530 6h2v1h-2zM534 6h2v1h-2zM539 6h2v1h-2zM544 6h2v1h-2zM552 6h2v1h-2zM556 6h2v1h-2zM562 6h2v1h-2zM567 6h2v1h-2zM570 6h2v1h-2zM575 6h2v1h-2zM578 6h2v1h-2zM581 6h4v1h-4zM2 7h2v1h-2zM8 7h2v1h-2zM13 7h7v1h-7zM22 7h2v1h-2zM40 7h3v1h-3zM47 7h3v1h-3zM61 7h3v1h-3zM69 7h3v1h-3zM76 7h3v1h-3zM89 7h4v1h-4zM96 7h4v1h-4zM118 7h8v1h-8zM129 7h2v1h-2zM132 7h6v1h-6zM155 7h3v1h-3zM162 7h4v1h-4zM177 7h3v1h-3zM184 7h3v1h-3zM191 7h3v1h-3zM204 7h4v1h-4zM211 7h4v1h-4zM238 7h2v1h-2zM243 7h10v1h-10zM256 7h2v1h-2zM259 7h6v1h-6zM273 7h2v1h-2zM280 7h2v1h-2zM286 7h2v1h-2zM305 7h6v1h-6zM320 7h3v1h-3zM327 7h3v1h-3zM334 7h3v1h-3zM348 7h3v1h-3zM355 7h4v1h-4zM376 7h5v1h-5zM382 7h2v1h-2zM387 7h10v1h-10zM400 7h2v1h-2zM403 7h6v1h-6zM417 7h2v1h-2zM424 7h2v1h-2zM430 7h2v1h-2zM450 7h3v1h-3zM457 7h3v1h-3zM471 7h3v1h-3zM478 7h3v1h-3zM484 7h5v1h-5zM499 7h3v1h-3zM506 7h4v1h-4zM527 7h2v1h-2zM530 7h6v1h-6zM544 7h2v1h-2zM551 7h2v1h-2zM557 7h2v1h-2zM562 7h2v1h-2zM567 7h4v1h-4zM574 7h11v1h-11zM602 7h3v1h-3zM608 7h4v1h-4zM614 7h6v1h-6zM629 7h4v1h-4zM636 7h3v1h-3zM643 7h3v1h-3zM0 8h15v1h-15zM16 8h8v1h-8zM39 8h2v1h-2zM42 8h2v1h-2zM46 8h2v1h-2zM49 8h2v1h-2zM60 8h2v1h-2zM63 8h2v1h-2zM69 8h3v1h-3zM76 8h3v1h-3zM88 8h2v1h-2zM92 8h2v1h-2zM95 8h2v1h-2zM99 8h2v1h-2zM117 8h2v1h-2zM121 8h2v1h-2zM124 8h2v1h-2zM128 8h3v1h-3zM132 8h2v1h-2zM136 8h2v1h-2zM154 8h2v1h-2zM157 8h2v1h-2zM161 8h2v1h-2zM164 8h2v1h-2zM177 8h3v1h-3zM184 8h3v1h-3zM191 8h3v1h-3zM203 8h2v1h-2zM207 8h2v1h-2zM210 8h2v1h-2zM214 8h2v1h-2zM231 8h2v1h-2zM238 8h2v1h-2zM243 8h2v1h-2zM247 8h2v1h-2zM251 8h2v1h-2zM255 8h3v1h-3zM261 8h2v1h-2zM266 8h4v1h-4zM271 8h4v1h-4zM278 8h12v1h-12zM308 8h2v1h-2zM319 8h2v1h-2zM322 8h2v1h-2zM326 8h2v1h-2zM329 8h2v1h-2zM333 8h2v1h-2zM336 8h2v1h-2zM347 8h2v1h-2zM350 8h2v1h-2zM354 8h2v1h-2zM358 8h2v1h-2zM376 8h2v1h-2zM379 8h2v1h-2zM382 8h2v1h-2zM387 8h2v1h-2zM391 8h2v1h-2zM395 8h2v1h-2zM399 8h3v1h-3zM405 8h2v1h-2zM410 8h4v1h-4zM415 8h4v1h-4zM422 8h12v1h-12zM449 8h2v1h-2zM452 8h2v1h-2zM456 8h2v1h-2zM459 8h2v1h-2zM470 8h2v1h-2zM473 8h2v1h-2zM477 8h4v1h-4zM484 8h2v1h-2zM498 8h2v1h-2zM501 8h2v1h-2zM505 8h2v1h-2zM509 8h2v1h-2zM526 8h3v1h-3zM532 8h2v1h-2zM537 8h4v1h-4zM542 8h4v1h-4zM549 8h12v1h-12zM562 8h8v1h-8zM574 8h5v1h-5zM580 8h5v1h-5zM602 8h3v1h-3zM607 8h2v1h-2zM611 8h2v1h-2zM617 8h2v1h-2zM632 8h2v1h-2zM635 8h2v1h-2zM638 8h2v1h-2zM642 8h2v1h-2zM645 8h2v1h-2zM5 9h2v1h-2zM14 9h3v1h-3zM18 9h6v1h-6zM26 9h2v1h-2zM42 9h2v1h-2zM46 9h2v1h-2zM49 9h2v1h-2zM63 9h2v1h-2zM68 9h4v1h-4zM75 9h4v1h-4zM88 9h2v1h-2zM92 9h2v1h-2zM95 9h2v1h-2zM99 9h2v1h-2zM117 9h14v1h-14zM132 9h6v1h-6zM141 9h2v1h-2zM157 9h2v1h-2zM161 9h2v1h-2zM164 9h3v1h-3zM176 9h4v1h-4zM183 9h4v1h-4zM190 9h4v1h-4zM203 9h2v1h-2zM207 9h2v1h-2zM210 9h2v1h-2zM214 9h2v1h-2zM231 9h9v1h-9zM243 9h2v1h-2zM247 9h2v1h-2zM251 9h2v1h-2zM254 9h12v1h-12zM268 9h2v1h-2zM271 9h6v1h-6zM283 9h2v1h-2zM292 9h2v1h-2zM308 9h2v1h-2zM322 9h2v1h-2zM329 9h2v1h-2zM333 9h2v1h-2zM336 9h2v1h-2zM347 9h2v1h-2zM350 9h2v1h-2zM354 9h2v1h-2zM358 9h2v1h-2zM376 9h2v1h-2zM379 9h2v1h-2zM382 9h2v1h-2zM387 9h2v1h-2zM391 9h2v1h-2zM395 9h2v1h-2zM398 9h12v1h-12zM412 9h2v1h-2zM415 9h6v1h-6zM427 9h2v1h-2zM436 9h2v1h-2zM452 9h2v1h-2zM459 9h2v1h-2zM473 9h2v1h-2zM479 9h2v1h-2zM484 9h5v1h-5zM501 9h2v1h-2zM505 9h2v1h-2zM509 9h2v1h-2zM525 9h12v1h-12zM539 9h2v1h-2zM542 9h6v1h-6zM554 9h2v1h-2zM562 9h2v1h-2zM567 9h2v1h-2zM573 9h12v1h-12zM587 9h2v1h-2zM601 9h4v1h-4zM607 9h2v1h-2zM611 9h2v1h-2zM617 9h2v1h-2zM632 9h2v1h-2zM638 9h2v1h-2zM643 9h3v1h-3zM1 10h10v1h-10zM13 10h2v1h-2zM16 10h8v1h-8zM41 10h3v1h-3zM47 10h3v1h-3zM62 10h3v1h-3zM67 10h5v1h-5zM74 10h5v1h-5zM88 10h2v1h-2zM92 10h2v1h-2zM95 10h2v1h-2zM99 10h2v1h-2zM117 10h2v1h-2zM121 10h2v1h-2zM124 10h2v1h-2zM129 10h2v1h-2zM132 10h2v1h-2zM136 10h2v1h-2zM156 10h3v1h-3zM162 10h5v1h-5zM175 10h5v1h-5zM182 10h5v1h-5zM189 10h5v1h-5zM203 10h2v1h-2zM207 10h2v1h-2zM210 10h2v1h-2zM214 10h2v1h-2zM231 10h2v1h-2zM243 10h10v1h-10zM256 10h2v1h-2zM261 10h2v1h-2zM268 10h2v1h-2zM271 10h4v1h-4zM279 10h10v1h-10zM308 10h2v1h-2zM321 10h3v1h-3zM328 10h3v1h-3zM334 10h3v1h-3zM348 10h3v1h-3zM354 10h2v1h-2zM358 10h2v1h-2zM376 10h5v1h-5zM382 10h2v1h-2zM387 10h10v1h-10zM400 10h2v1h-2zM405 10h2v1h-2zM412 10h2v1h-2zM415 10h4v1h-4zM423 10h10v1h-10zM451 10h3v1h-3zM458 10h3v1h-3zM472 10h3v1h-3zM479 10h2v1h-2zM484 10h2v1h-2zM488 10h2v1h-2zM500 10h3v1h-3zM505 10h2v1h-2zM509 10h2v1h-2zM527 10h2v1h-2zM532 10h2v1h-2zM539 10h2v1h-2zM542 10h4v1h-4zM550 10h10v1h-10zM562 10h2v1h-2zM567 10h2v1h-2zM575 10h2v1h-2zM578 10h7v1h-7zM600 10h5v1h-5zM607 10h2v1h-2zM611 10h2v1h-2zM617 10h2v1h-2zM630 10h3v1h-3zM637 10h3v1h-3zM644 10h4v1h-4zM5 11h2v1h-2zM12 11h12v1h-12zM41 11h2v1h-2zM46 11h2v1h-2zM49 11h2v1h-2zM62 11h2v1h-2zM67 11h6v1h-6zM74 11h6v1h-6zM88 11h2v1h-2zM92 11h2v1h-2zM95 11h2v1h-2zM99 11h2v1h-2zM115 11h3v1h-3zM119 11h7v1h-7zM129 11h2v1h-2zM132 11h6v1h-6zM156 11h2v1h-2zM164 11h2v1h-2zM175 11h6v1h-6zM182 11h6v1h-6zM189 11h6v1h-6zM203 11h2v1h-2zM207 11h2v1h-2zM210 11h2v1h-2zM214 11h2v1h-2zM231 11h2v1h-2zM240 11h2v1h-2zM243 11h2v1h-2zM247 11h2v1h-2zM251 11h2v1h-2zM256 11h2v1h-2zM260 11h4v1h-4zM268 11h7v1h-7zM283 11h2v1h-2zM307 11h2v1h-2zM321 11h2v1h-2zM328 11h2v1h-2zM333 11h2v1h-2zM336 11h2v1h-2zM347 11h2v1h-2zM350 11h2v1h-2zM354 11h2v1h-2zM358 11h2v1h-2zM376 11h2v1h-2zM379 11h2v1h-2zM382 11h2v1h-2zM387 11h2v1h-2zM391 11h2v1h-2zM395 11h2v1h-2zM400 11h2v1h-2zM404 11h4v1h-4zM412 11h7v1h-7zM427 11h2v1h-2zM451 11h2v1h-2zM458 11h2v1h-2zM472 11h2v1h-2zM479 11h2v1h-2zM488 11h2v1h-2zM500 11h2v1h-2zM505 11h2v1h-2zM509 11h2v1h-2zM527 11h2v1h-2zM531 11h4v1h-4zM539 11h7v1h-7zM554 11h2v1h-2zM562 11h2v1h-2zM567 11h2v1h-2zM575 11h2v1h-2zM579 11h6v1h-6zM600 11h6v1h-6zM607 11h2v1h-2zM611 11h2v1h-2zM616 11h2v1h-2zM632 11h2v1h-2zM637 11h2v1h-2zM642 11h6v1h-6zM3 12h6v1h-6zM13 12h2v1h-2zM16 12h8v1h-8zM40 12h2v1h-2zM46 12h2v1h-2zM49 12h2v1h-2zM61 12h2v1h-2zM70 12h2v1h-2zM77 12h2v1h-2zM88 12h2v1h-2zM92 12h2v1h-2zM95 12h2v1h-2zM99 12h2v1h-2zM116 12h2v1h-2zM121 12h2v1h-2zM129 12h2v1h-2zM132 12h6v1h-6zM155 12h2v1h-2zM163 12h3v1h-3zM178 12h2v1h-2zM185 12h2v1h-2zM192 12h2v1h-2zM203 12h2v1h-2zM207 12h2v1h-2zM210 12h2v1h-2zM214 12h2v1h-2zM231 12h2v1h-2zM240 12h2v1h-2zM243 12h2v1h-2zM247 12h2v1h-2zM251 12h2v1h-2zM256 12h2v1h-2zM259 12h6v1h-6zM268 12h7v1h-7zM280 12h2v1h-2zM283 12h2v1h-2zM286 12h2v1h-2zM307 12h2v1h-2zM320 12h2v1h-2zM327 12h2v1h-2zM333 12h2v1h-2zM336 12h2v1h-2zM347 12h2v1h-2zM350 12h2v1h-2zM354 12h2v1h-2zM358 12h2v1h-2zM382 12h2v1h-2zM387 12h2v1h-2zM391 12h2v1h-2zM395 12h2v1h-2zM400 12h2v1h-2zM403 12h6v1h-6zM412 12h7v1h-7zM424 12h2v1h-2zM427 12h2v1h-2zM430 12h2v1h-2zM450 12h2v1h-2zM457 12h2v1h-2zM471 12h2v1h-2zM479 12h2v1h-2zM488 12h2v1h-2zM499 12h2v1h-2zM505 12h2v1h-2zM509 12h2v1h-2zM527 12h2v1h-2zM530 12h6v1h-6zM539 12h7v1h-7zM551 12h2v1h-2zM554 12h2v1h-2zM557 12h2v1h-2zM562 12h7v1h-7zM571 12h2v1h-2zM575 12h2v1h-2zM578 12h2v1h-2zM583 12h2v1h-2zM603 12h2v1h-2zM607 12h2v1h-2zM611 12h2v1h-2zM616 12h2v1h-2zM632 12h2v1h-2zM636 12h2v1h-2zM644 12h4v1h-4zM2 13h2v1h-2zM5 13h2v1h-2zM8 13h2v1h-2zM13 13h5v1h-5zM19 13h4v1h-4zM26 13h2v1h-2zM39 13h5v1h-5zM47 13h3v1h-3zM60 13h5v1h-5zM69 13h4v1h-4zM76 13h4v1h-4zM82 13h2v1h-2zM89 13h4v1h-4zM96 13h4v1h-4zM116 13h2v1h-2zM121 13h2v1h-2zM129 13h2v1h-2zM132 13h2v1h-2zM136 13h2v1h-2zM141 13h2v1h-2zM154 13h5v1h-5zM161 13h4v1h-4zM177 13h4v1h-4zM184 13h4v1h-4zM191 13h4v1h-4zM197 13h2v1h-2zM204 13h4v1h-4zM211 13h4v1h-4zM231 13h2v1h-2zM240 13h4v1h-4zM247 13h2v1h-2zM251 13h2v1h-2zM256 13h4v1h-4zM261 13h2v1h-2zM264 13h2v1h-2zM268 13h2v1h-2zM271 13h4v1h-4zM281 13h6v1h-6zM292 13h2v1h-2zM307 13h2v1h-2zM319 13h5v1h-5zM326 13h5v1h-5zM334 13h3v1h-3zM341 13h2v1h-2zM348 13h3v1h-3zM355 13h4v1h-4zM382 13h2v1h-2zM386 13h2v1h-2zM391 13h2v1h-2zM395 13h2v1h-2zM400 13h4v1h-4zM405 13h2v1h-2zM408 13h2v1h-2zM412 13h2v1h-2zM415 13h4v1h-4zM425 13h6v1h-6zM436 13h2v1h-2zM449 13h5v1h-5zM456 13h5v1h-5zM470 13h5v1h-5zM478 13h4v1h-4zM484 13h5v1h-5zM492 13h2v1h-2zM498 13h5v1h-5zM506 13h4v1h-4zM527 13h4v1h-4zM532 13h2v1h-2zM535 13h2v1h-2zM539 13h2v1h-2zM542 13h4v1h-4zM552 13h6v1h-6zM562 13h3v1h-3zM567 13h2v1h-2zM571 13h2v1h-2zM575 13h4v1h-4zM583 13h2v1h-2zM587 13h2v1h-2zM602 13h4v1h-4zM608 13h4v1h-4zM616 13h2v1h-2zM622 13h2v1h-2zM628 13h5v1h-5zM635 13h5v1h-5zM645 13h3v1h-3zM1 14h2v1h-2zM4 14h3v1h-3zM9 14h2v1h-2zM13 14h2v1h-2zM16 14h4v1h-4zM22 14h2v1h-2zM116 14h2v1h-2zM119 14h4v1h-4zM129 14h10v1h-10zM232 14h12v1h-12zM247 14h2v1h-2zM250 14h3v1h-3zM256 14h2v1h-2zM261 14h2v1h-2zM269 14h21v1h-21zM380 14h4v1h-4zM386 14h2v1h-2zM391 14h2v1h-2zM394 14h3v1h-3zM400 14h2v1h-2zM405 14h2v1h-2zM413 14h21v1h-21zM527 14h2v1h-2zM532 14h2v1h-2zM540 14h21v1h-21zM562 14h2v1h-2zM568 14h5v1h-5zM575 14h3v1h-3zM582 14h3v1h-3z" fill="#000"/></svg>
<svg class="a" style="left:960px;top:661px" width="62" height="20"><path d="M2 7h3v1h-3zM16 7h3v1h-3zM23 7h4v1h-4zM30 7h4v1h-4zM44 7h4v1h-4zM51 7h4v1h-4zM1 8h4v1h-4zM15 8h2v1h-2zM18 8h2v1h-2zM22 8h2v1h-2zM26 8h2v1h-2zM29 8h2v1h-2zM33 8h2v1h-2zM43 8h2v1h-2zM47 8h2v1h-2zM50 8h2v1h-2zM54 8h2v1h-2zM3 9h2v1h-2zM18 9h2v1h-2zM22 9h2v1h-2zM26 9h2v1h-2zM29 9h2v1h-2zM33 9h2v1h-2zM43 9h2v1h-2zM47 9h2v1h-2zM50 9h2v1h-2zM54 9h2v1h-2zM3 10h2v1h-2zM17 10h3v1h-3zM22 10h2v1h-2zM26 10h2v1h-2zM29 10h2v1h-2zM33 10h2v1h-2zM43 10h2v1h-2zM47 10h2v1h-2zM50 10h2v1h-2zM54 10h2v1h-2zM3 11h2v1h-2zM17 11h2v1h-2zM22 11h2v1h-2zM26 11h2v1h-2zM29 11h2v1h-2zM33 11h2v1h-2zM43 11h2v1h-2zM47 11h2v1h-2zM50 11h2v1h-2zM54 11h2v1h-2zM3 12h2v1h-2zM16 12h2v1h-2zM22 12h2v1h-2zM26 12h2v1h-2zM29 12h2v1h-2zM33 12h2v1h-2zM43 12h2v1h-2zM47 12h2v1h-2zM50 12h2v1h-2zM54 12h2v1h-2zM2 13h4v1h-4zM15 13h5v1h-5zM23 13h4v1h-4zM30 13h4v1h-4zM37 13h2v1h-2zM44 13h4v1h-4zM51 13h4v1h-4z" fill="#000"/></svg>
<div class="a" style="left:15px;top:693px;width:1009px;height:2px;background:#000"></div>
<div class="a" style="left:18px;top:693px;width:44px;height:19px;background:#fafcf8;border:2px solid #000;border-top:none"></div>
<svg class="a" style="left:27px;top:693px" width="30" height="20"><path d="M5 4h1v1h-1zM14 4h7v1h-7zM0 5h11v1h-11zM14 5h1v1h-1zM20 5h1v1h-1zM14 6h7v1h-7zM3 7h1v1h-1zM7 7h1v1h-1zM14 7h1v1h-1zM20 7h1v1h-1zM2 8h1v1h-1zM8 8h1v1h-1zM14 8h7v1h-7zM1 9h1v1h-1zM3 9h1v1h-1zM7 9h1v1h-1zM9 9h1v1h-1zM14 9h1v1h-1zM3 10h1v1h-1zM7 10h1v1h-1zM14 10h8v1h-8zM4 11h1v1h-1zM6 11h1v1h-1zM13 11h1v1h-1zM16 11h1v1h-1zM18 11h1v1h-1zM21 11h1v1h-1zM5 12h1v1h-1zM12 12h1v1h-1zM15 12h1v1h-1zM18 12h1v1h-1zM21 12h1v1h-1zM3 13h2v1h-2zM6 13h2v1h-2zM14 13h1v1h-1zM17 13h1v1h-1zM21 13h1v1h-1zM1 14h2v1h-2zM8 14h3v1h-3zM13 14h1v1h-1zM16 14h1v1h-1zM19 14h2v1h-2z" fill="#000"/></svg>
<svg class="a" style="left:71px;top:693px" width="54" height="20"><path d="M0 4h5v1h-5zM6 4h1v1h-1zM9 4h1v1h-1zM17 4h1v1h-1zM26 4h9v1h-9zM41 4h1v1h-1zM0 5h1v1h-1zM4 5h1v1h-1zM6 5h1v1h-1zM9 5h1v1h-1zM18 5h1v1h-1zM26 5h1v1h-1zM41 5h1v1h-1zM0 6h1v1h-1zM2 6h1v1h-1zM4 6h1v1h-1zM6 6h1v1h-1zM8 6h1v1h-1zM14 6h8v1h-8zM26 6h1v1h-1zM30 6h1v1h-1zM37 6h9v1h-9zM0 7h1v1h-1zM2 7h1v1h-1zM4 7h1v1h-1zM6 7h2v1h-2zM14 7h1v1h-1zM21 7h1v1h-1zM26 7h1v1h-1zM30 7h1v1h-1zM37 7h1v1h-1zM41 7h1v1h-1zM45 7h1v1h-1zM0 8h1v1h-1zM2 8h1v1h-1zM4 8h1v1h-1zM6 8h1v1h-1zM14 8h1v1h-1zM21 8h1v1h-1zM26 8h1v1h-1zM28 8h7v1h-7zM37 8h1v1h-1zM41 8h1v1h-1zM45 8h1v1h-1zM0 9h1v1h-1zM2 9h1v1h-1zM4 9h7v1h-7zM14 9h8v1h-8zM26 9h1v1h-1zM30 9h1v1h-1zM34 9h1v1h-1zM37 9h9v1h-9zM0 10h1v1h-1zM2 10h1v1h-1zM4 10h1v1h-1zM6 10h1v1h-1zM8 10h1v1h-1zM14 10h1v1h-1zM26 10h1v1h-1zM30 10h1v1h-1zM34 10h1v1h-1zM38 10h1v1h-1zM41 10h1v1h-1zM2 11h1v1h-1zM6 11h1v1h-1zM8 11h1v1h-1zM14 11h1v1h-1zM26 11h1v1h-1zM29 11h1v1h-1zM34 11h1v1h-1zM39 11h1v1h-1zM41 11h1v1h-1zM1 12h1v1h-1zM3 12h1v1h-1zM6 12h1v1h-1zM9 12h1v1h-1zM14 12h1v1h-1zM25 12h1v1h-1zM29 12h1v1h-1zM34 12h1v1h-1zM40 12h1v1h-1zM1 13h1v1h-1zM4 13h1v1h-1zM6 13h2v1h-2zM9 13h1v1h-1zM13 13h1v1h-1zM25 13h1v1h-1zM28 13h1v1h-1zM34 13h1v1h-1zM39 13h1v1h-1zM41 13h2v1h-2zM0 14h1v1h-1zM4 14h1v1h-1zM6 14h1v1h-1zM10 14h1v1h-1zM12 14h1v1h-1zM24 14h1v1h-1zM27 14h1v1h-1zM32 14h2v1h-2zM36 14h3v1h-3zM43 14h4v1h-4z" fill="#979797"/></svg>
<div class="a" style="left:130px;top:697px;width:1px;height:13px;background:#979797"></div>
<svg class="a" style="left:139px;top:693px" width="30" height="20"><path d="M3 4h1v1h-1zM9 4h2v1h-2zM14 4h1v1h-1zM17 4h6v1h-6zM0 5h6v1h-6zM7 5h2v1h-2zM15 5h1v1h-1zM22 5h1v1h-1zM1 6h1v1h-1zM5 6h1v1h-1zM7 6h1v1h-1zM13 6h1v1h-1zM15 6h6v1h-6zM22 6h1v1h-1zM2 7h1v1h-1zM4 7h1v1h-1zM7 7h1v1h-1zM13 7h1v1h-1zM16 7h1v1h-1zM19 7h1v1h-1zM22 7h1v1h-1zM0 8h6v1h-6zM7 8h4v1h-4zM13 8h1v1h-1zM16 8h4v1h-4zM22 8h1v1h-1zM3 9h1v1h-1zM7 9h1v1h-1zM9 9h1v1h-1zM13 9h1v1h-1zM16 9h1v1h-1zM19 9h1v1h-1zM22 9h1v1h-1zM0 10h6v1h-6zM7 10h1v1h-1zM9 10h1v1h-1zM13 10h1v1h-1zM16 10h4v1h-4zM22 10h1v1h-1zM3 11h1v1h-1zM7 11h1v1h-1zM9 11h1v1h-1zM13 11h1v1h-1zM16 11h1v1h-1zM19 11h2v1h-2zM22 11h1v1h-1zM1 12h1v1h-1zM3 12h1v1h-1zM5 12h1v1h-1zM7 12h1v1h-1zM9 12h1v1h-1zM13 12h1v1h-1zM15 12h5v1h-5zM22 12h1v1h-1zM0 13h1v1h-1zM3 13h1v1h-1zM6 13h1v1h-1zM9 13h1v1h-1zM13 13h1v1h-1zM19 13h1v1h-1zM22 13h1v1h-1zM2 14h2v1h-2zM5 14h1v1h-1zM9 14h1v1h-1zM13 14h1v1h-1zM21 14h2v1h-2z" fill="#979797"/></svg>
<div class="a" style="left:174px;top:697px;width:1px;height:13px;background:#979797"></div>
<svg class="a" style="left:183px;top:693px" width="30" height="20"><path d="M0 4h6v1h-6zM7 4h1v1h-1zM14 4h1v1h-1zM17 4h5v1h-5zM1 5h1v1h-1zM4 5h1v1h-1zM7 5h4v1h-4zM14 5h1v1h-1zM17 5h1v1h-1zM21 5h1v1h-1zM0 6h7v1h-7zM8 6h1v1h-1zM12 6h6v1h-6zM21 6h1v1h-1zM1 7h1v1h-1zM3 7h1v1h-1zM5 7h1v1h-1zM7 7h1v1h-1zM9 7h1v1h-1zM14 7h1v1h-1zM17 7h1v1h-1zM19 7h2v1h-2zM0 8h11v1h-11zM14 8h1v1h-1zM16 8h2v1h-2zM14 9h2v1h-2zM17 9h6v1h-6zM1 10h9v1h-9zM13 10h2v1h-2zM17 10h1v1h-1zM19 10h1v1h-1zM21 10h1v1h-1zM12 11h1v1h-1zM14 11h1v1h-1zM17 11h1v1h-1zM19 11h1v1h-1zM21 11h1v1h-1zM2 12h7v1h-7zM14 12h1v1h-1zM17 12h1v1h-1zM20 12h1v1h-1zM2 13h1v1h-1zM8 13h1v1h-1zM14 13h1v1h-1zM17 13h1v1h-1zM19 13h1v1h-1zM21 13h1v1h-1zM2 14h7v1h-7zM12 14h3v1h-3zM17 14h2v1h-2zM22 14h1v1h-1z" fill="#979797"/></svg>
<div class="a" style="left:218px;top:697px;width:1px;height:13px;background:#979797"></div>
<svg class="a" style="left:227px;top:693px" width="30" height="20"><path d="M2 4h1v1h-1zM6 4h5v1h-5zM14 4h1v1h-1zM19 4h1v1h-1zM2 5h1v1h-1zM6 5h1v1h-1zM10 5h1v1h-1zM14 5h4v1h-4zM19 5h4v1h-4zM0 6h5v1h-5zM6 6h1v1h-1zM9 6h1v1h-1zM13 6h1v1h-1zM16 6h1v1h-1zM18 6h1v1h-1zM20 6h1v1h-1zM0 7h1v1h-1zM2 7h1v1h-1zM4 7h1v1h-1zM6 7h1v1h-1zM9 7h1v1h-1zM12 7h1v1h-1zM15 7h1v1h-1zM17 7h1v1h-1zM21 7h1v1h-1zM0 8h1v1h-1zM2 8h1v1h-1zM4 8h1v1h-1zM6 8h1v1h-1zM8 8h1v1h-1zM13 8h9v1h-9zM0 9h5v1h-5zM6 9h1v1h-1zM9 9h1v1h-1zM15 9h1v1h-1zM18 9h1v1h-1zM21 9h1v1h-1zM0 10h1v1h-1zM2 10h1v1h-1zM4 10h1v1h-1zM6 10h1v1h-1zM10 10h1v1h-1zM14 10h3v1h-3zM18 10h4v1h-4zM0 11h1v1h-1zM2 11h1v1h-1zM4 11h1v1h-1zM6 11h1v1h-1zM10 11h1v1h-1zM13 11h1v1h-1zM15 11h1v1h-1zM17 11h2v1h-2zM21 11h1v1h-1zM0 12h5v1h-5zM6 12h1v1h-1zM8 12h1v1h-1zM10 12h1v1h-1zM12 12h1v1h-1zM15 12h1v1h-1zM18 12h4v1h-4zM0 13h1v1h-1zM4 13h1v1h-1zM6 13h1v1h-1zM9 13h1v1h-1zM15 13h1v1h-1zM18 13h1v1h-1zM21 13h1v1h-1zM6 14h1v1h-1zM15 14h1v1h-1zM18 14h4v1h-4z" fill="#979797"/></svg>
<div class="a" style="left:262px;top:697px;width:1px;height:13px;background:#979797"></div>
<svg class="a" style="left:271px;top:693px" width="78" height="20"><path d="M2 4h1v1h-1zM14 4h1v1h-1zM19 4h1v1h-1zM29 4h1v1h-1zM38 4h7v1h-7zM55 4h3v1h-3zM62 4h1v1h-1zM67 4h1v1h-1zM2 5h4v1h-4zM7 5h4v1h-4zM13 5h1v1h-1zM16 5h1v1h-1zM19 5h1v1h-1zM21 5h1v1h-1zM24 5h11v1h-11zM38 5h1v1h-1zM44 5h1v1h-1zM49 5h6v1h-6zM62 5h1v1h-1zM64 5h7v1h-7zM1 6h1v1h-1zM3 6h1v1h-1zM7 6h1v1h-1zM10 6h1v1h-1zM12 6h6v1h-6zM19 6h2v1h-2zM38 6h7v1h-7zM52 6h1v1h-1zM56 6h1v1h-1zM61 6h1v1h-1zM66 6h1v1h-1zM1 7h7v1h-7zM10 7h1v1h-1zM19 7h1v1h-1zM22 7h1v1h-1zM27 7h1v1h-1zM31 7h1v1h-1zM38 7h1v1h-1zM44 7h1v1h-1zM50 7h6v1h-6zM61 7h1v1h-1zM63 7h1v1h-1zM65 7h1v1h-1zM69 7h1v1h-1zM3 8h2v1h-2zM7 8h4v1h-4zM13 8h5v1h-5zM19 8h4v1h-4zM26 8h1v1h-1zM32 8h1v1h-1zM38 8h7v1h-7zM53 8h1v1h-1zM60 8h3v1h-3zM64 8h7v1h-7zM2 9h1v1h-1zM5 9h1v1h-1zM7 9h1v1h-1zM10 9h1v1h-1zM13 9h1v1h-1zM17 9h1v1h-1zM25 9h1v1h-1zM27 9h1v1h-1zM31 9h1v1h-1zM33 9h1v1h-1zM38 9h1v1h-1zM52 9h1v1h-1zM56 9h1v1h-1zM62 9h1v1h-1zM66 9h1v1h-1zM68 9h1v1h-1zM70 9h1v1h-1zM1 10h1v1h-1zM3 10h7v1h-7zM13 10h5v1h-5zM19 10h1v1h-1zM21 10h1v1h-1zM27 10h1v1h-1zM31 10h1v1h-1zM38 10h8v1h-8zM49 10h9v1h-9zM61 10h1v1h-1zM66 10h1v1h-1zM68 10h1v1h-1zM3 11h1v1h-1zM9 11h1v1h-1zM13 11h1v1h-1zM17 11h1v1h-1zM19 11h2v1h-2zM28 11h1v1h-1zM30 11h1v1h-1zM37 11h1v1h-1zM40 11h1v1h-1zM42 11h1v1h-1zM45 11h1v1h-1zM53 11h1v1h-1zM57 11h1v1h-1zM60 11h4v1h-4zM66 11h1v1h-1zM68 11h1v1h-1zM3 12h7v1h-7zM13 12h5v1h-5zM19 12h1v1h-1zM22 12h1v1h-1zM29 12h1v1h-1zM36 12h1v1h-1zM39 12h1v1h-1zM42 12h1v1h-1zM45 12h1v1h-1zM51 12h1v1h-1zM53 12h1v1h-1zM55 12h1v1h-1zM66 12h1v1h-1zM68 12h1v1h-1zM70 12h1v1h-1zM3 13h1v1h-1zM9 13h1v1h-1zM13 13h1v1h-1zM17 13h1v1h-1zM19 13h1v1h-1zM22 13h1v1h-1zM27 13h2v1h-2zM30 13h2v1h-2zM38 13h1v1h-1zM41 13h1v1h-1zM45 13h1v1h-1zM50 13h1v1h-1zM53 13h1v1h-1zM56 13h1v1h-1zM62 13h2v1h-2zM65 13h1v1h-1zM68 13h1v1h-1zM70 13h1v1h-1zM3 14h7v1h-7zM13 14h1v1h-1zM16 14h2v1h-2zM19 14h4v1h-4zM25 14h2v1h-2zM32 14h3v1h-3zM37 14h1v1h-1zM40 14h1v1h-1zM43 14h2v1h-2zM49 14h1v1h-1zM52 14h2v1h-2zM57 14h1v1h-1zM60 14h2v1h-2zM64 14h1v1h-1zM68 14h3v1h-3z" fill="#979797"/></svg>
<div class="a" style="left:354px;top:697px;width:1px;height:13px;background:#979797"></div>
<svg class="a" style="left:363px;top:693px" width="30" height="20"><path d="M17 4h1v1h-1zM2 5h7v1h-7zM17 5h1v1h-1zM2 6h1v1h-1zM8 6h1v1h-1zM12 6h11v1h-11zM2 7h1v1h-1zM8 7h1v1h-1zM17 7h1v1h-1zM2 8h1v1h-1zM8 8h1v1h-1zM17 8h1v1h-1zM2 9h7v1h-7zM13 9h9v1h-9zM2 10h1v1h-1zM8 10h1v1h-1zM17 10h1v1h-1zM2 11h1v1h-1zM8 11h1v1h-1zM15 11h1v1h-1zM18 11h1v1h-1zM21 11h1v1h-1zM2 12h1v1h-1zM8 12h1v1h-1zM13 12h1v1h-1zM15 12h1v1h-1zM18 12h1v1h-1zM20 12h1v1h-1zM22 12h1v1h-1zM2 13h7v1h-7zM13 13h1v1h-1zM15 13h1v1h-1zM20 13h1v1h-1zM22 13h1v1h-1zM2 14h1v1h-1zM8 14h1v1h-1zM12 14h1v1h-1zM16 14h5v1h-5z" fill="#979797"/></svg>
<div class="a" style="left:398px;top:697px;width:1px;height:13px;background:#979797"></div>
<div class="a" style="left:0px;top:715px;width:1024px;height:1px;background:#c9c7bf"></div>
<div class="a" style="left:0px;top:716px;width:1024px;height:22px;background:#eae9e4"></div>
<svg class="a" style="left:3px;top:719px" width="101" height="20"><path d="M1 4h8v1h-8zM16 4h1v1h-1zM19 4h1v1h-1zM25 4h1v1h-1zM40 4h1v1h-1zM51 4h1v1h-1zM57 4h1v1h-1zM63 4h1v1h-1zM68 4h1v1h-1zM85 4h1v1h-1zM87 4h3v1h-3zM92 4h1v1h-1zM8 5h1v1h-1zM16 5h1v1h-1zM20 5h1v1h-1zM23 5h5v1h-5zM29 5h4v1h-4zM34 5h4v1h-4zM40 5h1v1h-1zM52 5h1v1h-1zM54 5h7v1h-7zM63 5h1v1h-1zM69 5h1v1h-1zM85 5h1v1h-1zM89 5h6v1h-6zM2 6h7v1h-7zM11 6h11v1h-11zM25 6h1v1h-1zM29 6h1v1h-1zM32 6h1v1h-1zM34 6h1v1h-1zM37 6h1v1h-1zM40 6h1v1h-1zM52 6h1v1h-1zM57 6h1v1h-1zM61 6h11v1h-11zM73 6h5v1h-5zM81 6h2v1h-2zM85 6h2v1h-2zM88 6h1v1h-1zM92 6h1v1h-1zM94 6h1v1h-1zM8 7h1v1h-1zM16 7h1v1h-1zM23 7h5v1h-5zM29 7h1v1h-1zM31 7h1v1h-1zM34 7h1v1h-1zM37 7h1v1h-1zM39 7h5v1h-5zM55 7h5v1h-5zM63 7h1v1h-1zM66 7h1v1h-1zM68 7h1v1h-1zM71 7h1v1h-1zM73 7h2v1h-2zM79 7h4v1h-4zM84 7h1v1h-1zM88 7h1v1h-1zM90 7h5v1h-5zM1 8h8v1h-8zM13 8h1v1h-1zM16 8h1v1h-1zM19 8h1v1h-1zM25 8h1v1h-1zM29 8h1v1h-1zM32 8h1v1h-1zM34 8h4v1h-4zM40 8h1v1h-1zM43 8h1v1h-1zM50 8h3v1h-3zM57 8h1v1h-1zM63 8h1v1h-1zM65 8h1v1h-1zM68 8h1v1h-1zM73 8h2v1h-2zM81 8h2v1h-2zM84 8h6v1h-6zM92 8h1v1h-1zM94 8h1v1h-1zM7 9h1v1h-1zM14 9h1v1h-1zM16 9h1v1h-1zM18 9h1v1h-1zM22 9h6v1h-6zM29 9h4v1h-4zM34 9h1v1h-1zM37 9h1v1h-1zM40 9h1v1h-1zM43 9h1v1h-1zM52 9h1v1h-1zM54 9h7v1h-7zM63 9h2v1h-2zM66 9h6v1h-6zM73 9h5v1h-5zM81 9h2v1h-2zM85 9h1v1h-1zM89 9h6v1h-6zM0 10h11v1h-11zM15 10h3v1h-3zM24 10h1v1h-1zM27 10h1v1h-1zM29 10h1v1h-1zM34 10h4v1h-4zM40 10h1v1h-1zM43 10h1v1h-1zM52 10h1v1h-1zM55 10h1v1h-1zM59 10h1v1h-1zM62 10h2v1h-2zM67 10h1v1h-1zM70 10h1v1h-1zM73 10h2v1h-2zM81 10h2v1h-2zM84 10h3v1h-3zM89 10h1v1h-1zM92 10h1v1h-1zM2 11h1v1h-1zM7 11h1v1h-1zM14 11h1v1h-1zM16 11h1v1h-1zM18 11h1v1h-1zM23 11h9v1h-9zM34 11h1v1h-1zM37 11h1v1h-1zM40 11h1v1h-1zM43 11h1v1h-1zM46 11h2v1h-2zM52 11h1v1h-1zM55 11h5v1h-5zM61 11h1v1h-1zM63 11h1v1h-1zM66 11h2v1h-2zM70 11h1v1h-1zM73 11h2v1h-2zM81 11h2v1h-2zM85 11h1v1h-1zM87 11h1v1h-1zM89 11h6v1h-6zM3 12h1v1h-1zM7 12h1v1h-1zM13 12h1v1h-1zM16 12h1v1h-1zM19 12h1v1h-1zM24 12h1v1h-1zM27 12h1v1h-1zM31 12h1v1h-1zM34 12h1v1h-1zM36 12h4v1h-4zM43 12h1v1h-1zM46 12h1v1h-1zM52 12h1v1h-1zM55 12h1v1h-1zM59 12h1v1h-1zM63 12h1v1h-1zM68 12h2v1h-2zM73 12h2v1h-2zM79 12h5v1h-5zM85 12h1v1h-1zM88 12h1v1h-1zM92 12h1v1h-1zM5 13h1v1h-1zM7 13h1v1h-1zM11 13h2v1h-2zM16 13h1v1h-1zM20 13h2v1h-2zM24 13h1v1h-1zM27 13h1v1h-1zM30 13h2v1h-2zM33 13h3v1h-3zM39 13h1v1h-1zM41 13h1v1h-1zM43 13h1v1h-1zM46 13h1v1h-1zM52 13h2v1h-2zM55 13h5v1h-5zM63 13h1v1h-1zM67 13h1v1h-1zM69 13h1v1h-1zM85 13h2v1h-2zM88 13h2v1h-2zM92 13h1v1h-1zM6 14h1v1h-1zM15 14h2v1h-2zM27 14h1v1h-1zM38 14h1v1h-1zM42 14h1v1h-1zM52 14h1v1h-1zM55 14h1v1h-1zM59 14h1v1h-1zM61 14h3v1h-3zM65 14h2v1h-2zM70 14h2v1h-2zM85 14h1v1h-1zM87 14h1v1h-1zM90 14h5v1h-5z" fill="#000"/></svg>
<div class="a" style="left:169px;top:718px;width:1px;height:18px;background:#c4c2ba"></div>
<div class="a" style="left:333px;top:718px;width:1px;height:18px;background:#c4c2ba"></div>
<div class="a" style="left:449px;top:718px;width:1px;height:18px;background:#c4c2ba"></div>
<div class="a" style="left:535px;top:718px;width:1px;height:18px;background:#c4c2ba"></div>
<div class="a" style="left:620px;top:718px;width:1px;height:18px;background:#c4c2ba"></div>
<div class="a" style="left:706px;top:718px;width:1px;height:18px;background:#c4c2ba"></div>
<div class="a" style="left:792px;top:718px;width:1px;height:18px;background:#c4c2ba"></div>
<div class="a" style="left:879px;top:718px;width:1px;height:18px;background:#c4c2ba"></div>
<svg class="a" style="left:173px;top:719px" width="48" height="19"><path d="M0 4h5v1h-5zM14 4h4v1h-4zM32 4h2v1h-2zM37 4h1v1h-1zM1 5h1v1h-1zM4 5h2v1h-2zM14 5h1v1h-1zM33 5h1v1h-1zM37 5h1v1h-1zM1 6h1v1h-1zM5 6h1v1h-1zM7 6h4v1h-4zM13 6h4v1h-4zM19 6h4v1h-4zM24 6h2v1h-2zM28 6h2v1h-2zM33 6h1v1h-1zM36 6h4v1h-4zM1 7h1v1h-1zM5 7h1v1h-1zM7 7h1v1h-1zM11 7h1v1h-1zM14 7h1v1h-1zM22 7h1v1h-1zM25 7h1v1h-1zM29 7h1v1h-1zM33 7h1v1h-1zM37 7h1v1h-1zM1 8h1v1h-1zM5 8h7v1h-7zM14 8h1v1h-1zM19 8h4v1h-4zM25 8h1v1h-1zM29 8h1v1h-1zM33 8h1v1h-1zM37 8h1v1h-1zM1 9h1v1h-1zM5 9h1v1h-1zM7 9h1v1h-1zM14 9h1v1h-1zM18 9h1v1h-1zM22 9h1v1h-1zM25 9h1v1h-1zM29 9h1v1h-1zM33 9h1v1h-1zM37 9h1v1h-1zM40 9h1v1h-1zM0 10h5v1h-5zM7 10h5v1h-5zM13 10h4v1h-4zM18 10h6v1h-6zM26 10h10v1h-10zM37 10h4v1h-4z" fill="#000"/></svg>
<svg class="a" style="left:883px;top:721px" width="26" height="13"><path d="M1.5 2V12M4.5 2V12M7.5 2V12M10.5 2V12M13.5 2V12M16.5 2V12M19.5 2V12M22.5 2V12" stroke="#2a8a2a" stroke-width="1.2"/><path d="M1.5 12V10M4.5 12V9M7.5 12V9M10.5 12V8M13.5 12V7M16.5 12V7M19.5 12V6M22.5 12V5" stroke="#d02020" stroke-width="1.2"/></svg>
<svg class="a" style="left:925px;top:719px" width="54" height="19"><path d="M23 3h1v1h-1zM2 4h3v1h-3zM10 4h1v1h-1zM15 4h3v1h-3zM22 4h1v1h-1zM26 4h3v1h-3zM38 4h1v1h-1zM43 4h1v1h-1zM1 5h1v1h-1zM5 5h1v1h-1zM9 5h2v1h-2zM15 5h1v1h-1zM22 5h1v1h-1zM25 5h1v1h-1zM29 5h1v1h-1zM38 5h1v1h-1zM43 5h1v1h-1zM5 6h1v1h-1zM8 6h1v1h-1zM10 6h1v1h-1zM14 6h1v1h-1zM21 6h1v1h-1zM25 6h1v1h-1zM29 6h1v1h-1zM38 6h1v1h-1zM40 6h2v1h-2zM43 6h1v1h-1zM45 6h2v1h-2zM4 7h1v1h-1zM8 7h1v1h-1zM10 7h1v1h-1zM14 7h3v1h-3zM21 7h1v1h-1zM25 7h1v1h-1zM29 7h1v1h-1zM38 7h1v1h-1zM40 7h1v1h-1zM43 7h2v1h-2zM47 7h1v1h-1zM3 8h1v1h-1zM7 8h1v1h-1zM10 8h1v1h-1zM14 8h1v1h-1zM17 8h1v1h-1zM20 8h1v1h-1zM25 8h1v1h-1zM29 8h1v1h-1zM38 8h2v1h-2zM43 8h1v1h-1zM47 8h1v1h-1zM1 9h2v1h-2zM8 9h4v1h-4zM14 9h1v1h-1zM17 9h1v1h-1zM20 9h1v1h-1zM25 9h1v1h-1zM29 9h1v1h-1zM38 9h1v1h-1zM40 9h2v1h-2zM43 9h1v1h-1zM47 9h1v1h-1zM2 10h4v1h-4zM9 10h3v1h-3zM15 10h2v1h-2zM19 10h1v1h-1zM26 10h3v1h-3zM38 10h1v1h-1zM41 10h6v1h-6z" fill="#000"/></svg>
<svg class="a" style="left:1008px;top:722px" width="14" height="14"><path d="M13 2L2 13M13 6L6 13M13 10L10 13" stroke="#b0aea6" stroke-width="1.2"/></svg>
<div class="a" style="left:0px;top:738px;width:1024px;height:30px;background:linear-gradient(#3a7ef0 0,#3270e8 2px,#2a5edc 5px,#2656d6 75%,#2250cc 100%)"></div>
<div class="a" style="left:715px;top:738px;width:309px;height:30px;background:linear-gradient(#28aaf4 0,#16a2f2 3px,#1094ea 80%,#0d86de 100%);border-left:1px solid #0a50b8"></div>
<div class="a" style="left:0px;top:738px;width:98px;height:30px;border-radius:0 11px 11px 0;background:linear-gradient(#5cbc5c 0,#3fa03f 12%,#379a3b 55%,#2f8a2f 90%,#246e24 100%);box-shadow:inset -2px 0 2px #1e5a1e"></div>
<svg class="a" style="left:10px;top:744px" width="22" height="19"><path d="M3 2Q7 0 10 2L9 9Q6 7 2 9Z" fill="#e8541c"/><path d="M11 3Q14 5 18 3L17 10Q14 12 10 10Z" fill="#70c040"/><path d="M2 10Q5 8 9 10L8 17Q5 15 1 17Z" fill="#3a80e8"/><path d="M10 11Q13 13 17 11L16 18Q13 19 9 18Z" fill="#f8c820"/></svg>
<div class="a" style="left:0;top:0;transform:skewX(-14deg);transform-origin:0 760px"><svg class="a" style="left:37px;top:741px" width="46" height="24"><path d="M23 4h2v1h-2zM30 4h2v1h-2zM1 5h14v1h-14zM23 5h2v1h-2zM30 5h2v1h-2zM4 6h2v1h-2zM10 6h2v1h-2zM23 6h2v1h-2zM30 6h2v1h-2zM4 7h2v1h-2zM10 7h2v1h-2zM23 7h2v1h-2zM29 7h2v1h-2zM4 8h2v1h-2zM10 8h2v1h-2zM20 8h7v1h-7zM29 8h2v1h-2zM32 8h2v1h-2zM4 9h2v1h-2zM10 9h2v1h-2zM22 9h2v1h-2zM25 9h2v1h-2zM28 9h2v1h-2zM33 9h2v1h-2zM4 10h2v1h-2zM10 10h2v1h-2zM22 10h2v1h-2zM25 10h11v1h-11zM0 11h16v1h-16zM22 11h2v1h-2zM25 11h2v1h-2zM28 11h2v1h-2zM34 11h2v1h-2zM4 12h2v1h-2zM10 12h2v1h-2zM22 12h2v1h-2zM25 12h2v1h-2zM4 13h2v1h-2zM10 13h2v1h-2zM21 13h2v1h-2zM24 13h2v1h-2zM28 13h7v1h-7zM4 14h2v1h-2zM10 14h2v1h-2zM22 14h4v1h-4zM28 14h2v1h-2zM33 14h2v1h-2zM4 15h2v1h-2zM10 15h2v1h-2zM23 15h2v1h-2zM28 15h2v1h-2zM33 15h2v1h-2zM3 16h2v1h-2zM10 16h2v1h-2zM22 16h4v1h-4zM28 16h2v1h-2zM33 16h2v1h-2zM3 17h2v1h-2zM10 17h2v1h-2zM21 17h2v1h-2zM25 17h2v1h-2zM28 17h2v1h-2zM33 17h2v1h-2zM2 18h2v1h-2zM10 18h2v1h-2zM20 18h2v1h-2zM28 18h7v1h-7zM1 19h2v1h-2zM10 19h2v1h-2zM28 19h2v1h-2zM33 19h2v1h-2z" fill="#fff"/></svg></div>
<svg class="a" style="left:110px;top:745px" width="16" height="16"><rect width="16" height="16" fill="#0a1a90"/><path d="M4 12L8 5L12 12" stroke="#3ef" stroke-width="1.5" fill="none"/><circle cx="8" cy="4" r="2" fill="#fff"/><circle cx="4" cy="12" r="2" fill="#3cf"/><circle cx="12" cy="12" r="2" fill="#fff"/><path d="M1 6H5M11 14H15" stroke="#3cf"/></svg>
<svg class="a" style="left:135px;top:745px" width="16" height="16"><rect width="16" height="16" rx="2" fill="#2a2a2a"/><path d="M3 2L6 6H10L13 2L12.5 10L8 14L3.5 10Z" fill="#e8e8e8"/><path d="M5.5 8L7 9.5M10.5 8L9 9.5" stroke="#222" stroke-width="1.5"/></svg>
<svg class="a" style="left:158px;top:746px" width="18" height="14"><circle cx="4" cy="5" r="2.6" fill="#e01818"/><circle cx="9" cy="3" r="2.6" fill="#e01818"/><circle cx="14" cy="5" r="2.6" fill="#e01818"/><circle cx="6.5" cy="9" r="2.6" fill="#c01010"/><circle cx="11.5" cy="9" r="2.6" fill="#c01010"/><circle cx="9" cy="12" r="2" fill="#a00"/></svg>
<svg class="a" style="left:185px;top:745px" width="8" height="7"><path d="M1 1L3.5 3.5L1 6M4.5 1L7 3.5L4.5 6" stroke="#a8c8ff" stroke-width="1.2" fill="none"/></svg>
<div class="a" style="left:201px;top:742px;width:50px;height:22px;border-radius:3px;background:linear-gradient(#5898f6,#3b7cef 35%,#3574ec);border:1px solid #2a5ad0;border-top-color:#78acff;border-left-color:#5c94f4"></div>
<svg class="a" style="left:211px;top:746px" width="17" height="15"><rect x="0.5" y="0.5" width="11" height="9" fill="#e8f4ff" stroke="#5a90c8"/><rect x="1" y="1" width="10" height="2" fill="#8ab8e8"/><rect x="4.5" y="4.5" width="11" height="9" fill="#f4faff" stroke="#4a80c0"/><rect x="5" y="5" width="10" height="2" fill="#7aa8e0"/><path d="M6 11L8 9L10 11L12 9L14 11" stroke="#2a6fb8" fill="none"/></svg>
<svg class="a" style="left:227px;top:745px" width="17" height="21"><path d="M3 5h3v1h-3zM5 6h1v1h-1zM5 7h1v1h-1zM5 8h1v1h-1zM5 9h1v1h-1zM5 10h1v1h-1zM5 11h1v1h-1zM3 12h5v1h-5zM9 12h1v1h-1z" fill="#fff"/></svg>
<div class="a" style="left:253px;top:742px;width:50px;height:22px;border-radius:3px;background:linear-gradient(#5898f6,#3b7cef 35%,#3574ec);border:1px solid #2a5ad0;border-top-color:#78acff;border-left-color:#5c94f4"></div>
<svg class="a" style="left:263px;top:746px" width="17" height="15"><rect x="0.5" y="0.5" width="11" height="9" fill="#e8f4ff" stroke="#5a90c8"/><rect x="1" y="1" width="10" height="2" fill="#8ab8e8"/><rect x="4.5" y="4.5" width="11" height="9" fill="#f4faff" stroke="#4a80c0"/><rect x="5" y="5" width="10" height="2" fill="#7aa8e0"/><path d="M6 11L8 9L10 11L12 9L14 11" stroke="#2a6fb8" fill="none"/></svg>
<svg class="a" style="left:279px;top:745px" width="17" height="21"><path d="M3 5h3v1h-3zM5 6h1v1h-1zM5 7h1v1h-1zM5 8h1v1h-1zM5 9h1v1h-1zM5 10h1v1h-1zM5 11h1v1h-1zM3 12h5v1h-5zM9 12h1v1h-1z" fill="#fff"/></svg>
<div class="a" style="left:305px;top:742px;width:50px;height:22px;border-radius:3px;background:linear-gradient(#5898f6,#3b7cef 35%,#3574ec);border:1px solid #2a5ad0;border-top-color:#78acff;border-left-color:#5c94f4"></div>
<svg class="a" style="left:314px;top:746px" width="18" height="14"><circle cx="4" cy="5" r="2.4" fill="#e01818"/><circle cx="9" cy="3" r="2.4" fill="#e01818"/><circle cx="14" cy="5" r="2.4" fill="#e01818"/><circle cx="6.5" cy="9" r="2.4" fill="#c01010"/><circle cx="11.5" cy="9" r="2.4" fill="#c01010"/><circle cx="9" cy="12" r="2" fill="#900"/></svg>
<svg class="a" style="left:331px;top:745px" width="15" height="21"><path d="M5 5h3v1h-3zM4 6h1v1h-1zM8 6h1v1h-1zM3 7h1v1h-1zM3 8h1v1h-1zM3 9h1v1h-1zM3 10h1v1h-1zM4 11h1v1h-1zM8 11h1v1h-1zM5 12h3v1h-3z" fill="#fff"/></svg>
<div class="a" style="left:357px;top:742px;width:50px;height:22px;border-radius:3px;background:linear-gradient(#5898f6,#3b7cef 35%,#3574ec);border:1px solid #2a5ad0;border-top-color:#78acff;border-left-color:#5c94f4"></div>
<svg class="a" style="left:366px;top:746px" width="18" height="14"><path d="M1 13L6 6L10 9L16 2V13Z" fill="#1a3ad0"/><path d="M1 11L6 8L10 10L17 3" stroke="#e02020" stroke-width="1.4" fill="none"/></svg>
<svg class="a" style="left:383px;top:745px" width="15" height="21"><path d="M5 5h1v1h-1zM4 6h1v1h-1zM6 6h1v1h-1zM4 7h1v1h-1zM6 7h1v1h-1zM4 8h1v1h-1zM6 8h1v1h-1zM3 9h1v1h-1zM7 9h1v1h-1zM3 10h5v1h-5zM3 11h1v1h-1zM7 11h1v1h-1zM2 12h1v1h-1zM8 12h1v1h-1z" fill="#fff"/></svg>
<div class="a" style="left:409px;top:742px;width:50px;height:22px;border-radius:3px;background:linear-gradient(#5898f6,#3b7cef 35%,#3574ec);border:1px solid #2a5ad0;border-top-color:#78acff;border-left-color:#5c94f4"></div>
<svg class="a" style="left:418px;top:745px" width="18" height="16"><rect x="5.5" y="1.5" width="8" height="13" fill="#f0e070" stroke="#806010"/><path d="M7 4H12M7 6H12M7 8H12" stroke="#806010"/><circle cx="4" cy="5" r="3.2" fill="#2a9a2a" stroke="#0a5a0a"/><path d="M1 15H17" stroke="#333"/></svg>
<svg class="a" style="left:435px;top:745px" width="15" height="21"><path d="M5 5h4v1h-4zM4 6h1v1h-1zM9 6h1v1h-1zM3 7h1v1h-1zM3 8h1v1h-1zM3 9h1v1h-1zM7 9h3v1h-3zM3 10h1v1h-1zM9 10h1v1h-1zM4 11h1v1h-1zM9 11h1v1h-1zM5 12h4v1h-4z" fill="#fff"/></svg>
<div class="a" style="left:461px;top:742px;width:50px;height:22px;border-radius:3px;background:linear-gradient(#5898f6,#3b7cef 35%,#3574ec);border:1px solid #2a5ad0;border-top-color:#78acff;border-left-color:#5c94f4"></div>
<svg class="a" style="left:470px;top:745px" width="18" height="16"><path d="M3.5 1.5H11L14.5 5V14.5H3.5Z" fill="#fff" stroke="#667"/><circle cx="6.5" cy="9" r="4.5" fill="#3a7ae0"/><circle cx="6.5" cy="9" r="2" fill="#fff"/><path d="M1 7Q7 3 12 6" stroke="#f0c020" stroke-width="1.2" fill="none"/></svg>
<svg class="a" style="left:490px;top:743px" width="18" height="20"><path d="M2 4h1v1h-1zM7 4h1v1h-1zM2 5h1v1h-1zM7 5h1v1h-1zM2 6h4v1h-4zM7 6h1v1h-1zM2 7h1v1h-1zM5 7h1v1h-1zM7 7h1v1h-1zM1 8h1v1h-1zM5 8h1v1h-1zM7 8h2v1h-2zM0 9h1v1h-1zM2 9h1v1h-1zM5 9h1v1h-1zM7 9h1v1h-1zM9 9h1v1h-1zM3 10h2v1h-2zM7 10h1v1h-1zM10 10h1v1h-1zM4 11h1v1h-1zM7 11h1v1h-1zM3 12h1v1h-1zM7 12h1v1h-1zM2 13h1v1h-1zM7 13h1v1h-1zM1 14h1v1h-1zM7 14h1v1h-1z" fill="#fff"/></svg>
<div class="a" style="left:513px;top:742px;width:50px;height:22px;border-radius:3px;background:linear-gradient(#5898f6,#3b7cef 35%,#3574ec);border:1px solid #2a5ad0;border-top-color:#78acff;border-left-color:#5c94f4"></div>
<svg class="a" style="left:522px;top:745px" width="18" height="16"><path d="M3.5 1.5H11L14.5 5V14.5H3.5Z" fill="#fff" stroke="#667"/><circle cx="6.5" cy="9" r="4.5" fill="#3a7ae0"/><circle cx="6.5" cy="9" r="2" fill="#fff"/><path d="M1 7Q7 3 12 6" stroke="#f0c020" stroke-width="1.2" fill="none"/></svg>
<svg class="a" style="left:542px;top:743px" width="18" height="20"><path d="M3 4h1v1h-1zM6 4h1v1h-1zM9 4h1v1h-1zM0 5h4v1h-4zM6 5h3v1h-3zM3 6h1v1h-1zM6 6h1v1h-1zM10 6h1v1h-1zM2 7h2v1h-2zM6 7h5v1h-5zM0 8h2v1h-2zM2 9h7v1h-7zM2 10h1v1h-1zM8 10h1v1h-1zM2 11h7v1h-7zM2 12h1v1h-1zM8 12h1v1h-1zM2 13h7v1h-7zM2 14h1v1h-1zM8 14h1v1h-1z" fill="#fff"/></svg>
<svg class="a" style="left:576px;top:747px" width="18" height="12"><rect x="0.5" y="2.5" width="17" height="9" fill="#eee" stroke="#333"/><path d="M3 5H15M3 7H15M5 9H13" stroke="#555" stroke-dasharray="1 1"/></svg>
<svg class="a" style="left:600px;top:744px" width="15" height="17"><rect x="0.5" y="0.5" width="14" height="14" fill="#fff8b0" stroke="#222"/><path d="M4 5Q4 2 7.5 2Q11 2 11 5Q11 7 7.5 8V10M7.5 11.5V13" stroke="#000" stroke-width="1.8" fill="none"/><path d="M3 15L5 17L7 15" fill="#fff8b0" stroke="#222"/></svg>
<div class="a t" style="left:625px;top:745px;font-size:12px;color:#c0d4ff">:</div>
<svg class="a" style="left:637px;top:743px" width="54" height="20"><path d="M4 4h1v1h-1zM6 4h1v1h-1zM8 4h1v1h-1zM15 4h1v1h-1zM19 4h1v1h-1zM29 4h1v1h-1zM37 4h3v1h-3zM43 4h1v1h-1zM1 5h3v1h-3zM6 5h1v1h-1zM9 5h1v1h-1zM14 5h1v1h-1zM19 5h1v1h-1zM29 5h1v1h-1zM37 5h1v1h-1zM39 5h1v1h-1zM44 5h1v1h-1zM3 6h1v1h-1zM6 6h1v1h-1zM13 6h4v1h-4zM18 6h5v1h-5zM25 6h9v1h-9zM37 6h1v1h-1zM39 6h1v1h-1zM41 6h6v1h-6zM0 7h11v1h-11zM13 7h1v1h-1zM16 7h2v1h-2zM22 7h1v1h-1zM25 7h1v1h-1zM29 7h1v1h-1zM33 7h1v1h-1zM37 7h3v1h-3zM3 8h1v1h-1zM6 8h1v1h-1zM13 8h1v1h-1zM16 8h1v1h-1zM22 8h1v1h-1zM25 8h9v1h-9zM37 8h1v1h-1zM39 8h1v1h-1zM41 8h1v1h-1zM44 8h1v1h-1zM46 8h1v1h-1zM3 9h2v1h-2zM6 9h1v1h-1zM9 9h1v1h-1zM13 9h4v1h-4zM18 9h1v1h-1zM22 9h1v1h-1zM25 9h1v1h-1zM29 9h1v1h-1zM33 9h1v1h-1zM37 9h1v1h-1zM39 9h1v1h-1zM41 9h2v1h-2zM44 9h1v1h-1zM46 9h1v1h-1zM2 10h2v1h-2zM6 10h1v1h-1zM8 10h1v1h-1zM13 10h1v1h-1zM16 10h1v1h-1zM19 10h1v1h-1zM22 10h1v1h-1zM25 10h1v1h-1zM29 10h1v1h-1zM33 10h1v1h-1zM37 10h3v1h-3zM41 10h1v1h-1zM43 10h1v1h-1zM46 10h1v1h-1zM0 11h2v1h-2zM3 11h1v1h-1zM7 11h1v1h-1zM13 11h1v1h-1zM16 11h1v1h-1zM19 11h1v1h-1zM22 11h1v1h-1zM25 11h9v1h-9zM37 11h1v1h-1zM39 11h1v1h-1zM41 11h2v1h-2zM44 11h1v1h-1zM46 11h1v1h-1zM3 12h1v1h-1zM6 12h2v1h-2zM10 12h1v1h-1zM13 12h1v1h-1zM16 12h1v1h-1zM22 12h1v1h-1zM29 12h1v1h-1zM34 12h1v1h-1zM37 12h1v1h-1zM39 12h1v1h-1zM41 12h1v1h-1zM46 12h1v1h-1zM1 13h1v1h-1zM3 13h1v1h-1zM5 13h1v1h-1zM8 13h1v1h-1zM10 13h1v1h-1zM13 13h4v1h-4zM22 13h1v1h-1zM29 13h1v1h-1zM34 13h1v1h-1zM36 13h1v1h-1zM39 13h1v1h-1zM41 13h6v1h-6zM2 14h1v1h-1zM9 14h2v1h-2zM13 14h1v1h-1zM16 14h1v1h-1zM20 14h2v1h-2zM30 14h5v1h-5zM36 14h1v1h-1zM38 14h2v1h-2zM41 14h1v1h-1zM46 14h1v1h-1z" fill="#a8bef2"/></svg>
<svg class="a" style="left:695px;top:741px" width="8" height="7"><path d="M1 1L3.5 3.5L1 6M4.5 1L7 3.5L4.5 6" stroke="#a8c8ff" stroke-width="1.2" fill="none"/></svg>
<div class="a" style="left:707px;top:744px;width:19px;height:19px;border-radius:50%;background:radial-gradient(circle at 40% 35%,#8cc8ff,#2a7ae0 70%);border:1px solid #d8e8ff"></div>
<svg class="a" style="left:711px;top:748px" width="11" height="11"><path d="M7 2L3.5 5.5L7 9" stroke="#fff" stroke-width="2.2" fill="none"/></svg>
<svg class="a" style="left:727px;top:745px" width="16" height="17"><rect x="0" y="0" width="15" height="16" fill="#f8f8f8"/><path d="M8 1V6L6 9L7 15M8 6L11 10M6 9L3 15" stroke="#b02020" stroke-width="2" fill="none"/><path d="M9 11L14 14" stroke="#888" stroke-width="1.5"/></svg>
<svg class="a" style="left:745px;top:744px" width="17" height="18"><path d="M8 1V3" stroke="#222" stroke-width="1.5"/><path d="M6 5H10M5 8H11M4 11H13M2 14H15" stroke="#e02020" stroke-width="1.6"/><path d="M1 16H16" stroke="#1a3ad0" stroke-width="2"/><path d="M1 12Q2 16 6 16" stroke="#1a3ad0" stroke-width="1.5" fill="none"/></svg>
<svg class="a" style="left:763px;top:745px" width="17" height="16"><path d="M2 8H15M8.5 1V15M3 3L14 13M14 3L3 13" stroke="#f8e020" stroke-width="2.2"/><path d="M5 6L12 10M12 6L5 10" stroke="#222" stroke-width="1.2"/></svg>
<svg class="a" style="left:780px;top:745px" width="17" height="16"><rect x="6.5" y="1.5" width="8" height="6" fill="#c8dcf0" stroke="#5a7090"/><rect x="1.5" y="7.5" width="8" height="6" fill="#dce8f8" stroke="#5a7090"/><path d="M10 9H14V14" stroke="#8aa0c0" fill="none"/></svg>
<svg class="a" style="left:800px;top:746px" width="13" height="14"><rect x="0.5" y="0.5" width="12" height="13" fill="#10d010" stroke="#000"/><path d="M2 3H11M2 5H11" stroke="#0a5a0a" stroke-dasharray="1 1"/></svg>
<svg class="a" style="left:816px;top:745px" width="17" height="16"><path d="M1 1L16 8L1 15Z" fill="#10c010" stroke="#000"/><path d="M1 12L16 8" stroke="#000" stroke-width="1.5"/></svg>
<svg class="a" style="left:836px;top:746px" width="13" height="14"><rect x="0.5" y="0.5" width="12" height="13" fill="#f8f020" stroke="#000"/><path d="M2 3H11" stroke="#222" stroke-dasharray="1 1"/></svg>
<svg class="a" style="left:855px;top:745px" width="13" height="16"><path d="M6.5 1L12 6H1Z" fill="#20b020"/><path d="M6.5 15L12 10H1Z" fill="#20a020"/></svg>
<svg class="a" style="left:870px;top:745px" width="18" height="16"><path d="M9 1V15M4 14H14M2 5H16" stroke="#111" stroke-width="1.5"/><path d="M1 9Q3.5 12 6 9M12 9Q14.5 12 17 9" stroke="#d02020" stroke-width="1.6" fill="#d02020"/></svg>
<svg class="a" style="left:888px;top:745px" width="17" height="16"><rect x="6.5" y="1.5" width="8" height="6" fill="#c8dcf0" stroke="#5a7090"/><rect x="1.5" y="7.5" width="8" height="6" fill="#dce8f8" stroke="#5a7090"/><path d="M10 9H14V14" stroke="#8aa0c0" fill="none"/></svg>
<svg class="a" style="left:905px;top:745px" width="16" height="16"><text x="1" y="14" font-size="17" font-weight="bold" fill="#1a3ad0" font-family="Liberation Sans">e</text><path d="M1 6Q8 1 15 5" stroke="#1a3ad0" stroke-width="1.2" fill="none"/></svg>
<svg class="a" style="left:922px;top:744px" width="17" height="17"><rect x="1.5" y="6.5" width="14" height="9" fill="#fff" stroke="#1a3ad0"/><path d="M4 8V14M7 8V14M10 8V14M13 8V14" stroke="#d02020" stroke-width="1.4"/><circle cx="12" cy="4" r="3" fill="#f08020"/></svg>
<svg class="a" style="left:940px;top:744px" width="17" height="17"><circle cx="8.5" cy="8.5" r="7.5" fill="#20a020" stroke="#0a3a8a"/><circle cx="8.5" cy="6.5" r="3" fill="#d02020"/><path d="M2 12H15" stroke="#f8e020" stroke-width="2"/></svg>
<svg class="a" style="left:957px;top:744px" width="17" height="17"><circle cx="8.5" cy="8.5" r="7.5" fill="#d01818" stroke="#901010"/><path d="M4 9Q8 3 13 6M5 12Q9 8 13 10" stroke="#fff" stroke-width="1.3" fill="none"/></svg>
<svg class="a" style="left:980px;top:744px" width="35" height="20"><path d="M3 5h3v1h-3zM10 5h3v1h-3zM18 5h3v1h-3zM25 5h3v1h-3zM5 6h1v1h-1zM9 6h1v1h-1zM13 6h1v1h-1zM20 6h1v1h-1zM24 6h1v1h-1zM28 6h1v1h-1zM5 7h1v1h-1zM13 7h1v1h-1zM15 7h1v1h-1zM20 7h1v1h-1zM24 7h1v1h-1zM28 7h1v1h-1zM5 8h1v1h-1zM10 8h3v1h-3zM20 8h1v1h-1zM25 8h3v1h-3zM5 9h1v1h-1zM13 9h1v1h-1zM20 9h1v1h-1zM24 9h1v1h-1zM28 9h1v1h-1zM5 10h1v1h-1zM9 10h1v1h-1zM13 10h1v1h-1zM20 10h1v1h-1zM24 10h1v1h-1zM28 10h1v1h-1zM3 11h5v1h-5zM10 11h3v1h-3zM15 11h1v1h-1zM18 11h5v1h-5zM25 11h3v1h-3z" fill="#fff"/></svg>
</body></html>
